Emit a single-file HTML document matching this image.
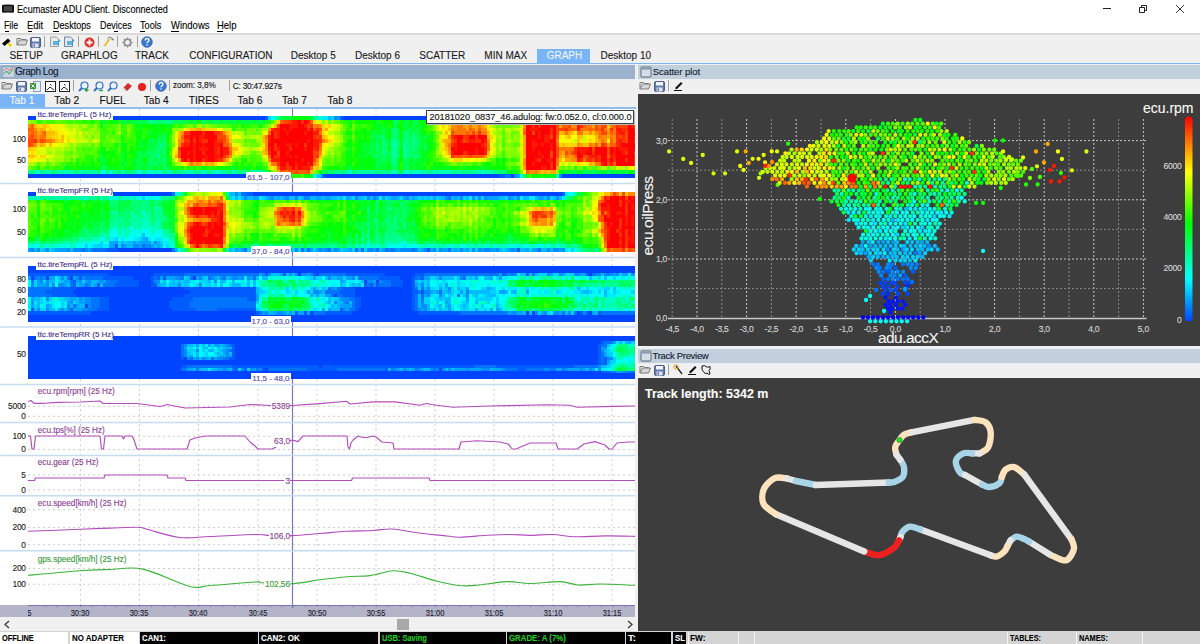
<!DOCTYPE html>
<html><head><meta charset="utf-8"><title>Ecumaster ADU Client</title>
<style>
html,body{margin:0;padding:0;}
body{width:1200px;height:644px;overflow:hidden;position:relative;background:#f0f0f0;font-family:"Liberation Sans", sans-serif;}
.t{position:absolute;white-space:nowrap;line-height:1;font-family:"Liberation Sans", sans-serif;-webkit-text-stroke:0.12px currentColor;}
.b{position:absolute;}
.s{position:absolute;overflow:visible;}
</style></head><body>
<div class="b" style="left:0px;top:0px;width:1200px;height:34px;background:#fff;"></div>
<svg class="s" style="left:1px;top:4px" width="14" height="10"><path d="M1 2Q1 0.8 2.5 0.8Q7 0 11.5 0.8Q13 0.8 13 2V7.5Q13 8.8 11.5 8.8Q7 8 2.5 8.8Q1 8.8 1 7.5Z" fill="#111"/><rect x="2.8" y="2.2" width="8.4" height="5" fill="#454545"/></svg>
<div class="t" style="left:17px;top:3.65px;font-size:11.4px;color:#000;font-weight:normal;letter-spacing:0px;transform:scaleX(0.7997);transform-origin:0 0;">Ecumaster ADU Client. Disconnected</div>
<svg class="s" style="left:1095px;top:0px" width="105" height="20"><path d="M8 8.5h8" stroke="#222" stroke-width="1"/><path d="M44.5 7.5h5v5h-5z M46.5 7.5v-2h5v5h-2" fill="none" stroke="#222" stroke-width="1"/><path d="M81 5l8 8M89 5l-8 8" stroke="#222" stroke-width="0.9"/></svg>
<div class="t" style="left:4.3px;top:20.36px;font-size:10.8px;color:#000;font-weight:normal;letter-spacing:0px;transform:scaleX(0.8103);transform-origin:0 0;">File</div>
<div class="t" style="left:27.3px;top:20.36px;font-size:10.8px;color:#000;font-weight:normal;letter-spacing:0px;transform:scaleX(0.8705);transform-origin:0 0;">Edit</div>
<div class="t" style="left:52.6px;top:20.36px;font-size:10.8px;color:#000;font-weight:normal;letter-spacing:0px;transform:scaleX(0.8419);transform-origin:0 0;">Desktops</div>
<div class="t" style="left:99.6px;top:20.36px;font-size:10.8px;color:#000;font-weight:normal;letter-spacing:0px;transform:scaleX(0.8227);transform-origin:0 0;">Devices</div>
<div class="t" style="left:140px;top:20.36px;font-size:10.8px;color:#000;font-weight:normal;letter-spacing:0px;transform:scaleX(0.8488);transform-origin:0 0;">Tools</div>
<div class="t" style="left:170.5px;top:20.36px;font-size:10.8px;color:#000;font-weight:normal;letter-spacing:0px;transform:scaleX(0.8788);transform-origin:0 0;">Windows</div>
<div class="t" style="left:217px;top:20.36px;font-size:10.8px;color:#000;font-weight:normal;letter-spacing:0px;transform:scaleX(0.8779);transform-origin:0 0;">Help</div>
<div class="b" style="left:4.5px;top:31px;width:4px;height:1px;background:#000;"></div>
<div class="b" style="left:27.5px;top:31px;width:4px;height:1px;background:#000;"></div>
<div class="b" style="left:52.8px;top:31px;width:6px;height:1px;background:#000;"></div>
<div class="b" style="left:114px;top:31px;width:4px;height:1px;background:#000;"></div>
<div class="b" style="left:140.3px;top:31px;width:5px;height:1px;background:#000;"></div>
<div class="b" style="left:170.7px;top:31px;width:8px;height:1px;background:#000;"></div>
<div class="b" style="left:217.3px;top:31px;width:6px;height:1px;background:#000;"></div>
<div class="b" style="left:0px;top:33px;width:1200px;height:1.5px;background:#d9d9d9;"></div>
<div class="b" style="left:0px;top:34.5px;width:1200px;height:29px;background:#f0f0f0;"></div>
<div class="b" style="left:537px;top:49px;width:53px;height:14px;background:#78b4f6;"></div>
<div class="t" style="left:9.5px;top:50.83px;font-size:10px;color:#1a1a1a;font-weight:normal;letter-spacing:0px;">SETUP</div>
<div class="t" style="left:61px;top:50.83px;font-size:10px;color:#1a1a1a;font-weight:normal;letter-spacing:0px;">GRAPHLOG</div>
<div class="t" style="left:135px;top:50.83px;font-size:10px;color:#1a1a1a;font-weight:normal;letter-spacing:0px;">TRACK</div>
<div class="t" style="left:189.3px;top:50.83px;font-size:10px;color:#1a1a1a;font-weight:normal;letter-spacing:0px;">CONFIGURATION</div>
<div class="t" style="left:290.7px;top:50.83px;font-size:10px;color:#1a1a1a;font-weight:normal;letter-spacing:0px;">Desktop 5</div>
<div class="t" style="left:355px;top:50.83px;font-size:10px;color:#1a1a1a;font-weight:normal;letter-spacing:0px;">Desktop 6</div>
<div class="t" style="left:419.3px;top:50.83px;font-size:10px;color:#1a1a1a;font-weight:normal;letter-spacing:0px;">SCATTER</div>
<div class="t" style="left:484.3px;top:50.83px;font-size:10px;color:#1a1a1a;font-weight:normal;letter-spacing:0px;">MIN MAX</div>
<div class="t" style="left:546.7px;top:50.83px;font-size:10px;color:#eef4ff;font-weight:normal;letter-spacing:0px;">GRAPH</div>
<div class="t" style="left:600.5px;top:50.83px;font-size:10px;color:#1a1a1a;font-weight:normal;letter-spacing:0px;">Desktop 10</div>
<div class="b" style="left:0px;top:63.2px;width:1200px;height:1.3px;background:#7db6ee;"></div>
<svg class="s" style="left:1px;top:36px" width="12" height="11" viewBox="0 0 12 11"><path d="M1 7.5l6-5 2.5 2.5-6 5z" fill="#000"/><path d="M7.5 8l3 1.5-1.5 1.5z M7 7.5l3 0.5-1 2z" fill="#f0e020" stroke="#e8d800" stroke-width="1"/></svg>
<svg class="s" style="left:15.5px;top:36px" width="12" height="11" viewBox="0 0 12 11"><path d="M1 2.5h3.5l1 1h4v2" fill="none" stroke="#7a7a7a" stroke-width="1"/><path d="M1 2.5v6.5h8.5l2-5h-8l-2.5 5" fill="#d8d8d8" stroke="#7a7a7a" stroke-width="1"/></svg>
<svg class="s" style="left:30px;top:36.5px" width="11" height="11" viewBox="0 0 11 11"><rect x="0.5" y="0.5" width="10" height="10" rx="1.5" fill="#5f7aa8" stroke="#4a5f8a"/><rect x="2" y="1" width="7" height="3.5" fill="#f2f4f8"/><rect x="2.5" y="6.5" width="6" height="4" fill="#dfe6f0"/><rect x="3.5" y="7.5" width="1.5" height="2" fill="#4a5f8a"/></svg>
<div class="b" style="left:44px;top:36px;width:1px;height:11px;background:#a0a0a0"></div>
<svg class="s" style="left:50px;top:36px" width="11" height="11" viewBox="0 0 11 11"><path d="M0.5 1h6l2 2v7.5h-8z" fill="#e8e8e8" stroke="#a0a0a0" stroke-width="1"/><path d="M3 6h5l2-2M3 8h6" stroke="#30a0d8" stroke-width="1.3" fill="none"/></svg>
<svg class="s" style="left:64px;top:36px" width="11" height="11" viewBox="0 0 11 11"><path d="M0.5 1h6l2 2v7.5h-8z" fill="#e8e8e8" stroke="#6d85b0" stroke-width="1"/><path d="M3 6h5l2-2M3 8h6" stroke="#30a0d8" stroke-width="1.3" fill="none"/></svg>
<div class="b" style="left:78px;top:36px;width:1px;height:11px;background:#a0a0a0"></div>
<svg class="s" style="left:83.5px;top:36.5px" width="11" height="11" viewBox="0 0 11 11"><circle cx="5.5" cy="5.5" r="5" fill="#e0302a"/><path d="M5.5 2.5v6M2.5 5.5h6" stroke="#fff" stroke-width="1.8"/></svg>
<div class="b" style="left:97.5px;top:36px;width:1px;height:11px;background:#a0a0a0"></div>
<svg class="s" style="left:103px;top:36px" width="11" height="11" viewBox="0 0 11 11"><path d="M1.5 10l5-7" stroke="#e8b820" stroke-width="1.8"/><path d="M4.5 2.5l2-1.5 3 1.5 1 1.5-2-0.5" fill="none" stroke="#707070" stroke-width="1"/></svg>
<div class="b" style="left:117px;top:36px;width:1px;height:11px;background:#a0a0a0"></div>
<svg class="s" style="left:122px;top:36.5px" width="11" height="11" viewBox="0 0 11 11"><circle cx="5.5" cy="5.5" r="3.2" fill="none" stroke="#909090" stroke-width="1.6"/><path d="M5.5 0.5v2M5.5 8.5v2M0.5 5.5h2M8.5 5.5h2M2 2l1.4 1.4M7.6 7.6l1.4 1.4M9 2l-1.4 1.4M3.4 7.6l-1.4 1.4" stroke="#909090" stroke-width="1.4"/></svg>
<div class="b" style="left:136.5px;top:36px;width:1px;height:11px;background:#a0a0a0"></div>
<svg class="s" style="left:141px;top:36px" width="12" height="12" viewBox="0 0 12 12"><circle cx="6" cy="6" r="5.3" fill="#3a78d0" stroke="#2a5aa8" stroke-width="0.7"/><path d="M4.2 4.5q0-2 1.9-2t1.9 1.7q0 1-1.2 1.6-0.7 0.4-0.7 1.4" fill="none" stroke="#fff" stroke-width="1.3"/><circle cx="6" cy="9" r="0.8" fill="#fff"/></svg>
<div class="b" style="left:635px;top:64.5px;width:3px;height:567px;background:#f0f0f0;"></div>
<div class="b" style="left:0px;top:64.5px;width:635px;height:14px;background:#9bb2cf;"></div>
<svg class="s" style="left:1.5px;top:65.5px" width="13" height="12" viewBox="0 0 13 12"><rect x="0.5" y="1" width="12" height="10.5" fill="#c8d4e4" stroke="#8896a8" stroke-width="0.6"/><path d="M1.5 8l3-3 2.5 3 4-5" stroke="#30a040" stroke-width="1" fill="none"/><path d="M1.5 4.5l3-2 2.5 2 4-3" stroke="#e04030" stroke-width="1" fill="none" stroke-dasharray="1.5 1"/></svg>
<div class="t" style="left:15px;top:67.13px;font-size:10px;color:#10202e;font-weight:normal;letter-spacing:-0.45px;">Graph Log</div>
<div class="b" style="left:0px;top:78.5px;width:635px;height:29px;background:#f0f0f0;"></div>
<svg class="s" style="left:1px;top:80px" width="12" height="11" viewBox="0 0 12 11"><path d="M1 2.5h3.5l1 1h4v2" fill="none" stroke="#7a7a7a" stroke-width="1"/><path d="M1 2.5v6.5h8.5l2-5h-8l-2.5 5" fill="#d8d8d8" stroke="#7a7a7a" stroke-width="1"/></svg>
<svg class="s" style="left:16px;top:80.5px" width="11" height="11" viewBox="0 0 11 11"><rect x="0.5" y="0.5" width="10" height="10" rx="1.5" fill="#5f7aa8" stroke="#4a5f8a"/><rect x="2" y="1" width="7" height="3.5" fill="#f2f4f8"/><rect x="2.5" y="6.5" width="6" height="4" fill="#dfe6f0"/><rect x="3.5" y="7.5" width="1.5" height="2" fill="#4a5f8a"/></svg>
<svg class="s" style="left:30px;top:80.5px" width="11" height="11" viewBox="0 0 11 11"><rect x="3.5" y="0.5" width="7" height="10" fill="#e6eef8" stroke="#8aa0c0"/><rect x="0" y="2" width="6" height="6" fill="#3a9a3a"/><path d="M1.5 3.5l3 3M4.5 3.5l-3 3" stroke="#fff" stroke-width="1"/></svg>
<svg class="s" style="left:44.5px;top:80.5px" width="11" height="11" viewBox="0 0 11 11"><rect x="0.5" y="0.5" width="10" height="10" fill="#fff" stroke="#222"/><path d="M2 9l3-3 4 3M5 3l1.5 1.5" stroke="#222" stroke-width="1" fill="none"/></svg>
<svg class="s" style="left:58.5px;top:80.5px" width="11" height="11" viewBox="0 0 11 11"><rect x="0.5" y="0.5" width="10" height="10" fill="#fff" stroke="#222"/><path d="M2 9l3-3 4 3M5 3l1.5 1.5" stroke="#222" stroke-width="1" fill="none"/></svg>
<div class="b" style="left:73px;top:80px;width:1px;height:11px;background:#a0a0a0"></div>
<svg class="s" style="left:78px;top:80.5px" width="11" height="11" viewBox="0 0 11 11"><circle cx="6.5" cy="4.5" r="3.5" fill="#e8f0f8" stroke="#3070c0" stroke-width="1.2"/><path d="M4 7l-3 3" stroke="#3070c0" stroke-width="2"/><path d="M6.5 9h4M8.5 7v4" stroke="#20a040" stroke-width="1.3"/></svg>
<svg class="s" style="left:92.5px;top:80.5px" width="11" height="11" viewBox="0 0 11 11"><circle cx="6.5" cy="4.5" r="3.5" fill="#e8f0f8" stroke="#3070c0" stroke-width="1.2"/><path d="M4 7l-3 3" stroke="#3070c0" stroke-width="2"/><path d="M6 9.5h4" stroke="#20a040" stroke-width="1.3"/></svg>
<svg class="s" style="left:106.5px;top:80.5px" width="11" height="11" viewBox="0 0 11 11"><circle cx="6.5" cy="4.5" r="3.5" fill="#e8f0f8" stroke="#3070c0" stroke-width="1.2"/><path d="M4 7l-3 3" stroke="#3070c0" stroke-width="2"/></svg>
<svg class="s" style="left:122px;top:80.5px" width="11" height="11" viewBox="0 0 11 11"><path d="M1 7l5-5 4 3-5 5z" fill="#d03030"/><path d="M1 7l2.5 3" stroke="#ddd" stroke-width="2"/></svg>
<svg class="s" style="left:136.5px;top:81.5px" width="10" height="10" viewBox="0 0 10 10"><circle cx="5" cy="5" r="4" fill="#e82020"/></svg>
<div class="b" style="left:150px;top:80px;width:1px;height:11px;background:#a0a0a0"></div>
<svg class="s" style="left:154.5px;top:80px" width="12" height="12" viewBox="0 0 12 12"><circle cx="6" cy="6" r="5.3" fill="#3a78d0" stroke="#2a5aa8" stroke-width="0.7"/><path d="M4.2 4.5q0-2 1.9-2t1.9 1.7q0 1-1.2 1.6-0.7 0.4-0.7 1.4" fill="none" stroke="#fff" stroke-width="1.3"/><circle cx="6" cy="9" r="0.8" fill="#fff"/></svg>
<div class="b" style="left:169px;top:80px;width:1px;height:11px;background:#a0a0a0"></div>
<div class="b" style="left:228.5px;top:80px;width:1px;height:11px;background:#a0a0a0"></div>
<div class="t" style="left:173px;top:82.36px;font-size:8.2px;color:#111;font-weight:normal;letter-spacing:-0.05px;">zoom: 3,8%</div>
<div class="t" style="left:232.7px;top:82.19px;font-size:8.4px;color:#111;font-weight:normal;letter-spacing:-0.25px;">C: 30:47.927s</div>
<div class="b" style="left:0px;top:93.6px;width:45px;height:13.8px;background:#78b4f6;"></div>
<div class="t" style="left:9.4px;top:95.97px;font-size:10.2px;color:#f4f8ff;font-weight:normal;letter-spacing:0px;">Tab 1</div>
<div class="t" style="left:54.3px;top:95.97px;font-size:10.2px;color:#111;font-weight:normal;letter-spacing:0px;">Tab 2</div>
<div class="t" style="left:99.6px;top:95.97px;font-size:10.2px;color:#111;font-weight:normal;letter-spacing:0px;">FUEL</div>
<div class="t" style="left:143.7px;top:95.97px;font-size:10.2px;color:#111;font-weight:normal;letter-spacing:0px;">Tab 4</div>
<div class="t" style="left:188.8px;top:95.97px;font-size:10.2px;color:#111;font-weight:normal;letter-spacing:0px;">TIRES</div>
<div class="t" style="left:237.5px;top:95.97px;font-size:10.2px;color:#111;font-weight:normal;letter-spacing:0px;">Tab 6</div>
<div class="t" style="left:282px;top:95.97px;font-size:10.2px;color:#111;font-weight:normal;letter-spacing:0px;">Tab 7</div>
<div class="t" style="left:327.4px;top:95.97px;font-size:10.2px;color:#111;font-weight:normal;letter-spacing:0px;">Tab 8</div>
<div class="b" style="left:0px;top:107px;width:636px;height:1.5px;background:#8bbdf0;"></div>
<div class="b" style="left:638px;top:64.5px;width:562px;height:14px;background:#c2cfdd;"></div>
<svg class="s" style="left:639.5px;top:65.5px" width="12" height="12" viewBox="0 0 12 12"><rect x="1" y="1" width="10" height="10" rx="1" fill="#d4dee8" stroke="#5c6c78" stroke-width="1"/><rect x="2" y="2" width="8" height="1.6" fill="#8a9cad"/></svg>
<div class="t" style="left:652.7px;top:67.16px;font-size:9.5px;color:#10202e;font-weight:normal;letter-spacing:-0.05px;">Scatter plot</div>
<div class="b" style="left:638px;top:78.5px;width:562px;height:15.5px;background:#f0f0f0;"></div>
<svg class="s" style="left:638.5px;top:80px" width="12" height="11" viewBox="0 0 12 11"><path d="M1 2.5h3.5l1 1h4v2" fill="none" stroke="#7a7a7a" stroke-width="1"/><path d="M1 2.5v6.5h8.5l2-5h-8l-2.5 5" fill="#d8d8d8" stroke="#7a7a7a" stroke-width="1"/></svg>
<svg class="s" style="left:653.5px;top:80.5px" width="11" height="11" viewBox="0 0 11 11"><rect x="0.5" y="0.5" width="10" height="10" rx="1.5" fill="#5f7aa8" stroke="#4a5f8a"/><rect x="2" y="1" width="7" height="3.5" fill="#f2f4f8"/><rect x="2.5" y="6.5" width="6" height="4" fill="#dfe6f0"/><rect x="3.5" y="7.5" width="1.5" height="2" fill="#4a5f8a"/></svg>
<div class="b" style="left:667.5px;top:80px;width:1px;height:11px;background:#a0a0a0"></div>
<svg class="s" style="left:673px;top:80px" width="11" height="11" viewBox="0 0 11 11"><path d="M2 8l6-6 1.5 1.5-6 6z" fill="#111"/><path d="M1 10.5h8" stroke="#111" stroke-width="1"/></svg>
<div class="b" style="left:638px;top:94px;width:562px;height:251.5px;background:#3d3d3d;"></div>
<div class="b" style="left:638px;top:345.5px;width:562px;height:3px;background:#f0f0f0;"></div>
<div class="b" style="left:638px;top:348.5px;width:562px;height:14px;background:#c2cfdd;"></div>
<svg class="s" style="left:639.5px;top:349.5px" width="12" height="12" viewBox="0 0 12 12"><rect x="1" y="1" width="10" height="10" rx="1" fill="#d4dee8" stroke="#5c6c78" stroke-width="1"/><rect x="2" y="2" width="8" height="1.6" fill="#8a9cad"/></svg>
<div class="t" style="left:652.5px;top:351.26px;font-size:9.5px;color:#10202e;font-weight:normal;letter-spacing:-0.3px;">Track Preview</div>
<div class="b" style="left:638px;top:362.5px;width:562px;height:15.5px;background:#f0f0f0;"></div>
<svg class="s" style="left:638.5px;top:364px" width="12" height="11" viewBox="0 0 12 11"><path d="M1 2.5h3.5l1 1h4v2" fill="none" stroke="#7a7a7a" stroke-width="1"/><path d="M1 2.5v6.5h8.5l2-5h-8l-2.5 5" fill="#d8d8d8" stroke="#7a7a7a" stroke-width="1"/></svg>
<svg class="s" style="left:653.5px;top:364.5px" width="11" height="11" viewBox="0 0 11 11"><rect x="0.5" y="0.5" width="10" height="10" rx="1.5" fill="#5f7aa8" stroke="#4a5f8a"/><rect x="2" y="1" width="7" height="3.5" fill="#f2f4f8"/><rect x="2.5" y="6.5" width="6" height="4" fill="#dfe6f0"/><rect x="3.5" y="7.5" width="1.5" height="2" fill="#4a5f8a"/></svg>
<div class="b" style="left:667.5px;top:364px;width:1px;height:11px;background:#a0a0a0"></div>
<svg class="s" style="left:673px;top:364px" width="11" height="11" viewBox="0 0 11 11"><path d="M3 2l6 8" stroke="#222" stroke-width="1.3"/><circle cx="3" cy="3" r="2.2" fill="none" stroke="#f0a020" stroke-width="1"/></svg>
<svg class="s" style="left:687px;top:364px" width="11" height="11" viewBox="0 0 11 11"><path d="M2 8l6-6 1.5 1.5-6 6z" fill="#111"/><path d="M1 10.5h8" stroke="#111" stroke-width="1"/></svg>
<svg class="s" style="left:701px;top:364px" width="11" height="11" viewBox="0 0 11 11"><path d="M1 2q3-1 4 0.5t4 0q1 3-1 4l1 3.5q-2 1-3-1-2 2-3-1-2-1-2-3z" fill="none" stroke="#111" stroke-width="1"/></svg>
<div class="b" style="left:638px;top:378px;width:562px;height:252.5px;background:#3d3d3d;"></div>
<div class="t" style="left:644.8px;top:388.10px;font-size:12.4px;color:#fafafa;font-weight:bold;letter-spacing:0px;transform:scaleX(1.0067);transform-origin:0 0;">Track length: 5342 m</div>
<div class="b" style="left:0px;top:108.5px;width:635px;height:496.5px;background:#fff;"></div>
<svg class="s" style="left:0;top:0" width="1200" height="644" viewBox="0 0 1200 644"><path d="M80.5,109V605" stroke="#cfcfcf" stroke-width="1" stroke-dasharray="2 3"/><path d="M139.5,109V605" stroke="#cfcfcf" stroke-width="1" stroke-dasharray="2 3"/><path d="M198.5,109V605" stroke="#cfcfcf" stroke-width="1" stroke-dasharray="2 3"/><path d="M258,109V605" stroke="#cfcfcf" stroke-width="1" stroke-dasharray="2 3"/><path d="M317,109V605" stroke="#cfcfcf" stroke-width="1" stroke-dasharray="2 3"/><path d="M376,109V605" stroke="#cfcfcf" stroke-width="1" stroke-dasharray="2 3"/><path d="M435,109V605" stroke="#cfcfcf" stroke-width="1" stroke-dasharray="2 3"/><path d="M494,109V605" stroke="#cfcfcf" stroke-width="1" stroke-dasharray="2 3"/><path d="M553,109V605" stroke="#cfcfcf" stroke-width="1" stroke-dasharray="2 3"/><path d="M612,109V605" stroke="#cfcfcf" stroke-width="1" stroke-dasharray="2 3"/><path d="M292.5,108.5V605" stroke="#7c78bc" stroke-width="1.2"/><path d="M0,183.5H635" stroke="#c4dcf4" stroke-width="1.6"/><path d="M0,257.5H635" stroke="#c4dcf4" stroke-width="1.6"/><path d="M0,327H635" stroke="#c4dcf4" stroke-width="1.6"/><path d="M0,384.5H635" stroke="#c4dcf4" stroke-width="1.6"/><path d="M0,422.5H635" stroke="#c4dcf4" stroke-width="1.6"/><path d="M0,455.5H635" stroke="#c4dcf4" stroke-width="1.6"/><path d="M0,495.8H635" stroke="#c4dcf4" stroke-width="1.6"/><path d="M0,550.8H635" stroke="#c4dcf4" stroke-width="1.6"/><path d="M28,406.3H635" stroke="#cdcdcd" stroke-width="1" stroke-dasharray="2 3"/><path d="M28,416.3H635" stroke="#cdcdcd" stroke-width="1" stroke-dasharray="2 3"/><path d="M28,436.3H635" stroke="#cdcdcd" stroke-width="1" stroke-dasharray="2 3"/><path d="M28,449.5H635" stroke="#cdcdcd" stroke-width="1" stroke-dasharray="2 3"/><path d="M28,475H635" stroke="#cdcdcd" stroke-width="1" stroke-dasharray="2 3"/><path d="M28,490H635" stroke="#cdcdcd" stroke-width="1" stroke-dasharray="2 3"/><path d="M28,509.8H635" stroke="#cdcdcd" stroke-width="1" stroke-dasharray="2 3"/><path d="M28,527.4H635" stroke="#cdcdcd" stroke-width="1" stroke-dasharray="2 3"/><path d="M28,544.7H635" stroke="#cdcdcd" stroke-width="1" stroke-dasharray="2 3"/><path d="M28,568.5H635" stroke="#cdcdcd" stroke-width="1" stroke-dasharray="2 3"/><path d="M28,584.2H635" stroke="#cdcdcd" stroke-width="1" stroke-dasharray="2 3"/><path fill="#0044ff" shape-rendering="crispEdges" d="M28 116.00h237v3.85h-237zM343 116.00h153v3.85h-153zM28 173.75h240v3.85h-240zM325 173.75h174v3.85h-174zM511 173.75h3v3.85h-3zM562 173.75h73v3.85h-73z"/><path fill="#005cff" shape-rendering="crispEdges" d="M265 116.00h3v3.85h-3zM340 116.00h3v3.85h-3zM496 116.00h3v3.85h-3zM322 173.75h3v3.85h-3zM499 173.75h6v3.85h-6z"/><path fill="#00d3ff" shape-rendering="crispEdges" d="M268 116.00h3v3.85h-3zM331 116.00h3v3.85h-3zM316 173.75h3v3.85h-3z"/><path fill="#00fffc" shape-rendering="crispEdges" d="M271 116.00h3v3.85h-3zM508 116.00h6v3.85h-6z"/><path fill="#00ffcc" shape-rendering="crispEdges" d="M274 116.00h3v3.85h-3zM319 116.00h3v3.85h-3zM514 116.00h3v3.85h-3zM613 116.00h3v3.85h-3zM37 169.90h3v3.85h-3zM70 169.90h3v3.85h-3zM79 169.90h3v3.85h-3zM103 169.90h3v3.85h-3zM136 169.90h3v3.85h-3zM148 169.90h6v3.85h-6zM157 169.90h3v3.85h-3zM202 169.90h3v3.85h-3zM214 169.90h6v3.85h-6zM232 169.90h3v3.85h-3zM349 169.90h3v3.85h-3zM394 169.90h3v3.85h-3zM403 169.90h3v3.85h-3zM412 169.90h9v3.85h-9zM433 169.90h3v3.85h-3zM439 169.90h3v3.85h-3zM481 169.90h3v3.85h-3z"/><path fill="#00ff85" shape-rendering="crispEdges" d="M277 116.00h3v3.85h-3zM565 116.00h6v3.85h-6zM589 116.00h3v3.85h-3zM601 116.00h3v3.85h-3zM631 116.00h3v3.85h-3zM148 119.85h6v3.85h-6zM163 119.85h9v3.85h-9zM394 127.55h3v3.85h-3zM394 131.40h3v3.85h-3zM406 131.40h3v3.85h-3zM406 135.25h3v3.85h-3zM382 139.10h3v3.85h-3zM394 139.10h3v3.85h-3zM403 139.10h6v3.85h-6zM412 139.10h6v3.85h-6zM160 142.95h3v3.85h-3zM382 142.95h3v3.85h-3zM406 142.95h3v3.85h-3zM412 142.95h3v3.85h-3zM382 146.80h3v3.85h-3zM406 146.80h3v3.85h-3zM412 146.80h3v3.85h-3zM382 150.65h3v3.85h-3zM391 150.65h3v3.85h-3zM406 150.65h3v3.85h-3zM151 154.50h3v3.85h-3zM391 154.50h3v3.85h-3zM406 154.50h3v3.85h-3zM412 154.50h6v3.85h-6zM163 158.35h3v3.85h-3zM391 158.35h6v3.85h-6zM391 162.20h6v3.85h-6zM406 166.05h3v3.85h-3zM40 169.90h3v3.85h-3zM73 169.90h3v3.85h-3zM106 169.90h3v3.85h-3zM124 169.90h3v3.85h-3zM130 169.90h6v3.85h-6zM142 169.90h3v3.85h-3zM163 169.90h3v3.85h-3zM175 169.90h6v3.85h-6zM196 169.90h3v3.85h-3zM208 169.90h3v3.85h-3zM226 169.90h3v3.85h-3zM238 169.90h6v3.85h-6zM334 169.90h3v3.85h-3zM343 169.90h3v3.85h-3zM361 169.90h3v3.85h-3zM376 169.90h6v3.85h-6zM385 169.90h6v3.85h-6zM409 169.90h3v3.85h-3zM430 169.90h3v3.85h-3zM454 169.90h3v3.85h-3zM460 169.90h3v3.85h-3zM466 169.90h6v3.85h-6zM493 169.90h6v3.85h-6zM502 169.90h3v3.85h-3z"/><path fill="#00ff3d" shape-rendering="crispEdges" d="M280 116.00h12v3.85h-12zM103 119.85h3v3.85h-3zM121 119.85h3v3.85h-3zM130 119.85h9v3.85h-9zM142 119.85h3v3.85h-3zM181 119.85h9v3.85h-9zM205 119.85h9v3.85h-9zM226 119.85h6v3.85h-6zM241 119.85h12v3.85h-12zM256 119.85h3v3.85h-3zM265 119.85h3v3.85h-3zM376 119.85h3v3.85h-3zM397 119.85h3v3.85h-3zM403 119.85h3v3.85h-3zM412 119.85h3v3.85h-3zM382 123.70h3v3.85h-3zM406 123.70h3v3.85h-3zM418 123.70h3v3.85h-3zM382 127.55h3v3.85h-3zM397 127.55h3v3.85h-3zM403 127.55h6v3.85h-6zM412 127.55h9v3.85h-9zM148 131.40h3v3.85h-3zM163 131.40h3v3.85h-3zM373 131.40h6v3.85h-6zM409 131.40h3v3.85h-3zM418 131.40h3v3.85h-3zM157 135.25h6v3.85h-6zM370 135.25h6v3.85h-6zM397 135.25h3v3.85h-3zM409 135.25h3v3.85h-3zM160 139.10h3v3.85h-3zM370 139.10h3v3.85h-3zM139 142.95h3v3.85h-3zM148 142.95h9v3.85h-9zM166 142.95h3v3.85h-3zM364 142.95h3v3.85h-3zM373 142.95h3v3.85h-3zM379 142.95h3v3.85h-3zM400 142.95h3v3.85h-3zM151 146.80h3v3.85h-3zM364 146.80h3v3.85h-3zM370 146.80h6v3.85h-6zM379 146.80h3v3.85h-3zM121 150.65h3v3.85h-3zM136 150.65h3v3.85h-3zM367 150.65h9v3.85h-9zM379 150.65h3v3.85h-3zM100 154.50h3v3.85h-3zM142 154.50h9v3.85h-9zM163 154.50h3v3.85h-3zM364 154.50h3v3.85h-3zM388 154.50h3v3.85h-3zM100 158.35h6v3.85h-6zM121 158.35h3v3.85h-3zM136 158.35h6v3.85h-6zM154 158.35h3v3.85h-3zM376 158.35h6v3.85h-6zM385 158.35h6v3.85h-6zM412 158.35h3v3.85h-3zM424 158.35h3v3.85h-3zM124 162.20h3v3.85h-3zM136 162.20h3v3.85h-3zM145 162.20h3v3.85h-3zM157 162.20h6v3.85h-6zM379 162.20h6v3.85h-6zM412 162.20h3v3.85h-3zM100 166.05h3v3.85h-3zM121 166.05h3v3.85h-3zM136 166.05h6v3.85h-6zM145 166.05h3v3.85h-3zM151 166.05h3v3.85h-3zM232 166.05h3v3.85h-3zM349 166.05h3v3.85h-3zM385 166.05h3v3.85h-3zM403 166.05h3v3.85h-3zM412 166.05h3v3.85h-3zM481 166.05h3v3.85h-3zM325 169.90h3v3.85h-3zM565 169.90h9v3.85h-9zM589 169.90h3v3.85h-3zM595 169.90h6v3.85h-6zM616 169.90h6v3.85h-6zM550 173.75h3v3.85h-3z"/><path fill="#00ff0e" shape-rendering="crispEdges" d="M292 116.00h6v3.85h-6zM301 116.00h6v3.85h-6zM109 119.85h6v3.85h-6zM190 119.85h3v3.85h-3zM196 119.85h3v3.85h-3zM262 119.85h3v3.85h-3zM385 119.85h3v3.85h-3zM409 119.85h3v3.85h-3zM424 119.85h3v3.85h-3zM430 119.85h3v3.85h-3zM502 119.85h3v3.85h-3zM136 123.70h3v3.85h-3zM151 123.70h6v3.85h-6zM160 123.70h9v3.85h-9zM373 123.70h3v3.85h-3zM379 123.70h3v3.85h-3zM397 123.70h3v3.85h-3zM409 123.70h3v3.85h-3zM154 127.55h9v3.85h-9zM370 127.55h3v3.85h-3zM388 127.55h3v3.85h-3zM139 131.40h3v3.85h-3zM160 131.40h3v3.85h-3zM349 131.40h3v3.85h-3zM355 131.40h3v3.85h-3zM364 131.40h6v3.85h-6zM379 131.40h3v3.85h-3zM388 131.40h3v3.85h-3zM400 131.40h3v3.85h-3zM421 131.40h6v3.85h-6zM139 135.25h3v3.85h-3zM148 135.25h9v3.85h-9zM364 135.25h3v3.85h-3zM388 135.25h3v3.85h-3zM430 135.25h3v3.85h-3zM142 139.10h6v3.85h-6zM349 139.10h3v3.85h-3zM358 139.10h6v3.85h-6zM124 142.95h3v3.85h-3zM136 142.95h3v3.85h-3zM349 142.95h3v3.85h-3zM358 142.95h3v3.85h-3zM427 142.95h6v3.85h-6zM103 146.80h3v3.85h-3zM130 146.80h3v3.85h-3zM142 146.80h3v3.85h-3zM166 146.80h3v3.85h-3zM358 146.80h3v3.85h-3zM388 146.80h3v3.85h-3zM103 150.65h3v3.85h-3zM109 150.65h6v3.85h-6zM124 150.65h3v3.85h-3zM130 150.65h6v3.85h-6zM166 150.65h3v3.85h-3zM346 150.65h6v3.85h-6zM355 150.65h3v3.85h-3zM361 150.65h3v3.85h-3zM400 150.65h3v3.85h-3zM421 150.65h3v3.85h-3zM103 154.50h3v3.85h-3zM124 154.50h3v3.85h-3zM346 154.50h6v3.85h-6zM355 154.50h3v3.85h-3zM367 154.50h3v3.85h-3zM400 154.50h3v3.85h-3zM421 154.50h3v3.85h-3zM97 158.35h3v3.85h-3zM124 158.35h3v3.85h-3zM142 158.35h6v3.85h-6zM349 158.35h3v3.85h-3zM358 158.35h15v3.85h-15zM400 158.35h3v3.85h-3zM421 158.35h3v3.85h-3zM502 158.35h3v3.85h-3zM91 162.20h3v3.85h-3zM106 162.20h3v3.85h-3zM133 162.20h3v3.85h-3zM166 162.20h6v3.85h-6zM346 162.20h6v3.85h-6zM355 162.20h3v3.85h-3zM367 162.20h9v3.85h-9zM388 162.20h3v3.85h-3zM433 162.20h3v3.85h-3zM487 162.20h3v3.85h-3zM67 166.05h3v3.85h-3zM79 166.05h6v3.85h-6zM88 166.05h6v3.85h-6zM97 166.05h3v3.85h-3zM109 166.05h3v3.85h-3zM124 166.05h3v3.85h-3zM130 166.05h3v3.85h-3zM154 166.05h3v3.85h-3zM235 166.05h3v3.85h-3zM247 166.05h3v3.85h-3zM256 166.05h3v3.85h-3zM343 166.05h3v3.85h-3zM355 166.05h6v3.85h-6zM364 166.05h12v3.85h-12zM388 166.05h3v3.85h-3zM436 166.05h9v3.85h-9zM466 166.05h6v3.85h-6zM478 166.05h3v3.85h-3zM484 166.05h3v3.85h-3zM499 166.05h6v3.85h-6zM508 169.90h9v3.85h-9zM559 169.90h6v3.85h-6zM577 169.90h3v3.85h-3zM628 169.90h6v3.85h-6zM532 173.75h3v3.85h-3zM547 173.75h3v3.85h-3z"/><path fill="#0aff00" shape-rendering="crispEdges" d="M298 116.00h3v3.85h-3zM91 119.85h3v3.85h-3zM355 119.85h21v3.85h-21zM382 119.85h3v3.85h-3zM388 119.85h3v3.85h-3zM400 119.85h3v3.85h-3zM421 119.85h3v3.85h-3zM427 119.85h3v3.85h-3zM433 119.85h6v3.85h-6zM100 123.70h3v3.85h-3zM142 123.70h9v3.85h-9zM241 123.70h3v3.85h-3zM259 123.70h3v3.85h-3zM349 123.70h3v3.85h-3zM385 123.70h3v3.85h-3zM400 123.70h3v3.85h-3zM421 123.70h6v3.85h-6zM148 127.55h6v3.85h-6zM163 127.55h3v3.85h-3zM169 127.55h3v3.85h-3zM361 127.55h6v3.85h-6zM373 127.55h3v3.85h-3zM400 127.55h3v3.85h-3zM421 127.55h3v3.85h-3zM136 131.40h3v3.85h-3zM154 131.40h3v3.85h-3zM166 131.40h6v3.85h-6zM346 131.40h3v3.85h-3zM358 131.40h6v3.85h-6zM430 131.40h3v3.85h-3zM121 135.25h3v3.85h-3zM136 135.25h3v3.85h-3zM145 135.25h3v3.85h-3zM166 135.25h3v3.85h-3zM358 135.25h3v3.85h-3zM136 139.10h3v3.85h-3zM166 139.10h3v3.85h-3zM364 139.10h6v3.85h-6zM427 139.10h3v3.85h-3zM115 142.95h3v3.85h-3zM346 142.95h3v3.85h-3zM355 142.95h3v3.85h-3zM100 146.80h3v3.85h-3zM121 146.80h6v3.85h-6zM136 146.80h3v3.85h-3zM355 146.80h3v3.85h-3zM430 146.80h3v3.85h-3zM106 150.65h3v3.85h-3zM427 150.65h3v3.85h-3zM109 154.50h9v3.85h-9zM133 154.50h3v3.85h-3zM91 158.35h3v3.85h-3zM106 158.35h6v3.85h-6zM115 158.35h3v3.85h-3zM244 158.35h3v3.85h-3zM346 158.35h3v3.85h-3zM352 158.35h3v3.85h-3zM427 158.35h3v3.85h-3zM496 158.35h3v3.85h-3zM76 162.20h3v3.85h-3zM82 162.20h3v3.85h-3zM109 162.20h12v3.85h-12zM235 162.20h3v3.85h-3zM241 162.20h3v3.85h-3zM358 162.20h3v3.85h-3zM364 162.20h3v3.85h-3zM427 162.20h3v3.85h-3zM439 162.20h3v3.85h-3zM484 162.20h3v3.85h-3zM496 162.20h3v3.85h-3zM502 162.20h3v3.85h-3zM37 166.05h3v3.85h-3zM70 166.05h3v3.85h-3zM76 166.05h3v3.85h-3zM94 166.05h3v3.85h-3zM115 166.05h3v3.85h-3zM127 166.05h3v3.85h-3zM175 166.05h3v3.85h-3zM181 166.05h3v3.85h-3zM187 166.05h3v3.85h-3zM193 166.05h3v3.85h-3zM202 166.05h6v3.85h-6zM217 166.05h15v3.85h-15zM241 166.05h3v3.85h-3zM328 166.05h12v3.85h-12zM352 166.05h3v3.85h-3zM409 166.05h3v3.85h-3zM430 166.05h3v3.85h-3zM451 166.05h9v3.85h-9zM472 166.05h3v3.85h-3zM490 166.05h9v3.85h-9zM268 169.90h3v3.85h-3zM319 169.90h3v3.85h-3zM286 173.75h3v3.85h-3zM304 173.75h6v3.85h-6zM535 173.75h6v3.85h-6zM544 173.75h3v3.85h-3zM553 173.75h3v3.85h-3z"/><path fill="#00ff25" shape-rendering="crispEdges" d="M307 116.00h6v3.85h-6zM100 119.85h3v3.85h-3zM115 119.85h3v3.85h-3zM127 119.85h3v3.85h-3zM199 119.85h3v3.85h-3zM220 119.85h3v3.85h-3zM235 119.85h6v3.85h-6zM253 119.85h3v3.85h-3zM349 119.85h3v3.85h-3zM391 119.85h3v3.85h-3zM418 119.85h3v3.85h-3zM139 123.70h3v3.85h-3zM157 123.70h3v3.85h-3zM169 123.70h3v3.85h-3zM376 123.70h3v3.85h-3zM391 123.70h3v3.85h-3zM415 123.70h3v3.85h-3zM139 127.55h3v3.85h-3zM376 127.55h6v3.85h-6zM385 127.55h3v3.85h-3zM151 131.40h3v3.85h-3zM157 131.40h3v3.85h-3zM370 131.40h3v3.85h-3zM385 131.40h3v3.85h-3zM385 135.25h3v3.85h-3zM400 135.25h3v3.85h-3zM421 135.25h3v3.85h-3zM427 135.25h3v3.85h-3zM139 139.10h3v3.85h-3zM154 139.10h3v3.85h-3zM373 139.10h3v3.85h-3zM379 139.10h3v3.85h-3zM388 139.10h3v3.85h-3zM400 139.10h3v3.85h-3zM421 139.10h6v3.85h-6zM430 139.10h3v3.85h-3zM121 142.95h3v3.85h-3zM142 142.95h6v3.85h-6zM361 142.95h3v3.85h-3zM367 142.95h3v3.85h-3zM388 142.95h3v3.85h-3zM421 142.95h3v3.85h-3zM139 146.80h3v3.85h-3zM145 146.80h3v3.85h-3zM349 146.80h3v3.85h-3zM361 146.80h3v3.85h-3zM367 146.80h3v3.85h-3zM400 146.80h3v3.85h-3zM421 146.80h3v3.85h-3zM427 146.80h3v3.85h-3zM100 150.65h3v3.85h-3zM142 150.65h3v3.85h-3zM358 150.65h3v3.85h-3zM364 150.65h3v3.85h-3zM424 150.65h3v3.85h-3zM121 154.50h3v3.85h-3zM136 154.50h3v3.85h-3zM166 154.50h3v3.85h-3zM358 154.50h6v3.85h-6zM370 154.50h3v3.85h-3zM424 154.50h3v3.85h-3zM130 158.35h6v3.85h-6zM166 158.35h3v3.85h-3zM373 158.35h3v3.85h-3zM397 158.35h3v3.85h-3zM409 158.35h3v3.85h-3zM418 158.35h3v3.85h-3zM100 162.20h6v3.85h-6zM121 162.20h3v3.85h-3zM130 162.20h3v3.85h-3zM142 162.20h3v3.85h-3zM361 162.20h3v3.85h-3zM385 162.20h3v3.85h-3zM397 162.20h3v3.85h-3zM409 162.20h3v3.85h-3zM415 162.20h9v3.85h-9zM64 166.05h3v3.85h-3zM85 166.05h3v3.85h-3zM106 166.05h3v3.85h-3zM112 166.05h3v3.85h-3zM133 166.05h3v3.85h-3zM142 166.05h3v3.85h-3zM160 166.05h3v3.85h-3zM169 166.05h3v3.85h-3zM244 166.05h3v3.85h-3zM259 166.05h3v3.85h-3zM346 166.05h3v3.85h-3zM361 166.05h3v3.85h-3zM379 166.05h6v3.85h-6zM397 166.05h3v3.85h-3zM415 166.05h12v3.85h-12zM433 166.05h3v3.85h-3zM445 166.05h6v3.85h-6zM463 166.05h3v3.85h-3zM475 166.05h3v3.85h-3zM487 166.05h3v3.85h-3zM580 169.90h3v3.85h-3zM601 169.90h6v3.85h-6zM610 169.90h3v3.85h-3zM622 169.90h3v3.85h-3zM310 173.75h3v3.85h-3z"/><path fill="#00ff9c" shape-rendering="crispEdges" d="M313 116.00h3v3.85h-3zM517 116.00h3v3.85h-3zM595 116.00h3v3.85h-3zM604 116.00h3v3.85h-3zM610 116.00h3v3.85h-3zM622 116.00h3v3.85h-3zM412 135.25h3v3.85h-3zM391 139.10h3v3.85h-3zM391 142.95h3v3.85h-3zM403 142.95h3v3.85h-3zM391 146.80h6v3.85h-6zM403 146.80h3v3.85h-3zM403 150.65h3v3.85h-3zM157 154.50h3v3.85h-3zM394 154.50h3v3.85h-3zM403 154.50h3v3.85h-3zM28 169.90h3v3.85h-3zM43 169.90h3v3.85h-3zM49 169.90h3v3.85h-3zM55 169.90h3v3.85h-3zM61 169.90h3v3.85h-3zM67 169.90h3v3.85h-3zM82 169.90h12v3.85h-12zM112 169.90h6v3.85h-6zM181 169.90h6v3.85h-6zM193 169.90h3v3.85h-3zM199 169.90h3v3.85h-3zM205 169.90h3v3.85h-3zM211 169.90h3v3.85h-3zM220 169.90h3v3.85h-3zM235 169.90h3v3.85h-3zM244 169.90h3v3.85h-3zM250 169.90h9v3.85h-9zM337 169.90h3v3.85h-3zM355 169.90h3v3.85h-3zM367 169.90h3v3.85h-3zM373 169.90h3v3.85h-3zM382 169.90h3v3.85h-3zM421 169.90h3v3.85h-3zM427 169.90h3v3.85h-3zM436 169.90h3v3.85h-3zM451 169.90h3v3.85h-3zM463 169.90h3v3.85h-3zM472 169.90h3v3.85h-3zM478 169.90h3v3.85h-3zM487 169.90h3v3.85h-3z"/><path fill="#00ffb4" shape-rendering="crispEdges" d="M316 116.00h3v3.85h-3zM571 116.00h6v3.85h-6zM583 116.00h6v3.85h-6zM592 116.00h3v3.85h-3zM598 116.00h3v3.85h-3zM619 116.00h3v3.85h-3zM625 116.00h3v3.85h-3zM634 116.00h1v3.85h-1zM394 142.95h3v3.85h-3zM394 150.65h3v3.85h-3zM34 169.90h3v3.85h-3zM46 169.90h3v3.85h-3zM58 169.90h3v3.85h-3zM64 169.90h3v3.85h-3zM94 169.90h3v3.85h-3zM121 169.90h3v3.85h-3zM145 169.90h3v3.85h-3zM154 169.90h3v3.85h-3zM160 169.90h3v3.85h-3zM166 169.90h6v3.85h-6zM187 169.90h6v3.85h-6zM223 169.90h3v3.85h-3zM259 169.90h3v3.85h-3zM346 169.90h3v3.85h-3zM358 169.90h3v3.85h-3zM364 169.90h3v3.85h-3zM370 169.90h3v3.85h-3zM391 169.90h3v3.85h-3zM424 169.90h3v3.85h-3zM442 169.90h9v3.85h-9zM457 169.90h3v3.85h-3zM475 169.90h3v3.85h-3zM484 169.90h3v3.85h-3zM490 169.90h3v3.85h-3zM556 173.75h3v3.85h-3z"/><path fill="#00ebff" shape-rendering="crispEdges" d="M322 116.00h6v3.85h-6z"/><path fill="#00bbff" shape-rendering="crispEdges" d="M328 116.00h3v3.85h-3zM505 116.00h3v3.85h-3zM271 173.75h3v3.85h-3zM319 173.75h3v3.85h-3z"/><path fill="#008bff" shape-rendering="crispEdges" d="M334 116.00h3v3.85h-3zM499 116.00h6v3.85h-6zM514 173.75h3v3.85h-3zM559 173.75h3v3.85h-3z"/><path fill="#00a3ff" shape-rendering="crispEdges" d="M337 116.00h3v3.85h-3zM517 173.75h3v3.85h-3z"/><path fill="#00ff55" shape-rendering="crispEdges" d="M520 116.00h3v3.85h-3zM559 116.00h3v3.85h-3zM577 116.00h3v3.85h-3zM628 116.00h3v3.85h-3zM124 119.85h3v3.85h-3zM139 119.85h3v3.85h-3zM145 119.85h3v3.85h-3zM175 119.85h6v3.85h-6zM193 119.85h3v3.85h-3zM214 119.85h6v3.85h-6zM223 119.85h3v3.85h-3zM232 119.85h3v3.85h-3zM259 119.85h3v3.85h-3zM406 119.85h3v3.85h-3zM415 119.85h3v3.85h-3zM394 123.70h3v3.85h-3zM403 123.70h3v3.85h-3zM412 123.70h3v3.85h-3zM409 127.55h3v3.85h-3zM382 131.40h3v3.85h-3zM391 131.40h3v3.85h-3zM397 131.40h3v3.85h-3zM412 131.40h6v3.85h-6zM163 135.25h3v3.85h-3zM376 135.25h3v3.85h-3zM415 135.25h6v3.85h-6zM424 135.25h3v3.85h-3zM148 139.10h6v3.85h-6zM376 139.10h3v3.85h-3zM385 139.10h3v3.85h-3zM409 139.10h3v3.85h-3zM418 139.10h3v3.85h-3zM370 142.95h3v3.85h-3zM418 142.95h3v3.85h-3zM424 142.95h3v3.85h-3zM148 146.80h3v3.85h-3zM154 146.80h3v3.85h-3zM160 146.80h3v3.85h-3zM385 146.80h3v3.85h-3zM397 146.80h3v3.85h-3zM415 146.80h6v3.85h-6zM424 146.80h3v3.85h-3zM139 150.65h3v3.85h-3zM145 150.65h3v3.85h-3zM151 150.65h3v3.85h-3zM160 150.65h3v3.85h-3zM376 150.65h3v3.85h-3zM388 150.65h3v3.85h-3zM397 150.65h3v3.85h-3zM412 150.65h9v3.85h-9zM139 154.50h3v3.85h-3zM154 154.50h3v3.85h-3zM160 154.50h3v3.85h-3zM373 154.50h3v3.85h-3zM379 154.50h9v3.85h-9zM409 154.50h3v3.85h-3zM418 154.50h3v3.85h-3zM151 158.35h3v3.85h-3zM160 158.35h3v3.85h-3zM403 158.35h3v3.85h-3zM415 158.35h3v3.85h-3zM139 162.20h3v3.85h-3zM148 162.20h3v3.85h-3zM376 162.20h3v3.85h-3zM403 162.20h6v3.85h-6zM148 166.05h3v3.85h-3zM157 166.05h3v3.85h-3zM166 166.05h3v3.85h-3zM376 166.05h3v3.85h-3zM391 166.05h3v3.85h-3zM247 169.90h3v3.85h-3zM265 169.90h3v3.85h-3zM400 169.90h3v3.85h-3zM505 169.90h3v3.85h-3zM574 169.90h3v3.85h-3zM586 169.90h3v3.85h-3zM613 169.90h3v3.85h-3zM625 169.90h3v3.85h-3zM634 169.90h1v3.85h-1zM277 173.75h3v3.85h-3z"/><path fill="#81ff00" shape-rendering="crispEdges" d="M523 116.00h3v3.85h-3zM31 119.85h6v3.85h-6zM322 119.85h3v3.85h-3zM451 119.85h6v3.85h-6zM460 119.85h3v3.85h-3zM475 119.85h3v3.85h-3zM481 119.85h3v3.85h-3zM79 123.70h3v3.85h-3zM118 123.70h3v3.85h-3zM190 123.70h3v3.85h-3zM208 123.70h3v3.85h-3zM268 123.70h3v3.85h-3zM433 123.70h3v3.85h-3zM499 123.70h3v3.85h-3zM511 123.70h9v3.85h-9zM82 127.55h3v3.85h-3zM88 127.55h3v3.85h-3zM118 127.55h3v3.85h-3zM127 127.55h3v3.85h-3zM175 127.55h3v3.85h-3zM247 127.55h3v3.85h-3zM253 127.55h3v3.85h-3zM259 127.55h3v3.85h-3zM340 127.55h3v3.85h-3zM433 127.55h3v3.85h-3zM94 131.40h3v3.85h-3zM127 131.40h3v3.85h-3zM172 131.40h3v3.85h-3zM247 131.40h6v3.85h-6zM259 131.40h3v3.85h-3zM499 131.40h3v3.85h-3zM517 131.40h3v3.85h-3zM85 135.25h3v3.85h-3zM505 135.25h3v3.85h-3zM517 135.25h3v3.85h-3zM112 139.10h3v3.85h-3zM496 139.10h3v3.85h-3zM511 139.10h6v3.85h-6zM70 142.95h3v3.85h-3zM76 142.95h6v3.85h-6zM88 142.95h3v3.85h-3zM94 142.95h3v3.85h-3zM247 142.95h3v3.85h-3zM496 142.95h3v3.85h-3zM505 142.95h6v3.85h-6zM70 146.80h3v3.85h-3zM334 146.80h3v3.85h-3zM436 146.80h3v3.85h-3zM496 146.80h3v3.85h-3zM511 146.80h6v3.85h-6zM73 150.65h3v3.85h-3zM256 150.65h3v3.85h-3zM328 150.65h3v3.85h-3zM337 150.65h3v3.85h-3zM496 150.65h6v3.85h-6zM505 150.65h12v3.85h-12zM64 154.50h9v3.85h-9zM76 154.50h3v3.85h-3zM325 154.50h3v3.85h-3zM331 154.50h3v3.85h-3zM436 154.50h3v3.85h-3zM517 154.50h3v3.85h-3zM67 158.35h3v3.85h-3zM73 158.35h3v3.85h-3zM232 158.35h3v3.85h-3zM322 158.35h3v3.85h-3zM442 158.35h3v3.85h-3zM487 158.35h3v3.85h-3zM40 162.20h3v3.85h-3zM229 162.20h3v3.85h-3zM451 162.20h6v3.85h-6zM565 166.05h3v3.85h-3zM571 166.05h3v3.85h-3zM598 166.05h3v3.85h-3zM613 166.05h3v3.85h-3zM271 169.90h3v3.85h-3zM313 169.90h3v3.85h-3zM520 169.90h3v3.85h-3z"/><path fill="#ffa700" shape-rendering="crispEdges" d="M526 116.00h3v3.85h-3zM538 116.00h3v3.85h-3zM547 116.00h3v3.85h-3zM568 119.85h3v3.85h-3zM583 119.85h9v3.85h-9zM598 119.85h3v3.85h-3zM610 119.85h6v3.85h-6zM463 123.70h6v3.85h-6zM472 123.70h6v3.85h-6zM481 123.70h3v3.85h-3zM559 123.70h3v3.85h-3zM592 123.70h3v3.85h-3zM40 127.55h3v3.85h-3zM196 127.55h6v3.85h-6zM268 127.55h3v3.85h-3zM325 127.55h3v3.85h-3zM466 127.55h3v3.85h-3zM475 127.55h3v3.85h-3zM607 127.55h3v3.85h-3zM37 131.40h3v3.85h-3zM562 131.40h3v3.85h-3zM568 131.40h3v3.85h-3zM523 135.25h3v3.85h-3zM607 135.25h3v3.85h-3zM325 139.10h3v3.85h-3zM445 139.10h6v3.85h-6zM523 139.10h3v3.85h-3zM598 139.10h3v3.85h-3zM40 142.95h3v3.85h-3zM445 142.95h3v3.85h-3zM523 142.95h3v3.85h-3zM580 142.95h3v3.85h-3zM598 142.95h3v3.85h-3zM523 146.80h3v3.85h-3zM265 150.65h3v3.85h-3zM448 150.65h3v3.85h-3zM523 150.65h3v3.85h-3zM562 150.65h3v3.85h-3zM175 154.50h3v3.85h-3zM559 154.50h3v3.85h-3zM178 158.35h3v3.85h-3zM226 158.35h3v3.85h-3zM565 158.35h6v3.85h-6zM193 162.20h3v3.85h-3zM199 162.20h3v3.85h-3zM205 162.20h3v3.85h-3zM211 162.20h3v3.85h-3zM316 162.20h3v3.85h-3zM589 162.20h3v3.85h-3zM523 166.05h3v3.85h-3zM556 166.05h3v3.85h-3zM277 169.90h3v3.85h-3zM538 169.90h3v3.85h-3zM544 169.90h3v3.85h-3zM550 169.90h6v3.85h-6z"/><path fill="#ff8f00" shape-rendering="crispEdges" d="M529 116.00h3v3.85h-3zM523 119.85h3v3.85h-3zM565 119.85h3v3.85h-3zM595 119.85h3v3.85h-3zM619 119.85h3v3.85h-3zM625 119.85h3v3.85h-3zM28 123.70h3v3.85h-3zM313 123.70h3v3.85h-3zM319 123.70h3v3.85h-3zM451 123.70h6v3.85h-6zM523 123.70h3v3.85h-3zM571 123.70h6v3.85h-6zM34 127.55h3v3.85h-3zM454 127.55h3v3.85h-3zM481 127.55h6v3.85h-6zM40 131.40h3v3.85h-3zM181 131.40h3v3.85h-3zM223 131.40h3v3.85h-3zM589 131.40h3v3.85h-3zM595 131.40h3v3.85h-3zM607 131.40h3v3.85h-3zM37 135.25h3v3.85h-3zM226 135.25h3v3.85h-3zM448 135.25h3v3.85h-3zM601 135.25h6v3.85h-6zM613 135.25h3v3.85h-3zM52 139.10h3v3.85h-3zM178 139.10h3v3.85h-3zM265 139.10h3v3.85h-3zM487 139.10h3v3.85h-3zM604 139.10h3v3.85h-3zM613 139.10h3v3.85h-3zM34 142.95h3v3.85h-3zM178 142.95h3v3.85h-3zM229 142.95h3v3.85h-3zM265 142.95h3v3.85h-3zM577 142.95h3v3.85h-3zM592 142.95h3v3.85h-3zM607 142.95h3v3.85h-3zM265 146.80h3v3.85h-3zM448 146.80h3v3.85h-3zM319 150.65h3v3.85h-3zM559 150.65h3v3.85h-3zM229 154.50h3v3.85h-3zM484 154.50h3v3.85h-3zM568 154.50h6v3.85h-6zM268 158.35h3v3.85h-3zM316 158.35h3v3.85h-3zM523 158.35h3v3.85h-3zM571 158.35h6v3.85h-6zM196 162.20h3v3.85h-3zM523 162.20h3v3.85h-3zM529 169.90h6v3.85h-6z"/><path fill="#ffee00" shape-rendering="crispEdges" d="M532 116.00h3v3.85h-3zM607 119.85h3v3.85h-3zM49 123.70h9v3.85h-9zM61 123.70h3v3.85h-3zM325 123.70h3v3.85h-3zM487 123.70h3v3.85h-3zM46 127.55h3v3.85h-3zM52 127.55h6v3.85h-6zM184 127.55h3v3.85h-3zM442 127.55h6v3.85h-6zM487 127.55h3v3.85h-3zM520 127.55h3v3.85h-3zM58 131.40h6v3.85h-6zM448 131.40h3v3.85h-3zM574 131.40h3v3.85h-3zM58 135.25h3v3.85h-3zM64 135.25h3v3.85h-3zM175 135.25h3v3.85h-3zM442 135.25h6v3.85h-6zM559 135.25h3v3.85h-3zM586 135.25h9v3.85h-9zM73 139.10h3v3.85h-3zM331 139.10h3v3.85h-3zM490 139.10h3v3.85h-3zM580 139.10h3v3.85h-3zM586 139.10h3v3.85h-3zM592 139.10h3v3.85h-3zM607 139.10h3v3.85h-3zM262 142.95h3v3.85h-3zM322 142.95h3v3.85h-3zM442 142.95h3v3.85h-3zM175 146.80h3v3.85h-3zM490 146.80h3v3.85h-3zM28 150.65h3v3.85h-3zM34 150.65h3v3.85h-3zM238 150.65h3v3.85h-3zM265 154.50h3v3.85h-3zM448 154.50h3v3.85h-3zM28 158.35h6v3.85h-6zM229 158.35h3v3.85h-3zM319 158.35h3v3.85h-3zM451 158.35h3v3.85h-3zM466 158.35h3v3.85h-3zM562 158.35h3v3.85h-3zM184 162.20h3v3.85h-3zM580 162.20h3v3.85h-3zM271 166.05h3v3.85h-3zM628 166.05h3v3.85h-3z"/><path fill="#ffd600" shape-rendering="crispEdges" d="M535 116.00h3v3.85h-3zM541 116.00h6v3.85h-6zM550 116.00h3v3.85h-3zM277 119.85h3v3.85h-3zM313 119.85h3v3.85h-3zM571 119.85h3v3.85h-3zM592 119.85h3v3.85h-3zM37 123.70h6v3.85h-6zM46 123.70h3v3.85h-3zM322 123.70h3v3.85h-3zM328 123.70h3v3.85h-3zM442 123.70h3v3.85h-3zM448 123.70h3v3.85h-3zM607 123.70h3v3.85h-3zM49 127.55h3v3.85h-3zM187 127.55h3v3.85h-3zM205 127.55h12v3.85h-12zM322 127.55h3v3.85h-3zM55 131.40h3v3.85h-3zM229 131.40h3v3.85h-3zM322 131.40h3v3.85h-3zM52 135.25h6v3.85h-6zM229 135.25h3v3.85h-3zM325 135.25h3v3.85h-3zM490 135.25h3v3.85h-3zM565 135.25h3v3.85h-3zM58 139.10h3v3.85h-3zM67 139.10h3v3.85h-3zM328 139.10h3v3.85h-3zM589 139.10h3v3.85h-3zM37 142.95h3v3.85h-3zM559 142.95h3v3.85h-3zM565 142.95h12v3.85h-12zM31 146.80h6v3.85h-6zM262 146.80h3v3.85h-3zM442 146.80h3v3.85h-3zM31 150.65h3v3.85h-3zM175 150.65h3v3.85h-3zM232 150.65h3v3.85h-3zM445 150.65h3v3.85h-3zM34 154.50h3v3.85h-3zM40 154.50h6v3.85h-6zM487 154.50h3v3.85h-3zM454 158.35h9v3.85h-9zM202 162.20h3v3.85h-3zM214 162.20h3v3.85h-3zM268 162.20h3v3.85h-3zM577 162.20h3v3.85h-3zM274 166.05h3v3.85h-3zM313 166.05h3v3.85h-3z"/><path fill="#ffbe00" shape-rendering="crispEdges" d="M553 116.00h3v3.85h-3zM559 119.85h6v3.85h-6zM574 119.85h3v3.85h-3zM580 119.85h3v3.85h-3zM634 119.85h1v3.85h-1zM34 123.70h3v3.85h-3zM43 123.70h3v3.85h-3zM274 123.70h3v3.85h-3zM484 123.70h3v3.85h-3zM37 127.55h3v3.85h-3zM43 127.55h3v3.85h-3zM190 127.55h6v3.85h-6zM202 127.55h3v3.85h-3zM448 127.55h3v3.85h-3zM46 131.40h9v3.85h-9zM178 131.40h3v3.85h-3zM226 131.40h3v3.85h-3zM445 131.40h3v3.85h-3zM487 131.40h3v3.85h-3zM559 131.40h3v3.85h-3zM571 131.40h3v3.85h-3zM583 131.40h6v3.85h-6zM592 131.40h3v3.85h-3zM46 135.25h6v3.85h-6zM61 135.25h3v3.85h-3zM178 135.25h3v3.85h-3zM262 135.25h3v3.85h-3zM322 135.25h3v3.85h-3zM487 135.25h3v3.85h-3zM568 135.25h3v3.85h-3zM577 135.25h6v3.85h-6zM595 135.25h3v3.85h-3zM55 139.10h3v3.85h-3zM61 139.10h3v3.85h-3zM229 139.10h3v3.85h-3zM262 139.10h3v3.85h-3zM442 139.10h3v3.85h-3zM577 139.10h3v3.85h-3zM595 139.10h3v3.85h-3zM43 142.95h3v3.85h-3zM49 142.95h3v3.85h-3zM562 142.95h3v3.85h-3zM583 142.95h6v3.85h-6zM28 146.80h3v3.85h-3zM232 146.80h6v3.85h-6zM445 146.80h3v3.85h-3zM262 150.65h3v3.85h-3zM487 150.65h3v3.85h-3zM28 154.50h6v3.85h-6zM319 154.50h3v3.85h-3zM523 154.50h3v3.85h-3zM562 154.50h3v3.85h-3zM559 158.35h3v3.85h-3zM187 162.20h3v3.85h-3zM208 162.20h3v3.85h-3zM592 162.20h3v3.85h-3zM316 166.05h3v3.85h-3zM310 169.90h3v3.85h-3zM541 169.90h3v3.85h-3zM547 169.90h3v3.85h-3z"/><path fill="#99ff00" shape-rendering="crispEdges" d="M556 116.00h3v3.85h-3zM28 119.85h3v3.85h-3zM274 119.85h3v3.85h-3zM331 119.85h3v3.85h-3zM457 119.85h3v3.85h-3zM472 119.85h3v3.85h-3zM478 119.85h3v3.85h-3zM70 123.70h3v3.85h-3zM85 123.70h3v3.85h-3zM94 123.70h3v3.85h-3zM196 123.70h6v3.85h-6zM205 123.70h3v3.85h-3zM340 123.70h3v3.85h-3zM493 123.70h3v3.85h-3zM79 127.55h3v3.85h-3zM91 127.55h6v3.85h-6zM172 127.55h3v3.85h-3zM178 127.55h3v3.85h-3zM262 127.55h3v3.85h-3zM496 127.55h3v3.85h-3zM511 127.55h3v3.85h-3zM82 131.40h3v3.85h-3zM88 131.40h6v3.85h-6zM97 131.40h3v3.85h-3zM118 131.40h3v3.85h-3zM334 131.40h6v3.85h-6zM436 131.40h6v3.85h-6zM496 131.40h3v3.85h-3zM505 131.40h3v3.85h-3zM94 135.25h6v3.85h-6zM172 135.25h3v3.85h-3zM244 135.25h6v3.85h-6zM340 135.25h3v3.85h-3zM496 135.25h3v3.85h-3zM508 135.25h3v3.85h-3zM514 135.25h3v3.85h-3zM88 139.10h3v3.85h-3zM172 139.10h3v3.85h-3zM235 139.10h9v3.85h-9zM256 139.10h3v3.85h-3zM340 139.10h3v3.85h-3zM436 139.10h3v3.85h-3zM499 139.10h3v3.85h-3zM505 139.10h3v3.85h-3zM517 139.10h3v3.85h-3zM241 142.95h3v3.85h-3zM259 142.95h3v3.85h-3zM334 142.95h6v3.85h-6zM64 146.80h6v3.85h-6zM73 146.80h3v3.85h-3zM250 146.80h3v3.85h-3zM331 146.80h3v3.85h-3zM505 146.80h6v3.85h-6zM49 150.65h3v3.85h-3zM55 150.65h9v3.85h-9zM244 150.65h6v3.85h-6zM259 150.65h3v3.85h-3zM436 150.65h3v3.85h-3zM517 150.65h3v3.85h-3zM73 154.50h3v3.85h-3zM238 154.50h3v3.85h-3zM493 154.50h3v3.85h-3zM508 154.50h3v3.85h-3zM46 158.35h3v3.85h-3zM55 158.35h9v3.85h-9zM172 158.35h3v3.85h-3zM262 158.35h3v3.85h-3zM445 158.35h3v3.85h-3zM34 162.20h3v3.85h-3zM43 162.20h3v3.85h-3zM52 162.20h3v3.85h-3zM175 162.20h3v3.85h-3zM226 162.20h3v3.85h-3zM517 162.20h3v3.85h-3zM610 166.05h3v3.85h-3zM625 166.05h3v3.85h-3zM274 169.90h3v3.85h-3zM556 169.90h3v3.85h-3z"/><path fill="#00ff6d" shape-rendering="crispEdges" d="M562 116.00h3v3.85h-3zM580 116.00h3v3.85h-3zM616 116.00h3v3.85h-3zM154 119.85h9v3.85h-9zM172 119.85h3v3.85h-3zM202 119.85h3v3.85h-3zM394 119.85h3v3.85h-3zM391 127.55h3v3.85h-3zM403 131.40h3v3.85h-3zM379 135.25h6v3.85h-6zM391 135.25h6v3.85h-6zM403 135.25h3v3.85h-3zM157 139.10h3v3.85h-3zM163 139.10h3v3.85h-3zM397 139.10h3v3.85h-3zM157 142.95h3v3.85h-3zM163 142.95h3v3.85h-3zM376 142.95h3v3.85h-3zM385 142.95h3v3.85h-3zM397 142.95h3v3.85h-3zM409 142.95h3v3.85h-3zM415 142.95h3v3.85h-3zM157 146.80h3v3.85h-3zM163 146.80h3v3.85h-3zM376 146.80h3v3.85h-3zM409 146.80h3v3.85h-3zM148 150.65h3v3.85h-3zM154 150.65h6v3.85h-6zM163 150.65h3v3.85h-3zM385 150.65h3v3.85h-3zM409 150.65h3v3.85h-3zM376 154.50h3v3.85h-3zM397 154.50h3v3.85h-3zM148 158.35h3v3.85h-3zM157 158.35h3v3.85h-3zM382 158.35h3v3.85h-3zM406 158.35h3v3.85h-3zM151 162.20h6v3.85h-6zM163 162.20h3v3.85h-3zM103 166.05h3v3.85h-3zM163 166.05h3v3.85h-3zM394 166.05h3v3.85h-3zM31 169.90h3v3.85h-3zM52 169.90h3v3.85h-3zM76 169.90h3v3.85h-3zM97 169.90h3v3.85h-3zM118 169.90h3v3.85h-3zM127 169.90h3v3.85h-3zM172 169.90h3v3.85h-3zM229 169.90h3v3.85h-3zM262 169.90h3v3.85h-3zM322 169.90h3v3.85h-3zM328 169.90h6v3.85h-6zM340 169.90h3v3.85h-3zM352 169.90h3v3.85h-3zM397 169.90h3v3.85h-3zM499 169.90h3v3.85h-3zM583 169.90h3v3.85h-3zM592 169.90h3v3.85h-3zM607 169.90h3v3.85h-3zM523 173.75h3v3.85h-3z"/><path fill="#00ffe4" shape-rendering="crispEdges" d="M607 116.00h3v3.85h-3zM100 169.90h3v3.85h-3zM109 169.90h3v3.85h-3zM139 169.90h3v3.85h-3zM406 169.90h3v3.85h-3zM274 173.75h3v3.85h-3zM313 173.75h3v3.85h-3zM520 173.75h3v3.85h-3z"/><path fill="#22ff00" shape-rendering="crispEdges" d="M37 119.85h3v3.85h-3zM82 119.85h6v3.85h-6zM106 119.85h3v3.85h-3zM118 119.85h3v3.85h-3zM268 119.85h3v3.85h-3zM343 119.85h6v3.85h-6zM379 119.85h3v3.85h-3zM490 119.85h3v3.85h-3zM496 119.85h3v3.85h-3zM121 123.70h3v3.85h-3zM133 123.70h3v3.85h-3zM172 123.70h3v3.85h-3zM178 123.70h3v3.85h-3zM232 123.70h6v3.85h-6zM244 123.70h6v3.85h-6zM358 123.70h3v3.85h-3zM367 123.70h6v3.85h-6zM388 123.70h3v3.85h-3zM103 127.55h3v3.85h-3zM133 127.55h6v3.85h-6zM142 127.55h6v3.85h-6zM166 127.55h3v3.85h-3zM232 127.55h3v3.85h-3zM346 127.55h3v3.85h-3zM355 127.55h6v3.85h-6zM424 127.55h3v3.85h-3zM112 131.40h3v3.85h-3zM124 131.40h3v3.85h-3zM133 131.40h3v3.85h-3zM142 131.40h6v3.85h-6zM349 135.25h3v3.85h-3zM355 135.25h3v3.85h-3zM361 135.25h3v3.85h-3zM367 135.25h3v3.85h-3zM121 139.10h3v3.85h-3zM127 139.10h6v3.85h-6zM346 139.10h3v3.85h-3zM355 139.10h3v3.85h-3zM100 142.95h3v3.85h-3zM130 142.95h6v3.85h-6zM343 142.95h3v3.85h-3zM352 142.95h3v3.85h-3zM433 142.95h3v3.85h-3zM109 146.80h9v3.85h-9zM133 146.80h3v3.85h-3zM169 146.80h3v3.85h-3zM346 146.80h3v3.85h-3zM433 146.80h3v3.85h-3zM97 150.65h3v3.85h-3zM115 150.65h3v3.85h-3zM127 150.65h3v3.85h-3zM343 150.65h3v3.85h-3zM352 150.65h3v3.85h-3zM430 150.65h3v3.85h-3zM85 154.50h9v3.85h-9zM106 154.50h3v3.85h-3zM118 154.50h3v3.85h-3zM127 154.50h6v3.85h-6zM169 154.50h3v3.85h-3zM343 154.50h3v3.85h-3zM352 154.50h3v3.85h-3zM427 154.50h6v3.85h-6zM76 158.35h3v3.85h-3zM85 158.35h6v3.85h-6zM112 158.35h3v3.85h-3zM118 158.35h3v3.85h-3zM127 158.35h3v3.85h-3zM169 158.35h3v3.85h-3zM241 158.35h3v3.85h-3zM343 158.35h3v3.85h-3zM355 158.35h3v3.85h-3zM430 158.35h3v3.85h-3zM499 158.35h3v3.85h-3zM505 158.35h3v3.85h-3zM511 158.35h3v3.85h-3zM67 162.20h6v3.85h-6zM85 162.20h6v3.85h-6zM94 162.20h6v3.85h-6zM127 162.20h3v3.85h-3zM247 162.20h6v3.85h-6zM256 162.20h6v3.85h-6zM340 162.20h3v3.85h-3zM400 162.20h3v3.85h-3zM424 162.20h3v3.85h-3zM436 162.20h3v3.85h-3zM442 162.20h3v3.85h-3zM481 162.20h3v3.85h-3zM490 162.20h3v3.85h-3zM499 162.20h3v3.85h-3zM46 166.05h3v3.85h-3zM55 166.05h3v3.85h-3zM73 166.05h3v3.85h-3zM118 166.05h3v3.85h-3zM172 166.05h3v3.85h-3zM178 166.05h3v3.85h-3zM199 166.05h3v3.85h-3zM208 166.05h9v3.85h-9zM238 166.05h3v3.85h-3zM250 166.05h6v3.85h-6zM262 166.05h3v3.85h-3zM325 166.05h3v3.85h-3zM400 166.05h3v3.85h-3zM460 166.05h3v3.85h-3zM505 166.05h3v3.85h-3zM511 166.05h6v3.85h-6zM574 166.05h3v3.85h-3zM583 166.05h3v3.85h-3zM517 169.90h3v3.85h-3zM289 173.75h6v3.85h-6zM298 173.75h3v3.85h-3zM526 173.75h3v3.85h-3zM541 173.75h3v3.85h-3z"/><path fill="#3aff00" shape-rendering="crispEdges" d="M40 119.85h3v3.85h-3zM46 119.85h3v3.85h-3zM52 119.85h3v3.85h-3zM67 119.85h6v3.85h-6zM76 119.85h6v3.85h-6zM88 119.85h3v3.85h-3zM94 119.85h6v3.85h-6zM340 119.85h3v3.85h-3zM352 119.85h3v3.85h-3zM439 119.85h3v3.85h-3zM499 119.85h3v3.85h-3zM505 119.85h3v3.85h-3zM514 119.85h6v3.85h-6zM103 123.70h9v3.85h-9zM124 123.70h3v3.85h-3zM181 123.70h3v3.85h-3zM193 123.70h3v3.85h-3zM229 123.70h3v3.85h-3zM250 123.70h9v3.85h-9zM262 123.70h3v3.85h-3zM346 123.70h3v3.85h-3zM355 123.70h3v3.85h-3zM361 123.70h6v3.85h-6zM427 123.70h6v3.85h-6zM100 127.55h3v3.85h-3zM112 127.55h3v3.85h-3zM121 127.55h6v3.85h-6zM244 127.55h3v3.85h-3zM349 127.55h3v3.85h-3zM367 127.55h3v3.85h-3zM427 127.55h3v3.85h-3zM100 131.40h9v3.85h-9zM121 131.40h3v3.85h-3zM130 131.40h3v3.85h-3zM343 131.40h3v3.85h-3zM352 131.40h3v3.85h-3zM427 131.40h3v3.85h-3zM433 131.40h3v3.85h-3zM100 135.25h6v3.85h-6zM124 135.25h3v3.85h-3zM130 135.25h6v3.85h-6zM142 135.25h3v3.85h-3zM169 135.25h3v3.85h-3zM343 135.25h6v3.85h-6zM433 135.25h3v3.85h-3zM100 139.10h3v3.85h-3zM124 139.10h3v3.85h-3zM133 139.10h3v3.85h-3zM169 139.10h3v3.85h-3zM352 139.10h3v3.85h-3zM433 139.10h3v3.85h-3zM106 142.95h3v3.85h-3zM112 142.95h3v3.85h-3zM118 142.95h3v3.85h-3zM127 142.95h3v3.85h-3zM169 142.95h3v3.85h-3zM502 142.95h3v3.85h-3zM82 146.80h3v3.85h-3zM88 146.80h3v3.85h-3zM97 146.80h3v3.85h-3zM127 146.80h3v3.85h-3zM352 146.80h3v3.85h-3zM118 150.65h3v3.85h-3zM433 150.65h3v3.85h-3zM502 150.65h3v3.85h-3zM97 154.50h3v3.85h-3zM250 154.50h3v3.85h-3zM340 154.50h3v3.85h-3zM433 154.50h3v3.85h-3zM502 154.50h3v3.85h-3zM70 158.35h3v3.85h-3zM79 158.35h6v3.85h-6zM250 158.35h6v3.85h-6zM334 158.35h3v3.85h-3zM340 158.35h3v3.85h-3zM433 158.35h6v3.85h-6zM514 158.35h3v3.85h-3zM61 162.20h6v3.85h-6zM73 162.20h3v3.85h-3zM79 162.20h3v3.85h-3zM232 162.20h3v3.85h-3zM238 162.20h3v3.85h-3zM244 162.20h3v3.85h-3zM334 162.20h6v3.85h-6zM343 162.20h3v3.85h-3zM352 162.20h3v3.85h-3zM430 162.20h3v3.85h-3zM445 162.20h3v3.85h-3zM472 162.20h6v3.85h-6zM493 162.20h3v3.85h-3zM34 166.05h3v3.85h-3zM43 166.05h3v3.85h-3zM52 166.05h3v3.85h-3zM58 166.05h6v3.85h-6zM190 166.05h3v3.85h-3zM196 166.05h3v3.85h-3zM265 166.05h3v3.85h-3zM322 166.05h3v3.85h-3zM340 166.05h3v3.85h-3zM427 166.05h3v3.85h-3zM517 166.05h3v3.85h-3zM283 173.75h3v3.85h-3zM295 173.75h3v3.85h-3zM529 173.75h3v3.85h-3z"/><path fill="#69ff00" shape-rendering="crispEdges" d="M43 119.85h3v3.85h-3zM55 119.85h6v3.85h-6zM328 119.85h3v3.85h-3zM334 119.85h6v3.85h-6zM463 119.85h9v3.85h-9zM484 119.85h3v3.85h-3zM493 119.85h3v3.85h-3zM511 119.85h3v3.85h-3zM88 123.70h6v3.85h-6zM127 123.70h3v3.85h-3zM187 123.70h3v3.85h-3zM202 123.70h3v3.85h-3zM211 123.70h6v3.85h-6zM265 123.70h3v3.85h-3zM352 123.70h3v3.85h-3zM496 123.70h3v3.85h-3zM502 123.70h9v3.85h-9zM85 127.55h3v3.85h-3zM97 127.55h3v3.85h-3zM115 127.55h3v3.85h-3zM238 127.55h3v3.85h-3zM250 127.55h3v3.85h-3zM343 127.55h3v3.85h-3zM352 127.55h3v3.85h-3zM502 127.55h3v3.85h-3zM115 131.40h3v3.85h-3zM253 131.40h6v3.85h-6zM340 131.40h3v3.85h-3zM511 131.40h6v3.85h-6zM91 135.25h3v3.85h-3zM106 135.25h3v3.85h-3zM352 135.25h3v3.85h-3zM436 135.25h3v3.85h-3zM502 135.25h3v3.85h-3zM511 135.25h3v3.85h-3zM109 139.10h3v3.85h-3zM247 139.10h3v3.85h-3zM82 142.95h6v3.85h-6zM97 142.95h3v3.85h-3zM172 142.95h3v3.85h-3zM244 142.95h3v3.85h-3zM250 142.95h9v3.85h-9zM340 142.95h3v3.85h-3zM511 142.95h3v3.85h-3zM517 142.95h3v3.85h-3zM79 146.80h3v3.85h-3zM94 146.80h3v3.85h-3zM337 146.80h3v3.85h-3zM502 146.80h3v3.85h-3zM64 150.65h6v3.85h-6zM76 150.65h3v3.85h-3zM250 150.65h3v3.85h-3zM334 150.65h3v3.85h-3zM244 154.50h6v3.85h-6zM259 154.50h3v3.85h-3zM328 154.50h3v3.85h-3zM337 154.50h3v3.85h-3zM439 154.50h3v3.85h-3zM499 154.50h3v3.85h-3zM505 154.50h3v3.85h-3zM511 154.50h6v3.85h-6zM64 158.35h3v3.85h-3zM238 158.35h3v3.85h-3zM247 158.35h3v3.85h-3zM331 158.35h3v3.85h-3zM337 158.35h3v3.85h-3zM439 158.35h3v3.85h-3zM49 162.20h3v3.85h-3zM55 162.20h3v3.85h-3zM265 162.20h3v3.85h-3zM322 162.20h3v3.85h-3zM460 162.20h3v3.85h-3zM469 162.20h3v3.85h-3zM478 162.20h3v3.85h-3zM508 162.20h9v3.85h-9zM28 166.05h3v3.85h-3zM40 166.05h3v3.85h-3zM559 166.05h3v3.85h-3zM577 166.05h6v3.85h-6zM586 166.05h6v3.85h-6z"/><path fill="#52ff00" shape-rendering="crispEdges" d="M49 119.85h3v3.85h-3zM61 119.85h6v3.85h-6zM73 119.85h3v3.85h-3zM271 119.85h3v3.85h-3zM442 119.85h9v3.85h-9zM487 119.85h3v3.85h-3zM508 119.85h3v3.85h-3zM97 123.70h3v3.85h-3zM112 123.70h6v3.85h-6zM130 123.70h3v3.85h-3zM175 123.70h3v3.85h-3zM184 123.70h3v3.85h-3zM217 123.70h12v3.85h-12zM238 123.70h3v3.85h-3zM343 123.70h3v3.85h-3zM106 127.55h6v3.85h-6zM130 127.55h3v3.85h-3zM235 127.55h3v3.85h-3zM241 127.55h3v3.85h-3zM256 127.55h3v3.85h-3zM430 127.55h3v3.85h-3zM109 131.40h3v3.85h-3zM244 131.40h3v3.85h-3zM502 131.40h3v3.85h-3zM109 135.25h12v3.85h-12zM127 135.25h3v3.85h-3zM103 139.10h6v3.85h-6zM115 139.10h6v3.85h-6zM244 139.10h3v3.85h-3zM250 139.10h6v3.85h-6zM343 139.10h3v3.85h-3zM502 139.10h3v3.85h-3zM91 142.95h3v3.85h-3zM103 142.95h3v3.85h-3zM109 142.95h3v3.85h-3zM436 142.95h3v3.85h-3zM514 142.95h3v3.85h-3zM76 146.80h3v3.85h-3zM85 146.80h3v3.85h-3zM91 146.80h3v3.85h-3zM106 146.80h3v3.85h-3zM118 146.80h3v3.85h-3zM340 146.80h6v3.85h-6zM70 150.65h3v3.85h-3zM79 150.65h18v3.85h-18zM169 150.65h3v3.85h-3zM253 150.65h3v3.85h-3zM340 150.65h3v3.85h-3zM79 154.50h6v3.85h-6zM94 154.50h3v3.85h-3zM241 154.50h3v3.85h-3zM253 154.50h6v3.85h-6zM334 154.50h3v3.85h-3zM496 154.50h3v3.85h-3zM94 158.35h3v3.85h-3zM235 158.35h3v3.85h-3zM256 158.35h6v3.85h-6zM325 158.35h6v3.85h-6zM490 158.35h6v3.85h-6zM508 158.35h3v3.85h-3zM517 158.35h3v3.85h-3zM37 162.20h3v3.85h-3zM46 162.20h3v3.85h-3zM58 162.20h3v3.85h-3zM172 162.20h3v3.85h-3zM253 162.20h3v3.85h-3zM262 162.20h3v3.85h-3zM325 162.20h9v3.85h-9zM448 162.20h3v3.85h-3zM457 162.20h3v3.85h-3zM463 162.20h6v3.85h-6zM505 162.20h3v3.85h-3zM31 166.05h3v3.85h-3zM49 166.05h3v3.85h-3zM184 166.05h3v3.85h-3zM508 166.05h3v3.85h-3zM562 166.05h3v3.85h-3zM568 166.05h3v3.85h-3zM592 166.05h6v3.85h-6zM607 166.05h3v3.85h-3zM316 169.90h3v3.85h-3zM280 173.75h3v3.85h-3zM301 173.75h3v3.85h-3z"/><path fill="#ff5f00" shape-rendering="crispEdges" d="M280 119.85h3v3.85h-3zM310 119.85h3v3.85h-3zM601 119.85h3v3.85h-3zM628 119.85h6v3.85h-6zM31 123.70h3v3.85h-3zM562 123.70h6v3.85h-6zM583 123.70h3v3.85h-3zM613 123.70h3v3.85h-3zM28 127.55h6v3.85h-6zM313 127.55h3v3.85h-3zM469 127.55h3v3.85h-3zM478 127.55h3v3.85h-3zM568 127.55h6v3.85h-6zM589 127.55h3v3.85h-3zM598 127.55h3v3.85h-3zM31 131.40h3v3.85h-3zM43 131.40h3v3.85h-3zM268 131.40h3v3.85h-3zM466 131.40h3v3.85h-3zM523 131.40h3v3.85h-3zM610 131.40h3v3.85h-3zM28 135.25h3v3.85h-3zM181 135.25h3v3.85h-3zM556 135.25h3v3.85h-3zM43 139.10h3v3.85h-3zM610 139.10h3v3.85h-3zM31 142.95h3v3.85h-3zM223 142.95h6v3.85h-6zM319 142.95h3v3.85h-3zM556 142.95h3v3.85h-3zM595 142.95h3v3.85h-3zM610 142.95h6v3.85h-6zM229 150.65h3v3.85h-3zM226 154.50h3v3.85h-3zM268 154.50h3v3.85h-3zM454 154.50h3v3.85h-3zM460 154.50h9v3.85h-9zM472 154.50h12v3.85h-12zM574 154.50h3v3.85h-3zM607 154.50h3v3.85h-3zM613 162.20h3v3.85h-3zM277 166.05h3v3.85h-3zM310 166.05h3v3.85h-3zM283 169.90h3v3.85h-3zM292 169.90h3v3.85h-3zM298 169.90h9v3.85h-9zM526 169.90h3v3.85h-3z"/><path fill="#ff4700" shape-rendering="crispEdges" d="M283 119.85h6v3.85h-6zM556 119.85h3v3.85h-3zM577 119.85h3v3.85h-3zM616 119.85h3v3.85h-3zM277 123.70h3v3.85h-3zM307 123.70h3v3.85h-3zM556 123.70h3v3.85h-3zM568 123.70h3v3.85h-3zM595 123.70h3v3.85h-3zM601 123.70h6v3.85h-6zM619 123.70h9v3.85h-9zM634 123.70h1v3.85h-1zM319 127.55h3v3.85h-3zM556 127.55h9v3.85h-9zM595 127.55h3v3.85h-3zM220 131.40h3v3.85h-3zM451 131.40h3v3.85h-3zM472 131.40h3v3.85h-3zM532 131.40h3v3.85h-3zM556 131.40h3v3.85h-3zM601 131.40h6v3.85h-6zM625 131.40h3v3.85h-3zM31 135.25h3v3.85h-3zM217 135.25h9v3.85h-9zM316 135.25h3v3.85h-3zM550 135.25h3v3.85h-3zM619 135.25h3v3.85h-3zM625 135.25h3v3.85h-3zM28 139.10h6v3.85h-6zM40 139.10h3v3.85h-3zM223 139.10h3v3.85h-3zM451 139.10h3v3.85h-3zM463 139.10h3v3.85h-3zM625 139.10h3v3.85h-3zM28 142.95h3v3.85h-3zM604 142.95h3v3.85h-3zM556 146.80h3v3.85h-3zM592 146.80h3v3.85h-3zM607 146.80h3v3.85h-3zM178 150.65h3v3.85h-3zM277 150.65h3v3.85h-3zM313 150.65h6v3.85h-6zM550 150.65h3v3.85h-3zM556 150.65h3v3.85h-3zM565 150.65h3v3.85h-3zM571 150.65h3v3.85h-3zM607 150.65h3v3.85h-3zM634 150.65h1v3.85h-1zM178 154.50h3v3.85h-3zM313 154.50h3v3.85h-3zM457 154.50h3v3.85h-3zM469 154.50h3v3.85h-3zM550 154.50h3v3.85h-3zM556 154.50h3v3.85h-3zM583 154.50h6v3.85h-6zM313 158.35h3v3.85h-3zM592 158.35h3v3.85h-3zM607 162.20h3v3.85h-3zM280 169.90h3v3.85h-3zM289 169.90h3v3.85h-3zM295 169.90h3v3.85h-3zM307 169.90h3v3.85h-3z"/><path fill="#ff3000" shape-rendering="crispEdges" d="M289 119.85h3v3.85h-3zM301 119.85h3v3.85h-3zM535 119.85h6v3.85h-6zM310 123.70h3v3.85h-3zM532 123.70h3v3.85h-3zM538 123.70h3v3.85h-3zM580 123.70h3v3.85h-3zM616 123.70h3v3.85h-3zM271 127.55h3v3.85h-3zM307 127.55h3v3.85h-3zM316 127.55h3v3.85h-3zM550 127.55h3v3.85h-3zM565 127.55h3v3.85h-3zM601 127.55h3v3.85h-3zM610 127.55h3v3.85h-3zM622 127.55h6v3.85h-6zM634 127.55h1v3.85h-1zM184 131.40h6v3.85h-6zM202 131.40h3v3.85h-3zM214 131.40h6v3.85h-6zM274 131.40h3v3.85h-3zM478 131.40h3v3.85h-3zM550 131.40h3v3.85h-3zM616 131.40h3v3.85h-3zM274 135.25h3v3.85h-3zM313 135.25h3v3.85h-3zM319 135.25h3v3.85h-3zM451 135.25h3v3.85h-3zM463 135.25h6v3.85h-6zM475 135.25h3v3.85h-3zM616 135.25h3v3.85h-3zM622 135.25h3v3.85h-3zM34 139.10h3v3.85h-3zM184 139.10h6v3.85h-6zM193 139.10h3v3.85h-3zM202 139.10h6v3.85h-6zM217 139.10h6v3.85h-6zM319 139.10h3v3.85h-3zM454 139.10h3v3.85h-3zM466 139.10h3v3.85h-3zM475 139.10h6v3.85h-6zM616 139.10h3v3.85h-3zM622 139.10h3v3.85h-3zM634 139.10h1v3.85h-1zM181 142.95h3v3.85h-3zM274 142.95h3v3.85h-3zM304 142.95h3v3.85h-3zM451 142.95h3v3.85h-3zM484 142.95h3v3.85h-3zM601 142.95h3v3.85h-3zM616 142.95h3v3.85h-3zM178 146.80h3v3.85h-3zM217 146.80h3v3.85h-3zM274 146.80h3v3.85h-3zM289 146.80h3v3.85h-3zM313 146.80h3v3.85h-3zM574 146.80h3v3.85h-3zM202 150.65h3v3.85h-3zM217 150.65h3v3.85h-3zM268 150.65h3v3.85h-3zM463 150.65h3v3.85h-3zM574 150.65h3v3.85h-3zM592 150.65h3v3.85h-3zM625 150.65h3v3.85h-3zM223 154.50h3v3.85h-3zM274 154.50h6v3.85h-6zM316 154.50h3v3.85h-3zM451 154.50h3v3.85h-3zM598 154.50h3v3.85h-3zM187 158.35h3v3.85h-3zM202 158.35h3v3.85h-3zM217 158.35h6v3.85h-6zM538 158.35h3v3.85h-3zM580 158.35h3v3.85h-3zM586 158.35h6v3.85h-6zM598 158.35h3v3.85h-3zM607 158.35h3v3.85h-3zM613 158.35h3v3.85h-3zM625 158.35h3v3.85h-3zM634 158.35h1v3.85h-1zM277 162.20h3v3.85h-3zM286 162.20h3v3.85h-3zM550 162.20h3v3.85h-3zM634 162.20h1v3.85h-1zM286 166.05h6v3.85h-6zM295 166.05h3v3.85h-3zM550 166.05h3v3.85h-3z"/><path fill="#ff1800" shape-rendering="crispEdges" d="M292 119.85h6v3.85h-6zM307 119.85h3v3.85h-3zM532 119.85h3v3.85h-3zM541 119.85h3v3.85h-3zM550 119.85h3v3.85h-3zM289 123.70h9v3.85h-9zM304 123.70h3v3.85h-3zM550 123.70h3v3.85h-3zM577 123.70h3v3.85h-3zM631 123.70h3v3.85h-3zM274 127.55h6v3.85h-6zM283 127.55h3v3.85h-3zM289 127.55h3v3.85h-3zM529 127.55h9v3.85h-9zM577 127.55h3v3.85h-3zM616 127.55h6v3.85h-6zM277 131.40h3v3.85h-3zM286 131.40h3v3.85h-3zM304 131.40h3v3.85h-3zM313 131.40h6v3.85h-6zM538 131.40h3v3.85h-3zM619 131.40h6v3.85h-6zM184 135.25h6v3.85h-6zM193 135.25h3v3.85h-3zM199 135.25h6v3.85h-6zM268 135.25h3v3.85h-3zM277 135.25h3v3.85h-3zM454 135.25h3v3.85h-3zM538 135.25h3v3.85h-3zM544 135.25h6v3.85h-6zM634 135.25h1v3.85h-1zM199 139.10h3v3.85h-3zM214 139.10h3v3.85h-3zM268 139.10h3v3.85h-3zM307 139.10h3v3.85h-3zM313 139.10h6v3.85h-6zM460 139.10h3v3.85h-3zM469 139.10h6v3.85h-6zM484 139.10h3v3.85h-3zM532 139.10h3v3.85h-3zM544 139.10h6v3.85h-6zM619 139.10h3v3.85h-3zM184 142.95h6v3.85h-6zM193 142.95h3v3.85h-3zM202 142.95h3v3.85h-3zM214 142.95h6v3.85h-6zM286 142.95h6v3.85h-6zM295 142.95h3v3.85h-3zM313 142.95h6v3.85h-6zM454 142.95h3v3.85h-3zM481 142.95h3v3.85h-3zM532 142.95h6v3.85h-6zM541 142.95h3v3.85h-3zM550 142.95h3v3.85h-3zM619 142.95h3v3.85h-3zM193 146.80h3v3.85h-3zM199 146.80h9v3.85h-9zM214 146.80h3v3.85h-3zM223 146.80h6v3.85h-6zM268 146.80h3v3.85h-3zM277 146.80h3v3.85h-3zM304 146.80h3v3.85h-3zM316 146.80h3v3.85h-3zM454 146.80h3v3.85h-3zM475 146.80h3v3.85h-3zM484 146.80h3v3.85h-3zM532 146.80h3v3.85h-3zM550 146.80h3v3.85h-3zM577 146.80h12v3.85h-12zM613 146.80h3v3.85h-3zM619 146.80h9v3.85h-9zM187 150.65h3v3.85h-3zM193 150.65h3v3.85h-3zM214 150.65h3v3.85h-3zM223 150.65h6v3.85h-6zM286 150.65h3v3.85h-3zM451 150.65h3v3.85h-3zM466 150.65h3v3.85h-3zM475 150.65h3v3.85h-3zM484 150.65h3v3.85h-3zM538 150.65h3v3.85h-3zM580 150.65h6v3.85h-6zM613 150.65h3v3.85h-3zM622 150.65h3v3.85h-3zM193 154.50h3v3.85h-3zM205 154.50h3v3.85h-3zM214 154.50h6v3.85h-6zM289 154.50h3v3.85h-3zM295 154.50h3v3.85h-3zM541 154.50h3v3.85h-3zM589 154.50h9v3.85h-9zM610 154.50h6v3.85h-6zM634 154.50h1v3.85h-1zM181 158.35h3v3.85h-3zM193 158.35h3v3.85h-3zM205 158.35h3v3.85h-3zM214 158.35h3v3.85h-3zM271 158.35h9v3.85h-9zM301 158.35h3v3.85h-3zM535 158.35h3v3.85h-3zM547 158.35h6v3.85h-6zM577 158.35h3v3.85h-3zM595 158.35h3v3.85h-3zM295 162.20h3v3.85h-3zM307 162.20h3v3.85h-3zM532 162.20h3v3.85h-3zM601 162.20h3v3.85h-3zM610 162.20h3v3.85h-3zM280 166.05h6v3.85h-6zM301 166.05h9v3.85h-9zM541 166.05h6v3.85h-6z"/><path fill="#ff0000" shape-rendering="crispEdges" d="M298 119.85h3v3.85h-3zM304 119.85h3v3.85h-3zM526 119.85h6v3.85h-6zM544 119.85h6v3.85h-6zM553 119.85h3v3.85h-3zM280 123.70h9v3.85h-9zM298 123.70h6v3.85h-6zM526 123.70h6v3.85h-6zM535 123.70h3v3.85h-3zM541 123.70h9v3.85h-9zM553 123.70h3v3.85h-3zM628 123.70h3v3.85h-3zM280 127.55h3v3.85h-3zM286 127.55h3v3.85h-3zM292 127.55h15v3.85h-15zM310 127.55h3v3.85h-3zM526 127.55h3v3.85h-3zM538 127.55h12v3.85h-12zM553 127.55h3v3.85h-3zM628 127.55h6v3.85h-6zM190 131.40h12v3.85h-12zM205 131.40h9v3.85h-9zM271 131.40h3v3.85h-3zM280 131.40h6v3.85h-6zM289 131.40h15v3.85h-15zM307 131.40h6v3.85h-6zM526 131.40h6v3.85h-6zM535 131.40h3v3.85h-3zM541 131.40h9v3.85h-9zM553 131.40h3v3.85h-3zM628 131.40h7v3.85h-7zM190 135.25h3v3.85h-3zM196 135.25h3v3.85h-3zM205 135.25h12v3.85h-12zM271 135.25h3v3.85h-3zM280 135.25h33v3.85h-33zM457 135.25h6v3.85h-6zM469 135.25h6v3.85h-6zM478 135.25h9v3.85h-9zM526 135.25h12v3.85h-12zM541 135.25h3v3.85h-3zM553 135.25h3v3.85h-3zM628 135.25h6v3.85h-6zM190 139.10h3v3.85h-3zM196 139.10h3v3.85h-3zM208 139.10h6v3.85h-6zM271 139.10h36v3.85h-36zM310 139.10h3v3.85h-3zM457 139.10h3v3.85h-3zM481 139.10h3v3.85h-3zM526 139.10h6v3.85h-6zM535 139.10h9v3.85h-9zM550 139.10h6v3.85h-6zM628 139.10h6v3.85h-6zM190 142.95h3v3.85h-3zM196 142.95h6v3.85h-6zM205 142.95h9v3.85h-9zM220 142.95h3v3.85h-3zM268 142.95h6v3.85h-6zM277 142.95h9v3.85h-9zM292 142.95h3v3.85h-3zM298 142.95h6v3.85h-6zM307 142.95h6v3.85h-6zM457 142.95h24v3.85h-24zM526 142.95h6v3.85h-6zM538 142.95h3v3.85h-3zM544 142.95h6v3.85h-6zM553 142.95h3v3.85h-3zM622 142.95h13v3.85h-13zM181 146.80h12v3.85h-12zM196 146.80h3v3.85h-3zM208 146.80h6v3.85h-6zM220 146.80h3v3.85h-3zM271 146.80h3v3.85h-3zM280 146.80h9v3.85h-9zM292 146.80h12v3.85h-12zM307 146.80h6v3.85h-6zM451 146.80h3v3.85h-3zM457 146.80h18v3.85h-18zM478 146.80h6v3.85h-6zM526 146.80h6v3.85h-6zM535 146.80h15v3.85h-15zM553 146.80h3v3.85h-3zM589 146.80h3v3.85h-3zM595 146.80h12v3.85h-12zM610 146.80h3v3.85h-3zM616 146.80h3v3.85h-3zM628 146.80h7v3.85h-7zM181 150.65h6v3.85h-6zM190 150.65h3v3.85h-3zM196 150.65h6v3.85h-6zM205 150.65h9v3.85h-9zM220 150.65h3v3.85h-3zM271 150.65h6v3.85h-6zM280 150.65h6v3.85h-6zM289 150.65h24v3.85h-24zM454 150.65h9v3.85h-9zM469 150.65h6v3.85h-6zM478 150.65h6v3.85h-6zM526 150.65h12v3.85h-12zM541 150.65h9v3.85h-9zM553 150.65h3v3.85h-3zM577 150.65h3v3.85h-3zM586 150.65h6v3.85h-6zM595 150.65h12v3.85h-12zM610 150.65h3v3.85h-3zM616 150.65h6v3.85h-6zM628 150.65h6v3.85h-6zM181 154.50h12v3.85h-12zM196 154.50h9v3.85h-9zM208 154.50h6v3.85h-6zM220 154.50h3v3.85h-3zM271 154.50h3v3.85h-3zM280 154.50h9v3.85h-9zM292 154.50h3v3.85h-3zM298 154.50h15v3.85h-15zM526 154.50h15v3.85h-15zM544 154.50h6v3.85h-6zM553 154.50h3v3.85h-3zM577 154.50h6v3.85h-6zM601 154.50h6v3.85h-6zM616 154.50h18v3.85h-18zM184 158.35h3v3.85h-3zM190 158.35h3v3.85h-3zM196 158.35h6v3.85h-6zM208 158.35h6v3.85h-6zM280 158.35h21v3.85h-21zM304 158.35h9v3.85h-9zM526 158.35h9v3.85h-9zM541 158.35h6v3.85h-6zM553 158.35h3v3.85h-3zM601 158.35h6v3.85h-6zM610 158.35h3v3.85h-3zM616 158.35h9v3.85h-9zM628 158.35h6v3.85h-6zM280 162.20h6v3.85h-6zM289 162.20h6v3.85h-6zM298 162.20h9v3.85h-9zM310 162.20h3v3.85h-3zM526 162.20h6v3.85h-6zM535 162.20h15v3.85h-15zM553 162.20h3v3.85h-3zM604 162.20h3v3.85h-3zM616 162.20h18v3.85h-18zM292 166.05h3v3.85h-3zM298 166.05h3v3.85h-3zM526 166.05h15v3.85h-15zM547 166.05h3v3.85h-3zM553 166.05h3v3.85h-3z"/><path fill="#e0ff00" shape-rendering="crispEdges" d="M316 119.85h3v3.85h-3zM58 123.70h3v3.85h-3zM271 123.70h3v3.85h-3zM331 123.70h6v3.85h-6zM58 127.55h3v3.85h-3zM64 127.55h3v3.85h-3zM73 127.55h3v3.85h-3zM331 127.55h3v3.85h-3zM70 131.40h6v3.85h-6zM79 131.40h3v3.85h-3zM175 131.40h3v3.85h-3zM262 131.40h3v3.85h-3zM442 131.40h3v3.85h-3zM490 131.40h3v3.85h-3zM70 135.25h3v3.85h-3zM439 135.25h3v3.85h-3zM493 135.25h3v3.85h-3zM70 139.10h3v3.85h-3zM94 139.10h3v3.85h-3zM520 139.10h3v3.85h-3zM571 139.10h3v3.85h-3zM58 142.95h6v3.85h-6zM175 142.95h3v3.85h-3zM232 142.95h3v3.85h-3zM238 142.95h3v3.85h-3zM328 142.95h3v3.85h-3zM37 146.80h9v3.85h-9zM241 146.80h3v3.85h-3zM322 146.80h6v3.85h-6zM493 146.80h3v3.85h-3zM520 146.80h3v3.85h-3zM40 150.65h6v3.85h-6zM172 150.65h3v3.85h-3zM49 154.50h3v3.85h-3zM172 154.50h3v3.85h-3zM262 154.50h3v3.85h-3zM37 158.35h9v3.85h-9zM448 158.35h3v3.85h-3zM475 158.35h3v3.85h-3zM481 158.35h3v3.85h-3zM520 158.35h3v3.85h-3zM181 162.20h3v3.85h-3zM559 162.20h3v3.85h-3zM586 162.20h3v3.85h-3zM616 166.05h3v3.85h-3z"/><path fill="#c9ff00" shape-rendering="crispEdges" d="M319 119.85h3v3.85h-3zM325 119.85h3v3.85h-3zM64 123.70h3v3.85h-3zM337 123.70h3v3.85h-3zM436 123.70h3v3.85h-3zM520 123.70h3v3.85h-3zM67 127.55h3v3.85h-3zM334 127.55h6v3.85h-6zM436 127.55h3v3.85h-3zM493 127.55h3v3.85h-3zM505 127.55h3v3.85h-3zM517 127.55h3v3.85h-3zM235 131.40h3v3.85h-3zM331 131.40h3v3.85h-3zM67 135.25h3v3.85h-3zM73 135.25h3v3.85h-3zM79 135.25h3v3.85h-3zM256 135.25h3v3.85h-3zM334 135.25h3v3.85h-3zM520 135.25h3v3.85h-3zM583 135.25h3v3.85h-3zM76 139.10h12v3.85h-12zM334 139.10h6v3.85h-6zM439 139.10h3v3.85h-3zM574 139.10h3v3.85h-3zM583 139.10h3v3.85h-3zM64 142.95h3v3.85h-3zM331 142.95h3v3.85h-3zM439 142.95h3v3.85h-3zM520 142.95h3v3.85h-3zM49 146.80h6v3.85h-6zM61 146.80h3v3.85h-3zM172 146.80h3v3.85h-3zM244 146.80h3v3.85h-3zM256 146.80h3v3.85h-3zM439 146.80h3v3.85h-3zM37 150.65h3v3.85h-3zM52 150.65h3v3.85h-3zM241 150.65h3v3.85h-3zM493 150.65h3v3.85h-3zM520 150.65h3v3.85h-3zM52 154.50h3v3.85h-3zM442 154.50h3v3.85h-3zM520 154.50h3v3.85h-3zM49 158.35h3v3.85h-3zM265 158.35h3v3.85h-3zM484 158.35h3v3.85h-3zM223 162.20h3v3.85h-3zM520 162.20h3v3.85h-3zM562 162.20h3v3.85h-3zM571 162.20h6v3.85h-6zM520 166.05h3v3.85h-3zM622 166.05h3v3.85h-3z"/><path fill="#b1ff00" shape-rendering="crispEdges" d="M520 119.85h3v3.85h-3zM67 123.70h3v3.85h-3zM73 123.70h6v3.85h-6zM82 123.70h3v3.85h-3zM490 123.70h3v3.85h-3zM70 127.55h3v3.85h-3zM76 127.55h3v3.85h-3zM181 127.55h3v3.85h-3zM223 127.55h9v3.85h-9zM265 127.55h3v3.85h-3zM499 127.55h3v3.85h-3zM508 127.55h3v3.85h-3zM514 127.55h3v3.85h-3zM76 131.40h3v3.85h-3zM85 131.40h3v3.85h-3zM232 131.40h3v3.85h-3zM238 131.40h6v3.85h-6zM328 131.40h3v3.85h-3zM493 131.40h3v3.85h-3zM508 131.40h3v3.85h-3zM76 135.25h3v3.85h-3zM82 135.25h3v3.85h-3zM88 135.25h3v3.85h-3zM241 135.25h3v3.85h-3zM250 135.25h6v3.85h-6zM259 135.25h3v3.85h-3zM337 135.25h3v3.85h-3zM499 135.25h3v3.85h-3zM91 139.10h3v3.85h-3zM97 139.10h3v3.85h-3zM232 139.10h3v3.85h-3zM259 139.10h3v3.85h-3zM508 139.10h3v3.85h-3zM67 142.95h3v3.85h-3zM73 142.95h3v3.85h-3zM493 142.95h3v3.85h-3zM499 142.95h3v3.85h-3zM46 146.80h3v3.85h-3zM55 146.80h6v3.85h-6zM247 146.80h3v3.85h-3zM253 146.80h3v3.85h-3zM328 146.80h3v3.85h-3zM499 146.80h3v3.85h-3zM517 146.80h3v3.85h-3zM46 150.65h3v3.85h-3zM325 150.65h3v3.85h-3zM331 150.65h3v3.85h-3zM439 150.65h3v3.85h-3zM55 154.50h9v3.85h-9zM232 154.50h6v3.85h-6zM322 154.50h3v3.85h-3zM490 154.50h3v3.85h-3zM52 158.35h3v3.85h-3zM28 162.20h6v3.85h-6zM178 162.20h3v3.85h-3zM568 162.20h3v3.85h-3zM268 166.05h3v3.85h-3zM319 166.05h3v3.85h-3zM601 166.05h6v3.85h-6zM619 166.05h3v3.85h-3zM634 166.05h1v3.85h-1z"/><path fill="#ff7700" shape-rendering="crispEdges" d="M604 119.85h3v3.85h-3zM622 119.85h3v3.85h-3zM316 123.70h3v3.85h-3zM457 123.70h6v3.85h-6zM469 123.70h3v3.85h-3zM478 123.70h3v3.85h-3zM586 123.70h6v3.85h-6zM598 123.70h3v3.85h-3zM610 123.70h3v3.85h-3zM451 127.55h3v3.85h-3zM457 127.55h9v3.85h-9zM472 127.55h3v3.85h-3zM523 127.55h3v3.85h-3zM574 127.55h3v3.85h-3zM580 127.55h9v3.85h-9zM592 127.55h3v3.85h-3zM604 127.55h3v3.85h-3zM613 127.55h3v3.85h-3zM28 131.40h3v3.85h-3zM34 131.40h3v3.85h-3zM319 131.40h3v3.85h-3zM454 131.40h12v3.85h-12zM469 131.40h3v3.85h-3zM475 131.40h3v3.85h-3zM481 131.40h6v3.85h-6zM565 131.40h3v3.85h-3zM577 131.40h6v3.85h-6zM598 131.40h3v3.85h-3zM613 131.40h3v3.85h-3zM34 135.25h3v3.85h-3zM40 135.25h6v3.85h-6zM265 135.25h3v3.85h-3zM598 135.25h3v3.85h-3zM610 135.25h3v3.85h-3zM37 139.10h3v3.85h-3zM46 139.10h6v3.85h-6zM181 139.10h3v3.85h-3zM226 139.10h3v3.85h-3zM322 139.10h3v3.85h-3zM556 139.10h3v3.85h-3zM601 139.10h3v3.85h-3zM448 142.95h3v3.85h-3zM487 142.95h3v3.85h-3zM589 142.95h3v3.85h-3zM229 146.80h3v3.85h-3zM319 146.80h3v3.85h-3zM487 146.80h3v3.85h-3zM559 146.80h15v3.85h-15zM568 150.65h3v3.85h-3zM565 154.50h3v3.85h-3zM223 158.35h3v3.85h-3zM556 158.35h3v3.85h-3zM583 158.35h3v3.85h-3zM190 162.20h3v3.85h-3zM271 162.20h6v3.85h-6zM313 162.20h3v3.85h-3zM556 162.20h3v3.85h-3zM595 162.20h6v3.85h-6zM286 169.90h3v3.85h-3zM535 169.90h3v3.85h-3z"/><path fill="#f8ff00" shape-rendering="crispEdges" d="M439 123.70h3v3.85h-3zM445 123.70h3v3.85h-3zM61 127.55h3v3.85h-3zM217 127.55h6v3.85h-6zM328 127.55h3v3.85h-3zM439 127.55h3v3.85h-3zM490 127.55h3v3.85h-3zM64 131.40h6v3.85h-6zM265 131.40h3v3.85h-3zM325 131.40h3v3.85h-3zM520 131.40h3v3.85h-3zM232 135.25h9v3.85h-9zM328 135.25h6v3.85h-6zM562 135.25h3v3.85h-3zM571 135.25h6v3.85h-6zM64 139.10h3v3.85h-3zM175 139.10h3v3.85h-3zM493 139.10h3v3.85h-3zM559 139.10h12v3.85h-12zM46 142.95h3v3.85h-3zM52 142.95h6v3.85h-6zM235 142.95h3v3.85h-3zM325 142.95h3v3.85h-3zM490 142.95h3v3.85h-3zM238 146.80h3v3.85h-3zM259 146.80h3v3.85h-3zM235 150.65h3v3.85h-3zM322 150.65h3v3.85h-3zM442 150.65h3v3.85h-3zM490 150.65h3v3.85h-3zM37 154.50h3v3.85h-3zM46 154.50h3v3.85h-3zM445 154.50h3v3.85h-3zM34 158.35h3v3.85h-3zM175 158.35h3v3.85h-3zM463 158.35h3v3.85h-3zM469 158.35h6v3.85h-6zM478 158.35h3v3.85h-3zM217 162.20h6v3.85h-6zM319 162.20h3v3.85h-3zM565 162.20h3v3.85h-3zM583 162.20h3v3.85h-3zM631 166.05h3v3.85h-3zM523 169.90h3v3.85h-3z"/><path fill="#0074ff" shape-rendering="crispEdges" d="M268 173.75h3v3.85h-3zM505 173.75h6v3.85h-6z"/><path fill="#0044ff" shape-rendering="crispEdges" d="M28 192.30h144v3.72h-144zM253 192.30h309v3.72h-309zM118 248.08h54v3.72h-54z"/><path fill="#0074ff" shape-rendering="crispEdges" d="M172 192.30h3v3.72h-3zM241 192.30h6v3.72h-6zM448 196.02h3v3.72h-3zM142 244.36h3v3.72h-3zM82 248.08h3v3.72h-3zM91 248.08h15v3.72h-15zM172 248.08h3v3.72h-3zM244 248.08h3v3.72h-3zM301 248.08h3v3.72h-3zM307 248.08h3v3.72h-3zM328 248.08h3v3.72h-3zM355 248.08h3v3.72h-3zM361 248.08h3v3.72h-3zM376 248.08h3v3.72h-3zM385 248.08h3v3.72h-3zM391 248.08h3v3.72h-3zM412 248.08h3v3.72h-3zM448 248.08h3v3.72h-3zM538 248.08h3v3.72h-3z"/><path fill="#00ebff" shape-rendering="crispEdges" d="M175 192.30h3v3.72h-3zM565 192.30h3v3.72h-3zM232 196.02h3v3.72h-3zM238 196.02h3v3.72h-3zM259 196.02h3v3.72h-3zM343 196.02h3v3.72h-3zM379 196.02h3v3.72h-3zM469 196.02h3v3.72h-3zM520 196.02h3v3.72h-3zM529 196.02h6v3.72h-6zM562 196.02h3v3.72h-3zM109 236.93h6v3.72h-6zM121 236.93h3v3.72h-3zM133 236.93h6v3.72h-6zM148 236.93h3v3.72h-3zM154 236.93h9v3.72h-9zM163 240.64h6v3.72h-6zM91 244.36h3v3.72h-3zM103 244.36h6v3.72h-6zM403 244.36h3v3.72h-3zM517 244.36h3v3.72h-3zM565 248.08h3v3.72h-3z"/><path fill="#00ff9c" shape-rendering="crispEdges" d="M178 192.30h6v3.72h-6zM574 192.30h3v3.72h-3zM28 196.02h3v3.72h-3zM34 196.02h3v3.72h-3zM40 196.02h3v3.72h-3zM46 196.02h9v3.72h-9zM58 196.02h3v3.72h-3zM73 196.02h6v3.72h-6zM91 196.02h6v3.72h-6zM118 196.02h3v3.72h-3zM133 196.02h3v3.72h-3zM142 207.18h3v3.72h-3zM154 207.18h6v3.72h-6zM112 210.89h6v3.72h-6zM130 210.89h3v3.72h-3zM139 210.89h3v3.72h-3zM145 210.89h6v3.72h-6zM154 210.89h3v3.72h-3zM160 210.89h3v3.72h-3zM115 214.61h3v3.72h-3zM130 214.61h3v3.72h-3zM136 214.61h3v3.72h-3zM148 214.61h3v3.72h-3zM154 214.61h6v3.72h-6zM115 218.33h3v3.72h-3zM121 218.33h3v3.72h-3zM130 218.33h3v3.72h-3zM139 218.33h3v3.72h-3zM148 218.33h3v3.72h-3zM109 222.05h9v3.72h-9zM121 222.05h3v3.72h-3zM139 222.05h3v3.72h-3zM109 225.77h3v3.72h-3zM133 225.77h3v3.72h-3zM139 225.77h3v3.72h-3zM157 225.77h3v3.72h-3zM100 229.49h3v3.72h-3zM118 229.49h3v3.72h-3zM127 229.49h3v3.72h-3zM166 229.49h3v3.72h-3zM100 233.21h3v3.72h-3zM172 233.21h3v3.72h-3zM385 233.21h3v3.72h-3zM82 236.93h6v3.72h-6zM106 236.93h3v3.72h-3zM169 236.93h3v3.72h-3zM361 236.93h3v3.72h-3zM367 236.93h3v3.72h-3zM385 236.93h3v3.72h-3zM397 236.93h3v3.72h-3zM55 240.64h3v3.72h-3zM61 240.64h3v3.72h-3zM376 240.64h3v3.72h-3zM391 240.64h3v3.72h-3zM397 240.64h3v3.72h-3zM409 240.64h6v3.72h-6zM40 244.36h3v3.72h-3zM256 244.36h3v3.72h-3zM268 244.36h3v3.72h-3zM307 244.36h3v3.72h-3zM313 244.36h3v3.72h-3zM346 244.36h6v3.72h-6zM358 244.36h3v3.72h-3zM382 244.36h3v3.72h-3zM475 244.36h3v3.72h-3zM550 244.36h3v3.72h-3zM559 244.36h3v3.72h-3zM571 244.36h6v3.72h-6zM181 248.08h3v3.72h-3zM226 248.08h3v3.72h-3zM580 248.08h3v3.72h-3zM595 248.08h3v3.72h-3z"/><path fill="#00ff25" shape-rendering="crispEdges" d="M184 192.30h3v3.72h-3zM37 199.74h3v3.72h-3zM79 199.74h3v3.72h-3zM85 199.74h3v3.72h-3zM91 199.74h3v3.72h-3zM169 199.74h6v3.72h-6zM319 199.74h3v3.72h-3zM328 199.74h3v3.72h-3zM349 199.74h3v3.72h-3zM358 199.74h3v3.72h-3zM409 199.74h3v3.72h-3zM496 199.74h3v3.72h-3zM508 199.74h3v3.72h-3zM556 199.74h3v3.72h-3zM85 203.46h3v3.72h-3zM100 203.46h3v3.72h-3zM118 203.46h3v3.72h-3zM172 203.46h3v3.72h-3zM361 203.46h3v3.72h-3zM382 203.46h3v3.72h-3zM394 203.46h6v3.72h-6zM409 203.46h3v3.72h-3zM418 203.46h3v3.72h-3zM67 207.18h3v3.72h-3zM94 207.18h3v3.72h-3zM163 207.18h6v3.72h-6zM349 207.18h3v3.72h-3zM355 207.18h3v3.72h-3zM379 207.18h3v3.72h-3zM409 207.18h3v3.72h-3zM82 210.89h6v3.72h-6zM94 210.89h3v3.72h-3zM106 210.89h3v3.72h-3zM163 210.89h3v3.72h-3zM169 210.89h3v3.72h-3zM379 210.89h3v3.72h-3zM409 210.89h6v3.72h-6zM67 214.61h3v3.72h-3zM79 214.61h3v3.72h-3zM91 214.61h3v3.72h-3zM97 214.61h9v3.72h-9zM349 214.61h3v3.72h-3zM355 214.61h3v3.72h-3zM361 214.61h6v3.72h-6zM370 214.61h3v3.72h-3zM379 214.61h6v3.72h-6zM406 214.61h3v3.72h-3zM412 214.61h3v3.72h-3zM73 218.33h3v3.72h-3zM79 218.33h3v3.72h-3zM85 218.33h15v3.72h-15zM169 218.33h3v3.72h-3zM349 218.33h3v3.72h-3zM355 218.33h3v3.72h-3zM361 218.33h3v3.72h-3zM73 222.05h3v3.72h-3zM79 222.05h6v3.72h-6zM88 222.05h3v3.72h-3zM358 222.05h3v3.72h-3zM73 225.77h3v3.72h-3zM88 225.77h3v3.72h-3zM364 225.77h3v3.72h-3zM412 225.77h3v3.72h-3zM55 229.49h3v3.72h-3zM64 229.49h3v3.72h-3zM73 229.49h3v3.72h-3zM325 229.49h3v3.72h-3zM358 229.49h3v3.72h-3zM364 229.49h3v3.72h-3zM379 229.49h6v3.72h-6zM415 229.49h6v3.72h-6zM433 229.49h3v3.72h-3zM37 233.21h3v3.72h-3zM55 233.21h3v3.72h-3zM64 233.21h6v3.72h-6zM319 233.21h3v3.72h-3zM346 233.21h3v3.72h-3zM370 233.21h3v3.72h-3zM415 233.21h6v3.72h-6zM466 233.21h3v3.72h-3zM484 233.21h3v3.72h-3zM502 233.21h3v3.72h-3zM511 233.21h3v3.72h-3zM34 236.93h3v3.72h-3zM46 236.93h3v3.72h-3zM52 236.93h3v3.72h-3zM310 236.93h3v3.72h-3zM325 236.93h6v3.72h-6zM334 236.93h3v3.72h-3zM340 236.93h6v3.72h-6zM352 236.93h3v3.72h-3zM370 236.93h3v3.72h-3zM421 236.93h3v3.72h-3zM427 236.93h9v3.72h-9zM460 236.93h3v3.72h-3zM478 236.93h3v3.72h-3zM487 236.93h3v3.72h-3zM493 236.93h3v3.72h-3zM523 236.93h6v3.72h-6zM571 236.93h3v3.72h-3zM244 240.64h3v3.72h-3zM265 240.64h3v3.72h-3zM283 240.64h3v3.72h-3zM307 240.64h9v3.72h-9zM319 240.64h3v3.72h-3zM340 240.64h3v3.72h-3zM352 240.64h3v3.72h-3zM421 240.64h3v3.72h-3zM448 240.64h3v3.72h-3zM463 240.64h3v3.72h-3zM481 240.64h3v3.72h-3zM499 240.64h3v3.72h-3zM544 240.64h3v3.72h-3zM553 240.64h3v3.72h-3zM574 240.64h3v3.72h-3zM175 244.36h3v3.72h-3zM229 244.36h3v3.72h-3zM238 244.36h3v3.72h-3zM595 244.36h3v3.72h-3zM223 248.08h3v3.72h-3z"/><path fill="#69ff00" shape-rendering="crispEdges" d="M187 192.30h3v3.72h-3zM589 192.30h3v3.72h-3zM178 196.02h6v3.72h-6zM586 196.02h6v3.72h-6zM241 199.74h3v3.72h-3zM292 199.74h3v3.72h-3zM31 203.46h6v3.72h-6zM43 203.46h3v3.72h-3zM307 203.46h6v3.72h-6zM448 203.46h3v3.72h-3zM457 203.46h3v3.72h-3zM469 203.46h9v3.72h-9zM523 203.46h3v3.72h-3zM529 203.46h3v3.72h-3zM535 203.46h3v3.72h-3zM553 203.46h3v3.72h-3zM586 203.46h3v3.72h-3zM28 207.18h3v3.72h-3zM40 207.18h6v3.72h-6zM49 207.18h3v3.72h-3zM175 207.18h3v3.72h-3zM307 207.18h3v3.72h-3zM421 207.18h3v3.72h-3zM433 207.18h3v3.72h-3zM520 207.18h3v3.72h-3zM556 207.18h3v3.72h-3zM568 207.18h3v3.72h-3zM40 210.89h3v3.72h-3zM175 210.89h3v3.72h-3zM241 210.89h3v3.72h-3zM310 210.89h3v3.72h-3zM340 210.89h6v3.72h-6zM466 210.89h3v3.72h-3zM568 210.89h3v3.72h-3zM175 214.61h3v3.72h-3zM241 214.61h3v3.72h-3zM316 214.61h3v3.72h-3zM334 214.61h3v3.72h-3zM430 214.61h6v3.72h-6zM445 214.61h3v3.72h-3zM478 214.61h6v3.72h-6zM490 214.61h3v3.72h-3zM517 214.61h3v3.72h-3zM565 214.61h6v3.72h-6zM580 214.61h3v3.72h-3zM40 218.33h6v3.72h-6zM49 218.33h3v3.72h-3zM247 218.33h6v3.72h-6zM310 218.33h3v3.72h-3zM316 218.33h6v3.72h-6zM424 218.33h3v3.72h-3zM430 218.33h3v3.72h-3zM556 218.33h6v3.72h-6zM28 222.05h3v3.72h-3zM253 222.05h6v3.72h-6zM307 222.05h3v3.72h-3zM439 222.05h3v3.72h-3zM454 222.05h3v3.72h-3zM460 222.05h3v3.72h-3zM466 222.05h3v3.72h-3zM475 222.05h3v3.72h-3zM514 222.05h6v3.72h-6zM556 222.05h3v3.72h-3zM565 222.05h6v3.72h-6zM583 222.05h6v3.72h-6zM595 222.05h3v3.72h-3zM301 225.77h3v3.72h-3zM436 225.77h9v3.72h-9zM457 225.77h3v3.72h-3zM469 225.77h3v3.72h-3zM520 225.77h3v3.72h-3zM583 225.77h3v3.72h-3zM589 225.77h3v3.72h-3zM175 229.49h3v3.72h-3zM247 229.49h6v3.72h-6zM259 229.49h3v3.72h-3zM265 229.49h6v3.72h-6zM295 229.49h3v3.72h-3zM469 229.49h3v3.72h-3zM520 229.49h9v3.72h-9zM229 233.21h3v3.72h-3zM235 233.21h9v3.72h-9zM247 233.21h3v3.72h-3zM274 233.21h3v3.72h-3zM529 233.21h6v3.72h-6zM544 233.21h3v3.72h-3zM586 233.21h3v3.72h-3zM595 233.21h3v3.72h-3zM229 236.93h6v3.72h-6zM214 248.08h3v3.72h-3z"/><path fill="#81ff00" shape-rendering="crispEdges" d="M190 192.30h3v3.72h-3zM175 199.74h3v3.72h-3zM298 199.74h3v3.72h-3zM28 203.46h3v3.72h-3zM40 203.46h3v3.72h-3zM235 203.46h3v3.72h-3zM436 203.46h3v3.72h-3zM463 203.46h3v3.72h-3zM550 203.46h3v3.72h-3zM589 203.46h3v3.72h-3zM229 207.18h3v3.72h-3zM235 207.18h6v3.72h-6zM259 207.18h6v3.72h-6zM424 207.18h3v3.72h-3zM430 207.18h3v3.72h-3zM445 207.18h3v3.72h-3zM472 207.18h3v3.72h-3zM478 207.18h3v3.72h-3zM484 207.18h6v3.72h-6zM523 207.18h3v3.72h-3zM577 207.18h3v3.72h-3zM229 210.89h3v3.72h-3zM235 210.89h3v3.72h-3zM460 210.89h3v3.72h-3zM478 210.89h12v3.72h-12zM517 210.89h3v3.72h-3zM559 210.89h3v3.72h-3zM565 210.89h3v3.72h-3zM577 210.89h6v3.72h-6zM259 214.61h3v3.72h-3zM310 214.61h6v3.72h-6zM424 214.61h3v3.72h-3zM454 214.61h3v3.72h-3zM460 214.61h3v3.72h-3zM472 214.61h3v3.72h-3zM556 214.61h3v3.72h-3zM586 214.61h6v3.72h-6zM313 218.33h3v3.72h-3zM439 218.33h3v3.72h-3zM460 218.33h3v3.72h-3zM466 218.33h3v3.72h-3zM472 218.33h3v3.72h-3zM481 218.33h3v3.72h-3zM520 218.33h6v3.72h-6zM586 218.33h3v3.72h-3zM40 222.05h3v3.72h-3zM175 222.05h3v3.72h-3zM442 222.05h6v3.72h-6zM451 222.05h3v3.72h-3zM463 222.05h3v3.72h-3zM592 222.05h3v3.72h-3zM175 225.77h3v3.72h-3zM253 225.77h3v3.72h-3zM451 225.77h3v3.72h-3zM475 225.77h3v3.72h-3zM592 225.77h3v3.72h-3zM274 229.49h3v3.72h-3zM553 229.49h3v3.72h-3zM583 229.49h3v3.72h-3zM589 229.49h3v3.72h-3zM547 233.21h3v3.72h-3zM583 233.21h3v3.72h-3zM178 236.93h3v3.72h-3zM598 236.93h3v3.72h-3zM190 248.08h3v3.72h-3zM199 248.08h3v3.72h-3zM205 248.08h9v3.72h-9zM601 248.08h3v3.72h-3z"/><path fill="#99ff00" shape-rendering="crispEdges" d="M193 192.30h3v3.72h-3zM202 192.30h3v3.72h-3zM592 192.30h6v3.72h-6zM583 196.02h3v3.72h-3zM181 199.74h3v3.72h-3zM235 199.74h3v3.72h-3zM583 199.74h3v3.72h-3zM589 199.74h3v3.72h-3zM175 203.46h3v3.72h-3zM232 207.18h3v3.72h-3zM265 207.18h3v3.72h-3zM439 207.18h3v3.72h-3zM448 207.18h9v3.72h-9zM460 207.18h3v3.72h-3zM466 207.18h3v3.72h-3zM583 207.18h3v3.72h-3zM589 207.18h3v3.72h-3zM232 210.89h3v3.72h-3zM238 210.89h3v3.72h-3zM259 210.89h6v3.72h-6zM313 210.89h3v3.72h-3zM433 210.89h3v3.72h-3zM439 210.89h3v3.72h-3zM445 210.89h6v3.72h-6zM469 210.89h3v3.72h-3zM556 210.89h3v3.72h-3zM235 214.61h6v3.72h-6zM262 214.61h3v3.72h-3zM442 214.61h3v3.72h-3zM448 214.61h3v3.72h-3zM466 214.61h6v3.72h-6zM583 214.61h3v3.72h-3zM181 218.33h3v3.72h-3zM262 218.33h12v3.72h-12zM307 218.33h3v3.72h-3zM442 218.33h6v3.72h-6zM454 218.33h6v3.72h-6zM463 218.33h3v3.72h-3zM475 218.33h3v3.72h-3zM589 218.33h3v3.72h-3zM247 222.05h6v3.72h-6zM259 222.05h3v3.72h-3zM271 222.05h3v3.72h-3zM241 225.77h9v3.72h-9zM259 225.77h6v3.72h-6zM268 225.77h3v3.72h-3zM526 225.77h3v3.72h-3zM595 225.77h3v3.72h-3zM241 229.49h3v3.72h-3zM280 229.49h3v3.72h-3zM286 229.49h6v3.72h-6zM298 229.49h3v3.72h-3zM586 229.49h3v3.72h-3zM298 233.21h3v3.72h-3zM541 233.21h3v3.72h-3zM550 233.21h6v3.72h-6zM181 236.93h3v3.72h-3zM181 240.64h3v3.72h-3zM226 244.36h3v3.72h-3zM193 248.08h3v3.72h-3zM202 248.08h3v3.72h-3zM220 248.08h3v3.72h-3z"/><path fill="#c9ff00" shape-rendering="crispEdges" d="M196 192.30h3v3.72h-3zM208 192.30h3v3.72h-3zM184 196.02h3v3.72h-3zM592 196.02h3v3.72h-3zM238 199.74h3v3.72h-3zM277 203.46h3v3.72h-3zM286 203.46h3v3.72h-3zM304 207.18h3v3.72h-3zM436 207.18h3v3.72h-3zM463 207.18h3v3.72h-3zM475 207.18h3v3.72h-3zM586 207.18h3v3.72h-3zM178 210.89h3v3.72h-3zM268 210.89h6v3.72h-6zM463 210.89h3v3.72h-3zM523 210.89h3v3.72h-3zM586 210.89h3v3.72h-3zM178 214.61h3v3.72h-3zM268 214.61h6v3.72h-6zM436 214.61h3v3.72h-3zM475 214.61h3v3.72h-3zM178 218.33h3v3.72h-3zM238 218.33h3v3.72h-3zM469 218.33h3v3.72h-3zM526 218.33h3v3.72h-3zM265 222.05h3v3.72h-3zM520 222.05h3v3.72h-3zM229 225.77h3v3.72h-3zM235 225.77h6v3.72h-6zM280 225.77h9v3.72h-9zM238 229.49h3v3.72h-3zM283 229.49h3v3.72h-3zM532 229.49h3v3.72h-3zM538 229.49h3v3.72h-3zM550 229.49h3v3.72h-3zM595 229.49h3v3.72h-3z"/><path fill="#b1ff00" shape-rendering="crispEdges" d="M199 192.30h3v3.72h-3zM205 192.30h3v3.72h-3zM223 196.02h3v3.72h-3zM178 199.74h3v3.72h-3zM229 199.74h6v3.72h-6zM229 203.46h6v3.72h-6zM238 203.46h3v3.72h-3zM274 203.46h3v3.72h-3zM280 203.46h3v3.72h-3zM295 203.46h3v3.72h-3zM301 203.46h6v3.72h-6zM583 203.46h3v3.72h-3zM178 207.18h6v3.72h-6zM268 207.18h6v3.72h-6zM442 207.18h3v3.72h-3zM457 207.18h3v3.72h-3zM481 207.18h3v3.72h-3zM526 207.18h3v3.72h-3zM265 210.89h3v3.72h-3zM307 210.89h3v3.72h-3zM436 210.89h3v3.72h-3zM451 210.89h9v3.72h-9zM472 210.89h6v3.72h-6zM514 210.89h3v3.72h-3zM181 214.61h3v3.72h-3zM229 214.61h6v3.72h-6zM265 214.61h3v3.72h-3zM307 214.61h3v3.72h-3zM439 214.61h3v3.72h-3zM451 214.61h3v3.72h-3zM457 214.61h3v3.72h-3zM463 214.61h3v3.72h-3zM520 214.61h6v3.72h-6zM229 218.33h3v3.72h-3zM235 218.33h3v3.72h-3zM241 218.33h3v3.72h-3zM259 218.33h3v3.72h-3zM436 218.33h3v3.72h-3zM448 218.33h6v3.72h-6zM583 218.33h3v3.72h-3zM241 222.05h6v3.72h-6zM262 222.05h3v3.72h-3zM268 222.05h3v3.72h-3zM436 222.05h3v3.72h-3zM469 222.05h3v3.72h-3zM523 222.05h3v3.72h-3zM250 225.77h3v3.72h-3zM265 225.77h3v3.72h-3zM274 225.77h3v3.72h-3zM295 225.77h3v3.72h-3zM529 225.77h3v3.72h-3zM553 225.77h3v3.72h-3zM229 229.49h3v3.72h-3zM235 229.49h3v3.72h-3zM277 229.49h3v3.72h-3zM292 229.49h3v3.72h-3zM529 229.49h3v3.72h-3zM547 229.49h3v3.72h-3zM178 233.21h3v3.72h-3zM232 233.21h3v3.72h-3zM292 233.21h3v3.72h-3zM535 233.21h3v3.72h-3zM592 233.21h3v3.72h-3zM184 244.36h3v3.72h-3zM196 248.08h3v3.72h-3zM217 248.08h3v3.72h-3z"/><path fill="#e0ff00" shape-rendering="crispEdges" d="M211 192.30h6v3.72h-6zM598 192.30h3v3.72h-3zM595 196.02h3v3.72h-3zM184 199.74h3v3.72h-3zM592 199.74h3v3.72h-3zM178 203.46h6v3.72h-6zM226 203.46h3v3.72h-3zM283 203.46h3v3.72h-3zM289 203.46h6v3.72h-6zM469 207.18h3v3.72h-3zM529 207.18h3v3.72h-3zM553 207.18h3v3.72h-3zM442 210.89h3v3.72h-3zM520 210.89h3v3.72h-3zM583 210.89h3v3.72h-3zM526 214.61h3v3.72h-3zM232 218.33h3v3.72h-3zM592 218.33h3v3.72h-3zM178 222.05h6v3.72h-6zM229 222.05h3v3.72h-3zM235 222.05h6v3.72h-6zM304 222.05h3v3.72h-3zM526 222.05h3v3.72h-3zM598 222.05h3v3.72h-3zM178 225.77h3v3.72h-3zM277 225.77h3v3.72h-3zM289 225.77h6v3.72h-6zM298 225.77h3v3.72h-3zM532 225.77h18v3.72h-18zM598 225.77h3v3.72h-3zM181 229.49h3v3.72h-3zM232 229.49h3v3.72h-3zM544 229.49h3v3.72h-3zM592 229.49h3v3.72h-3zM181 233.21h3v3.72h-3zM226 240.64h3v3.72h-3zM601 244.36h3v3.72h-3z"/><path fill="#f8ff00" shape-rendering="crispEdges" d="M217 192.30h6v3.72h-6zM187 196.02h6v3.72h-6zM595 199.74h3v3.72h-3zM298 203.46h3v3.72h-3zM592 203.46h6v3.72h-6zM226 207.18h3v3.72h-3zM592 207.18h3v3.72h-3zM181 210.89h3v3.72h-3zM589 210.89h3v3.72h-3zM592 214.61h3v3.72h-3zM184 218.33h3v3.72h-3zM304 218.33h3v3.72h-3zM595 218.33h3v3.72h-3zM232 222.05h3v3.72h-3zM553 222.05h3v3.72h-3zM181 225.77h3v3.72h-3zM232 225.77h3v3.72h-3zM535 229.49h3v3.72h-3zM541 229.49h3v3.72h-3zM598 233.21h3v3.72h-3z"/><path fill="#3aff00" shape-rendering="crispEdges" d="M223 192.30h3v3.72h-3zM586 192.30h3v3.72h-3zM580 196.02h3v3.72h-3zM28 199.74h3v3.72h-3zM34 199.74h3v3.72h-3zM43 199.74h3v3.72h-3zM244 199.74h3v3.72h-3zM250 199.74h3v3.72h-3zM259 199.74h3v3.72h-3zM295 199.74h3v3.72h-3zM307 199.74h3v3.72h-3zM343 199.74h3v3.72h-3zM439 199.74h6v3.72h-6zM469 199.74h3v3.72h-3zM475 199.74h3v3.72h-3zM541 199.74h6v3.72h-6zM550 199.74h3v3.72h-3zM46 203.46h3v3.72h-3zM52 203.46h9v3.72h-9zM82 203.46h3v3.72h-3zM247 203.46h6v3.72h-6zM262 203.46h3v3.72h-3zM322 203.46h9v3.72h-9zM352 203.46h3v3.72h-3zM424 203.46h3v3.72h-3zM445 203.46h3v3.72h-3zM466 203.46h3v3.72h-3zM478 203.46h6v3.72h-6zM499 203.46h6v3.72h-6zM511 203.46h3v3.72h-3zM541 203.46h3v3.72h-3zM559 203.46h3v3.72h-3zM574 203.46h3v3.72h-3zM70 207.18h3v3.72h-3zM244 207.18h6v3.72h-6zM337 207.18h3v3.72h-3zM427 207.18h3v3.72h-3zM499 207.18h3v3.72h-3zM508 207.18h9v3.72h-9zM562 207.18h3v3.72h-3zM574 207.18h3v3.72h-3zM31 210.89h3v3.72h-3zM43 210.89h3v3.72h-3zM319 210.89h3v3.72h-3zM328 210.89h12v3.72h-12zM358 210.89h3v3.72h-3zM421 210.89h3v3.72h-3zM427 210.89h3v3.72h-3zM490 210.89h3v3.72h-3zM502 210.89h3v3.72h-3zM508 210.89h3v3.72h-3zM571 210.89h3v3.72h-3zM40 214.61h3v3.72h-3zM49 214.61h3v3.72h-3zM55 214.61h6v3.72h-6zM76 214.61h3v3.72h-3zM244 214.61h3v3.72h-3zM250 214.61h3v3.72h-3zM322 214.61h3v3.72h-3zM331 214.61h3v3.72h-3zM352 214.61h3v3.72h-3zM421 214.61h3v3.72h-3zM427 214.61h3v3.72h-3zM493 214.61h6v3.72h-6zM502 214.61h3v3.72h-3zM574 214.61h3v3.72h-3zM31 218.33h3v3.72h-3zM58 218.33h3v3.72h-3zM175 218.33h3v3.72h-3zM253 218.33h3v3.72h-3zM322 218.33h3v3.72h-3zM334 218.33h3v3.72h-3zM490 218.33h3v3.72h-3zM496 218.33h3v3.72h-3zM505 218.33h3v3.72h-3zM511 218.33h3v3.72h-3zM517 218.33h3v3.72h-3zM568 218.33h3v3.72h-3zM577 218.33h6v3.72h-6zM34 222.05h3v3.72h-3zM43 222.05h3v3.72h-3zM49 222.05h6v3.72h-6zM313 222.05h6v3.72h-6zM343 222.05h3v3.72h-3zM421 222.05h3v3.72h-3zM448 222.05h3v3.72h-3zM496 222.05h6v3.72h-6zM577 222.05h3v3.72h-3zM34 225.77h3v3.72h-3zM43 225.77h3v3.72h-3zM49 225.77h6v3.72h-6zM58 225.77h3v3.72h-3zM307 225.77h3v3.72h-3zM448 225.77h3v3.72h-3zM466 225.77h3v3.72h-3zM484 225.77h3v3.72h-3zM496 225.77h3v3.72h-3zM502 225.77h6v3.72h-6zM511 225.77h6v3.72h-6zM556 225.77h3v3.72h-3zM568 225.77h3v3.72h-3zM43 229.49h3v3.72h-3zM256 229.49h3v3.72h-3zM304 229.49h3v3.72h-3zM313 229.49h3v3.72h-3zM343 229.49h3v3.72h-3zM436 229.49h3v3.72h-3zM442 229.49h3v3.72h-3zM451 229.49h6v3.72h-6zM463 229.49h6v3.72h-6zM472 229.49h3v3.72h-3zM481 229.49h6v3.72h-6zM502 229.49h3v3.72h-3zM514 229.49h3v3.72h-3zM580 229.49h3v3.72h-3zM28 233.21h3v3.72h-3zM40 233.21h3v3.72h-3zM244 233.21h3v3.72h-3zM277 233.21h9v3.72h-9zM289 233.21h3v3.72h-3zM295 233.21h3v3.72h-3zM301 233.21h3v3.72h-3zM436 233.21h6v3.72h-6zM463 233.21h3v3.72h-3zM469 233.21h3v3.72h-3zM481 233.21h3v3.72h-3zM490 233.21h3v3.72h-3zM559 233.21h3v3.72h-3zM565 233.21h3v3.72h-3zM589 233.21h3v3.72h-3zM271 236.93h9v3.72h-9zM289 236.93h3v3.72h-3zM436 236.93h3v3.72h-3zM463 236.93h3v3.72h-3zM469 236.93h3v3.72h-3zM475 236.93h3v3.72h-3zM529 236.93h9v3.72h-9zM544 236.93h3v3.72h-3zM565 236.93h6v3.72h-6zM586 236.93h3v3.72h-3zM592 236.93h6v3.72h-6zM232 240.64h3v3.72h-3zM238 240.64h3v3.72h-3zM583 240.64h6v3.72h-6zM592 240.64h6v3.72h-6zM187 248.08h3v3.72h-3z"/><path fill="#00ff85" shape-rendering="crispEdges" d="M226 192.30h3v3.72h-3zM64 196.02h3v3.72h-3zM70 196.02h3v3.72h-3zM88 196.02h3v3.72h-3zM103 196.02h6v3.72h-6zM172 196.02h3v3.72h-3zM565 196.02h3v3.72h-3zM109 199.74h3v3.72h-3zM115 199.74h3v3.72h-3zM136 199.74h3v3.72h-3zM142 199.74h6v3.72h-6zM376 199.74h3v3.72h-3zM139 203.46h9v3.72h-9zM154 203.46h3v3.72h-3zM136 207.18h3v3.72h-3zM148 207.18h3v3.72h-3zM160 207.18h3v3.72h-3zM388 207.18h3v3.72h-3zM133 210.89h3v3.72h-3zM157 210.89h3v3.72h-3zM124 214.61h3v3.72h-3zM160 214.61h3v3.72h-3zM388 214.61h3v3.72h-3zM394 214.61h3v3.72h-3zM403 214.61h3v3.72h-3zM112 218.33h3v3.72h-3zM118 218.33h3v3.72h-3zM127 218.33h3v3.72h-3zM133 218.33h3v3.72h-3zM154 218.33h3v3.72h-3zM160 218.33h3v3.72h-3zM385 218.33h3v3.72h-3zM394 218.33h3v3.72h-3zM118 222.05h3v3.72h-3zM127 222.05h6v3.72h-6zM151 222.05h3v3.72h-3zM160 222.05h3v3.72h-3zM394 222.05h3v3.72h-3zM403 222.05h3v3.72h-3zM118 225.77h3v3.72h-3zM124 225.77h3v3.72h-3zM160 225.77h3v3.72h-3zM394 225.77h3v3.72h-3zM403 225.77h3v3.72h-3zM85 229.49h3v3.72h-3zM163 229.49h3v3.72h-3zM367 229.49h3v3.72h-3zM388 229.49h3v3.72h-3zM88 233.21h3v3.72h-3zM97 233.21h3v3.72h-3zM106 233.21h3v3.72h-3zM169 233.21h3v3.72h-3zM367 233.21h3v3.72h-3zM376 233.21h3v3.72h-3zM391 233.21h9v3.72h-9zM406 233.21h3v3.72h-3zM73 236.93h3v3.72h-3zM88 236.93h3v3.72h-3zM376 236.93h3v3.72h-3zM388 236.93h9v3.72h-9zM400 236.93h6v3.72h-6zM31 240.64h6v3.72h-6zM46 240.64h3v3.72h-3zM70 240.64h3v3.72h-3zM355 240.64h3v3.72h-3zM406 240.64h3v3.72h-3zM433 240.64h3v3.72h-3zM253 244.36h3v3.72h-3zM271 244.36h3v3.72h-3zM286 244.36h6v3.72h-6zM295 244.36h3v3.72h-3zM301 244.36h3v3.72h-3zM316 244.36h15v3.72h-15zM334 244.36h3v3.72h-3zM340 244.36h3v3.72h-3zM565 244.36h3v3.72h-3z"/><path fill="#00bbff" shape-rendering="crispEdges" d="M229 192.30h6v3.72h-6zM238 192.30h3v3.72h-3zM235 196.02h3v3.72h-3zM241 196.02h3v3.72h-3zM247 196.02h6v3.72h-6zM265 196.02h3v3.72h-3zM274 196.02h3v3.72h-3zM280 196.02h3v3.72h-3zM289 196.02h6v3.72h-6zM301 196.02h3v3.72h-3zM310 196.02h6v3.72h-6zM322 196.02h3v3.72h-3zM331 196.02h6v3.72h-6zM340 196.02h3v3.72h-3zM349 196.02h3v3.72h-3zM358 196.02h6v3.72h-6zM370 196.02h3v3.72h-3zM388 196.02h3v3.72h-3zM397 196.02h3v3.72h-3zM409 196.02h3v3.72h-3zM415 196.02h3v3.72h-3zM421 196.02h3v3.72h-3zM427 196.02h3v3.72h-3zM439 196.02h6v3.72h-6zM451 196.02h3v3.72h-3zM457 196.02h3v3.72h-3zM466 196.02h3v3.72h-3zM499 196.02h6v3.72h-6zM514 196.02h3v3.72h-3zM523 196.02h6v3.72h-6zM535 196.02h3v3.72h-3zM544 196.02h3v3.72h-3zM553 196.02h3v3.72h-3zM559 196.02h3v3.72h-3zM142 233.21h3v3.72h-3zM142 236.93h3v3.72h-3zM121 240.64h3v3.72h-3zM127 240.64h6v3.72h-6zM136 240.64h3v3.72h-3zM157 240.64h3v3.72h-3zM127 244.36h6v3.72h-6zM154 244.36h3v3.72h-3zM160 244.36h3v3.72h-3zM34 248.08h3v3.72h-3zM43 248.08h3v3.72h-3zM52 248.08h3v3.72h-3zM70 248.08h3v3.72h-3zM175 248.08h3v3.72h-3zM229 248.08h3v3.72h-3zM238 248.08h3v3.72h-3zM259 248.08h3v3.72h-3zM280 248.08h6v3.72h-6zM304 248.08h3v3.72h-3zM331 248.08h3v3.72h-3zM343 248.08h6v3.72h-6zM358 248.08h3v3.72h-3zM379 248.08h3v3.72h-3zM418 248.08h3v3.72h-3zM451 248.08h3v3.72h-3zM457 248.08h3v3.72h-3zM463 248.08h3v3.72h-3zM499 248.08h3v3.72h-3zM505 248.08h3v3.72h-3zM520 248.08h6v3.72h-6zM541 248.08h6v3.72h-6zM550 248.08h3v3.72h-3z"/><path fill="#008bff" shape-rendering="crispEdges" d="M235 192.30h3v3.72h-3zM244 196.02h3v3.72h-3zM271 196.02h3v3.72h-3zM286 196.02h3v3.72h-3zM295 196.02h3v3.72h-3zM304 196.02h6v3.72h-6zM355 196.02h3v3.72h-3zM367 196.02h3v3.72h-3zM373 196.02h3v3.72h-3zM406 196.02h3v3.72h-3zM445 196.02h3v3.72h-3zM460 196.02h3v3.72h-3zM472 196.02h3v3.72h-3zM478 196.02h3v3.72h-3zM484 196.02h3v3.72h-3zM508 196.02h3v3.72h-3zM517 196.02h3v3.72h-3zM547 196.02h3v3.72h-3zM556 196.02h3v3.72h-3zM154 240.64h3v3.72h-3zM121 244.36h3v3.72h-3zM133 244.36h6v3.72h-6zM145 244.36h6v3.72h-6zM31 248.08h3v3.72h-3zM37 248.08h3v3.72h-3zM46 248.08h3v3.72h-3zM67 248.08h3v3.72h-3zM73 248.08h9v3.72h-9zM85 248.08h3v3.72h-3zM253 248.08h3v3.72h-3zM265 248.08h6v3.72h-6zM295 248.08h3v3.72h-3zM319 248.08h3v3.72h-3zM325 248.08h3v3.72h-3zM334 248.08h3v3.72h-3zM367 248.08h6v3.72h-6zM388 248.08h3v3.72h-3zM394 248.08h3v3.72h-3zM400 248.08h12v3.72h-12zM415 248.08h3v3.72h-3zM424 248.08h3v3.72h-3zM433 248.08h3v3.72h-3zM439 248.08h3v3.72h-3zM460 248.08h3v3.72h-3zM472 248.08h3v3.72h-3zM478 248.08h3v3.72h-3zM484 248.08h6v3.72h-6zM496 248.08h3v3.72h-3zM511 248.08h3v3.72h-3zM547 248.08h3v3.72h-3zM553 248.08h6v3.72h-6zM562 248.08h3v3.72h-3z"/><path fill="#005cff" shape-rendering="crispEdges" d="M247 192.30h6v3.72h-6zM562 192.30h3v3.72h-3zM115 244.36h3v3.72h-3zM106 248.08h12v3.72h-12zM286 248.08h3v3.72h-3zM427 248.08h3v3.72h-3zM517 248.08h3v3.72h-3z"/><path fill="#00fffc" shape-rendering="crispEdges" d="M568 192.30h6v3.72h-6zM145 196.02h3v3.72h-3zM154 196.02h3v3.72h-3zM142 229.49h6v3.72h-6zM112 233.21h3v3.72h-3zM130 233.21h3v3.72h-3zM136 233.21h3v3.72h-3zM145 233.21h6v3.72h-6zM154 233.21h6v3.72h-6zM100 236.93h3v3.72h-3zM118 236.93h3v3.72h-3zM127 236.93h6v3.72h-6zM151 236.93h3v3.72h-3zM94 240.64h3v3.72h-3zM34 244.36h6v3.72h-6zM67 244.36h3v3.72h-3zM76 244.36h3v3.72h-3zM82 244.36h3v3.72h-3zM88 244.36h3v3.72h-3zM163 244.36h3v3.72h-3zM391 244.36h3v3.72h-3zM412 244.36h3v3.72h-3zM547 244.36h3v3.72h-3zM568 248.08h3v3.72h-3z"/><path fill="#00ff3d" shape-rendering="crispEdges" d="M577 192.30h6v3.72h-6zM64 199.74h3v3.72h-3zM82 199.74h3v3.72h-3zM94 199.74h3v3.72h-3zM103 199.74h3v3.72h-3zM127 199.74h3v3.72h-3zM163 199.74h6v3.72h-6zM355 199.74h3v3.72h-3zM361 199.74h3v3.72h-3zM382 199.74h3v3.72h-3zM400 199.74h3v3.72h-3zM415 199.74h3v3.72h-3zM493 199.74h3v3.72h-3zM124 203.46h6v3.72h-6zM166 203.46h3v3.72h-3zM367 203.46h3v3.72h-3zM373 203.46h3v3.72h-3zM391 203.46h3v3.72h-3zM406 203.46h3v3.72h-3zM118 207.18h3v3.72h-3zM172 207.18h3v3.72h-3zM373 207.18h3v3.72h-3zM382 207.18h3v3.72h-3zM400 207.18h3v3.72h-3zM412 207.18h3v3.72h-3zM100 210.89h6v3.72h-6zM166 210.89h3v3.72h-3zM370 210.89h6v3.72h-6zM382 210.89h3v3.72h-3zM391 210.89h3v3.72h-3zM85 214.61h3v3.72h-3zM166 214.61h3v3.72h-3zM373 214.61h6v3.72h-6zM385 214.61h3v3.72h-3zM391 214.61h3v3.72h-3zM400 214.61h3v3.72h-3zM100 218.33h9v3.72h-9zM172 218.33h3v3.72h-3zM370 218.33h3v3.72h-3zM382 218.33h3v3.72h-3zM403 218.33h6v3.72h-6zM412 218.33h3v3.72h-3zM67 222.05h3v3.72h-3zM85 222.05h3v3.72h-3zM91 222.05h9v3.72h-9zM163 222.05h3v3.72h-3zM172 222.05h3v3.72h-3zM349 222.05h3v3.72h-3zM370 222.05h3v3.72h-3zM379 222.05h3v3.72h-3zM397 222.05h6v3.72h-6zM406 222.05h6v3.72h-6zM85 225.77h3v3.72h-3zM91 225.77h3v3.72h-3zM106 225.77h3v3.72h-3zM163 225.77h3v3.72h-3zM169 225.77h6v3.72h-6zM358 225.77h3v3.72h-3zM373 225.77h3v3.72h-3zM379 225.77h3v3.72h-3zM406 225.77h6v3.72h-6zM415 225.77h3v3.72h-3zM67 229.49h3v3.72h-3zM172 229.49h3v3.72h-3zM397 229.49h6v3.72h-6zM406 229.49h9v3.72h-9zM70 233.21h9v3.72h-9zM508 233.21h3v3.72h-3zM49 236.93h3v3.72h-3zM55 236.93h9v3.72h-9zM346 236.93h3v3.72h-3zM358 236.93h3v3.72h-3zM364 236.93h3v3.72h-3zM505 236.93h3v3.72h-3zM511 236.93h3v3.72h-3zM517 236.93h3v3.72h-3zM556 236.93h3v3.72h-3zM253 240.64h6v3.72h-6zM301 240.64h3v3.72h-3zM316 240.64h3v3.72h-3zM322 240.64h6v3.72h-6zM331 240.64h3v3.72h-3zM337 240.64h3v3.72h-3zM358 240.64h3v3.72h-3zM418 240.64h3v3.72h-3zM430 240.64h3v3.72h-3zM436 240.64h3v3.72h-3zM445 240.64h3v3.72h-3zM451 240.64h6v3.72h-6zM472 240.64h6v3.72h-6zM490 240.64h9v3.72h-9zM502 240.64h3v3.72h-3zM520 240.64h6v3.72h-6zM535 240.64h3v3.72h-3zM541 240.64h3v3.72h-3zM571 240.64h3v3.72h-3zM232 244.36h3v3.72h-3zM241 244.36h3v3.72h-3zM259 244.36h3v3.72h-3zM304 244.36h3v3.72h-3zM343 244.36h3v3.72h-3zM598 248.08h3v3.72h-3z"/><path fill="#22ff00" shape-rendering="crispEdges" d="M583 192.30h3v3.72h-3zM175 196.02h3v3.72h-3zM574 196.02h3v3.72h-3zM46 199.74h3v3.72h-3zM76 199.74h3v3.72h-3zM253 199.74h3v3.72h-3zM265 199.74h9v3.72h-9zM286 199.74h3v3.72h-3zM301 199.74h3v3.72h-3zM313 199.74h3v3.72h-3zM334 199.74h6v3.72h-6zM451 199.74h6v3.72h-6zM463 199.74h6v3.72h-6zM481 199.74h3v3.72h-3zM487 199.74h3v3.72h-3zM505 199.74h3v3.72h-3zM514 199.74h3v3.72h-3zM520 199.74h6v3.72h-6zM529 199.74h3v3.72h-3zM538 199.74h3v3.72h-3zM547 199.74h3v3.72h-3zM559 199.74h3v3.72h-3zM565 199.74h6v3.72h-6zM574 199.74h9v3.72h-9zM37 203.46h3v3.72h-3zM61 203.46h3v3.72h-3zM73 203.46h3v3.72h-3zM88 203.46h3v3.72h-3zM319 203.46h3v3.72h-3zM331 203.46h3v3.72h-3zM421 203.46h3v3.72h-3zM427 203.46h3v3.72h-3zM433 203.46h3v3.72h-3zM439 203.46h3v3.72h-3zM454 203.46h3v3.72h-3zM460 203.46h3v3.72h-3zM487 203.46h3v3.72h-3zM508 203.46h3v3.72h-3zM538 203.46h3v3.72h-3zM547 203.46h3v3.72h-3zM52 207.18h6v3.72h-6zM61 207.18h3v3.72h-3zM73 207.18h6v3.72h-6zM82 207.18h3v3.72h-3zM250 207.18h6v3.72h-6zM319 207.18h9v3.72h-9zM334 207.18h3v3.72h-3zM346 207.18h3v3.72h-3zM352 207.18h3v3.72h-3zM415 207.18h6v3.72h-6zM496 207.18h3v3.72h-3zM571 207.18h3v3.72h-3zM46 210.89h3v3.72h-3zM52 210.89h9v3.72h-9zM64 210.89h3v3.72h-3zM70 210.89h3v3.72h-3zM244 210.89h9v3.72h-9zM256 210.89h3v3.72h-3zM322 210.89h3v3.72h-3zM418 210.89h3v3.72h-3zM496 210.89h6v3.72h-6zM52 214.61h3v3.72h-3zM61 214.61h6v3.72h-6zM256 214.61h3v3.72h-3zM325 214.61h3v3.72h-3zM418 214.61h3v3.72h-3zM508 214.61h3v3.72h-3zM562 214.61h3v3.72h-3zM571 214.61h3v3.72h-3zM34 218.33h6v3.72h-6zM46 218.33h3v3.72h-3zM55 218.33h3v3.72h-3zM64 218.33h3v3.72h-3zM325 218.33h9v3.72h-9zM340 218.33h3v3.72h-3zM346 218.33h3v3.72h-3zM352 218.33h3v3.72h-3zM487 218.33h3v3.72h-3zM499 218.33h3v3.72h-3zM508 218.33h3v3.72h-3zM562 218.33h3v3.72h-3zM571 218.33h3v3.72h-3zM31 222.05h3v3.72h-3zM46 222.05h3v3.72h-3zM319 222.05h3v3.72h-3zM325 222.05h3v3.72h-3zM334 222.05h3v3.72h-3zM427 222.05h3v3.72h-3zM502 222.05h3v3.72h-3zM508 222.05h3v3.72h-3zM559 222.05h3v3.72h-3zM580 222.05h3v3.72h-3zM46 225.77h3v3.72h-3zM313 225.77h3v3.72h-3zM343 225.77h3v3.72h-3zM352 225.77h3v3.72h-3zM418 225.77h3v3.72h-3zM424 225.77h6v3.72h-6zM433 225.77h3v3.72h-3zM445 225.77h3v3.72h-3zM478 225.77h3v3.72h-3zM490 225.77h3v3.72h-3zM499 225.77h3v3.72h-3zM559 225.77h3v3.72h-3zM565 225.77h3v3.72h-3zM580 225.77h3v3.72h-3zM31 229.49h6v3.72h-6zM46 229.49h6v3.72h-6zM307 229.49h6v3.72h-6zM316 229.49h3v3.72h-3zM421 229.49h3v3.72h-3zM439 229.49h3v3.72h-3zM448 229.49h3v3.72h-3zM457 229.49h3v3.72h-3zM478 229.49h3v3.72h-3zM493 229.49h3v3.72h-3zM499 229.49h3v3.72h-3zM505 229.49h3v3.72h-3zM556 229.49h9v3.72h-9zM568 229.49h3v3.72h-3zM574 229.49h3v3.72h-3zM31 233.21h6v3.72h-6zM49 233.21h3v3.72h-3zM175 233.21h3v3.72h-3zM262 233.21h6v3.72h-6zM271 233.21h3v3.72h-3zM304 233.21h3v3.72h-3zM322 233.21h3v3.72h-3zM343 233.21h3v3.72h-3zM424 233.21h6v3.72h-6zM442 233.21h6v3.72h-6zM457 233.21h3v3.72h-3zM472 233.21h3v3.72h-3zM520 233.21h9v3.72h-9zM574 233.21h3v3.72h-3zM40 236.93h3v3.72h-3zM250 236.93h3v3.72h-3zM262 236.93h9v3.72h-9zM286 236.93h3v3.72h-3zM304 236.93h6v3.72h-6zM442 236.93h3v3.72h-3zM451 236.93h3v3.72h-3zM541 236.93h3v3.72h-3zM547 236.93h9v3.72h-9zM589 236.93h3v3.72h-3zM235 240.64h3v3.72h-3zM259 240.64h3v3.72h-3zM298 240.64h3v3.72h-3zM589 240.64h3v3.72h-3zM178 244.36h3v3.72h-3zM592 244.36h3v3.72h-3z"/><path fill="#ffee00" shape-rendering="crispEdges" d="M601 192.30h3v3.72h-3zM205 196.02h3v3.72h-3zM226 199.74h3v3.72h-3zM304 210.89h3v3.72h-3zM526 210.89h3v3.72h-3zM595 210.89h3v3.72h-3zM184 214.61h3v3.72h-3zM226 214.61h3v3.72h-3zM304 214.61h3v3.72h-3zM595 214.61h3v3.72h-3zM226 218.33h3v3.72h-3zM550 225.77h3v3.72h-3zM178 229.49h3v3.72h-3zM226 229.49h3v3.72h-3zM226 233.21h3v3.72h-3zM226 236.93h3v3.72h-3zM184 240.64h3v3.72h-3z"/><path fill="#ffbe00" shape-rendering="crispEdges" d="M604 192.30h6v3.72h-6zM619 192.30h3v3.72h-3zM625 192.30h3v3.72h-3zM193 196.02h3v3.72h-3zM202 196.02h3v3.72h-3zM217 196.02h3v3.72h-3zM193 199.74h3v3.72h-3zM223 199.74h3v3.72h-3zM184 203.46h3v3.72h-3zM190 203.46h3v3.72h-3zM535 207.18h3v3.72h-3zM544 207.18h3v3.72h-3zM529 214.61h3v3.72h-3zM553 214.61h3v3.72h-3zM187 218.33h6v3.72h-6zM274 218.33h3v3.72h-3zM301 218.33h3v3.72h-3zM547 218.33h3v3.72h-3zM553 218.33h3v3.72h-3zM184 222.05h3v3.72h-3zM226 222.05h3v3.72h-3zM274 222.05h3v3.72h-3zM529 222.05h3v3.72h-3zM547 222.05h3v3.72h-3zM184 225.77h3v3.72h-3zM226 225.77h3v3.72h-3zM598 229.49h3v3.72h-3zM223 244.36h3v3.72h-3z"/><path fill="#ff8f00" shape-rendering="crispEdges" d="M610 192.30h3v3.72h-3zM628 192.30h6v3.72h-6zM196 199.74h3v3.72h-3zM202 199.74h3v3.72h-3zM187 203.46h3v3.72h-3zM301 210.89h3v3.72h-3zM529 210.89h3v3.72h-3zM553 210.89h3v3.72h-3zM223 214.61h3v3.72h-3zM547 214.61h3v3.72h-3zM193 218.33h6v3.72h-6zM202 218.33h6v3.72h-6zM538 218.33h9v3.72h-9zM550 218.33h3v3.72h-3zM280 222.05h3v3.72h-3zM286 222.05h3v3.72h-3zM295 222.05h3v3.72h-3zM535 222.05h3v3.72h-3zM541 222.05h6v3.72h-6zM601 222.05h3v3.72h-3zM601 225.77h3v3.72h-3zM184 229.49h3v3.72h-3zM223 236.93h3v3.72h-3zM625 248.08h3v3.72h-3z"/><path fill="#ff4700" shape-rendering="crispEdges" d="M613 192.30h3v3.72h-3zM622 192.30h3v3.72h-3zM625 196.02h3v3.72h-3zM601 199.74h3v3.72h-3zM196 203.46h3v3.72h-3zM208 203.46h3v3.72h-3zM598 203.46h3v3.72h-3zM187 207.18h3v3.72h-3zM286 207.18h6v3.72h-6zM277 210.89h3v3.72h-3zM532 210.89h3v3.72h-3zM541 210.89h3v3.72h-3zM550 210.89h3v3.72h-3zM193 214.61h3v3.72h-3zM199 214.61h9v3.72h-9zM280 214.61h3v3.72h-3zM286 214.61h3v3.72h-3zM295 214.61h3v3.72h-3zM601 214.61h3v3.72h-3zM283 218.33h3v3.72h-3zM535 218.33h3v3.72h-3zM601 218.33h3v3.72h-3zM190 222.05h3v3.72h-3zM202 222.05h3v3.72h-3zM223 222.05h3v3.72h-3zM187 225.77h3v3.72h-3zM604 229.49h3v3.72h-3zM187 233.21h3v3.72h-3zM604 233.21h3v3.72h-3zM604 236.93h3v3.72h-3zM187 240.64h3v3.72h-3zM193 244.36h3v3.72h-3zM199 244.36h3v3.72h-3zM211 244.36h3v3.72h-3zM217 244.36h3v3.72h-3zM607 248.08h3v3.72h-3zM628 248.08h3v3.72h-3zM634 248.08h1v3.72h-1z"/><path fill="#ff7700" shape-rendering="crispEdges" d="M616 192.30h3v3.72h-3zM634 192.30h1v3.72h-1zM601 196.02h3v3.72h-3zM199 199.74h3v3.72h-3zM214 199.74h3v3.72h-3zM220 199.74h3v3.72h-3zM598 199.74h3v3.72h-3zM199 203.46h9v3.72h-9zM223 203.46h3v3.72h-3zM223 207.18h3v3.72h-3zM277 207.18h3v3.72h-3zM295 207.18h3v3.72h-3zM223 210.89h3v3.72h-3zM274 210.89h3v3.72h-3zM547 210.89h3v3.72h-3zM187 214.61h6v3.72h-6zM277 214.61h3v3.72h-3zM301 214.61h3v3.72h-3zM199 218.33h3v3.72h-3zM208 218.33h3v3.72h-3zM223 218.33h3v3.72h-3zM277 218.33h6v3.72h-6zM532 218.33h3v3.72h-3zM289 222.05h3v3.72h-3zM550 222.05h3v3.72h-3zM223 225.77h3v3.72h-3zM223 240.64h3v3.72h-3zM604 240.64h3v3.72h-3zM190 244.36h3v3.72h-3zM202 244.36h3v3.72h-3zM604 244.36h3v3.72h-3zM610 248.08h3v3.72h-3z"/><path fill="#00ffcc" shape-rendering="crispEdges" d="M31 196.02h3v3.72h-3zM37 196.02h3v3.72h-3zM67 196.02h3v3.72h-3zM85 196.02h3v3.72h-3zM100 196.02h3v3.72h-3zM112 196.02h3v3.72h-3zM124 196.02h3v3.72h-3zM151 196.02h3v3.72h-3zM145 222.05h3v3.72h-3zM148 225.77h3v3.72h-3zM109 229.49h3v3.72h-3zM121 229.49h6v3.72h-6zM139 229.49h3v3.72h-3zM154 229.49h3v3.72h-3zM127 233.21h3v3.72h-3zM151 233.21h3v3.72h-3zM103 236.93h3v3.72h-3zM73 240.64h3v3.72h-3zM79 240.64h3v3.72h-3zM169 240.64h6v3.72h-6zM367 240.64h3v3.72h-3zM400 240.64h3v3.72h-3zM31 244.36h3v3.72h-3zM43 244.36h3v3.72h-3zM52 244.36h6v3.72h-6zM64 244.36h3v3.72h-3zM73 244.36h3v3.72h-3zM169 244.36h3v3.72h-3zM355 244.36h3v3.72h-3zM373 244.36h6v3.72h-6zM385 244.36h3v3.72h-3zM418 244.36h6v3.72h-6zM427 244.36h6v3.72h-6zM445 244.36h6v3.72h-6zM466 244.36h3v3.72h-3zM472 244.36h3v3.72h-3zM478 244.36h3v3.72h-3zM493 244.36h6v3.72h-6zM502 244.36h3v3.72h-3zM514 244.36h3v3.72h-3zM529 244.36h3v3.72h-3zM562 244.36h3v3.72h-3z"/><path fill="#00ff6d" shape-rendering="crispEdges" d="M43 196.02h3v3.72h-3zM163 196.02h3v3.72h-3zM112 199.74h3v3.72h-3zM133 199.74h3v3.72h-3zM148 199.74h3v3.72h-3zM154 199.74h9v3.72h-9zM388 199.74h3v3.72h-3zM406 199.74h3v3.72h-3zM109 203.46h9v3.72h-9zM130 203.46h9v3.72h-9zM148 203.46h3v3.72h-3zM400 203.46h3v3.72h-3zM115 207.18h3v3.72h-3zM127 207.18h3v3.72h-3zM133 207.18h3v3.72h-3zM139 207.18h3v3.72h-3zM145 207.18h3v3.72h-3zM367 207.18h3v3.72h-3zM376 207.18h3v3.72h-3zM403 207.18h3v3.72h-3zM109 210.89h3v3.72h-3zM121 210.89h9v3.72h-9zM136 210.89h3v3.72h-3zM367 210.89h3v3.72h-3zM376 210.89h3v3.72h-3zM403 210.89h3v3.72h-3zM112 214.61h3v3.72h-3zM118 214.61h6v3.72h-6zM139 214.61h3v3.72h-3zM163 214.61h3v3.72h-3zM109 218.33h3v3.72h-3zM124 218.33h3v3.72h-3zM151 218.33h3v3.72h-3zM163 218.33h6v3.72h-6zM373 218.33h6v3.72h-6zM388 218.33h3v3.72h-3zM400 218.33h3v3.72h-3zM100 222.05h3v3.72h-3zM124 222.05h3v3.72h-3zM367 222.05h3v3.72h-3zM376 222.05h3v3.72h-3zM382 222.05h3v3.72h-3zM388 222.05h6v3.72h-6zM412 222.05h3v3.72h-3zM82 225.77h3v3.72h-3zM361 225.77h3v3.72h-3zM367 225.77h3v3.72h-3zM376 225.77h3v3.72h-3zM388 225.77h6v3.72h-6zM397 225.77h3v3.72h-3zM106 229.49h3v3.72h-3zM376 229.49h3v3.72h-3zM385 229.49h3v3.72h-3zM391 229.49h6v3.72h-6zM79 233.21h3v3.72h-3zM85 233.21h3v3.72h-3zM91 233.21h6v3.72h-6zM355 233.21h3v3.72h-3zM361 233.21h6v3.72h-6zM388 233.21h3v3.72h-3zM400 233.21h3v3.72h-3zM412 233.21h3v3.72h-3zM37 236.93h3v3.72h-3zM76 236.93h3v3.72h-3zM355 236.93h3v3.72h-3zM373 236.93h3v3.72h-3zM379 236.93h3v3.72h-3zM406 236.93h3v3.72h-3zM412 236.93h3v3.72h-3zM28 240.64h3v3.72h-3zM40 240.64h3v3.72h-3zM52 240.64h3v3.72h-3zM58 240.64h3v3.72h-3zM328 240.64h3v3.72h-3zM349 240.64h3v3.72h-3zM361 240.64h6v3.72h-6zM370 240.64h6v3.72h-6zM382 240.64h3v3.72h-3zM415 240.64h3v3.72h-3zM424 240.64h6v3.72h-6zM478 240.64h3v3.72h-3zM487 240.64h3v3.72h-3zM505 240.64h6v3.72h-6zM517 240.64h3v3.72h-3zM556 240.64h3v3.72h-3zM244 244.36h3v3.72h-3zM250 244.36h3v3.72h-3zM274 244.36h3v3.72h-3zM280 244.36h6v3.72h-6zM292 244.36h3v3.72h-3zM298 244.36h3v3.72h-3zM310 244.36h3v3.72h-3zM337 244.36h3v3.72h-3zM352 244.36h3v3.72h-3zM568 244.36h3v3.72h-3zM577 244.36h3v3.72h-3zM184 248.08h3v3.72h-3zM583 248.08h6v3.72h-6z"/><path fill="#00ffb4" shape-rendering="crispEdges" d="M55 196.02h3v3.72h-3zM61 196.02h3v3.72h-3zM79 196.02h6v3.72h-6zM121 196.02h3v3.72h-3zM127 196.02h3v3.72h-3zM160 196.02h3v3.72h-3zM166 196.02h3v3.72h-3zM142 210.89h3v3.72h-3zM133 214.61h3v3.72h-3zM142 214.61h6v3.72h-6zM136 218.33h3v3.72h-3zM142 218.33h6v3.72h-6zM157 218.33h3v3.72h-3zM133 222.05h6v3.72h-6zM142 222.05h3v3.72h-3zM148 222.05h3v3.72h-3zM154 222.05h6v3.72h-6zM112 225.77h6v3.72h-6zM121 225.77h3v3.72h-3zM127 225.77h3v3.72h-3zM136 225.77h3v3.72h-3zM145 225.77h3v3.72h-3zM151 225.77h6v3.72h-6zM151 229.49h3v3.72h-3zM103 233.21h3v3.72h-3zM118 233.21h3v3.72h-3zM124 233.21h3v3.72h-3zM163 233.21h6v3.72h-6zM79 236.93h3v3.72h-3zM91 236.93h9v3.72h-9zM172 236.93h3v3.72h-3zM37 240.64h3v3.72h-3zM64 240.64h6v3.72h-6zM76 240.64h3v3.72h-3zM385 240.64h6v3.72h-6zM394 240.64h3v3.72h-3zM49 244.36h3v3.72h-3zM70 244.36h3v3.72h-3zM331 244.36h3v3.72h-3zM364 244.36h3v3.72h-3zM370 244.36h3v3.72h-3zM379 244.36h3v3.72h-3zM424 244.36h3v3.72h-3zM433 244.36h12v3.72h-12zM454 244.36h6v3.72h-6zM469 244.36h3v3.72h-3zM481 244.36h3v3.72h-3zM487 244.36h6v3.72h-6zM499 244.36h3v3.72h-3zM505 244.36h3v3.72h-3zM520 244.36h3v3.72h-3zM532 244.36h3v3.72h-3zM544 244.36h3v3.72h-3zM553 244.36h3v3.72h-3zM577 248.08h3v3.72h-3z"/><path fill="#00ff55" shape-rendering="crispEdges" d="M97 196.02h3v3.72h-3zM169 196.02h3v3.72h-3zM568 196.02h6v3.72h-6zM100 199.74h3v3.72h-3zM118 199.74h9v3.72h-9zM130 199.74h3v3.72h-3zM139 199.74h3v3.72h-3zM151 199.74h3v3.72h-3zM367 199.74h3v3.72h-3zM385 199.74h3v3.72h-3zM391 199.74h9v3.72h-9zM403 199.74h3v3.72h-3zM412 199.74h3v3.72h-3zM121 203.46h3v3.72h-3zM151 203.46h3v3.72h-3zM157 203.46h6v3.72h-6zM376 203.46h3v3.72h-3zM385 203.46h6v3.72h-6zM403 203.46h3v3.72h-3zM100 207.18h3v3.72h-3zM109 207.18h6v3.72h-6zM121 207.18h6v3.72h-6zM130 207.18h3v3.72h-3zM151 207.18h3v3.72h-3zM361 207.18h3v3.72h-3zM385 207.18h3v3.72h-3zM391 207.18h9v3.72h-9zM406 207.18h3v3.72h-3zM118 210.89h3v3.72h-3zM151 210.89h3v3.72h-3zM385 210.89h6v3.72h-6zM394 210.89h9v3.72h-9zM406 210.89h3v3.72h-3zM109 214.61h3v3.72h-3zM127 214.61h3v3.72h-3zM151 214.61h3v3.72h-3zM172 214.61h3v3.72h-3zM367 214.61h3v3.72h-3zM397 214.61h3v3.72h-3zM367 218.33h3v3.72h-3zM391 218.33h3v3.72h-3zM397 218.33h3v3.72h-3zM103 222.05h3v3.72h-3zM166 222.05h3v3.72h-3zM355 222.05h3v3.72h-3zM361 222.05h6v3.72h-6zM373 222.05h3v3.72h-3zM385 222.05h3v3.72h-3zM94 225.77h12v3.72h-12zM166 225.77h3v3.72h-3zM355 225.77h3v3.72h-3zM370 225.77h3v3.72h-3zM382 225.77h6v3.72h-6zM400 225.77h3v3.72h-3zM79 229.49h6v3.72h-6zM88 229.49h12v3.72h-12zM103 229.49h3v3.72h-3zM169 229.49h3v3.72h-3zM361 229.49h3v3.72h-3zM373 229.49h3v3.72h-3zM403 229.49h3v3.72h-3zM82 233.21h3v3.72h-3zM328 233.21h3v3.72h-3zM349 233.21h3v3.72h-3zM373 233.21h3v3.72h-3zM379 233.21h6v3.72h-6zM403 233.21h3v3.72h-3zM409 233.21h3v3.72h-3zM64 236.93h9v3.72h-9zM349 236.93h3v3.72h-3zM382 236.93h3v3.72h-3zM409 236.93h3v3.72h-3zM415 236.93h3v3.72h-3zM508 236.93h3v3.72h-3zM43 240.64h3v3.72h-3zM49 240.64h3v3.72h-3zM334 240.64h3v3.72h-3zM346 240.64h3v3.72h-3zM379 240.64h3v3.72h-3zM439 240.64h3v3.72h-3zM460 240.64h3v3.72h-3zM466 240.64h6v3.72h-6zM484 240.64h3v3.72h-3zM511 240.64h6v3.72h-6zM526 240.64h3v3.72h-3zM538 240.64h3v3.72h-3zM547 240.64h6v3.72h-6zM559 240.64h6v3.72h-6zM235 244.36h3v3.72h-3zM247 244.36h3v3.72h-3zM262 244.36h6v3.72h-6zM277 244.36h3v3.72h-3zM580 244.36h3v3.72h-3zM589 248.08h6v3.72h-6z"/><path fill="#00ffe4" shape-rendering="crispEdges" d="M109 196.02h3v3.72h-3zM115 196.02h3v3.72h-3zM130 196.02h3v3.72h-3zM136 196.02h6v3.72h-6zM148 196.02h3v3.72h-3zM157 196.02h3v3.72h-3zM130 225.77h3v3.72h-3zM142 225.77h3v3.72h-3zM112 229.49h6v3.72h-6zM130 229.49h9v3.72h-9zM148 229.49h3v3.72h-3zM157 229.49h6v3.72h-6zM109 233.21h3v3.72h-3zM115 233.21h3v3.72h-3zM121 233.21h3v3.72h-3zM133 233.21h3v3.72h-3zM139 233.21h3v3.72h-3zM160 233.21h3v3.72h-3zM124 236.93h3v3.72h-3zM163 236.93h6v3.72h-6zM82 240.64h12v3.72h-12zM97 240.64h3v3.72h-3zM103 240.64h6v3.72h-6zM403 240.64h3v3.72h-3zM28 244.36h3v3.72h-3zM46 244.36h3v3.72h-3zM58 244.36h6v3.72h-6zM79 244.36h3v3.72h-3zM172 244.36h3v3.72h-3zM361 244.36h3v3.72h-3zM367 244.36h3v3.72h-3zM388 244.36h3v3.72h-3zM394 244.36h9v3.72h-9zM406 244.36h6v3.72h-6zM415 244.36h3v3.72h-3zM451 244.36h3v3.72h-3zM460 244.36h6v3.72h-6zM484 244.36h3v3.72h-3zM508 244.36h6v3.72h-6zM523 244.36h6v3.72h-6zM535 244.36h9v3.72h-9zM556 244.36h3v3.72h-3zM178 248.08h3v3.72h-3zM574 248.08h3v3.72h-3z"/><path fill="#00d3ff" shape-rendering="crispEdges" d="M142 196.02h3v3.72h-3zM229 196.02h3v3.72h-3zM262 196.02h3v3.72h-3zM298 196.02h3v3.72h-3zM337 196.02h3v3.72h-3zM352 196.02h3v3.72h-3zM364 196.02h3v3.72h-3zM385 196.02h3v3.72h-3zM400 196.02h3v3.72h-3zM418 196.02h3v3.72h-3zM424 196.02h3v3.72h-3zM430 196.02h3v3.72h-3zM436 196.02h3v3.72h-3zM463 196.02h3v3.72h-3zM475 196.02h3v3.72h-3zM481 196.02h3v3.72h-3zM505 196.02h3v3.72h-3zM550 196.02h3v3.72h-3zM115 236.93h3v3.72h-3zM139 236.93h3v3.72h-3zM100 240.64h3v3.72h-3zM118 240.64h3v3.72h-3zM124 240.64h3v3.72h-3zM151 240.64h3v3.72h-3zM160 240.64h3v3.72h-3zM85 244.36h3v3.72h-3zM94 244.36h9v3.72h-9zM118 244.36h3v3.72h-3zM166 244.36h3v3.72h-3zM40 248.08h3v3.72h-3zM49 248.08h3v3.72h-3zM232 248.08h3v3.72h-3zM247 248.08h6v3.72h-6zM274 248.08h3v3.72h-3zM292 248.08h3v3.72h-3zM298 248.08h3v3.72h-3zM313 248.08h3v3.72h-3zM340 248.08h3v3.72h-3zM352 248.08h3v3.72h-3zM364 248.08h3v3.72h-3zM436 248.08h3v3.72h-3zM469 248.08h3v3.72h-3zM475 248.08h3v3.72h-3zM502 248.08h3v3.72h-3zM529 248.08h3v3.72h-3zM571 248.08h3v3.72h-3z"/><path fill="#ffa700" shape-rendering="crispEdges" d="M196 196.02h3v3.72h-3zM208 196.02h9v3.72h-9zM187 199.74h6v3.72h-6zM205 199.74h3v3.72h-3zM211 199.74h3v3.72h-3zM184 207.18h3v3.72h-3zM541 207.18h3v3.72h-3zM550 207.18h3v3.72h-3zM184 210.89h3v3.72h-3zM598 210.89h3v3.72h-3zM274 214.61h3v3.72h-3zM529 218.33h3v3.72h-3zM283 222.05h3v3.72h-3zM532 222.05h3v3.72h-3zM538 222.05h3v3.72h-3zM184 233.21h3v3.72h-3zM601 233.21h3v3.72h-3z"/><path fill="#ffd600" shape-rendering="crispEdges" d="M199 196.02h3v3.72h-3zM598 196.02h3v3.72h-3zM274 207.18h3v3.72h-3zM301 207.18h3v3.72h-3zM532 207.18h3v3.72h-3zM538 207.18h3v3.72h-3zM547 207.18h3v3.72h-3zM595 207.18h3v3.72h-3zM226 210.89h3v3.72h-3zM592 210.89h3v3.72h-3zM301 222.05h3v3.72h-3zM184 236.93h3v3.72h-3zM601 236.93h3v3.72h-3zM601 240.64h3v3.72h-3zM187 244.36h3v3.72h-3zM604 248.08h3v3.72h-3z"/><path fill="#ff5f00" shape-rendering="crispEdges" d="M220 196.02h3v3.72h-3zM208 199.74h3v3.72h-3zM217 199.74h3v3.72h-3zM193 203.46h3v3.72h-3zM211 203.46h6v3.72h-6zM280 207.18h3v3.72h-3zM298 207.18h3v3.72h-3zM598 207.18h3v3.72h-3zM187 210.89h3v3.72h-3zM295 210.89h3v3.72h-3zM544 210.89h3v3.72h-3zM604 210.89h3v3.72h-3zM538 214.61h3v3.72h-3zM550 214.61h3v3.72h-3zM598 214.61h3v3.72h-3zM286 218.33h3v3.72h-3zM295 218.33h3v3.72h-3zM598 218.33h3v3.72h-3zM187 222.05h3v3.72h-3zM277 222.05h3v3.72h-3zM292 222.05h3v3.72h-3zM298 222.05h3v3.72h-3zM223 229.49h3v3.72h-3zM601 229.49h3v3.72h-3zM223 233.21h3v3.72h-3zM187 236.93h3v3.72h-3zM205 244.36h3v3.72h-3zM214 244.36h3v3.72h-3zM613 248.08h9v3.72h-9zM631 248.08h3v3.72h-3z"/><path fill="#0aff00" shape-rendering="crispEdges" d="M226 196.02h3v3.72h-3zM49 199.74h6v3.72h-6zM58 199.74h3v3.72h-3zM73 199.74h3v3.72h-3zM97 199.74h3v3.72h-3zM256 199.74h3v3.72h-3zM316 199.74h3v3.72h-3zM322 199.74h3v3.72h-3zM340 199.74h3v3.72h-3zM352 199.74h3v3.72h-3zM427 199.74h3v3.72h-3zM433 199.74h3v3.72h-3zM445 199.74h6v3.72h-6zM460 199.74h3v3.72h-3zM472 199.74h3v3.72h-3zM478 199.74h3v3.72h-3zM484 199.74h3v3.72h-3zM490 199.74h3v3.72h-3zM499 199.74h6v3.72h-6zM526 199.74h3v3.72h-3zM535 199.74h3v3.72h-3zM553 199.74h3v3.72h-3zM562 199.74h3v3.72h-3zM571 199.74h3v3.72h-3zM67 203.46h3v3.72h-3zM76 203.46h6v3.72h-6zM91 203.46h3v3.72h-3zM103 203.46h6v3.72h-6zM169 203.46h3v3.72h-3zM334 203.46h3v3.72h-3zM340 203.46h3v3.72h-3zM346 203.46h3v3.72h-3zM358 203.46h3v3.72h-3zM415 203.46h3v3.72h-3zM493 203.46h6v3.72h-6zM562 203.46h3v3.72h-3zM37 207.18h3v3.72h-3zM85 207.18h6v3.72h-6zM97 207.18h3v3.72h-3zM103 207.18h6v3.72h-6zM256 207.18h3v3.72h-3zM328 207.18h3v3.72h-3zM340 207.18h3v3.72h-3zM358 207.18h3v3.72h-3zM502 207.18h3v3.72h-3zM517 207.18h3v3.72h-3zM61 210.89h3v3.72h-3zM73 210.89h6v3.72h-6zM88 210.89h3v3.72h-3zM253 210.89h3v3.72h-3zM349 210.89h9v3.72h-9zM415 210.89h3v3.72h-3zM31 214.61h3v3.72h-3zM37 214.61h3v3.72h-3zM70 214.61h6v3.72h-6zM415 214.61h3v3.72h-3zM499 214.61h3v3.72h-3zM61 218.33h3v3.72h-3zM67 218.33h6v3.72h-6zM76 218.33h3v3.72h-3zM358 218.33h3v3.72h-3zM409 218.33h3v3.72h-3zM415 218.33h6v3.72h-6zM493 218.33h3v3.72h-3zM502 218.33h3v3.72h-3zM574 218.33h3v3.72h-3zM37 222.05h3v3.72h-3zM55 222.05h3v3.72h-3zM61 222.05h6v3.72h-6zM70 222.05h3v3.72h-3zM76 222.05h3v3.72h-3zM322 222.05h3v3.72h-3zM331 222.05h3v3.72h-3zM340 222.05h3v3.72h-3zM346 222.05h3v3.72h-3zM418 222.05h3v3.72h-3zM493 222.05h3v3.72h-3zM562 222.05h3v3.72h-3zM574 222.05h3v3.72h-3zM55 225.77h3v3.72h-3zM61 225.77h3v3.72h-3zM70 225.77h3v3.72h-3zM79 225.77h3v3.72h-3zM310 225.77h3v3.72h-3zM316 225.77h6v3.72h-6zM325 225.77h3v3.72h-3zM337 225.77h3v3.72h-3zM346 225.77h3v3.72h-3zM421 225.77h3v3.72h-3zM493 225.77h3v3.72h-3zM508 225.77h3v3.72h-3zM517 225.77h3v3.72h-3zM571 225.77h6v3.72h-6zM52 229.49h3v3.72h-3zM58 229.49h3v3.72h-3zM319 229.49h3v3.72h-3zM331 229.49h3v3.72h-3zM337 229.49h3v3.72h-3zM346 229.49h3v3.72h-3zM430 229.49h3v3.72h-3zM460 229.49h3v3.72h-3zM487 229.49h3v3.72h-3zM496 229.49h3v3.72h-3zM508 229.49h6v3.72h-6zM517 229.49h3v3.72h-3zM577 229.49h3v3.72h-3zM43 233.21h3v3.72h-3zM52 233.21h3v3.72h-3zM58 233.21h3v3.72h-3zM250 233.21h6v3.72h-6zM268 233.21h3v3.72h-3zM310 233.21h9v3.72h-9zM325 233.21h3v3.72h-3zM334 233.21h3v3.72h-3zM352 233.21h3v3.72h-3zM421 233.21h3v3.72h-3zM448 233.21h6v3.72h-6zM460 233.21h3v3.72h-3zM478 233.21h3v3.72h-3zM493 233.21h3v3.72h-3zM505 233.21h3v3.72h-3zM514 233.21h6v3.72h-6zM556 233.21h3v3.72h-3zM562 233.21h3v3.72h-3zM175 236.93h3v3.72h-3zM244 236.93h3v3.72h-3zM253 236.93h3v3.72h-3zM280 236.93h6v3.72h-6zM295 236.93h3v3.72h-3zM313 236.93h6v3.72h-6zM337 236.93h3v3.72h-3zM424 236.93h3v3.72h-3zM439 236.93h3v3.72h-3zM454 236.93h3v3.72h-3zM472 236.93h3v3.72h-3zM520 236.93h3v3.72h-3zM559 236.93h3v3.72h-3zM574 236.93h9v3.72h-9zM241 240.64h3v3.72h-3zM247 240.64h6v3.72h-6zM262 240.64h3v3.72h-3zM274 240.64h3v3.72h-3zM289 240.64h3v3.72h-3zM304 240.64h3v3.72h-3zM577 240.64h6v3.72h-6z"/><path fill="#00a3ff" shape-rendering="crispEdges" d="M253 196.02h6v3.72h-6zM268 196.02h3v3.72h-3zM277 196.02h3v3.72h-3zM283 196.02h3v3.72h-3zM316 196.02h6v3.72h-6zM325 196.02h6v3.72h-6zM346 196.02h3v3.72h-3zM376 196.02h3v3.72h-3zM382 196.02h3v3.72h-3zM391 196.02h6v3.72h-6zM403 196.02h3v3.72h-3zM412 196.02h3v3.72h-3zM433 196.02h3v3.72h-3zM454 196.02h3v3.72h-3zM487 196.02h12v3.72h-12zM511 196.02h3v3.72h-3zM538 196.02h6v3.72h-6zM145 236.93h3v3.72h-3zM109 240.64h9v3.72h-9zM133 240.64h3v3.72h-3zM139 240.64h12v3.72h-12zM109 244.36h6v3.72h-6zM124 244.36h3v3.72h-3zM139 244.36h3v3.72h-3zM151 244.36h3v3.72h-3zM157 244.36h3v3.72h-3zM28 248.08h3v3.72h-3zM55 248.08h12v3.72h-12zM88 248.08h3v3.72h-3zM235 248.08h3v3.72h-3zM241 248.08h3v3.72h-3zM256 248.08h3v3.72h-3zM262 248.08h3v3.72h-3zM271 248.08h3v3.72h-3zM277 248.08h3v3.72h-3zM289 248.08h3v3.72h-3zM310 248.08h3v3.72h-3zM316 248.08h3v3.72h-3zM322 248.08h3v3.72h-3zM337 248.08h3v3.72h-3zM349 248.08h3v3.72h-3zM373 248.08h3v3.72h-3zM382 248.08h3v3.72h-3zM397 248.08h3v3.72h-3zM421 248.08h3v3.72h-3zM430 248.08h3v3.72h-3zM442 248.08h6v3.72h-6zM454 248.08h3v3.72h-3zM466 248.08h3v3.72h-3zM481 248.08h3v3.72h-3zM490 248.08h6v3.72h-6zM508 248.08h3v3.72h-3zM514 248.08h3v3.72h-3zM526 248.08h3v3.72h-3zM532 248.08h6v3.72h-6zM559 248.08h3v3.72h-3z"/><path fill="#52ff00" shape-rendering="crispEdges" d="M577 196.02h3v3.72h-3zM31 199.74h3v3.72h-3zM40 199.74h3v3.72h-3zM247 199.74h3v3.72h-3zM262 199.74h3v3.72h-3zM274 199.74h12v3.72h-12zM289 199.74h3v3.72h-3zM304 199.74h3v3.72h-3zM436 199.74h3v3.72h-3zM457 199.74h3v3.72h-3zM532 199.74h3v3.72h-3zM586 199.74h3v3.72h-3zM49 203.46h3v3.72h-3zM241 203.46h6v3.72h-6zM259 203.46h3v3.72h-3zM265 203.46h9v3.72h-9zM313 203.46h6v3.72h-6zM337 203.46h3v3.72h-3zM343 203.46h3v3.72h-3zM430 203.46h3v3.72h-3zM442 203.46h3v3.72h-3zM451 203.46h3v3.72h-3zM484 203.46h3v3.72h-3zM490 203.46h3v3.72h-3zM505 203.46h3v3.72h-3zM514 203.46h9v3.72h-9zM526 203.46h3v3.72h-3zM532 203.46h3v3.72h-3zM544 203.46h3v3.72h-3zM565 203.46h9v3.72h-9zM577 203.46h6v3.72h-6zM31 207.18h6v3.72h-6zM46 207.18h3v3.72h-3zM58 207.18h3v3.72h-3zM241 207.18h3v3.72h-3zM310 207.18h9v3.72h-9zM343 207.18h3v3.72h-3zM490 207.18h6v3.72h-6zM505 207.18h3v3.72h-3zM559 207.18h3v3.72h-3zM565 207.18h3v3.72h-3zM580 207.18h3v3.72h-3zM28 210.89h3v3.72h-3zM34 210.89h3v3.72h-3zM49 210.89h3v3.72h-3zM316 210.89h3v3.72h-3zM325 210.89h3v3.72h-3zM424 210.89h3v3.72h-3zM430 210.89h3v3.72h-3zM493 210.89h3v3.72h-3zM505 210.89h3v3.72h-3zM511 210.89h3v3.72h-3zM562 210.89h3v3.72h-3zM574 210.89h3v3.72h-3zM28 214.61h3v3.72h-3zM34 214.61h3v3.72h-3zM43 214.61h6v3.72h-6zM247 214.61h3v3.72h-3zM319 214.61h3v3.72h-3zM337 214.61h9v3.72h-9zM484 214.61h6v3.72h-6zM505 214.61h3v3.72h-3zM511 214.61h6v3.72h-6zM559 214.61h3v3.72h-3zM577 214.61h3v3.72h-3zM28 218.33h3v3.72h-3zM52 218.33h3v3.72h-3zM244 218.33h3v3.72h-3zM256 218.33h3v3.72h-3zM337 218.33h3v3.72h-3zM343 218.33h3v3.72h-3zM421 218.33h3v3.72h-3zM427 218.33h3v3.72h-3zM433 218.33h3v3.72h-3zM478 218.33h3v3.72h-3zM484 218.33h3v3.72h-3zM514 218.33h3v3.72h-3zM565 218.33h3v3.72h-3zM58 222.05h3v3.72h-3zM310 222.05h3v3.72h-3zM424 222.05h3v3.72h-3zM430 222.05h6v3.72h-6zM457 222.05h3v3.72h-3zM472 222.05h3v3.72h-3zM478 222.05h15v3.72h-15zM505 222.05h3v3.72h-3zM511 222.05h3v3.72h-3zM589 222.05h3v3.72h-3zM28 225.77h6v3.72h-6zM40 225.77h3v3.72h-3zM256 225.77h3v3.72h-3zM271 225.77h3v3.72h-3zM304 225.77h3v3.72h-3zM430 225.77h3v3.72h-3zM454 225.77h3v3.72h-3zM460 225.77h6v3.72h-6zM472 225.77h3v3.72h-3zM481 225.77h3v3.72h-3zM487 225.77h3v3.72h-3zM523 225.77h3v3.72h-3zM577 225.77h3v3.72h-3zM586 225.77h3v3.72h-3zM28 229.49h3v3.72h-3zM40 229.49h3v3.72h-3zM244 229.49h3v3.72h-3zM253 229.49h3v3.72h-3zM262 229.49h3v3.72h-3zM271 229.49h3v3.72h-3zM301 229.49h3v3.72h-3zM475 229.49h3v3.72h-3zM565 229.49h3v3.72h-3zM259 233.21h3v3.72h-3zM286 233.21h3v3.72h-3zM475 233.21h3v3.72h-3zM538 233.21h3v3.72h-3zM568 233.21h3v3.72h-3zM577 233.21h6v3.72h-6zM235 236.93h9v3.72h-9zM247 236.93h3v3.72h-3zM259 236.93h3v3.72h-3zM292 236.93h3v3.72h-3zM298 236.93h3v3.72h-3zM583 236.93h3v3.72h-3zM178 240.64h3v3.72h-3zM229 240.64h3v3.72h-3zM598 240.64h3v3.72h-3zM181 244.36h3v3.72h-3zM598 244.36h3v3.72h-3z"/><path fill="#ff1800" shape-rendering="crispEdges" d="M604 196.02h3v3.72h-3zM619 196.02h3v3.72h-3zM631 196.02h3v3.72h-3zM604 199.74h3v3.72h-3zM625 199.74h6v3.72h-6zM220 203.46h3v3.72h-3zM607 203.46h3v3.72h-3zM631 203.46h3v3.72h-3zM190 207.18h3v3.72h-3zM202 207.18h3v3.72h-3zM217 207.18h6v3.72h-6zM601 207.18h9v3.72h-9zM631 207.18h3v3.72h-3zM190 210.89h3v3.72h-3zM202 210.89h3v3.72h-3zM211 210.89h3v3.72h-3zM280 210.89h3v3.72h-3zM286 210.89h3v3.72h-3zM601 210.89h3v3.72h-3zM616 210.89h6v3.72h-6zM196 214.61h3v3.72h-3zM208 214.61h3v3.72h-3zM214 214.61h6v3.72h-6zM283 214.61h3v3.72h-3zM289 214.61h6v3.72h-6zM625 214.61h3v3.72h-3zM631 214.61h3v3.72h-3zM217 218.33h3v3.72h-3zM292 218.33h3v3.72h-3zM625 218.33h3v3.72h-3zM631 218.33h3v3.72h-3zM193 222.05h3v3.72h-3zM199 222.05h3v3.72h-3zM211 222.05h3v3.72h-3zM217 222.05h3v3.72h-3zM610 222.05h3v3.72h-3zM625 222.05h3v3.72h-3zM631 222.05h3v3.72h-3zM190 225.77h3v3.72h-3zM205 225.77h3v3.72h-3zM211 225.77h3v3.72h-3zM607 225.77h3v3.72h-3zM208 229.49h3v3.72h-3zM607 229.49h3v3.72h-3zM619 229.49h3v3.72h-3zM631 229.49h3v3.72h-3zM190 233.21h3v3.72h-3zM202 233.21h3v3.72h-3zM214 233.21h6v3.72h-6zM607 233.21h3v3.72h-3zM631 233.21h3v3.72h-3zM190 236.93h3v3.72h-3zM607 236.93h3v3.72h-3zM619 236.93h3v3.72h-3zM628 236.93h6v3.72h-6zM193 240.64h3v3.72h-3zM202 240.64h3v3.72h-3zM631 240.64h3v3.72h-3zM220 244.36h3v3.72h-3zM619 244.36h3v3.72h-3z"/><path fill="#ff3000" shape-rendering="crispEdges" d="M607 196.02h3v3.72h-3zM619 199.74h3v3.72h-3zM217 203.46h3v3.72h-3zM619 203.46h3v3.72h-3zM625 203.46h3v3.72h-3zM283 207.18h3v3.72h-3zM292 207.18h3v3.72h-3zM625 207.18h3v3.72h-3zM217 210.89h3v3.72h-3zM283 210.89h3v3.72h-3zM289 210.89h3v3.72h-3zM535 210.89h6v3.72h-6zM607 210.89h3v3.72h-3zM625 210.89h3v3.72h-3zM211 214.61h3v3.72h-3zM298 214.61h3v3.72h-3zM532 214.61h6v3.72h-6zM541 214.61h6v3.72h-6zM607 214.61h3v3.72h-3zM211 218.33h6v3.72h-6zM289 218.33h3v3.72h-3zM298 218.33h3v3.72h-3zM619 218.33h3v3.72h-3zM205 222.05h3v3.72h-3zM604 222.05h3v3.72h-3zM619 222.05h3v3.72h-3zM604 225.77h3v3.72h-3zM619 225.77h3v3.72h-3zM187 229.49h3v3.72h-3zM205 229.49h3v3.72h-3zM616 229.49h3v3.72h-3zM625 229.49h3v3.72h-3zM205 233.21h3v3.72h-3zM619 233.21h3v3.72h-3zM625 233.21h3v3.72h-3zM625 236.93h3v3.72h-3zM619 240.64h3v3.72h-3zM625 240.64h3v3.72h-3zM208 244.36h3v3.72h-3zM625 244.36h3v3.72h-3zM622 248.08h3v3.72h-3z"/><path fill="#ff0000" shape-rendering="crispEdges" d="M610 196.02h9v3.72h-9zM622 196.02h3v3.72h-3zM628 196.02h3v3.72h-3zM634 196.02h1v3.72h-1zM607 199.74h12v3.72h-12zM622 199.74h3v3.72h-3zM631 199.74h4v3.72h-4zM601 203.46h6v3.72h-6zM610 203.46h9v3.72h-9zM622 203.46h3v3.72h-3zM628 203.46h3v3.72h-3zM634 203.46h1v3.72h-1zM193 207.18h9v3.72h-9zM205 207.18h12v3.72h-12zM610 207.18h15v3.72h-15zM628 207.18h3v3.72h-3zM634 207.18h1v3.72h-1zM193 210.89h9v3.72h-9zM205 210.89h6v3.72h-6zM214 210.89h3v3.72h-3zM220 210.89h3v3.72h-3zM292 210.89h3v3.72h-3zM298 210.89h3v3.72h-3zM610 210.89h6v3.72h-6zM622 210.89h3v3.72h-3zM628 210.89h7v3.72h-7zM220 214.61h3v3.72h-3zM604 214.61h3v3.72h-3zM610 214.61h15v3.72h-15zM628 214.61h3v3.72h-3zM634 214.61h1v3.72h-1zM220 218.33h3v3.72h-3zM604 218.33h15v3.72h-15zM622 218.33h3v3.72h-3zM628 218.33h3v3.72h-3zM634 218.33h1v3.72h-1zM196 222.05h3v3.72h-3zM208 222.05h3v3.72h-3zM214 222.05h3v3.72h-3zM220 222.05h3v3.72h-3zM607 222.05h3v3.72h-3zM613 222.05h6v3.72h-6zM622 222.05h3v3.72h-3zM628 222.05h3v3.72h-3zM634 222.05h1v3.72h-1zM193 225.77h12v3.72h-12zM208 225.77h3v3.72h-3zM214 225.77h9v3.72h-9zM610 225.77h9v3.72h-9zM622 225.77h13v3.72h-13zM190 229.49h15v3.72h-15zM211 229.49h12v3.72h-12zM610 229.49h6v3.72h-6zM622 229.49h3v3.72h-3zM628 229.49h3v3.72h-3zM634 229.49h1v3.72h-1zM193 233.21h9v3.72h-9zM208 233.21h6v3.72h-6zM220 233.21h3v3.72h-3zM610 233.21h9v3.72h-9zM622 233.21h3v3.72h-3zM628 233.21h3v3.72h-3zM634 233.21h1v3.72h-1zM193 236.93h30v3.72h-30zM610 236.93h9v3.72h-9zM622 236.93h3v3.72h-3zM634 236.93h1v3.72h-1zM190 240.64h3v3.72h-3zM196 240.64h6v3.72h-6zM205 240.64h18v3.72h-18zM607 240.64h12v3.72h-12zM622 240.64h3v3.72h-3zM628 240.64h3v3.72h-3zM634 240.64h1v3.72h-1zM196 244.36h3v3.72h-3zM607 244.36h12v3.72h-12zM622 244.36h3v3.72h-3zM628 244.36h7v3.72h-7z"/><path fill="#00ff0e" shape-rendering="crispEdges" d="M55 199.74h3v3.72h-3zM61 199.74h3v3.72h-3zM67 199.74h6v3.72h-6zM88 199.74h3v3.72h-3zM106 199.74h3v3.72h-3zM310 199.74h3v3.72h-3zM325 199.74h3v3.72h-3zM331 199.74h3v3.72h-3zM346 199.74h3v3.72h-3zM364 199.74h3v3.72h-3zM370 199.74h6v3.72h-6zM379 199.74h3v3.72h-3zM418 199.74h9v3.72h-9zM430 199.74h3v3.72h-3zM511 199.74h3v3.72h-3zM517 199.74h3v3.72h-3zM64 203.46h3v3.72h-3zM70 203.46h3v3.72h-3zM94 203.46h6v3.72h-6zM163 203.46h3v3.72h-3zM253 203.46h6v3.72h-6zM349 203.46h3v3.72h-3zM355 203.46h3v3.72h-3zM364 203.46h3v3.72h-3zM370 203.46h3v3.72h-3zM379 203.46h3v3.72h-3zM412 203.46h3v3.72h-3zM556 203.46h3v3.72h-3zM64 207.18h3v3.72h-3zM79 207.18h3v3.72h-3zM91 207.18h3v3.72h-3zM169 207.18h3v3.72h-3zM331 207.18h3v3.72h-3zM364 207.18h3v3.72h-3zM370 207.18h3v3.72h-3zM37 210.89h3v3.72h-3zM67 210.89h3v3.72h-3zM79 210.89h3v3.72h-3zM91 210.89h3v3.72h-3zM97 210.89h3v3.72h-3zM172 210.89h3v3.72h-3zM346 210.89h3v3.72h-3zM361 210.89h6v3.72h-6zM82 214.61h3v3.72h-3zM88 214.61h3v3.72h-3zM94 214.61h3v3.72h-3zM106 214.61h3v3.72h-3zM169 214.61h3v3.72h-3zM253 214.61h3v3.72h-3zM328 214.61h3v3.72h-3zM346 214.61h3v3.72h-3zM358 214.61h3v3.72h-3zM409 214.61h3v3.72h-3zM82 218.33h3v3.72h-3zM364 218.33h3v3.72h-3zM379 218.33h3v3.72h-3zM106 222.05h3v3.72h-3zM169 222.05h3v3.72h-3zM328 222.05h3v3.72h-3zM337 222.05h3v3.72h-3zM352 222.05h3v3.72h-3zM415 222.05h3v3.72h-3zM571 222.05h3v3.72h-3zM37 225.77h3v3.72h-3zM64 225.77h6v3.72h-6zM76 225.77h3v3.72h-3zM322 225.77h3v3.72h-3zM328 225.77h9v3.72h-9zM340 225.77h3v3.72h-3zM349 225.77h3v3.72h-3zM562 225.77h3v3.72h-3zM37 229.49h3v3.72h-3zM61 229.49h3v3.72h-3zM70 229.49h3v3.72h-3zM76 229.49h3v3.72h-3zM322 229.49h3v3.72h-3zM328 229.49h3v3.72h-3zM334 229.49h3v3.72h-3zM340 229.49h3v3.72h-3zM349 229.49h9v3.72h-9zM370 229.49h3v3.72h-3zM424 229.49h6v3.72h-6zM445 229.49h3v3.72h-3zM490 229.49h3v3.72h-3zM571 229.49h3v3.72h-3zM46 233.21h3v3.72h-3zM61 233.21h3v3.72h-3zM256 233.21h3v3.72h-3zM307 233.21h3v3.72h-3zM331 233.21h3v3.72h-3zM337 233.21h6v3.72h-6zM358 233.21h3v3.72h-3zM430 233.21h6v3.72h-6zM454 233.21h3v3.72h-3zM487 233.21h3v3.72h-3zM496 233.21h6v3.72h-6zM571 233.21h3v3.72h-3zM28 236.93h6v3.72h-6zM43 236.93h3v3.72h-3zM256 236.93h3v3.72h-3zM301 236.93h3v3.72h-3zM319 236.93h6v3.72h-6zM331 236.93h3v3.72h-3zM418 236.93h3v3.72h-3zM445 236.93h6v3.72h-6zM457 236.93h3v3.72h-3zM466 236.93h3v3.72h-3zM481 236.93h6v3.72h-6zM490 236.93h3v3.72h-3zM496 236.93h9v3.72h-9zM514 236.93h3v3.72h-3zM538 236.93h3v3.72h-3zM562 236.93h3v3.72h-3zM175 240.64h3v3.72h-3zM268 240.64h6v3.72h-6zM277 240.64h6v3.72h-6zM286 240.64h3v3.72h-3zM292 240.64h6v3.72h-6zM343 240.64h3v3.72h-3zM442 240.64h3v3.72h-3zM457 240.64h3v3.72h-3zM529 240.64h6v3.72h-6zM565 240.64h6v3.72h-6zM583 244.36h9v3.72h-9z"/><path fill="#0044ff" shape-rendering="crispEdges" d="M28 266.00h607v3.47h-607zM28 269.47h607v3.47h-607zM109 272.94h45v3.47h-45zM298 272.94h3v3.47h-3zM316 272.94h3v3.47h-3zM385 272.94h30v3.47h-30zM589 272.94h3v3.47h-3zM31 276.41h3v3.47h-3zM46 276.41h3v3.47h-3zM70 276.41h3v3.47h-3zM133 276.41h18v3.47h-18zM193 276.41h3v3.47h-3zM400 276.41h12v3.47h-12zM139 279.88h12v3.47h-12zM364 279.88h3v3.47h-3zM376 279.88h3v3.47h-3zM403 279.88h9v3.47h-9zM139 283.34h12v3.47h-12zM403 283.34h9v3.47h-9zM76 286.81h108v3.47h-108zM355 286.81h57v3.47h-57zM73 290.28h117v3.47h-117zM355 290.28h57v3.47h-57zM76 293.75h108v3.47h-108zM334 293.75h3v3.47h-3zM355 293.75h57v3.47h-57zM109 297.22h63v3.47h-63zM361 297.22h51v3.47h-51zM109 300.69h60v3.47h-60zM361 300.69h51v3.47h-51zM85 304.16h3v3.47h-3zM109 304.16h60v3.47h-60zM361 304.16h51v3.47h-51zM109 307.62h63v3.47h-63zM358 307.62h54v3.47h-54zM91 311.09h165v3.47h-165zM310 311.09h3v3.47h-3zM352 311.09h66v3.47h-66zM526 311.09h3v3.47h-3zM532 311.09h3v3.47h-3zM577 311.09h3v3.47h-3zM589 311.09h3v3.47h-3zM28 314.56h607v3.47h-607zM28 318.03h607v3.47h-607z"/><path fill="#005cff" shape-rendering="crispEdges" d="M28 272.94h81v3.47h-81zM154 272.94h30v3.47h-30zM265 272.94h3v3.47h-3zM283 272.94h3v3.47h-3zM313 272.94h3v3.47h-3zM346 272.94h39v3.47h-39zM415 272.94h9v3.47h-9zM502 272.94h3v3.47h-3zM526 272.94h3v3.47h-3zM586 272.94h3v3.47h-3zM79 276.41h3v3.47h-3zM103 276.41h30v3.47h-30zM151 276.41h3v3.47h-3zM157 276.41h3v3.47h-3zM163 276.41h3v3.47h-3zM379 276.41h21v3.47h-21zM412 276.41h3v3.47h-3zM421 276.41h3v3.47h-3zM73 279.88h3v3.47h-3zM118 279.88h21v3.47h-21zM151 279.88h3v3.47h-3zM391 279.88h12v3.47h-12zM412 279.88h3v3.47h-3zM73 283.34h3v3.47h-3zM97 283.34h3v3.47h-3zM115 283.34h24v3.47h-24zM151 283.34h6v3.47h-6zM364 283.34h3v3.47h-3zM370 283.34h3v3.47h-3zM376 283.34h3v3.47h-3zM391 283.34h12v3.47h-12zM412 283.34h3v3.47h-3zM52 286.81h24v3.47h-24zM184 286.81h72v3.47h-72zM343 286.81h12v3.47h-12zM412 286.81h3v3.47h-3zM46 290.28h27v3.47h-27zM190 290.28h66v3.47h-66zM340 290.28h15v3.47h-15zM412 290.28h6v3.47h-6zM421 290.28h3v3.47h-3zM52 293.75h24v3.47h-24zM184 293.75h72v3.47h-72zM343 293.75h12v3.47h-12zM412 293.75h3v3.47h-3zM100 297.22h9v3.47h-9zM172 297.22h21v3.47h-21zM247 297.22h9v3.47h-9zM355 297.22h6v3.47h-6zM412 297.22h3v3.47h-3zM100 300.69h9v3.47h-9zM169 300.69h21v3.47h-21zM355 300.69h6v3.47h-6zM412 300.69h3v3.47h-3zM100 304.16h9v3.47h-9zM169 304.16h21v3.47h-21zM355 304.16h6v3.47h-6zM412 304.16h3v3.47h-3zM31 307.62h3v3.47h-3zM70 307.62h3v3.47h-3zM97 307.62h12v3.47h-12zM172 307.62h24v3.47h-24zM217 307.62h39v3.47h-39zM340 307.62h3v3.47h-3zM355 307.62h3v3.47h-3zM412 307.62h3v3.47h-3zM28 311.09h63v3.47h-63zM256 311.09h3v3.47h-3zM295 311.09h3v3.47h-3zM304 311.09h3v3.47h-3zM325 311.09h27v3.47h-27zM418 311.09h42v3.47h-42zM580 311.09h3v3.47h-3zM586 311.09h3v3.47h-3zM598 311.09h3v3.47h-3z"/><path fill="#0074ff" shape-rendering="crispEdges" d="M184 272.94h75v3.47h-75zM319 272.94h27v3.47h-27zM424 272.94h75v3.47h-75zM505 272.94h3v3.47h-3zM511 272.94h3v3.47h-3zM532 272.94h3v3.47h-3zM592 272.94h3v3.47h-3zM607 272.94h3v3.47h-3zM34 276.41h3v3.47h-3zM40 276.41h3v3.47h-3zM67 276.41h3v3.47h-3zM85 276.41h18v3.47h-18zM154 276.41h3v3.47h-3zM181 276.41h3v3.47h-3zM190 276.41h3v3.47h-3zM208 276.41h3v3.47h-3zM223 276.41h3v3.47h-3zM253 276.41h3v3.47h-3zM358 276.41h21v3.47h-21zM415 276.41h6v3.47h-6zM463 276.41h3v3.47h-3zM31 279.88h3v3.47h-3zM70 279.88h3v3.47h-3zM106 279.88h12v3.47h-12zM382 279.88h9v3.47h-9zM70 283.34h3v3.47h-3zM85 283.34h3v3.47h-3zM103 283.34h12v3.47h-12zM367 283.34h3v3.47h-3zM379 283.34h12v3.47h-12zM28 286.81h24v3.47h-24zM328 286.81h3v3.47h-3zM337 286.81h6v3.47h-6zM415 286.81h3v3.47h-3zM421 286.81h3v3.47h-3zM28 290.28h18v3.47h-18zM325 290.28h15v3.47h-15zM418 290.28h3v3.47h-3zM439 290.28h3v3.47h-3zM28 293.75h24v3.47h-24zM331 293.75h3v3.47h-3zM337 293.75h6v3.47h-6zM415 293.75h3v3.47h-3zM421 293.75h3v3.47h-3zM457 293.75h3v3.47h-3zM91 297.22h9v3.47h-9zM193 297.22h54v3.47h-54zM349 297.22h6v3.47h-6zM415 297.22h3v3.47h-3zM421 297.22h3v3.47h-3zM91 300.69h9v3.47h-9zM190 300.69h66v3.47h-66zM346 300.69h3v3.47h-3zM352 300.69h3v3.47h-3zM415 300.69h3v3.47h-3zM73 304.16h3v3.47h-3zM91 304.16h9v3.47h-9zM190 304.16h66v3.47h-66zM352 304.16h3v3.47h-3zM415 304.16h3v3.47h-3zM88 307.62h9v3.47h-9zM196 307.62h21v3.47h-21zM349 307.62h6v3.47h-6zM415 307.62h3v3.47h-3zM259 311.09h3v3.47h-3zM313 311.09h12v3.47h-12zM460 311.09h48v3.47h-48zM562 311.09h3v3.47h-3zM574 311.09h3v3.47h-3zM601 311.09h34v3.47h-34z"/><path fill="#00a3ff" shape-rendering="crispEdges" d="M259 272.94h3v3.47h-3zM280 272.94h3v3.47h-3zM307 272.94h3v3.47h-3zM499 272.94h3v3.47h-3zM550 272.94h3v3.47h-3zM562 272.94h3v3.47h-3zM580 272.94h6v3.47h-6zM613 272.94h3v3.47h-3zM622 272.94h6v3.47h-6zM28 276.41h3v3.47h-3zM49 276.41h6v3.47h-6zM73 276.41h3v3.47h-3zM160 276.41h3v3.47h-3zM166 276.41h9v3.47h-9zM196 276.41h3v3.47h-3zM214 276.41h3v3.47h-3zM229 276.41h3v3.47h-3zM238 276.41h3v3.47h-3zM250 276.41h3v3.47h-3zM313 276.41h3v3.47h-3zM337 276.41h6v3.47h-6zM346 276.41h6v3.47h-6zM424 276.41h6v3.47h-6zM475 276.41h3v3.47h-3zM490 276.41h3v3.47h-3zM499 276.41h3v3.47h-3zM37 279.88h3v3.47h-3zM64 279.88h6v3.47h-6zM76 279.88h3v3.47h-3zM85 279.88h3v3.47h-3zM97 279.88h3v3.47h-3zM103 279.88h3v3.47h-3zM340 279.88h3v3.47h-3zM373 279.88h3v3.47h-3zM37 283.34h9v3.47h-9zM64 283.34h3v3.47h-3zM79 283.34h6v3.47h-6zM94 283.34h3v3.47h-3zM157 283.34h3v3.47h-3zM415 283.34h3v3.47h-3zM445 283.34h3v3.47h-3zM313 286.81h3v3.47h-3zM334 286.81h3v3.47h-3zM439 286.81h3v3.47h-3zM466 286.81h3v3.47h-3zM487 286.81h3v3.47h-3zM307 290.28h3v3.47h-3zM319 290.28h3v3.47h-3zM430 290.28h3v3.47h-3zM436 290.28h3v3.47h-3zM448 290.28h3v3.47h-3zM460 290.28h3v3.47h-3zM499 290.28h6v3.47h-6zM526 290.28h3v3.47h-3zM256 293.75h3v3.47h-3zM310 293.75h3v3.47h-3zM316 293.75h3v3.47h-3zM325 293.75h6v3.47h-6zM424 293.75h3v3.47h-3zM31 297.22h3v3.47h-3zM70 297.22h6v3.47h-6zM82 297.22h3v3.47h-3zM256 297.22h3v3.47h-3zM466 297.22h3v3.47h-3zM67 300.69h3v3.47h-3zM79 300.69h6v3.47h-6zM445 300.69h3v3.47h-3zM31 304.16h3v3.47h-3zM46 304.16h3v3.47h-3zM76 304.16h3v3.47h-3zM340 304.16h12v3.47h-12zM448 304.16h3v3.47h-3zM58 307.62h3v3.47h-3zM73 307.62h9v3.47h-9zM322 307.62h3v3.47h-3zM328 307.62h3v3.47h-3zM346 307.62h3v3.47h-3zM421 307.62h3v3.47h-3zM448 307.62h3v3.47h-3zM475 307.62h3v3.47h-3zM490 307.62h3v3.47h-3zM496 307.62h3v3.47h-3zM262 311.09h3v3.47h-3zM274 311.09h3v3.47h-3zM283 311.09h3v3.47h-3zM289 311.09h3v3.47h-3zM298 311.09h6v3.47h-6zM307 311.09h3v3.47h-3zM508 311.09h3v3.47h-3zM517 311.09h6v3.47h-6zM541 311.09h3v3.47h-3zM559 311.09h3v3.47h-3zM592 311.09h3v3.47h-3z"/><path fill="#008bff" shape-rendering="crispEdges" d="M262 272.94h3v3.47h-3zM268 272.94h3v3.47h-3zM289 272.94h3v3.47h-3zM295 272.94h3v3.47h-3zM301 272.94h6v3.47h-6zM310 272.94h3v3.47h-3zM508 272.94h3v3.47h-3zM514 272.94h3v3.47h-3zM547 272.94h3v3.47h-3zM559 272.94h3v3.47h-3zM574 272.94h6v3.47h-6zM595 272.94h6v3.47h-6zM604 272.94h3v3.47h-3zM610 272.94h3v3.47h-3zM616 272.94h3v3.47h-3zM631 272.94h3v3.47h-3zM37 276.41h3v3.47h-3zM43 276.41h3v3.47h-3zM61 276.41h3v3.47h-3zM76 276.41h3v3.47h-3zM82 276.41h3v3.47h-3zM175 276.41h6v3.47h-6zM199 276.41h3v3.47h-3zM211 276.41h3v3.47h-3zM220 276.41h3v3.47h-3zM232 276.41h6v3.47h-6zM241 276.41h3v3.47h-3zM247 276.41h3v3.47h-3zM328 276.41h3v3.47h-3zM352 276.41h3v3.47h-3zM439 276.41h3v3.47h-3zM460 276.41h3v3.47h-3zM40 279.88h3v3.47h-3zM46 279.88h3v3.47h-3zM79 279.88h3v3.47h-3zM88 279.88h3v3.47h-3zM100 279.88h3v3.47h-3zM154 279.88h6v3.47h-6zM214 279.88h3v3.47h-3zM367 279.88h6v3.47h-6zM379 279.88h3v3.47h-3zM31 283.34h3v3.47h-3zM46 283.34h3v3.47h-3zM52 283.34h3v3.47h-3zM58 283.34h6v3.47h-6zM88 283.34h3v3.47h-3zM178 283.34h3v3.47h-3zM199 283.34h3v3.47h-3zM373 283.34h3v3.47h-3zM421 283.34h3v3.47h-3zM331 286.81h3v3.47h-3zM427 286.81h3v3.47h-3zM448 286.81h3v3.47h-3zM313 290.28h6v3.47h-6zM424 290.28h6v3.47h-6zM466 290.28h3v3.47h-3zM427 293.75h3v3.47h-3zM439 293.75h3v3.47h-3zM466 293.75h3v3.47h-3zM46 297.22h3v3.47h-3zM79 297.22h3v3.47h-3zM85 297.22h6v3.47h-6zM340 297.22h9v3.47h-9zM31 300.69h3v3.47h-3zM70 300.69h3v3.47h-3zM85 300.69h6v3.47h-6zM334 300.69h3v3.47h-3zM343 300.69h3v3.47h-3zM421 300.69h3v3.47h-3zM67 304.16h3v3.47h-3zM88 304.16h3v3.47h-3zM421 304.16h6v3.47h-6zM37 307.62h3v3.47h-3zM46 307.62h3v3.47h-3zM61 307.62h3v3.47h-3zM67 307.62h3v3.47h-3zM82 307.62h6v3.47h-6zM343 307.62h3v3.47h-3zM418 307.62h3v3.47h-3zM424 307.62h3v3.47h-3zM265 311.09h3v3.47h-3zM277 311.09h6v3.47h-6zM511 311.09h6v3.47h-6zM535 311.09h3v3.47h-3zM544 311.09h3v3.47h-3zM553 311.09h6v3.47h-6zM568 311.09h3v3.47h-3zM583 311.09h3v3.47h-3z"/><path fill="#00bbff" shape-rendering="crispEdges" d="M271 272.94h9v3.47h-9zM286 272.94h3v3.47h-3zM292 272.94h3v3.47h-3zM520 272.94h6v3.47h-6zM529 272.94h3v3.47h-3zM535 272.94h3v3.47h-3zM601 272.94h3v3.47h-3zM634 272.94h1v3.47h-1zM58 276.41h3v3.47h-3zM64 276.41h3v3.47h-3zM187 276.41h3v3.47h-3zM202 276.41h3v3.47h-3zM217 276.41h3v3.47h-3zM226 276.41h3v3.47h-3zM256 276.41h3v3.47h-3zM262 276.41h6v3.47h-6zM325 276.41h3v3.47h-3zM331 276.41h6v3.47h-6zM436 276.41h3v3.47h-3zM442 276.41h12v3.47h-12zM457 276.41h3v3.47h-3zM469 276.41h3v3.47h-3zM484 276.41h6v3.47h-6zM589 276.41h3v3.47h-3zM604 276.41h3v3.47h-3zM49 279.88h6v3.47h-6zM61 279.88h3v3.47h-3zM91 279.88h6v3.47h-6zM163 279.88h3v3.47h-3zM172 279.88h3v3.47h-3zM178 279.88h3v3.47h-3zM184 279.88h6v3.47h-6zM208 279.88h3v3.47h-3zM220 279.88h6v3.47h-6zM232 279.88h3v3.47h-3zM247 279.88h3v3.47h-3zM253 279.88h3v3.47h-3zM343 279.88h3v3.47h-3zM361 279.88h3v3.47h-3zM415 279.88h3v3.47h-3zM421 279.88h3v3.47h-3zM427 279.88h3v3.47h-3zM67 283.34h3v3.47h-3zM76 283.34h3v3.47h-3zM91 283.34h3v3.47h-3zM100 283.34h3v3.47h-3zM160 283.34h6v3.47h-6zM169 283.34h9v3.47h-9zM184 283.34h3v3.47h-3zM220 283.34h3v3.47h-3zM232 283.34h9v3.47h-9zM247 283.34h3v3.47h-3zM253 283.34h3v3.47h-3zM340 283.34h3v3.47h-3zM352 283.34h3v3.47h-3zM358 283.34h3v3.47h-3zM418 283.34h3v3.47h-3zM427 283.34h3v3.47h-3zM256 286.81h3v3.47h-3zM322 286.81h3v3.47h-3zM424 286.81h3v3.47h-3zM445 286.81h3v3.47h-3zM457 286.81h3v3.47h-3zM490 286.81h3v3.47h-3zM577 286.81h3v3.47h-3zM613 286.81h3v3.47h-3zM256 290.28h3v3.47h-3zM322 290.28h3v3.47h-3zM433 290.28h3v3.47h-3zM442 290.28h6v3.47h-6zM469 290.28h21v3.47h-21zM505 290.28h3v3.47h-3zM511 290.28h6v3.47h-6zM583 290.28h6v3.47h-6zM604 290.28h3v3.47h-3zM418 293.75h3v3.47h-3zM442 293.75h3v3.47h-3zM463 293.75h3v3.47h-3zM475 293.75h3v3.47h-3zM487 293.75h9v3.47h-9zM604 293.75h3v3.47h-3zM34 297.22h6v3.47h-6zM64 297.22h6v3.47h-6zM76 297.22h3v3.47h-3zM328 297.22h3v3.47h-3zM337 297.22h3v3.47h-3zM418 297.22h3v3.47h-3zM439 297.22h3v3.47h-3zM445 297.22h6v3.47h-6zM37 300.69h3v3.47h-3zM76 300.69h3v3.47h-3zM328 300.69h3v3.47h-3zM337 300.69h6v3.47h-6zM349 300.69h3v3.47h-3zM418 300.69h3v3.47h-3zM448 300.69h3v3.47h-3zM466 300.69h3v3.47h-3zM475 300.69h3v3.47h-3zM37 304.16h3v3.47h-3zM49 304.16h3v3.47h-3zM70 304.16h3v3.47h-3zM79 304.16h6v3.47h-6zM331 304.16h3v3.47h-3zM337 304.16h3v3.47h-3zM418 304.16h3v3.47h-3zM427 304.16h3v3.47h-3zM439 304.16h3v3.47h-3zM445 304.16h3v3.47h-3zM463 304.16h3v3.47h-3zM496 304.16h3v3.47h-3zM34 307.62h3v3.47h-3zM49 307.62h6v3.47h-6zM64 307.62h3v3.47h-3zM331 307.62h9v3.47h-9zM427 307.62h3v3.47h-3zM433 307.62h3v3.47h-3zM439 307.62h3v3.47h-3zM499 307.62h3v3.47h-3zM268 311.09h6v3.47h-6zM286 311.09h3v3.47h-3zM292 311.09h3v3.47h-3zM523 311.09h3v3.47h-3zM529 311.09h3v3.47h-3zM565 311.09h3v3.47h-3zM595 311.09h3v3.47h-3z"/><path fill="#00ebff" shape-rendering="crispEdges" d="M517 272.94h3v3.47h-3zM628 272.94h3v3.47h-3zM55 276.41h3v3.47h-3zM244 276.41h3v3.47h-3zM298 276.41h3v3.47h-3zM304 276.41h3v3.47h-3zM454 276.41h3v3.47h-3zM478 276.41h3v3.47h-3zM502 276.41h6v3.47h-6zM526 276.41h3v3.47h-3zM592 276.41h3v3.47h-3zM622 276.41h3v3.47h-3zM55 279.88h3v3.47h-3zM160 279.88h3v3.47h-3zM190 279.88h6v3.47h-6zM211 279.88h3v3.47h-3zM241 279.88h3v3.47h-3zM346 279.88h9v3.47h-9zM358 279.88h3v3.47h-3zM436 279.88h3v3.47h-3zM445 279.88h3v3.47h-3zM460 279.88h3v3.47h-3zM166 283.34h3v3.47h-3zM193 283.34h3v3.47h-3zM202 283.34h3v3.47h-3zM211 283.34h3v3.47h-3zM241 283.34h6v3.47h-6zM331 283.34h6v3.47h-6zM361 283.34h3v3.47h-3zM436 283.34h3v3.47h-3zM442 283.34h3v3.47h-3zM451 283.34h3v3.47h-3zM460 283.34h6v3.47h-6zM469 283.34h3v3.47h-3zM487 283.34h3v3.47h-3zM319 286.81h3v3.47h-3zM436 286.81h3v3.47h-3zM508 286.81h9v3.47h-9zM532 286.81h3v3.47h-3zM580 286.81h3v3.47h-3zM598 286.81h6v3.47h-6zM265 290.28h3v3.47h-3zM289 290.28h3v3.47h-3zM304 290.28h3v3.47h-3zM454 290.28h3v3.47h-3zM496 290.28h3v3.47h-3zM538 290.28h3v3.47h-3zM544 290.28h6v3.47h-6zM559 290.28h3v3.47h-3zM574 290.28h6v3.47h-6zM592 290.28h3v3.47h-3zM607 290.28h3v3.47h-3zM616 290.28h3v3.47h-3zM259 293.75h3v3.47h-3zM295 293.75h3v3.47h-3zM433 293.75h6v3.47h-6zM460 293.75h3v3.47h-3zM478 293.75h6v3.47h-6zM496 293.75h3v3.47h-3zM502 293.75h3v3.47h-3zM514 293.75h3v3.47h-3zM526 293.75h3v3.47h-3zM580 293.75h3v3.47h-3zM586 293.75h3v3.47h-3zM607 293.75h9v3.47h-9zM43 297.22h3v3.47h-3zM52 297.22h3v3.47h-3zM322 297.22h3v3.47h-3zM433 297.22h3v3.47h-3zM463 297.22h3v3.47h-3zM34 300.69h3v3.47h-3zM43 300.69h3v3.47h-3zM49 300.69h6v3.47h-6zM64 300.69h3v3.47h-3zM331 300.69h3v3.47h-3zM430 300.69h3v3.47h-3zM442 300.69h3v3.47h-3zM460 300.69h3v3.47h-3zM28 304.16h3v3.47h-3zM43 304.16h3v3.47h-3zM52 304.16h3v3.47h-3zM64 304.16h3v3.47h-3zM328 304.16h3v3.47h-3zM433 304.16h3v3.47h-3zM451 304.16h3v3.47h-3zM457 304.16h3v3.47h-3zM472 304.16h3v3.47h-3zM499 304.16h3v3.47h-3zM55 307.62h3v3.47h-3zM259 307.62h3v3.47h-3zM316 307.62h3v3.47h-3zM436 307.62h3v3.47h-3zM469 307.62h6v3.47h-6zM478 307.62h6v3.47h-6zM487 307.62h3v3.47h-3zM502 307.62h3v3.47h-3zM550 311.09h3v3.47h-3z"/><path fill="#00d3ff" shape-rendering="crispEdges" d="M538 272.94h9v3.47h-9zM553 272.94h6v3.47h-6zM565 272.94h9v3.47h-9zM619 272.94h3v3.47h-3zM184 276.41h3v3.47h-3zM205 276.41h3v3.47h-3zM307 276.41h6v3.47h-6zM316 276.41h6v3.47h-6zM343 276.41h3v3.47h-3zM355 276.41h3v3.47h-3zM430 276.41h6v3.47h-6zM466 276.41h3v3.47h-3zM472 276.41h3v3.47h-3zM496 276.41h3v3.47h-3zM598 276.41h3v3.47h-3zM613 276.41h3v3.47h-3zM34 279.88h3v3.47h-3zM43 279.88h3v3.47h-3zM58 279.88h3v3.47h-3zM82 279.88h3v3.47h-3zM169 279.88h3v3.47h-3zM175 279.88h3v3.47h-3zM181 279.88h3v3.47h-3zM199 279.88h9v3.47h-9zM418 279.88h3v3.47h-3zM424 279.88h3v3.47h-3zM442 279.88h3v3.47h-3zM457 279.88h3v3.47h-3zM34 283.34h3v3.47h-3zM49 283.34h3v3.47h-3zM181 283.34h3v3.47h-3zM187 283.34h3v3.47h-3zM196 283.34h3v3.47h-3zM205 283.34h6v3.47h-6zM214 283.34h3v3.47h-3zM229 283.34h3v3.47h-3zM343 283.34h3v3.47h-3zM349 283.34h3v3.47h-3zM355 283.34h3v3.47h-3zM424 283.34h3v3.47h-3zM439 283.34h3v3.47h-3zM457 283.34h3v3.47h-3zM259 286.81h3v3.47h-3zM286 286.81h3v3.47h-3zM310 286.81h3v3.47h-3zM316 286.81h3v3.47h-3zM325 286.81h3v3.47h-3zM418 286.81h3v3.47h-3zM430 286.81h6v3.47h-6zM442 286.81h3v3.47h-3zM451 286.81h3v3.47h-3zM460 286.81h6v3.47h-6zM481 286.81h6v3.47h-6zM493 286.81h3v3.47h-3zM502 286.81h3v3.47h-3zM526 286.81h3v3.47h-3zM586 286.81h3v3.47h-3zM604 286.81h6v3.47h-6zM259 290.28h6v3.47h-6zM286 290.28h3v3.47h-3zM295 290.28h3v3.47h-3zM310 290.28h3v3.47h-3zM451 290.28h3v3.47h-3zM457 290.28h3v3.47h-3zM463 290.28h3v3.47h-3zM490 290.28h6v3.47h-6zM556 290.28h3v3.47h-3zM580 290.28h3v3.47h-3zM589 290.28h3v3.47h-3zM598 290.28h3v3.47h-3zM613 290.28h3v3.47h-3zM631 290.28h4v3.47h-4zM313 293.75h3v3.47h-3zM319 293.75h6v3.47h-6zM430 293.75h3v3.47h-3zM448 293.75h6v3.47h-6zM472 293.75h3v3.47h-3zM484 293.75h3v3.47h-3zM40 297.22h3v3.47h-3zM49 297.22h3v3.47h-3zM58 297.22h6v3.47h-6zM331 297.22h6v3.47h-6zM424 297.22h6v3.47h-6zM436 297.22h3v3.47h-3zM442 297.22h3v3.47h-3zM475 297.22h18v3.47h-18zM496 297.22h3v3.47h-3zM40 300.69h3v3.47h-3zM46 300.69h3v3.47h-3zM61 300.69h3v3.47h-3zM73 300.69h3v3.47h-3zM256 300.69h3v3.47h-3zM325 300.69h3v3.47h-3zM424 300.69h6v3.47h-6zM436 300.69h3v3.47h-3zM463 300.69h3v3.47h-3zM487 300.69h3v3.47h-3zM496 300.69h3v3.47h-3zM34 304.16h3v3.47h-3zM61 304.16h3v3.47h-3zM334 304.16h3v3.47h-3zM436 304.16h3v3.47h-3zM460 304.16h3v3.47h-3zM466 304.16h3v3.47h-3zM481 304.16h3v3.47h-3zM40 307.62h6v3.47h-6zM256 307.62h3v3.47h-3zM313 307.62h3v3.47h-3zM430 307.62h3v3.47h-3zM442 307.62h6v3.47h-6zM451 307.62h3v3.47h-3zM460 307.62h9v3.47h-9zM484 307.62h3v3.47h-3zM538 311.09h3v3.47h-3zM547 311.09h3v3.47h-3zM571 311.09h3v3.47h-3z"/><path fill="#00fffc" shape-rendering="crispEdges" d="M259 276.41h3v3.47h-3zM286 276.41h3v3.47h-3zM322 276.41h3v3.47h-3zM481 276.41h3v3.47h-3zM493 276.41h3v3.47h-3zM514 276.41h3v3.47h-3zM568 276.41h3v3.47h-3zM574 276.41h3v3.47h-3zM586 276.41h3v3.47h-3zM601 276.41h3v3.47h-3zM610 276.41h3v3.47h-3zM616 276.41h3v3.47h-3zM625 276.41h3v3.47h-3zM28 279.88h3v3.47h-3zM166 279.88h3v3.47h-3zM217 279.88h3v3.47h-3zM226 279.88h3v3.47h-3zM235 279.88h6v3.47h-6zM316 279.88h3v3.47h-3zM325 279.88h3v3.47h-3zM334 279.88h6v3.47h-6zM355 279.88h3v3.47h-3zM430 279.88h3v3.47h-3zM448 279.88h6v3.47h-6zM466 279.88h3v3.47h-3zM481 279.88h3v3.47h-3zM487 279.88h3v3.47h-3zM28 283.34h3v3.47h-3zM190 283.34h3v3.47h-3zM217 283.34h3v3.47h-3zM223 283.34h3v3.47h-3zM250 283.34h3v3.47h-3zM256 283.34h3v3.47h-3zM328 283.34h3v3.47h-3zM346 283.34h3v3.47h-3zM430 283.34h6v3.47h-6zM448 283.34h3v3.47h-3zM466 283.34h3v3.47h-3zM475 283.34h6v3.47h-6zM484 283.34h3v3.47h-3zM490 283.34h3v3.47h-3zM496 283.34h3v3.47h-3zM502 283.34h3v3.47h-3zM265 286.81h3v3.47h-3zM304 286.81h6v3.47h-6zM469 286.81h3v3.47h-3zM475 286.81h6v3.47h-6zM496 286.81h3v3.47h-3zM505 286.81h3v3.47h-3zM517 286.81h3v3.47h-3zM562 286.81h3v3.47h-3zM583 286.81h3v3.47h-3zM592 286.81h3v3.47h-3zM610 286.81h3v3.47h-3zM616 286.81h3v3.47h-3zM622 286.81h3v3.47h-3zM271 290.28h3v3.47h-3zM280 290.28h6v3.47h-6zM298 290.28h6v3.47h-6zM508 290.28h3v3.47h-3zM532 290.28h6v3.47h-6zM562 290.28h3v3.47h-3zM571 290.28h3v3.47h-3zM595 290.28h3v3.47h-3zM601 290.28h3v3.47h-3zM610 290.28h3v3.47h-3zM622 290.28h9v3.47h-9zM289 293.75h3v3.47h-3zM298 293.75h9v3.47h-9zM469 293.75h3v3.47h-3zM499 293.75h3v3.47h-3zM505 293.75h9v3.47h-9zM529 293.75h3v3.47h-3zM568 293.75h3v3.47h-3zM574 293.75h3v3.47h-3zM592 293.75h3v3.47h-3zM598 293.75h6v3.47h-6zM28 297.22h3v3.47h-3zM313 297.22h3v3.47h-3zM325 297.22h3v3.47h-3zM451 297.22h3v3.47h-3zM457 297.22h6v3.47h-6zM469 297.22h3v3.47h-3zM493 297.22h3v3.47h-3zM499 297.22h6v3.47h-6zM577 297.22h3v3.47h-3zM58 300.69h3v3.47h-3zM313 300.69h3v3.47h-3zM439 300.69h3v3.47h-3zM451 300.69h3v3.47h-3zM469 300.69h3v3.47h-3zM490 300.69h3v3.47h-3zM499 300.69h6v3.47h-6zM55 304.16h6v3.47h-6zM256 304.16h3v3.47h-3zM313 304.16h3v3.47h-3zM325 304.16h3v3.47h-3zM430 304.16h3v3.47h-3zM484 304.16h6v3.47h-6zM28 307.62h3v3.47h-3zM319 307.62h3v3.47h-3zM325 307.62h3v3.47h-3zM454 307.62h6v3.47h-6zM493 307.62h3v3.47h-3zM613 307.62h3v3.47h-3zM631 307.62h3v3.47h-3z"/><path fill="#00ffcc" shape-rendering="crispEdges" d="M268 276.41h6v3.47h-6zM277 276.41h6v3.47h-6zM289 276.41h6v3.47h-6zM517 276.41h3v3.47h-3zM532 276.41h9v3.47h-9zM556 276.41h3v3.47h-3zM580 276.41h6v3.47h-6zM628 276.41h3v3.47h-3zM634 276.41h1v3.47h-1zM295 279.88h3v3.47h-3zM310 279.88h3v3.47h-3zM469 279.88h3v3.47h-3zM475 279.88h3v3.47h-3zM490 279.88h3v3.47h-3zM505 279.88h3v3.47h-3zM259 283.34h3v3.47h-3zM325 283.34h3v3.47h-3zM454 283.34h3v3.47h-3zM472 283.34h3v3.47h-3zM505 283.34h3v3.47h-3zM262 286.81h3v3.47h-3zM295 286.81h3v3.47h-3zM454 286.81h3v3.47h-3zM520 286.81h3v3.47h-3zM547 286.81h3v3.47h-3zM559 286.81h3v3.47h-3zM568 286.81h3v3.47h-3zM574 286.81h3v3.47h-3zM619 286.81h3v3.47h-3zM625 286.81h3v3.47h-3zM274 290.28h3v3.47h-3zM517 290.28h6v3.47h-6zM274 293.75h3v3.47h-3zM283 293.75h3v3.47h-3zM541 293.75h3v3.47h-3zM547 293.75h12v3.47h-12zM562 293.75h3v3.47h-3zM577 293.75h3v3.47h-3zM583 293.75h3v3.47h-3zM595 293.75h3v3.47h-3zM622 293.75h3v3.47h-3zM628 293.75h3v3.47h-3zM310 297.22h3v3.47h-3zM454 297.22h3v3.47h-3zM580 297.22h3v3.47h-3zM592 297.22h3v3.47h-3zM607 297.22h6v3.47h-6zM634 297.22h1v3.47h-1zM28 300.69h3v3.47h-3zM310 300.69h3v3.47h-3zM322 300.69h3v3.47h-3zM433 300.69h3v3.47h-3zM478 300.69h6v3.47h-6zM583 300.69h3v3.47h-3zM598 300.69h3v3.47h-3zM631 300.69h4v3.47h-4zM319 304.16h3v3.47h-3zM442 304.16h3v3.47h-3zM475 304.16h6v3.47h-6zM265 307.62h3v3.47h-3zM508 307.62h6v3.47h-6zM577 307.62h6v3.47h-6zM595 307.62h9v3.47h-9zM607 307.62h3v3.47h-3z"/><path fill="#00ffe4" shape-rendering="crispEdges" d="M274 276.41h3v3.47h-3zM283 276.41h3v3.47h-3zM295 276.41h3v3.47h-3zM301 276.41h3v3.47h-3zM508 276.41h6v3.47h-6zM553 276.41h3v3.47h-3zM562 276.41h3v3.47h-3zM577 276.41h3v3.47h-3zM607 276.41h3v3.47h-3zM619 276.41h3v3.47h-3zM631 276.41h3v3.47h-3zM196 279.88h3v3.47h-3zM229 279.88h3v3.47h-3zM244 279.88h3v3.47h-3zM250 279.88h3v3.47h-3zM256 279.88h3v3.47h-3zM313 279.88h3v3.47h-3zM328 279.88h6v3.47h-6zM433 279.88h3v3.47h-3zM439 279.88h3v3.47h-3zM454 279.88h3v3.47h-3zM463 279.88h3v3.47h-3zM472 279.88h3v3.47h-3zM478 279.88h3v3.47h-3zM484 279.88h3v3.47h-3zM493 279.88h6v3.47h-6zM502 279.88h3v3.47h-3zM55 283.34h3v3.47h-3zM226 283.34h3v3.47h-3zM313 283.34h3v3.47h-3zM319 283.34h6v3.47h-6zM337 283.34h3v3.47h-3zM481 283.34h3v3.47h-3zM493 283.34h3v3.47h-3zM499 283.34h3v3.47h-3zM289 286.81h3v3.47h-3zM298 286.81h3v3.47h-3zM472 286.81h3v3.47h-3zM499 286.81h3v3.47h-3zM529 286.81h3v3.47h-3zM535 286.81h6v3.47h-6zM544 286.81h3v3.47h-3zM565 286.81h3v3.47h-3zM589 286.81h3v3.47h-3zM595 286.81h3v3.47h-3zM628 286.81h7v3.47h-7zM292 290.28h3v3.47h-3zM529 290.28h3v3.47h-3zM541 290.28h3v3.47h-3zM553 290.28h3v3.47h-3zM565 290.28h6v3.47h-6zM619 290.28h3v3.47h-3zM262 293.75h6v3.47h-6zM286 293.75h3v3.47h-3zM307 293.75h3v3.47h-3zM445 293.75h3v3.47h-3zM454 293.75h3v3.47h-3zM520 293.75h3v3.47h-3zM535 293.75h6v3.47h-6zM544 293.75h3v3.47h-3zM559 293.75h3v3.47h-3zM589 293.75h3v3.47h-3zM616 293.75h6v3.47h-6zM625 293.75h3v3.47h-3zM631 293.75h4v3.47h-4zM259 297.22h3v3.47h-3zM319 297.22h3v3.47h-3zM430 297.22h3v3.47h-3zM472 297.22h3v3.47h-3zM505 297.22h3v3.47h-3zM589 297.22h3v3.47h-3zM625 297.22h3v3.47h-3zM55 300.69h3v3.47h-3zM259 300.69h3v3.47h-3zM316 300.69h6v3.47h-6zM457 300.69h3v3.47h-3zM472 300.69h3v3.47h-3zM493 300.69h3v3.47h-3zM40 304.16h3v3.47h-3zM316 304.16h3v3.47h-3zM454 304.16h3v3.47h-3zM469 304.16h3v3.47h-3zM490 304.16h3v3.47h-3zM502 304.16h3v3.47h-3zM598 304.16h3v3.47h-3zM310 307.62h3v3.47h-3zM574 307.62h3v3.47h-3zM586 307.62h3v3.47h-3zM592 307.62h3v3.47h-3zM604 307.62h3v3.47h-3zM610 307.62h3v3.47h-3zM622 307.62h6v3.47h-6zM634 307.62h1v3.47h-1z"/><path fill="#00ff9c" shape-rendering="crispEdges" d="M520 276.41h6v3.47h-6zM541 276.41h3v3.47h-3zM565 276.41h3v3.47h-3zM265 279.88h3v3.47h-3zM286 279.88h3v3.47h-3zM298 279.88h3v3.47h-3zM304 279.88h3v3.47h-3zM322 279.88h3v3.47h-3zM499 279.88h3v3.47h-3zM265 283.34h3v3.47h-3zM289 283.34h3v3.47h-3zM298 283.34h3v3.47h-3zM574 283.34h3v3.47h-3zM589 283.34h6v3.47h-6zM604 283.34h6v3.47h-6zM613 283.34h6v3.47h-6zM271 286.81h3v3.47h-3zM280 286.81h3v3.47h-3zM550 286.81h3v3.47h-3zM571 286.81h3v3.47h-3zM268 290.28h3v3.47h-3zM550 290.28h3v3.47h-3zM268 293.75h6v3.47h-6zM277 293.75h3v3.47h-3zM292 293.75h3v3.47h-3zM517 293.75h3v3.47h-3zM316 297.22h3v3.47h-3zM583 297.22h6v3.47h-6zM601 297.22h6v3.47h-6zM616 297.22h3v3.47h-3zM628 297.22h3v3.47h-3zM505 300.69h3v3.47h-3zM574 300.69h3v3.47h-3zM625 300.69h3v3.47h-3zM310 304.16h3v3.47h-3zM505 304.16h6v3.47h-6zM577 304.16h6v3.47h-6zM610 304.16h3v3.47h-3zM616 304.16h3v3.47h-3zM562 307.62h3v3.47h-3zM568 307.62h6v3.47h-6z"/><path fill="#00ff6d" shape-rendering="crispEdges" d="M529 276.41h3v3.47h-3zM271 279.88h6v3.47h-6zM511 279.88h3v3.47h-3zM607 279.88h3v3.47h-3zM631 279.88h3v3.47h-3zM283 283.34h6v3.47h-6zM508 283.34h9v3.47h-9zM565 283.34h3v3.47h-3zM577 283.34h6v3.47h-6zM601 283.34h3v3.47h-3zM619 283.34h3v3.47h-3zM625 283.34h3v3.47h-3zM289 297.22h3v3.47h-3zM304 297.22h3v3.47h-3zM508 297.22h3v3.47h-3zM526 297.22h3v3.47h-3zM571 297.22h3v3.47h-3zM508 300.69h3v3.47h-3zM580 300.69h3v3.47h-3zM595 300.69h3v3.47h-3zM262 304.16h3v3.47h-3zM307 304.16h3v3.47h-3zM511 304.16h3v3.47h-3zM568 304.16h3v3.47h-3zM574 304.16h3v3.47h-3zM625 304.16h3v3.47h-3zM274 307.62h3v3.47h-3zM283 307.62h6v3.47h-6zM298 307.62h6v3.47h-6zM535 307.62h6v3.47h-6zM544 307.62h3v3.47h-3zM553 307.62h3v3.47h-3z"/><path fill="#00ff85" shape-rendering="crispEdges" d="M544 276.41h3v3.47h-3zM550 276.41h3v3.47h-3zM301 279.88h3v3.47h-3zM307 279.88h3v3.47h-3zM586 279.88h3v3.47h-3zM598 279.88h3v3.47h-3zM604 279.88h3v3.47h-3zM610 279.88h9v3.47h-9zM622 279.88h3v3.47h-3zM628 279.88h3v3.47h-3zM262 283.34h3v3.47h-3zM268 283.34h9v3.47h-9zM295 283.34h3v3.47h-3zM301 283.34h6v3.47h-6zM583 283.34h6v3.47h-6zM595 283.34h3v3.47h-3zM610 283.34h3v3.47h-3zM631 283.34h4v3.47h-4zM292 286.81h3v3.47h-3zM280 293.75h3v3.47h-3zM262 297.22h3v3.47h-3zM307 297.22h3v3.47h-3zM511 297.22h3v3.47h-3zM562 297.22h3v3.47h-3zM622 297.22h3v3.47h-3zM307 300.69h3v3.47h-3zM589 300.69h3v3.47h-3zM601 300.69h3v3.47h-3zM616 300.69h6v3.47h-6zM628 300.69h3v3.47h-3zM589 304.16h6v3.47h-6zM601 304.16h3v3.47h-3zM619 304.16h6v3.47h-6zM295 307.62h3v3.47h-3zM304 307.62h6v3.47h-6zM565 307.62h3v3.47h-3zM589 307.62h3v3.47h-3z"/><path fill="#00ffb4" shape-rendering="crispEdges" d="M547 276.41h3v3.47h-3zM559 276.41h3v3.47h-3zM595 276.41h3v3.47h-3zM259 279.88h6v3.47h-6zM283 279.88h3v3.47h-3zM319 279.88h3v3.47h-3zM307 283.34h6v3.47h-6zM316 283.34h3v3.47h-3zM598 283.34h3v3.47h-3zM268 286.81h3v3.47h-3zM274 286.81h6v3.47h-6zM283 286.81h3v3.47h-3zM301 286.81h3v3.47h-3zM523 286.81h3v3.47h-3zM541 286.81h3v3.47h-3zM553 286.81h6v3.47h-6zM277 290.28h3v3.47h-3zM523 290.28h3v3.47h-3zM523 293.75h3v3.47h-3zM532 293.75h3v3.47h-3zM565 293.75h3v3.47h-3zM571 293.75h3v3.47h-3zM55 297.22h3v3.47h-3zM265 297.22h3v3.47h-3zM574 297.22h3v3.47h-3zM598 297.22h3v3.47h-3zM613 297.22h3v3.47h-3zM619 297.22h3v3.47h-3zM454 300.69h3v3.47h-3zM484 300.69h3v3.47h-3zM577 300.69h3v3.47h-3zM586 300.69h3v3.47h-3zM592 300.69h3v3.47h-3zM604 300.69h12v3.47h-12zM622 300.69h3v3.47h-3zM259 304.16h3v3.47h-3zM322 304.16h3v3.47h-3zM493 304.16h3v3.47h-3zM586 304.16h3v3.47h-3zM604 304.16h6v3.47h-6zM613 304.16h3v3.47h-3zM628 304.16h3v3.47h-3zM634 304.16h1v3.47h-1zM262 307.62h3v3.47h-3zM505 307.62h3v3.47h-3zM514 307.62h3v3.47h-3zM532 307.62h3v3.47h-3zM583 307.62h3v3.47h-3zM616 307.62h6v3.47h-6zM628 307.62h3v3.47h-3z"/><path fill="#00ff55" shape-rendering="crispEdges" d="M571 276.41h3v3.47h-3zM280 279.88h3v3.47h-3zM289 279.88h3v3.47h-3zM508 279.88h3v3.47h-3zM514 279.88h3v3.47h-3zM526 279.88h3v3.47h-3zM532 279.88h3v3.47h-3zM562 279.88h3v3.47h-3zM574 279.88h6v3.47h-6zM592 279.88h6v3.47h-6zM619 279.88h3v3.47h-3zM625 279.88h3v3.47h-3zM634 279.88h1v3.47h-1zM280 283.34h3v3.47h-3zM292 283.34h3v3.47h-3zM526 283.34h3v3.47h-3zM571 283.34h3v3.47h-3zM622 283.34h3v3.47h-3zM628 283.34h3v3.47h-3zM277 297.22h3v3.47h-3zM286 297.22h3v3.47h-3zM514 297.22h3v3.47h-3zM529 297.22h3v3.47h-3zM568 297.22h3v3.47h-3zM595 297.22h3v3.47h-3zM631 297.22h3v3.47h-3zM265 300.69h3v3.47h-3zM511 300.69h6v3.47h-6zM562 300.69h3v3.47h-3zM265 304.16h3v3.47h-3zM283 304.16h6v3.47h-6zM301 304.16h3v3.47h-3zM583 304.16h3v3.47h-3zM595 304.16h3v3.47h-3zM631 304.16h3v3.47h-3zM271 307.62h3v3.47h-3zM280 307.62h3v3.47h-3zM292 307.62h3v3.47h-3zM520 307.62h3v3.47h-3zM526 307.62h6v3.47h-6zM547 307.62h3v3.47h-3zM556 307.62h6v3.47h-6z"/><path fill="#00ff3d" shape-rendering="crispEdges" d="M268 279.88h3v3.47h-3zM277 279.88h3v3.47h-3zM292 279.88h3v3.47h-3zM535 279.88h3v3.47h-3zM559 279.88h3v3.47h-3zM568 279.88h3v3.47h-3zM583 279.88h3v3.47h-3zM589 279.88h3v3.47h-3zM601 279.88h3v3.47h-3zM277 283.34h3v3.47h-3zM523 283.34h3v3.47h-3zM529 283.34h6v3.47h-6zM556 283.34h3v3.47h-3zM562 283.34h3v3.47h-3zM271 297.22h3v3.47h-3zM283 297.22h3v3.47h-3zM298 297.22h6v3.47h-6zM517 297.22h3v3.47h-3zM553 297.22h3v3.47h-3zM559 297.22h3v3.47h-3zM286 300.69h3v3.47h-3zM295 300.69h3v3.47h-3zM304 300.69h3v3.47h-3zM517 300.69h3v3.47h-3zM526 300.69h3v3.47h-3zM553 300.69h3v3.47h-3zM571 300.69h3v3.47h-3zM304 304.16h3v3.47h-3zM514 304.16h3v3.47h-3zM520 304.16h3v3.47h-3zM526 304.16h3v3.47h-3zM571 304.16h3v3.47h-3zM268 307.62h3v3.47h-3zM289 307.62h3v3.47h-3zM523 307.62h3v3.47h-3zM550 307.62h3v3.47h-3z"/><path fill="#00ff25" shape-rendering="crispEdges" d="M517 279.88h6v3.47h-6zM556 279.88h3v3.47h-3zM565 279.88h3v3.47h-3zM571 279.88h3v3.47h-3zM580 279.88h3v3.47h-3zM520 283.34h3v3.47h-3zM538 283.34h6v3.47h-6zM547 283.34h3v3.47h-3zM553 283.34h3v3.47h-3zM559 283.34h3v3.47h-3zM568 283.34h3v3.47h-3zM274 297.22h3v3.47h-3zM280 297.22h3v3.47h-3zM295 297.22h3v3.47h-3zM520 297.22h3v3.47h-3zM532 297.22h9v3.47h-9zM547 297.22h6v3.47h-6zM556 297.22h3v3.47h-3zM262 300.69h3v3.47h-3zM268 300.69h6v3.47h-6zM289 300.69h3v3.47h-3zM298 300.69h3v3.47h-3zM532 300.69h3v3.47h-3zM556 300.69h3v3.47h-3zM565 300.69h3v3.47h-3zM268 304.16h3v3.47h-3zM292 304.16h6v3.47h-6zM559 304.16h6v3.47h-6zM277 307.62h3v3.47h-3zM517 307.62h3v3.47h-3z"/><path fill="#0aff00" shape-rendering="crispEdges" d="M523 279.88h3v3.47h-3zM529 279.88h3v3.47h-3zM544 279.88h3v3.47h-3zM292 297.22h3v3.47h-3zM565 297.22h3v3.47h-3zM280 300.69h3v3.47h-3zM520 300.69h3v3.47h-3zM535 300.69h3v3.47h-3zM541 300.69h3v3.47h-3zM559 300.69h3v3.47h-3zM568 300.69h3v3.47h-3zM277 304.16h3v3.47h-3zM298 304.16h3v3.47h-3zM523 304.16h3v3.47h-3zM532 304.16h3v3.47h-3zM550 304.16h3v3.47h-3z"/><path fill="#00ff0e" shape-rendering="crispEdges" d="M538 279.88h6v3.47h-6zM547 279.88h9v3.47h-9zM517 283.34h3v3.47h-3zM535 283.34h3v3.47h-3zM550 283.34h3v3.47h-3zM268 297.22h3v3.47h-3zM523 297.22h3v3.47h-3zM541 297.22h6v3.47h-6zM274 300.69h6v3.47h-6zM283 300.69h3v3.47h-3zM301 300.69h3v3.47h-3zM538 300.69h3v3.47h-3zM547 300.69h3v3.47h-3zM271 304.16h6v3.47h-6zM280 304.16h3v3.47h-3zM289 304.16h3v3.47h-3zM517 304.16h3v3.47h-3zM529 304.16h3v3.47h-3zM535 304.16h3v3.47h-3zM541 304.16h3v3.47h-3zM553 304.16h6v3.47h-6zM565 304.16h3v3.47h-3zM541 307.62h3v3.47h-3z"/><path fill="#22ff00" shape-rendering="crispEdges" d="M544 283.34h3v3.47h-3zM292 300.69h3v3.47h-3zM523 300.69h3v3.47h-3zM529 300.69h3v3.47h-3zM544 300.69h3v3.47h-3zM550 300.69h3v3.47h-3zM538 304.16h3v3.47h-3zM547 304.16h3v3.47h-3z"/><path fill="#3aff00" shape-rendering="crispEdges" d="M544 304.16h3v3.47h-3z"/><path fill="#0044ff" shape-rendering="crispEdges" d="M28 336.00h607v2.68h-607zM28 338.68h607v2.68h-607zM28 341.35h573v2.68h-573zM28 344.02h153v2.68h-153zM235 344.02h363v2.68h-363zM28 346.70h153v2.68h-153zM235 346.70h363v2.68h-363zM28 349.38h153v2.68h-153zM235 349.38h363v2.68h-363zM28 352.05h153v2.68h-153zM235 352.05h363v2.68h-363zM28 354.73h153v2.68h-153zM235 354.73h363v2.68h-363zM28 357.40h153v2.68h-153zM184 357.40h3v2.68h-3zM235 357.40h363v2.68h-363zM28 360.07h570v2.68h-570zM28 362.75h570v2.68h-570zM28 365.43h153v2.68h-153zM319 365.43h3v2.68h-3zM28 368.10h153v2.68h-153zM265 368.10h3v2.68h-3zM439 368.10h3v2.68h-3zM28 370.77h573v2.68h-573zM28 373.45h607v2.68h-607zM28 376.12h607v2.68h-607z"/><path fill="#005cff" shape-rendering="crispEdges" d="M601 341.35h3v2.68h-3zM232 344.02h3v2.68h-3zM598 344.02h3v2.68h-3zM232 346.70h3v2.68h-3zM598 346.70h3v2.68h-3zM232 349.38h3v2.68h-3zM598 349.38h3v2.68h-3zM232 352.05h3v2.68h-3zM598 352.05h3v2.68h-3zM232 354.73h3v2.68h-3zM598 354.73h3v2.68h-3zM181 357.40h3v2.68h-3zM229 357.40h6v2.68h-6zM598 357.40h3v2.68h-3zM604 357.40h3v2.68h-3zM598 360.07h3v2.68h-3zM604 360.07h3v2.68h-3zM598 362.75h3v2.68h-3zM604 362.75h3v2.68h-3zM181 365.43h6v2.68h-6zM232 365.43h87v2.68h-87zM322 365.43h153v2.68h-153zM496 365.43h78v2.68h-78zM235 368.10h3v2.68h-3zM244 368.10h3v2.68h-3zM262 368.10h3v2.68h-3zM307 368.10h30v2.68h-30zM385 368.10h3v2.68h-3zM517 368.10h9v2.68h-9zM601 370.77h9v2.68h-9z"/><path fill="#0074ff" shape-rendering="crispEdges" d="M604 341.35h9v2.68h-9zM181 344.02h3v2.68h-3zM229 344.02h3v2.68h-3zM601 344.02h6v2.68h-6zM181 346.70h3v2.68h-3zM181 349.38h3v2.68h-3zM229 349.38h3v2.68h-3zM181 352.05h3v2.68h-3zM601 352.05h3v2.68h-3zM181 354.73h3v2.68h-3zM601 354.73h3v2.68h-3zM190 357.40h3v2.68h-3zM211 357.40h3v2.68h-3zM223 357.40h6v2.68h-6zM601 357.40h3v2.68h-3zM601 360.07h3v2.68h-3zM601 362.75h3v2.68h-3zM187 365.43h45v2.68h-45zM475 365.43h21v2.68h-21zM574 365.43h24v2.68h-24zM181 368.10h6v2.68h-6zM196 368.10h3v2.68h-3zM232 368.10h3v2.68h-3zM256 368.10h3v2.68h-3zM268 368.10h39v2.68h-39zM337 368.10h48v2.68h-48zM391 368.10h3v2.68h-3zM415 368.10h3v2.68h-3zM433 368.10h3v2.68h-3zM505 368.10h12v2.68h-12zM526 368.10h18v2.68h-18zM550 368.10h6v2.68h-6zM562 368.10h3v2.68h-3zM610 370.77h6v2.68h-6zM628 370.77h7v2.68h-7z"/><path fill="#00a3ff" shape-rendering="crispEdges" d="M613 341.35h3v2.68h-3zM628 341.35h3v2.68h-3zM196 344.02h3v2.68h-3zM208 344.02h3v2.68h-3zM214 344.02h6v2.68h-6zM223 344.02h3v2.68h-3zM184 346.70h3v2.68h-3zM226 346.70h3v2.68h-3zM601 346.70h3v2.68h-3zM223 349.38h3v2.68h-3zM223 352.05h3v2.68h-3zM604 352.05h3v2.68h-3zM190 354.73h3v2.68h-3zM220 354.73h3v2.68h-3zM229 354.73h3v2.68h-3zM604 354.73h3v2.68h-3zM193 357.40h3v2.68h-3zM205 357.40h3v2.68h-3zM214 357.40h3v2.68h-3zM607 360.07h3v2.68h-3zM187 368.10h6v2.68h-6zM217 368.10h6v2.68h-6zM226 368.10h3v2.68h-3zM253 368.10h3v2.68h-3zM397 368.10h3v2.68h-3zM406 368.10h3v2.68h-3zM412 368.10h3v2.68h-3zM421 368.10h3v2.68h-3zM454 368.10h12v2.68h-12zM469 368.10h12v2.68h-12zM493 368.10h9v2.68h-9zM556 368.10h6v2.68h-6zM568 368.10h12v2.68h-12zM583 368.10h3v2.68h-3zM592 368.10h3v2.68h-3zM616 370.77h6v2.68h-6z"/><path fill="#00ebff" shape-rendering="crispEdges" d="M616 341.35h3v2.68h-3zM622 341.35h3v2.68h-3zM199 344.02h3v2.68h-3zM205 344.02h3v2.68h-3zM610 344.02h3v2.68h-3zM187 346.70h3v2.68h-3zM607 346.70h3v2.68h-3zM205 349.38h3v2.68h-3zM214 349.38h3v2.68h-3zM610 349.38h3v2.68h-3zM193 352.05h3v2.68h-3zM202 352.05h3v2.68h-3zM193 354.73h3v2.68h-3zM202 354.73h3v2.68h-3zM208 354.73h9v2.68h-9zM628 360.07h3v2.68h-3zM613 362.75h3v2.68h-3zM610 365.43h3v2.68h-3zM208 368.10h3v2.68h-3zM595 368.10h3v2.68h-3zM601 368.10h6v2.68h-6z"/><path fill="#00bbff" shape-rendering="crispEdges" d="M619 341.35h3v2.68h-3zM625 341.35h3v2.68h-3zM187 344.02h6v2.68h-6zM202 344.02h3v2.68h-3zM220 344.02h3v2.68h-3zM607 344.02h3v2.68h-3zM205 346.70h3v2.68h-3zM217 346.70h3v2.68h-3zM223 346.70h3v2.68h-3zM229 346.70h3v2.68h-3zM208 349.38h6v2.68h-6zM220 349.38h3v2.68h-3zM604 349.38h3v2.68h-3zM187 352.05h3v2.68h-3zM196 352.05h3v2.68h-3zM217 352.05h3v2.68h-3zM229 352.05h3v2.68h-3zM187 354.73h3v2.68h-3zM196 354.73h3v2.68h-3zM217 354.73h3v2.68h-3zM223 354.73h3v2.68h-3zM607 354.73h3v2.68h-3zM199 357.40h3v2.68h-3zM208 357.40h3v2.68h-3zM607 362.75h3v2.68h-3zM601 365.43h6v2.68h-6zM193 368.10h3v2.68h-3zM199 368.10h9v2.68h-9zM211 368.10h6v2.68h-6zM229 368.10h3v2.68h-3zM388 368.10h3v2.68h-3zM400 368.10h3v2.68h-3zM409 368.10h3v2.68h-3zM424 368.10h6v2.68h-6zM445 368.10h3v2.68h-3zM451 368.10h3v2.68h-3zM490 368.10h3v2.68h-3zM586 368.10h3v2.68h-3z"/><path fill="#00d3ff" shape-rendering="crispEdges" d="M631 341.35h4v2.68h-4zM193 344.02h3v2.68h-3zM211 344.02h3v2.68h-3zM190 346.70h3v2.68h-3zM196 346.70h3v2.68h-3zM202 346.70h3v2.68h-3zM211 346.70h3v2.68h-3zM220 346.70h3v2.68h-3zM187 349.38h9v2.68h-9zM202 349.38h3v2.68h-3zM217 349.38h3v2.68h-3zM607 349.38h3v2.68h-3zM190 352.05h3v2.68h-3zM205 352.05h3v2.68h-3zM214 352.05h3v2.68h-3zM220 352.05h3v2.68h-3zM607 352.05h6v2.68h-6zM205 354.73h3v2.68h-3zM610 354.73h3v2.68h-3zM613 357.40h3v2.68h-3zM610 360.07h6v2.68h-6zM610 362.75h3v2.68h-3zM607 365.43h3v2.68h-3zM238 368.10h3v2.68h-3zM247 368.10h3v2.68h-3z"/><path fill="#008bff" shape-rendering="crispEdges" d="M184 344.02h3v2.68h-3zM226 344.02h3v2.68h-3zM604 346.70h3v2.68h-3zM184 349.38h3v2.68h-3zM196 349.38h3v2.68h-3zM226 349.38h3v2.68h-3zM601 349.38h3v2.68h-3zM184 352.05h3v2.68h-3zM226 352.05h3v2.68h-3zM184 354.73h3v2.68h-3zM226 354.73h3v2.68h-3zM187 357.40h3v2.68h-3zM196 357.40h3v2.68h-3zM202 357.40h3v2.68h-3zM217 357.40h6v2.68h-6zM607 357.40h6v2.68h-6zM598 365.43h3v2.68h-3zM223 368.10h3v2.68h-3zM241 368.10h3v2.68h-3zM250 368.10h3v2.68h-3zM259 368.10h3v2.68h-3zM394 368.10h3v2.68h-3zM403 368.10h3v2.68h-3zM418 368.10h3v2.68h-3zM430 368.10h3v2.68h-3zM436 368.10h3v2.68h-3zM442 368.10h3v2.68h-3zM448 368.10h3v2.68h-3zM466 368.10h3v2.68h-3zM481 368.10h9v2.68h-9zM502 368.10h3v2.68h-3zM544 368.10h6v2.68h-6zM565 368.10h3v2.68h-3zM580 368.10h3v2.68h-3zM589 368.10h3v2.68h-3zM598 368.10h3v2.68h-3zM622 370.77h6v2.68h-6z"/><path fill="#00fffc" shape-rendering="crispEdges" d="M613 344.02h3v2.68h-3zM193 346.70h3v2.68h-3zM208 346.70h3v2.68h-3zM214 346.70h3v2.68h-3zM199 349.38h3v2.68h-3zM199 352.05h3v2.68h-3zM208 352.05h6v2.68h-6zM199 354.73h3v2.68h-3zM613 354.73h3v2.68h-3zM625 357.40h3v2.68h-3zM607 368.10h3v2.68h-3z"/><path fill="#00ffb4" shape-rendering="crispEdges" d="M616 344.02h3v2.68h-3zM634 344.02h1v2.68h-1zM613 349.38h3v2.68h-3zM616 352.05h3v2.68h-3zM616 354.73h3v2.68h-3zM619 357.40h3v2.68h-3zM619 362.75h6v2.68h-6zM631 362.75h4v2.68h-4zM613 365.43h3v2.68h-3zM628 365.43h3v2.68h-3zM613 368.10h3v2.68h-3z"/><path fill="#00ff6d" shape-rendering="crispEdges" d="M619 344.02h3v2.68h-3zM616 346.70h3v2.68h-3zM622 346.70h3v2.68h-3zM634 346.70h1v2.68h-1zM616 349.38h3v2.68h-3zM622 349.38h3v2.68h-3zM622 352.05h3v2.68h-3zM619 365.43h6v2.68h-6zM631 368.10h3v2.68h-3z"/><path fill="#00ff85" shape-rendering="crispEdges" d="M622 344.02h6v2.68h-6zM625 346.70h3v2.68h-3zM631 346.70h3v2.68h-3zM631 349.38h4v2.68h-4zM619 352.05h3v2.68h-3zM625 352.05h3v2.68h-3zM634 352.05h1v2.68h-1zM619 354.73h3v2.68h-3zM625 365.43h3v2.68h-3z"/><path fill="#00ffcc" shape-rendering="crispEdges" d="M628 344.02h6v2.68h-6zM613 346.70h3v2.68h-3zM628 354.73h3v2.68h-3zM634 354.73h1v2.68h-1zM616 357.40h3v2.68h-3zM631 360.07h3v2.68h-3zM625 362.75h6v2.68h-6zM610 368.10h3v2.68h-3z"/><path fill="#00ffe4" shape-rendering="crispEdges" d="M199 346.70h3v2.68h-3zM610 346.70h3v2.68h-3zM613 352.05h3v2.68h-3zM631 354.73h3v2.68h-3zM622 357.40h3v2.68h-3zM628 357.40h7v2.68h-7zM616 360.07h12v2.68h-12zM634 360.07h1v2.68h-1zM616 362.75h3v2.68h-3z"/><path fill="#00ff3d" shape-rendering="crispEdges" d="M619 346.70h3v2.68h-3zM619 349.38h3v2.68h-3z"/><path fill="#00ff9c" shape-rendering="crispEdges" d="M628 346.70h3v2.68h-3zM628 349.38h3v2.68h-3zM628 352.05h6v2.68h-6zM622 354.73h6v2.68h-6zM616 365.43h3v2.68h-3zM631 365.43h4v2.68h-4zM628 368.10h3v2.68h-3z"/><path fill="#00ff55" shape-rendering="crispEdges" d="M625 349.38h3v2.68h-3zM616 368.10h3v2.68h-3zM622 368.10h6v2.68h-6zM634 368.10h1v2.68h-1z"/><path fill="#00ff25" shape-rendering="crispEdges" d="M619 368.10h3v2.68h-3z"/><path d="M28,401.5 L31,400.5 L34,403.3 L44,403.3 L58,402.4 L80,402 L100,401 L103,403.5 L137,403.5 L160,406.5 L164,405.5 L167,404.5 L172,405.5 L185,408 L230,407 L250,404.5 L270,405.5 L292,405.5 L320,403.6 L346.5,401.3 L350,404 L373,401.9 L395,401.9 L420,405.3 L424,404 L427,403.5 L431,404.5 L453,407.2 L490,406 L547,404.8 L570,405.3 L577,407.2 L615,406.4 L635,406" fill="none" stroke="#b44cbc" stroke-width="1.15" stroke-linejoin="round"/><path d="M28,436 L30.5,436 L32,449 L34,449 L35.5,436 L100,436 L101.5,449 L103.5,449 L105,436 L122,436 L123.5,439 L125,436 L132,436 L134,440 L137,449 L187,449 L190,440 L195,438 L205,436 L245,436 L250,442 L255,446 L258,449 L272,449 L278,446 L282,444 L292,440 L298,441.6 L303,436 L347,436 L348,447 L349.5,449 L351,443 L353,440 L358,436 L363,437.5 L367,437.5 L373,436 L376,437 L382,442 L393,443 L394,449 L459,449 L461,442 L477,440.8 L500,442 L508,444 L510,446 L512,449 L516,449 L523,446 L530,443 L556,443 L558,449 L577,449 L584,444 L595,441.6 L605,445 L609,449 L612,449 L617,443 L628,442 L635,442" fill="none" stroke="#b44cbc" stroke-width="1.15" stroke-linejoin="round"/><path d="M28,480.5 L34.5,480.5 L35.5,478 L104,478 L105,475 L167,475 L168,478 L185,478 L186,480.5 L351.5,480.5 L352.5,478 L429,478 L430,480.5 L635,480.5" fill="none" stroke="#b44cbc" stroke-width="1.15" stroke-linejoin="round"/><path d="M28,531.3 C36.7,531.0 66.3,529.8 80,529.3 C93.7,528.8 100.3,528.4 110,528.1 C119.7,527.8 131.8,527.1 138,527.3 C144.2,527.5 140.0,527.6 147,529.3 C154.0,531.0 169.5,536.3 180,537.5 C190.5,538.7 197.2,537.0 210,536.5 C222.8,536.0 247.0,534.6 257,534.5 C267.0,534.4 264.2,535.4 270,535.6 C275.8,535.8 283.7,536.0 292,535.6 C300.3,535.2 310.8,534.2 320,533.5 C329.2,532.8 338.2,531.8 347,531.3 C355.8,530.8 365.5,530.9 373,530.5 C380.5,530.1 384.7,528.6 392,529 C399.3,529.4 407.8,531.5 417,532.7 C426.2,533.9 439.8,535.2 447,536 C454.2,536.8 453.3,537.3 460,537.2 C466.7,537.1 478.7,535.8 487,535.3 C495.3,534.8 502.8,534.5 510,534.5 C517.2,534.5 522.8,535.3 530,535.3 C537.2,535.3 545.8,534.3 553,534.5 C560.2,534.7 564.3,536.5 573,536.7 C581.7,536.9 594.7,536.0 605,535.9 C615.3,535.8 630.0,536.3 635,536.4" fill="none" stroke="#b44cbc" stroke-width="1.15" stroke-linejoin="round"/><path d="M28,575.3 C36.7,574.5 66.3,571.7 80,570.7 C93.7,569.7 99.5,569.8 110,569.5 C120.5,569.2 129.7,566.3 143,569.1 C156.3,571.9 178.8,583.8 190,586.5 C201.2,589.2 199.2,586.2 210,585.5 C220.8,584.8 246.3,582.5 255,582 C263.7,581.5 255.8,582.4 262,582.7 C268.2,583.0 282.3,584.2 292,583.7 C301.7,583.2 310.8,581.0 320,579.8 C329.2,578.6 338.7,577.4 347,576.7 C355.3,576.0 362.3,576.6 370,575.6 C377.7,574.6 386.3,571.2 393,570.8 C399.7,570.4 402.7,571.6 410,573.3 C417.3,575.0 428.8,579.2 437,581.2 C445.2,583.2 452.3,584.8 459,585.5 C465.7,586.2 469.0,585.9 477,585.3 C485.0,584.6 498.2,581.9 507,581.6 C515.8,581.3 521.2,583.5 530,583.5 C538.8,583.5 552.0,581.4 560,581.6 C568.0,581.9 571.3,584.6 578,585 C584.7,585.4 590.5,584.0 600,584 C609.5,584.0 629.2,585.1 635,585.3" fill="none" stroke="#3cb43c" stroke-width="1.15" stroke-linejoin="round"/></svg>
<div class="b" style="left:36px;top:110px;width:77px;height:9.5px;background:#fff;"></div>
<div class="t" style="left:37.6px;top:110.83px;font-size:8px;color:#3c2c8c;font-weight:normal;letter-spacing:-0.03px;">ttc.tireTempFL (5 Hz)</div>
<div class="b" style="left:36px;top:186.3px;width:77px;height:9.5px;background:#fff;"></div>
<div class="t" style="left:37.6px;top:187.13px;font-size:8px;color:#3c2c8c;font-weight:normal;letter-spacing:-0.03px;">ttc.tireTempFR (5 Hz)</div>
<div class="b" style="left:36px;top:260px;width:77px;height:9.5px;background:#fff;"></div>
<div class="t" style="left:37.6px;top:260.83px;font-size:8px;color:#3c2c8c;font-weight:normal;letter-spacing:-0.03px;">ttc.tireTempRL (5 Hz)</div>
<div class="b" style="left:36px;top:330px;width:77px;height:9.5px;background:#fff;"></div>
<div class="t" style="left:37.6px;top:330.83px;font-size:8px;color:#3c2c8c;font-weight:normal;letter-spacing:-0.03px;">ttc.tireTempRR (5 Hz)</div>
<div class="t" style="right:909.5px;top:172.1px;font-size:8px;line-height:11px;color:#4c44b4;background:#fff;padding:0 1px;letter-spacing:-0.03px">61,5 - 107,0</div>
<div class="t" style="right:909.5px;top:246.3px;font-size:8px;line-height:11px;color:#4c44b4;background:#fff;padding:0 1px;letter-spacing:-0.03px">37,0 - 84,0</div>
<div class="t" style="right:909.5px;top:316.0px;font-size:8px;line-height:11px;color:#4c44b4;background:#fff;padding:0 1px;letter-spacing:-0.03px">17,0 - 63,0</div>
<div class="t" style="right:909.5px;top:373.3px;font-size:8px;line-height:11px;color:#4c44b4;background:#fff;padding:0 1px;letter-spacing:-0.03px">11,5 - 48,0</div>
<div class="t" style="right:1174.2px;top:134.69px;font-size:8.4px;color:#222;font-weight:normal;letter-spacing:-0.2px;">100</div>
<div class="t" style="right:1174.2px;top:156.09px;font-size:8.4px;color:#222;font-weight:normal;letter-spacing:-0.2px;">50</div>
<div class="t" style="right:1174.2px;top:204.89px;font-size:8.4px;color:#222;font-weight:normal;letter-spacing:-0.2px;">100</div>
<div class="t" style="right:1174.2px;top:227.69px;font-size:8.4px;color:#222;font-weight:normal;letter-spacing:-0.2px;">50</div>
<div class="t" style="right:1174.2px;top:274.89px;font-size:8.4px;color:#222;font-weight:normal;letter-spacing:-0.2px;">80</div>
<div class="t" style="right:1174.2px;top:285.89px;font-size:8.4px;color:#222;font-weight:normal;letter-spacing:-0.2px;">60</div>
<div class="t" style="right:1174.2px;top:297.19px;font-size:8.4px;color:#222;font-weight:normal;letter-spacing:-0.2px;">40</div>
<div class="t" style="right:1174.2px;top:308.39px;font-size:8.4px;color:#222;font-weight:normal;letter-spacing:-0.2px;">20</div>
<div class="t" style="right:1174.2px;top:349.89px;font-size:8.4px;color:#222;font-weight:normal;letter-spacing:-0.2px;">50</div>
<div class="t" style="right:1174.2px;top:401.99px;font-size:8.4px;color:#222;font-weight:normal;letter-spacing:-0.2px;">5000</div>
<div class="t" style="right:1174.2px;top:411.99px;font-size:8.4px;color:#222;font-weight:normal;letter-spacing:-0.2px;">0</div>
<div class="t" style="right:1174.2px;top:432.19px;font-size:8.4px;color:#222;font-weight:normal;letter-spacing:-0.2px;">100</div>
<div class="t" style="right:1174.2px;top:445.29px;font-size:8.4px;color:#222;font-weight:normal;letter-spacing:-0.2px;">0</div>
<div class="t" style="right:1174.2px;top:470.89px;font-size:8.4px;color:#222;font-weight:normal;letter-spacing:-0.2px;">5</div>
<div class="t" style="right:1174.2px;top:485.79px;font-size:8.4px;color:#222;font-weight:normal;letter-spacing:-0.2px;">0</div>
<div class="t" style="right:1174.2px;top:505.69px;font-size:8.4px;color:#222;font-weight:normal;letter-spacing:-0.2px;">400</div>
<div class="t" style="right:1174.2px;top:523.29px;font-size:8.4px;color:#222;font-weight:normal;letter-spacing:-0.2px;">200</div>
<div class="t" style="right:1174.2px;top:540.59px;font-size:8.4px;color:#222;font-weight:normal;letter-spacing:-0.2px;">0</div>
<div class="t" style="right:1174.2px;top:564.19px;font-size:8.4px;color:#222;font-weight:normal;letter-spacing:-0.2px;">200</div>
<div class="t" style="right:1174.2px;top:580.09px;font-size:8.4px;color:#222;font-weight:normal;letter-spacing:-0.2px;">100</div>
<div class="t" style="left:37.8px;top:388.46px;font-size:8.2px;color:#8c3c94;font-weight:normal;letter-spacing:-0.02px;">ecu.rpm[rpm] (25 Hz)</div>
<div class="t" style="left:37.8px;top:426.56px;font-size:8.2px;color:#8c3c94;font-weight:normal;letter-spacing:-0.02px;">ecu.tps[%] (25 Hz)</div>
<div class="t" style="left:37.8px;top:459.06px;font-size:8.2px;color:#8c3c94;font-weight:normal;letter-spacing:-0.02px;">ecu.gear (25 Hz)</div>
<div class="t" style="left:37.8px;top:500.26px;font-size:8.2px;color:#8c3c94;font-weight:normal;letter-spacing:-0.02px;">ecu.speed[km/h] (25 Hz)</div>
<div class="t" style="left:37.8px;top:555.86px;font-size:8.2px;color:#3a9a3a;font-weight:normal;letter-spacing:-0.02px;">gps.speed[km/h] (25 Hz)</div>
<div class="t" style="right:910px;top:400.5px;font-size:8.4px;line-height:11px;color:#8c3c94;background:#fff;padding:0 0 0 1px;letter-spacing:-0.1px">5389</div>
<div class="t" style="right:910px;top:435.5px;font-size:8.4px;line-height:11px;color:#8c3c94;background:#fff;padding:0 0 0 1px;letter-spacing:-0.1px">63,0</div>
<div class="t" style="right:910px;top:475.5px;font-size:8.4px;line-height:11px;color:#8c3c94;background:#fff;padding:0 0 0 1px;letter-spacing:-0.1px">3</div>
<div class="t" style="right:910px;top:530.5px;font-size:8.4px;line-height:11px;color:#8c3c94;background:#fff;padding:0 0 0 1px;letter-spacing:-0.1px">106,0</div>
<div class="t" style="right:910px;top:578.5px;font-size:8.4px;line-height:11px;color:#3a9a3a;background:#fff;padding:0 0 0 1px;letter-spacing:-0.1px">102,56</div>
<div class="b" style="left:0px;top:605px;width:635px;height:12.5px;background:#b4b4c8;"></div>
<svg class="s" style="left:0;top:0" width="640" height="620"><path d="M28,605.5H635" stroke="#7c78b8" stroke-width="1.2"/><path d="M45.0,605V607" stroke="#7c78b8" stroke-width="1"/><path d="M56.8,605V607" stroke="#7c78b8" stroke-width="1"/><path d="M68.7,605V607" stroke="#7c78b8" stroke-width="1"/><path d="M80.5,605V607" stroke="#7c78b8" stroke-width="1"/><path d="M92.3,605V607" stroke="#7c78b8" stroke-width="1"/><path d="M104.2,605V607" stroke="#7c78b8" stroke-width="1"/><path d="M116.0,605V607" stroke="#7c78b8" stroke-width="1"/><path d="M127.9,605V607" stroke="#7c78b8" stroke-width="1"/><path d="M139.7,605V607" stroke="#7c78b8" stroke-width="1"/><path d="M151.5,605V607" stroke="#7c78b8" stroke-width="1"/><path d="M163.4,605V607" stroke="#7c78b8" stroke-width="1"/><path d="M175.2,605V607" stroke="#7c78b8" stroke-width="1"/><path d="M187.1,605V607" stroke="#7c78b8" stroke-width="1"/><path d="M198.9,605V607" stroke="#7c78b8" stroke-width="1"/><path d="M210.7,605V607" stroke="#7c78b8" stroke-width="1"/><path d="M222.6,605V607" stroke="#7c78b8" stroke-width="1"/><path d="M234.4,605V607" stroke="#7c78b8" stroke-width="1"/><path d="M246.3,605V607" stroke="#7c78b8" stroke-width="1"/><path d="M258.1,605V607" stroke="#7c78b8" stroke-width="1"/><path d="M269.9,605V607" stroke="#7c78b8" stroke-width="1"/><path d="M281.8,605V607" stroke="#7c78b8" stroke-width="1"/><path d="M293.6,605V607" stroke="#7c78b8" stroke-width="1"/><path d="M305.5,605V607" stroke="#7c78b8" stroke-width="1"/><path d="M317.3,605V607" stroke="#7c78b8" stroke-width="1"/><path d="M329.1,605V607" stroke="#7c78b8" stroke-width="1"/><path d="M341.0,605V607" stroke="#7c78b8" stroke-width="1"/><path d="M352.8,605V607" stroke="#7c78b8" stroke-width="1"/><path d="M364.7,605V607" stroke="#7c78b8" stroke-width="1"/><path d="M376.5,605V607" stroke="#7c78b8" stroke-width="1"/><path d="M388.3,605V607" stroke="#7c78b8" stroke-width="1"/><path d="M400.2,605V607" stroke="#7c78b8" stroke-width="1"/><path d="M412.0,605V607" stroke="#7c78b8" stroke-width="1"/><path d="M423.9,605V607" stroke="#7c78b8" stroke-width="1"/><path d="M435.7,605V607" stroke="#7c78b8" stroke-width="1"/><path d="M447.5,605V607" stroke="#7c78b8" stroke-width="1"/><path d="M459.4,605V607" stroke="#7c78b8" stroke-width="1"/><path d="M471.2,605V607" stroke="#7c78b8" stroke-width="1"/><path d="M483.1,605V607" stroke="#7c78b8" stroke-width="1"/><path d="M494.9,605V607" stroke="#7c78b8" stroke-width="1"/><path d="M506.7,605V607" stroke="#7c78b8" stroke-width="1"/><path d="M518.6,605V607" stroke="#7c78b8" stroke-width="1"/><path d="M530.4,605V607" stroke="#7c78b8" stroke-width="1"/><path d="M542.3,605V607" stroke="#7c78b8" stroke-width="1"/><path d="M554.1,605V607" stroke="#7c78b8" stroke-width="1"/><path d="M565.9,605V607" stroke="#7c78b8" stroke-width="1"/><path d="M577.8,605V607" stroke="#7c78b8" stroke-width="1"/><path d="M589.6,605V607" stroke="#7c78b8" stroke-width="1"/><path d="M601.5,605V607" stroke="#7c78b8" stroke-width="1"/><path d="M613.3,605V607" stroke="#7c78b8" stroke-width="1"/><path d="M625.1,605V607" stroke="#7c78b8" stroke-width="1"/><path d="M292.5,605V608" stroke="#7c78bc" stroke-width="1.2"/></svg>
<div class="t" style="left:79.6px;top:608.77px;font-size:8.3px;color:#202030;font-weight:normal;letter-spacing:0px;transform:scaleX(0.9003) translateX(-50%);transform-origin:0 0;">30:30</div>
<div class="t" style="left:139px;top:608.77px;font-size:8.3px;color:#202030;font-weight:normal;letter-spacing:0px;transform:scaleX(0.9003) translateX(-50%);transform-origin:0 0;">30:35</div>
<div class="t" style="left:198.4px;top:608.77px;font-size:8.3px;color:#202030;font-weight:normal;letter-spacing:0px;transform:scaleX(0.9003) translateX(-50%);transform-origin:0 0;">30:40</div>
<div class="t" style="left:257.6px;top:608.77px;font-size:8.3px;color:#202030;font-weight:normal;letter-spacing:0px;transform:scaleX(0.9003) translateX(-50%);transform-origin:0 0;">30:45</div>
<div class="t" style="left:316.8px;top:608.77px;font-size:8.3px;color:#202030;font-weight:normal;letter-spacing:0px;transform:scaleX(0.9003) translateX(-50%);transform-origin:0 0;">30:50</div>
<div class="t" style="left:375.6px;top:608.77px;font-size:8.3px;color:#202030;font-weight:normal;letter-spacing:0px;transform:scaleX(0.9003) translateX(-50%);transform-origin:0 0;">30:55</div>
<div class="t" style="left:434.8px;top:608.77px;font-size:8.3px;color:#202030;font-weight:normal;letter-spacing:0px;transform:scaleX(0.9003) translateX(-50%);transform-origin:0 0;">31:00</div>
<div class="t" style="left:493.6px;top:608.77px;font-size:8.3px;color:#202030;font-weight:normal;letter-spacing:0px;transform:scaleX(0.9003) translateX(-50%);transform-origin:0 0;">31:05</div>
<div class="t" style="left:552.6px;top:608.77px;font-size:8.3px;color:#202030;font-weight:normal;letter-spacing:0px;transform:scaleX(0.9003) translateX(-50%);transform-origin:0 0;">31:10</div>
<div class="t" style="left:611.8px;top:608.77px;font-size:8.3px;color:#202030;font-weight:normal;letter-spacing:0px;transform:scaleX(0.9003) translateX(-50%);transform-origin:0 0;">31:15</div>
<div class="b" style="left:28px;top:605px;width:10px;height:12px;overflow:hidden"><div class="t" style="left:-6.399999999999999px;top:3.77px;font-size:8.3px;color:#202030;font-weight:normal;letter-spacing:0px;transform:scaleX(0.9003) translateX(-50%);transform-origin:0 0;">30:25</div></div>
<div class="t" style="left:426.3px;top:109.6px;width:206px;height:12.3px;border:1px solid #404040;background:#fff;box-shadow:1px 1px 0 #b8b8b8"></div>
<div class="t" style="left:429.5px;top:112.51px;font-size:9.2px;color:#111;font-weight:normal;letter-spacing:-0.05px;">20181020_0837_46.adulog: fw:0.052.0, cl:0.000.0</div>
<svg class="s" style="left:638px;top:94px" width="562" height="252" viewBox="638 94 562 252"><path d="M672.2,119V318" stroke="#8a8a8a" stroke-width="1" stroke-dasharray="2 2"/><path d="M697.0,119V318" stroke="#c8c8c8" stroke-width="1" stroke-dasharray="2 2"/><path d="M721.8,119V318" stroke="#8a8a8a" stroke-width="1" stroke-dasharray="2 2"/><path d="M746.6,119V318" stroke="#c8c8c8" stroke-width="1" stroke-dasharray="2 2"/><path d="M771.4,119V318" stroke="#8a8a8a" stroke-width="1" stroke-dasharray="2 2"/><path d="M796.2,119V318" stroke="#c8c8c8" stroke-width="1" stroke-dasharray="2 2"/><path d="M821.0,119V318" stroke="#8a8a8a" stroke-width="1" stroke-dasharray="2 2"/><path d="M845.8,119V318" stroke="#c8c8c8" stroke-width="1" stroke-dasharray="2 2"/><path d="M870.6,119V318" stroke="#8a8a8a" stroke-width="1" stroke-dasharray="2 2"/><path d="M895.4,119V318" stroke="#c8c8c8" stroke-width="1" stroke-dasharray="2 2"/><path d="M920.2,119V318" stroke="#8a8a8a" stroke-width="1" stroke-dasharray="2 2"/><path d="M945.0,119V318" stroke="#c8c8c8" stroke-width="1" stroke-dasharray="2 2"/><path d="M969.8,119V318" stroke="#8a8a8a" stroke-width="1" stroke-dasharray="2 2"/><path d="M994.6,119V318" stroke="#c8c8c8" stroke-width="1" stroke-dasharray="2 2"/><path d="M1019.4,119V318" stroke="#8a8a8a" stroke-width="1" stroke-dasharray="2 2"/><path d="M1044.2,119V318" stroke="#c8c8c8" stroke-width="1" stroke-dasharray="2 2"/><path d="M1069.0,119V318" stroke="#8a8a8a" stroke-width="1" stroke-dasharray="2 2"/><path d="M1093.8,119V318" stroke="#c8c8c8" stroke-width="1" stroke-dasharray="2 2"/><path d="M1118.6,119V318" stroke="#8a8a8a" stroke-width="1" stroke-dasharray="2 2"/><path d="M1143.4,119V318" stroke="#c8c8c8" stroke-width="1" stroke-dasharray="2 2"/><path d="M668,288.6H1146.5" stroke="#8a8a8a" stroke-width="1" stroke-dasharray="2 2"/><path d="M668,259.0H1146.5" stroke="#c8c8c8" stroke-width="1" stroke-dasharray="2 2"/><path d="M668,229.4H1146.5" stroke="#8a8a8a" stroke-width="1" stroke-dasharray="2 2"/><path d="M668,199.8H1146.5" stroke="#c8c8c8" stroke-width="1" stroke-dasharray="2 2"/><path d="M668,170.2H1146.5" stroke="#8a8a8a" stroke-width="1" stroke-dasharray="2 2"/><path d="M668,140.6H1146.5" stroke="#c8c8c8" stroke-width="1" stroke-dasharray="2 2"/><path d="M668,318.5H1146.5" stroke="#c8c8c8" stroke-width="1.5"/><path fill="#0000ff" d="M860.8,317.5a2.15,2.15 0 1,0 4.3,0a2.15,2.15 0 1,0 -4.3,0M865.8,317.5a2.15,2.15 0 1,0 4.3,0a2.15,2.15 0 1,0 -4.3,0M870.8,317.5a2.15,2.15 0 1,0 4.3,0a2.15,2.15 0 1,0 -4.3,0M875.8,317.5a2.15,2.15 0 1,0 4.3,0a2.15,2.15 0 1,0 -4.3,0M880.9,317.5a2.15,2.15 0 1,0 4.3,0a2.15,2.15 0 1,0 -4.3,0M885.9,317.5a2.15,2.15 0 1,0 4.3,0a2.15,2.15 0 1,0 -4.3,0M890.9,317.5a2.15,2.15 0 1,0 4.3,0a2.15,2.15 0 1,0 -4.3,0M896.0,317.5a2.15,2.15 0 1,0 4.3,0a2.15,2.15 0 1,0 -4.3,0M901.0,317.5a2.15,2.15 0 1,0 4.3,0a2.15,2.15 0 1,0 -4.3,0M906.0,317.5a2.15,2.15 0 1,0 4.3,0a2.15,2.15 0 1,0 -4.3,0M911.0,317.5a2.15,2.15 0 1,0 4.3,0a2.15,2.15 0 1,0 -4.3,0M916.1,317.5a2.15,2.15 0 1,0 4.3,0a2.15,2.15 0 1,0 -4.3,0M921.1,317.5a2.15,2.15 0 1,0 4.3,0a2.15,2.15 0 1,0 -4.3,0"/><path fill="#0014ff" d="M883.3,297.6a2.15,2.15 0 1,0 4.3,0a2.15,2.15 0 1,0 -4.3,0M893.8,297.6a2.15,2.15 0 1,0 4.3,0a2.15,2.15 0 1,0 -4.3,0M886.3,301.3a2.15,2.15 0 1,0 4.3,0a2.15,2.15 0 1,0 -4.3,0M890.7,301.3a2.15,2.15 0 1,0 4.3,0a2.15,2.15 0 1,0 -4.3,0M895.9,301.3a2.15,2.15 0 1,0 4.3,0a2.15,2.15 0 1,0 -4.3,0M900.7,301.3a2.15,2.15 0 1,0 4.3,0a2.15,2.15 0 1,0 -4.3,0M883.4,305.0a2.15,2.15 0 1,0 4.3,0a2.15,2.15 0 1,0 -4.3,0M888.1,305.0a2.15,2.15 0 1,0 4.3,0a2.15,2.15 0 1,0 -4.3,0M893.7,305.0a2.15,2.15 0 1,0 4.3,0a2.15,2.15 0 1,0 -4.3,0M903.2,305.0a2.15,2.15 0 1,0 4.3,0a2.15,2.15 0 1,0 -4.3,0M885.8,308.7a2.15,2.15 0 1,0 4.3,0a2.15,2.15 0 1,0 -4.3,0M890.0,308.7a2.15,2.15 0 1,0 4.3,0a2.15,2.15 0 1,0 -4.3,0M895.7,308.7a2.15,2.15 0 1,0 4.3,0a2.15,2.15 0 1,0 -4.3,0M900.1,308.7a2.15,2.15 0 1,0 4.3,0a2.15,2.15 0 1,0 -4.3,0M888.3,312.4a2.15,2.15 0 1,0 4.3,0a2.15,2.15 0 1,0 -4.3,0"/><path fill="#002cff" d="M904.9,286.5a2.15,2.15 0 1,0 4.3,0a2.15,2.15 0 1,0 -4.3,0M885.9,293.9a2.15,2.15 0 1,0 4.3,0a2.15,2.15 0 1,0 -4.3,0"/><path fill="#0044ff" d="M878.0,282.8a2.15,2.15 0 1,0 4.3,0a2.15,2.15 0 1,0 -4.3,0M883.0,282.8a2.15,2.15 0 1,0 4.3,0a2.15,2.15 0 1,0 -4.3,0M889.2,282.8a2.15,2.15 0 1,0 4.3,0a2.15,2.15 0 1,0 -4.3,0M892.6,282.8a2.15,2.15 0 1,0 4.3,0a2.15,2.15 0 1,0 -4.3,0M903.1,282.8a2.15,2.15 0 1,0 4.3,0a2.15,2.15 0 1,0 -4.3,0M907.8,282.8a2.15,2.15 0 1,0 4.3,0a2.15,2.15 0 1,0 -4.3,0M880.7,286.5a2.15,2.15 0 1,0 4.3,0a2.15,2.15 0 1,0 -4.3,0M886.3,286.5a2.15,2.15 0 1,0 4.3,0a2.15,2.15 0 1,0 -4.3,0M895.0,286.5a2.15,2.15 0 1,0 4.3,0a2.15,2.15 0 1,0 -4.3,0M882.8,290.2a2.15,2.15 0 1,0 4.3,0a2.15,2.15 0 1,0 -4.3,0M893.2,290.2a2.15,2.15 0 1,0 4.3,0a2.15,2.15 0 1,0 -4.3,0M880.7,293.9a2.15,2.15 0 1,0 4.3,0a2.15,2.15 0 1,0 -4.3,0M895.6,293.9a2.15,2.15 0 1,0 4.3,0a2.15,2.15 0 1,0 -4.3,0M905.5,293.9a2.15,2.15 0 1,0 4.3,0a2.15,2.15 0 1,0 -4.3,0"/><path fill="#005cff" d="M893.5,268.0a2.15,2.15 0 1,0 4.3,0a2.15,2.15 0 1,0 -4.3,0M886.1,271.7a2.15,2.15 0 1,0 4.3,0a2.15,2.15 0 1,0 -4.3,0M910.9,271.7a2.15,2.15 0 1,0 4.3,0a2.15,2.15 0 1,0 -4.3,0M903.5,275.4a2.15,2.15 0 1,0 4.3,0a2.15,2.15 0 1,0 -4.3,0M881.2,279.1a2.15,2.15 0 1,0 4.3,0a2.15,2.15 0 1,0 -4.3,0M888.8,290.2a2.15,2.15 0 1,0 4.3,0a2.15,2.15 0 1,0 -4.3,0M902.8,290.2a2.15,2.15 0 1,0 4.3,0a2.15,2.15 0 1,0 -4.3,0"/><path fill="#0074ff" d="M913.1,253.2a2.15,2.15 0 1,0 4.3,0a2.15,2.15 0 1,0 -4.3,0M871.2,264.3a2.15,2.15 0 1,0 4.3,0a2.15,2.15 0 1,0 -4.3,0M875.8,264.3a2.15,2.15 0 1,0 4.3,0a2.15,2.15 0 1,0 -4.3,0M890.1,264.3a2.15,2.15 0 1,0 4.3,0a2.15,2.15 0 1,0 -4.3,0M900.9,264.3a2.15,2.15 0 1,0 4.3,0a2.15,2.15 0 1,0 -4.3,0M915.0,264.3a2.15,2.15 0 1,0 4.3,0a2.15,2.15 0 1,0 -4.3,0M877.8,268.0a2.15,2.15 0 1,0 4.3,0a2.15,2.15 0 1,0 -4.3,0M888.1,268.0a2.15,2.15 0 1,0 4.3,0a2.15,2.15 0 1,0 -4.3,0M881.3,271.7a2.15,2.15 0 1,0 4.3,0a2.15,2.15 0 1,0 -4.3,0M885.9,279.1a2.15,2.15 0 1,0 4.3,0a2.15,2.15 0 1,0 -4.3,0M895.7,279.1a2.15,2.15 0 1,0 4.3,0a2.15,2.15 0 1,0 -4.3,0M900.9,279.1a2.15,2.15 0 1,0 4.3,0a2.15,2.15 0 1,0 -4.3,0M905.5,279.1a2.15,2.15 0 1,0 4.3,0a2.15,2.15 0 1,0 -4.3,0M873.9,290.0a2.15,2.15 0 1,0 4.3,0a2.15,2.15 0 1,0 -4.3,0M909.9,282.0a2.15,2.15 0 1,0 4.3,0a2.15,2.15 0 1,0 -4.3,0"/><path fill="#008bff" d="M927.1,245.8a2.15,2.15 0 1,0 4.3,0a2.15,2.15 0 1,0 -4.3,0M885.8,249.5a2.15,2.15 0 1,0 4.3,0a2.15,2.15 0 1,0 -4.3,0M885.9,264.3a2.15,2.15 0 1,0 4.3,0a2.15,2.15 0 1,0 -4.3,0M905.6,264.3a2.15,2.15 0 1,0 4.3,0a2.15,2.15 0 1,0 -4.3,0M910.0,264.3a2.15,2.15 0 1,0 4.3,0a2.15,2.15 0 1,0 -4.3,0M874.1,268.0a2.15,2.15 0 1,0 4.3,0a2.15,2.15 0 1,0 -4.3,0M884.3,268.0a2.15,2.15 0 1,0 4.3,0a2.15,2.15 0 1,0 -4.3,0M908.7,268.0a2.15,2.15 0 1,0 4.3,0a2.15,2.15 0 1,0 -4.3,0M913.6,268.0a2.15,2.15 0 1,0 4.3,0a2.15,2.15 0 1,0 -4.3,0M876.6,271.7a2.15,2.15 0 1,0 4.3,0a2.15,2.15 0 1,0 -4.3,0M890.3,271.7a2.15,2.15 0 1,0 4.3,0a2.15,2.15 0 1,0 -4.3,0M895.5,271.7a2.15,2.15 0 1,0 4.3,0a2.15,2.15 0 1,0 -4.3,0M901.0,271.7a2.15,2.15 0 1,0 4.3,0a2.15,2.15 0 1,0 -4.3,0M878.9,275.4a2.15,2.15 0 1,0 4.3,0a2.15,2.15 0 1,0 -4.3,0M888.4,275.4a2.15,2.15 0 1,0 4.3,0a2.15,2.15 0 1,0 -4.3,0M892.7,275.4a2.15,2.15 0 1,0 4.3,0a2.15,2.15 0 1,0 -4.3,0M890.7,279.1a2.15,2.15 0 1,0 4.3,0a2.15,2.15 0 1,0 -4.3,0"/><path fill="#00a3ff" d="M860.7,242.1a2.15,2.15 0 1,0 4.3,0a2.15,2.15 0 1,0 -4.3,0M876.3,242.1a2.15,2.15 0 1,0 4.3,0a2.15,2.15 0 1,0 -4.3,0M881.1,242.1a2.15,2.15 0 1,0 4.3,0a2.15,2.15 0 1,0 -4.3,0M891.0,242.1a2.15,2.15 0 1,0 4.3,0a2.15,2.15 0 1,0 -4.3,0M920.0,242.1a2.15,2.15 0 1,0 4.3,0a2.15,2.15 0 1,0 -4.3,0M859.1,245.8a2.15,2.15 0 1,0 4.3,0a2.15,2.15 0 1,0 -4.3,0M868.4,245.8a2.15,2.15 0 1,0 4.3,0a2.15,2.15 0 1,0 -4.3,0M901.1,249.5a2.15,2.15 0 1,0 4.3,0a2.15,2.15 0 1,0 -4.3,0M863.3,253.2a2.15,2.15 0 1,0 4.3,0a2.15,2.15 0 1,0 -4.3,0M917.6,253.2a2.15,2.15 0 1,0 4.3,0a2.15,2.15 0 1,0 -4.3,0M866.3,256.9a2.15,2.15 0 1,0 4.3,0a2.15,2.15 0 1,0 -4.3,0M880.9,256.9a2.15,2.15 0 1,0 4.3,0a2.15,2.15 0 1,0 -4.3,0M898.0,275.4a2.15,2.15 0 1,0 4.3,0a2.15,2.15 0 1,0 -4.3,0M902.9,289.0a2.15,2.15 0 1,0 4.3,0a2.15,2.15 0 1,0 -4.3,0"/><path fill="#00bbff" d="M903.8,208.8a2.15,2.15 0 1,0 4.3,0a2.15,2.15 0 1,0 -4.3,0M890.7,219.9a2.15,2.15 0 1,0 4.3,0a2.15,2.15 0 1,0 -4.3,0M866.3,242.1a2.15,2.15 0 1,0 4.3,0a2.15,2.15 0 1,0 -4.3,0M885.9,242.1a2.15,2.15 0 1,0 4.3,0a2.15,2.15 0 1,0 -4.3,0M895.1,242.1a2.15,2.15 0 1,0 4.3,0a2.15,2.15 0 1,0 -4.3,0M910.1,242.1a2.15,2.15 0 1,0 4.3,0a2.15,2.15 0 1,0 -4.3,0M915.5,242.1a2.15,2.15 0 1,0 4.3,0a2.15,2.15 0 1,0 -4.3,0M925.1,242.1a2.15,2.15 0 1,0 4.3,0a2.15,2.15 0 1,0 -4.3,0M873.2,245.8a2.15,2.15 0 1,0 4.3,0a2.15,2.15 0 1,0 -4.3,0M878.3,245.8a2.15,2.15 0 1,0 4.3,0a2.15,2.15 0 1,0 -4.3,0M883.4,245.8a2.15,2.15 0 1,0 4.3,0a2.15,2.15 0 1,0 -4.3,0M888.4,245.8a2.15,2.15 0 1,0 4.3,0a2.15,2.15 0 1,0 -4.3,0M893.5,245.8a2.15,2.15 0 1,0 4.3,0a2.15,2.15 0 1,0 -4.3,0M902.5,245.8a2.15,2.15 0 1,0 4.3,0a2.15,2.15 0 1,0 -4.3,0M908.3,245.8a2.15,2.15 0 1,0 4.3,0a2.15,2.15 0 1,0 -4.3,0M913.5,245.8a2.15,2.15 0 1,0 4.3,0a2.15,2.15 0 1,0 -4.3,0M922.5,245.8a2.15,2.15 0 1,0 4.3,0a2.15,2.15 0 1,0 -4.3,0M932.7,245.8a2.15,2.15 0 1,0 4.3,0a2.15,2.15 0 1,0 -4.3,0M860.6,249.5a2.15,2.15 0 1,0 4.3,0a2.15,2.15 0 1,0 -4.3,0M895.3,249.5a2.15,2.15 0 1,0 4.3,0a2.15,2.15 0 1,0 -4.3,0M915.7,249.5a2.15,2.15 0 1,0 4.3,0a2.15,2.15 0 1,0 -4.3,0M920.1,249.5a2.15,2.15 0 1,0 4.3,0a2.15,2.15 0 1,0 -4.3,0M925.5,249.5a2.15,2.15 0 1,0 4.3,0a2.15,2.15 0 1,0 -4.3,0M935.5,249.5a2.15,2.15 0 1,0 4.3,0a2.15,2.15 0 1,0 -4.3,0M858.8,253.2a2.15,2.15 0 1,0 4.3,0a2.15,2.15 0 1,0 -4.3,0M888.4,253.2a2.15,2.15 0 1,0 4.3,0a2.15,2.15 0 1,0 -4.3,0M892.7,253.2a2.15,2.15 0 1,0 4.3,0a2.15,2.15 0 1,0 -4.3,0M903.1,253.2a2.15,2.15 0 1,0 4.3,0a2.15,2.15 0 1,0 -4.3,0M908.0,253.2a2.15,2.15 0 1,0 4.3,0a2.15,2.15 0 1,0 -4.3,0M875.6,256.9a2.15,2.15 0 1,0 4.3,0a2.15,2.15 0 1,0 -4.3,0M885.6,256.9a2.15,2.15 0 1,0 4.3,0a2.15,2.15 0 1,0 -4.3,0M890.5,256.9a2.15,2.15 0 1,0 4.3,0a2.15,2.15 0 1,0 -4.3,0M894.8,256.9a2.15,2.15 0 1,0 4.3,0a2.15,2.15 0 1,0 -4.3,0M920.3,256.9a2.15,2.15 0 1,0 4.3,0a2.15,2.15 0 1,0 -4.3,0M907.8,260.6a2.15,2.15 0 1,0 4.3,0a2.15,2.15 0 1,0 -4.3,0"/><path fill="#00d3ff" d="M922.9,208.8a2.15,2.15 0 1,0 4.3,0a2.15,2.15 0 1,0 -4.3,0M932.4,216.2a2.15,2.15 0 1,0 4.3,0a2.15,2.15 0 1,0 -4.3,0M900.8,227.3a2.15,2.15 0 1,0 4.3,0a2.15,2.15 0 1,0 -4.3,0M920.3,227.3a2.15,2.15 0 1,0 4.3,0a2.15,2.15 0 1,0 -4.3,0M895.2,234.7a2.15,2.15 0 1,0 4.3,0a2.15,2.15 0 1,0 -4.3,0M905.1,242.1a2.15,2.15 0 1,0 4.3,0a2.15,2.15 0 1,0 -4.3,0M854.1,245.8a2.15,2.15 0 1,0 4.3,0a2.15,2.15 0 1,0 -4.3,0M898.8,245.8a2.15,2.15 0 1,0 4.3,0a2.15,2.15 0 1,0 -4.3,0M918.2,245.8a2.15,2.15 0 1,0 4.3,0a2.15,2.15 0 1,0 -4.3,0M851.6,249.5a2.15,2.15 0 1,0 4.3,0a2.15,2.15 0 1,0 -4.3,0M856.7,249.5a2.15,2.15 0 1,0 4.3,0a2.15,2.15 0 1,0 -4.3,0M865.7,249.5a2.15,2.15 0 1,0 4.3,0a2.15,2.15 0 1,0 -4.3,0M871.1,249.5a2.15,2.15 0 1,0 4.3,0a2.15,2.15 0 1,0 -4.3,0M875.4,249.5a2.15,2.15 0 1,0 4.3,0a2.15,2.15 0 1,0 -4.3,0M881.3,249.5a2.15,2.15 0 1,0 4.3,0a2.15,2.15 0 1,0 -4.3,0M891.4,249.5a2.15,2.15 0 1,0 4.3,0a2.15,2.15 0 1,0 -4.3,0M904.7,249.5a2.15,2.15 0 1,0 4.3,0a2.15,2.15 0 1,0 -4.3,0M909.9,249.5a2.15,2.15 0 1,0 4.3,0a2.15,2.15 0 1,0 -4.3,0M929.5,249.5a2.15,2.15 0 1,0 4.3,0a2.15,2.15 0 1,0 -4.3,0M854.4,253.2a2.15,2.15 0 1,0 4.3,0a2.15,2.15 0 1,0 -4.3,0M867.9,253.2a2.15,2.15 0 1,0 4.3,0a2.15,2.15 0 1,0 -4.3,0M873.6,253.2a2.15,2.15 0 1,0 4.3,0a2.15,2.15 0 1,0 -4.3,0M878.0,253.2a2.15,2.15 0 1,0 4.3,0a2.15,2.15 0 1,0 -4.3,0M897.9,253.2a2.15,2.15 0 1,0 4.3,0a2.15,2.15 0 1,0 -4.3,0M923.0,253.2a2.15,2.15 0 1,0 4.3,0a2.15,2.15 0 1,0 -4.3,0M870.9,256.9a2.15,2.15 0 1,0 4.3,0a2.15,2.15 0 1,0 -4.3,0M900.7,256.9a2.15,2.15 0 1,0 4.3,0a2.15,2.15 0 1,0 -4.3,0M905.3,256.9a2.15,2.15 0 1,0 4.3,0a2.15,2.15 0 1,0 -4.3,0M910.8,256.9a2.15,2.15 0 1,0 4.3,0a2.15,2.15 0 1,0 -4.3,0M915.5,256.9a2.15,2.15 0 1,0 4.3,0a2.15,2.15 0 1,0 -4.3,0M868.7,260.6a2.15,2.15 0 1,0 4.3,0a2.15,2.15 0 1,0 -4.3,0M893.3,260.6a2.15,2.15 0 1,0 4.3,0a2.15,2.15 0 1,0 -4.3,0M898.4,260.6a2.15,2.15 0 1,0 4.3,0a2.15,2.15 0 1,0 -4.3,0M902.9,260.6a2.15,2.15 0 1,0 4.3,0a2.15,2.15 0 1,0 -4.3,0"/><path fill="#00ebff" d="M913.3,208.8a2.15,2.15 0 1,0 4.3,0a2.15,2.15 0 1,0 -4.3,0M846.2,212.5a2.15,2.15 0 1,0 4.3,0a2.15,2.15 0 1,0 -4.3,0M939.1,212.5a2.15,2.15 0 1,0 4.3,0a2.15,2.15 0 1,0 -4.3,0M868.8,216.2a2.15,2.15 0 1,0 4.3,0a2.15,2.15 0 1,0 -4.3,0M877.6,216.2a2.15,2.15 0 1,0 4.3,0a2.15,2.15 0 1,0 -4.3,0M888.2,216.2a2.15,2.15 0 1,0 4.3,0a2.15,2.15 0 1,0 -4.3,0M947.3,216.2a2.15,2.15 0 1,0 4.3,0a2.15,2.15 0 1,0 -4.3,0M846.6,219.9a2.15,2.15 0 1,0 4.3,0a2.15,2.15 0 1,0 -4.3,0M871.0,219.9a2.15,2.15 0 1,0 4.3,0a2.15,2.15 0 1,0 -4.3,0M895.9,219.9a2.15,2.15 0 1,0 4.3,0a2.15,2.15 0 1,0 -4.3,0M925.3,219.9a2.15,2.15 0 1,0 4.3,0a2.15,2.15 0 1,0 -4.3,0M854.3,223.6a2.15,2.15 0 1,0 4.3,0a2.15,2.15 0 1,0 -4.3,0M873.1,223.6a2.15,2.15 0 1,0 4.3,0a2.15,2.15 0 1,0 -4.3,0M903.2,223.6a2.15,2.15 0 1,0 4.3,0a2.15,2.15 0 1,0 -4.3,0M891.0,227.3a2.15,2.15 0 1,0 4.3,0a2.15,2.15 0 1,0 -4.3,0M905.1,227.3a2.15,2.15 0 1,0 4.3,0a2.15,2.15 0 1,0 -4.3,0M878.2,231.0a2.15,2.15 0 1,0 4.3,0a2.15,2.15 0 1,0 -4.3,0M917.9,231.0a2.15,2.15 0 1,0 4.3,0a2.15,2.15 0 1,0 -4.3,0M923.1,231.0a2.15,2.15 0 1,0 4.3,0a2.15,2.15 0 1,0 -4.3,0M883.5,238.4a2.15,2.15 0 1,0 4.3,0a2.15,2.15 0 1,0 -4.3,0M907.5,238.4a2.15,2.15 0 1,0 4.3,0a2.15,2.15 0 1,0 -4.3,0M870.6,242.1a2.15,2.15 0 1,0 4.3,0a2.15,2.15 0 1,0 -4.3,0M882.6,253.2a2.15,2.15 0 1,0 4.3,0a2.15,2.15 0 1,0 -4.3,0M887.5,260.6a2.15,2.15 0 1,0 4.3,0a2.15,2.15 0 1,0 -4.3,0M913.3,260.6a2.15,2.15 0 1,0 4.3,0a2.15,2.15 0 1,0 -4.3,0"/><path fill="#00fffc" d="M959.6,197.7a2.15,2.15 0 1,0 4.3,0a2.15,2.15 0 1,0 -4.3,0M925.2,205.1a2.15,2.15 0 1,0 4.3,0a2.15,2.15 0 1,0 -4.3,0M843.8,208.8a2.15,2.15 0 1,0 4.3,0a2.15,2.15 0 1,0 -4.3,0M853.1,208.8a2.15,2.15 0 1,0 4.3,0a2.15,2.15 0 1,0 -4.3,0M863.7,208.8a2.15,2.15 0 1,0 4.3,0a2.15,2.15 0 1,0 -4.3,0M867.7,208.8a2.15,2.15 0 1,0 4.3,0a2.15,2.15 0 1,0 -4.3,0M908.2,208.8a2.15,2.15 0 1,0 4.3,0a2.15,2.15 0 1,0 -4.3,0M851.3,212.5a2.15,2.15 0 1,0 4.3,0a2.15,2.15 0 1,0 -4.3,0M894.9,212.5a2.15,2.15 0 1,0 4.3,0a2.15,2.15 0 1,0 -4.3,0M904.8,212.5a2.15,2.15 0 1,0 4.3,0a2.15,2.15 0 1,0 -4.3,0M920.3,212.5a2.15,2.15 0 1,0 4.3,0a2.15,2.15 0 1,0 -4.3,0M929.9,212.5a2.15,2.15 0 1,0 4.3,0a2.15,2.15 0 1,0 -4.3,0M935.1,212.5a2.15,2.15 0 1,0 4.3,0a2.15,2.15 0 1,0 -4.3,0M944.2,212.5a2.15,2.15 0 1,0 4.3,0a2.15,2.15 0 1,0 -4.3,0M898.2,216.2a2.15,2.15 0 1,0 4.3,0a2.15,2.15 0 1,0 -4.3,0M912.2,216.2a2.15,2.15 0 1,0 4.3,0a2.15,2.15 0 1,0 -4.3,0M937.8,216.2a2.15,2.15 0 1,0 4.3,0a2.15,2.15 0 1,0 -4.3,0M881.5,219.9a2.15,2.15 0 1,0 4.3,0a2.15,2.15 0 1,0 -4.3,0M905.3,219.9a2.15,2.15 0 1,0 4.3,0a2.15,2.15 0 1,0 -4.3,0M910.1,219.9a2.15,2.15 0 1,0 4.3,0a2.15,2.15 0 1,0 -4.3,0M930.6,219.9a2.15,2.15 0 1,0 4.3,0a2.15,2.15 0 1,0 -4.3,0M934.6,219.9a2.15,2.15 0 1,0 4.3,0a2.15,2.15 0 1,0 -4.3,0M868.9,223.6a2.15,2.15 0 1,0 4.3,0a2.15,2.15 0 1,0 -4.3,0M888.4,223.6a2.15,2.15 0 1,0 4.3,0a2.15,2.15 0 1,0 -4.3,0M861.6,227.3a2.15,2.15 0 1,0 4.3,0a2.15,2.15 0 1,0 -4.3,0M865.9,227.3a2.15,2.15 0 1,0 4.3,0a2.15,2.15 0 1,0 -4.3,0M871.2,227.3a2.15,2.15 0 1,0 4.3,0a2.15,2.15 0 1,0 -4.3,0M881.0,227.3a2.15,2.15 0 1,0 4.3,0a2.15,2.15 0 1,0 -4.3,0M885.5,227.3a2.15,2.15 0 1,0 4.3,0a2.15,2.15 0 1,0 -4.3,0M895.7,227.3a2.15,2.15 0 1,0 4.3,0a2.15,2.15 0 1,0 -4.3,0M915.8,227.3a2.15,2.15 0 1,0 4.3,0a2.15,2.15 0 1,0 -4.3,0M873.4,231.0a2.15,2.15 0 1,0 4.3,0a2.15,2.15 0 1,0 -4.3,0M888.6,231.0a2.15,2.15 0 1,0 4.3,0a2.15,2.15 0 1,0 -4.3,0M908.5,231.0a2.15,2.15 0 1,0 4.3,0a2.15,2.15 0 1,0 -4.3,0M927.2,231.0a2.15,2.15 0 1,0 4.3,0a2.15,2.15 0 1,0 -4.3,0M861.0,234.7a2.15,2.15 0 1,0 4.3,0a2.15,2.15 0 1,0 -4.3,0M870.9,234.7a2.15,2.15 0 1,0 4.3,0a2.15,2.15 0 1,0 -4.3,0M890.7,234.7a2.15,2.15 0 1,0 4.3,0a2.15,2.15 0 1,0 -4.3,0M911.2,234.7a2.15,2.15 0 1,0 4.3,0a2.15,2.15 0 1,0 -4.3,0M893.0,238.4a2.15,2.15 0 1,0 4.3,0a2.15,2.15 0 1,0 -4.3,0M913.3,238.4a2.15,2.15 0 1,0 4.3,0a2.15,2.15 0 1,0 -4.3,0M863.6,245.8a2.15,2.15 0 1,0 4.3,0a2.15,2.15 0 1,0 -4.3,0M980.9,251.0a2.15,2.15 0 1,0 4.3,0a2.15,2.15 0 1,0 -4.3,0M863.9,300.0a2.15,2.15 0 1,0 4.3,0a2.15,2.15 0 1,0 -4.3,0M867.9,296.0a2.15,2.15 0 1,0 4.3,0a2.15,2.15 0 1,0 -4.3,0M881.9,311.0a2.15,2.15 0 1,0 4.3,0a2.15,2.15 0 1,0 -4.3,0M867.9,321.3a2.15,2.15 0 1,0 4.3,0a2.15,2.15 0 1,0 -4.3,0M873.1,321.3a2.15,2.15 0 1,0 4.3,0a2.15,2.15 0 1,0 -4.3,0M878.5,321.3a2.15,2.15 0 1,0 4.3,0a2.15,2.15 0 1,0 -4.3,0M883.8,321.3a2.15,2.15 0 1,0 4.3,0a2.15,2.15 0 1,0 -4.3,0M889.1,321.3a2.15,2.15 0 1,0 4.3,0a2.15,2.15 0 1,0 -4.3,0M894.4,321.3a2.15,2.15 0 1,0 4.3,0a2.15,2.15 0 1,0 -4.3,0M899.6,321.3a2.15,2.15 0 1,0 4.3,0a2.15,2.15 0 1,0 -4.3,0M905.0,321.3a2.15,2.15 0 1,0 4.3,0a2.15,2.15 0 1,0 -4.3,0"/><path fill="#00ffe4" d="M945.2,190.3a2.15,2.15 0 1,0 4.3,0a2.15,2.15 0 1,0 -4.3,0M954.8,190.3a2.15,2.15 0 1,0 4.3,0a2.15,2.15 0 1,0 -4.3,0M912.1,201.4a2.15,2.15 0 1,0 4.3,0a2.15,2.15 0 1,0 -4.3,0M962.6,201.4a2.15,2.15 0 1,0 4.3,0a2.15,2.15 0 1,0 -4.3,0M910.0,205.1a2.15,2.15 0 1,0 4.3,0a2.15,2.15 0 1,0 -4.3,0M873.9,208.8a2.15,2.15 0 1,0 4.3,0a2.15,2.15 0 1,0 -4.3,0M878.3,208.8a2.15,2.15 0 1,0 4.3,0a2.15,2.15 0 1,0 -4.3,0M884.3,208.8a2.15,2.15 0 1,0 4.3,0a2.15,2.15 0 1,0 -4.3,0M918.4,208.8a2.15,2.15 0 1,0 4.3,0a2.15,2.15 0 1,0 -4.3,0M927.6,208.8a2.15,2.15 0 1,0 4.3,0a2.15,2.15 0 1,0 -4.3,0M932.5,208.8a2.15,2.15 0 1,0 4.3,0a2.15,2.15 0 1,0 -4.3,0M942.9,208.8a2.15,2.15 0 1,0 4.3,0a2.15,2.15 0 1,0 -4.3,0M856.6,212.5a2.15,2.15 0 1,0 4.3,0a2.15,2.15 0 1,0 -4.3,0M871.2,212.5a2.15,2.15 0 1,0 4.3,0a2.15,2.15 0 1,0 -4.3,0M875.9,212.5a2.15,2.15 0 1,0 4.3,0a2.15,2.15 0 1,0 -4.3,0M880.2,212.5a2.15,2.15 0 1,0 4.3,0a2.15,2.15 0 1,0 -4.3,0M900.5,212.5a2.15,2.15 0 1,0 4.3,0a2.15,2.15 0 1,0 -4.3,0M925.1,212.5a2.15,2.15 0 1,0 4.3,0a2.15,2.15 0 1,0 -4.3,0M949.5,212.5a2.15,2.15 0 1,0 4.3,0a2.15,2.15 0 1,0 -4.3,0M863.6,216.2a2.15,2.15 0 1,0 4.3,0a2.15,2.15 0 1,0 -4.3,0M903.1,216.2a2.15,2.15 0 1,0 4.3,0a2.15,2.15 0 1,0 -4.3,0M918.7,216.2a2.15,2.15 0 1,0 4.3,0a2.15,2.15 0 1,0 -4.3,0M923.3,216.2a2.15,2.15 0 1,0 4.3,0a2.15,2.15 0 1,0 -4.3,0M927.8,216.2a2.15,2.15 0 1,0 4.3,0a2.15,2.15 0 1,0 -4.3,0M941.8,216.2a2.15,2.15 0 1,0 4.3,0a2.15,2.15 0 1,0 -4.3,0M851.9,219.9a2.15,2.15 0 1,0 4.3,0a2.15,2.15 0 1,0 -4.3,0M855.8,219.9a2.15,2.15 0 1,0 4.3,0a2.15,2.15 0 1,0 -4.3,0M860.8,219.9a2.15,2.15 0 1,0 4.3,0a2.15,2.15 0 1,0 -4.3,0M876.2,219.9a2.15,2.15 0 1,0 4.3,0a2.15,2.15 0 1,0 -4.3,0M900.3,219.9a2.15,2.15 0 1,0 4.3,0a2.15,2.15 0 1,0 -4.3,0M920.4,219.9a2.15,2.15 0 1,0 4.3,0a2.15,2.15 0 1,0 -4.3,0M858.9,223.6a2.15,2.15 0 1,0 4.3,0a2.15,2.15 0 1,0 -4.3,0M863.4,223.6a2.15,2.15 0 1,0 4.3,0a2.15,2.15 0 1,0 -4.3,0M893.4,223.6a2.15,2.15 0 1,0 4.3,0a2.15,2.15 0 1,0 -4.3,0M898.5,223.6a2.15,2.15 0 1,0 4.3,0a2.15,2.15 0 1,0 -4.3,0M922.8,223.6a2.15,2.15 0 1,0 4.3,0a2.15,2.15 0 1,0 -4.3,0M927.8,223.6a2.15,2.15 0 1,0 4.3,0a2.15,2.15 0 1,0 -4.3,0M937.6,223.6a2.15,2.15 0 1,0 4.3,0a2.15,2.15 0 1,0 -4.3,0M856.5,227.3a2.15,2.15 0 1,0 4.3,0a2.15,2.15 0 1,0 -4.3,0M910.1,227.3a2.15,2.15 0 1,0 4.3,0a2.15,2.15 0 1,0 -4.3,0M935.5,227.3a2.15,2.15 0 1,0 4.3,0a2.15,2.15 0 1,0 -4.3,0M868.5,231.0a2.15,2.15 0 1,0 4.3,0a2.15,2.15 0 1,0 -4.3,0M883.7,231.0a2.15,2.15 0 1,0 4.3,0a2.15,2.15 0 1,0 -4.3,0M903.1,231.0a2.15,2.15 0 1,0 4.3,0a2.15,2.15 0 1,0 -4.3,0M912.6,231.0a2.15,2.15 0 1,0 4.3,0a2.15,2.15 0 1,0 -4.3,0M932.3,231.0a2.15,2.15 0 1,0 4.3,0a2.15,2.15 0 1,0 -4.3,0M866.1,234.7a2.15,2.15 0 1,0 4.3,0a2.15,2.15 0 1,0 -4.3,0M885.3,234.7a2.15,2.15 0 1,0 4.3,0a2.15,2.15 0 1,0 -4.3,0M920.2,234.7a2.15,2.15 0 1,0 4.3,0a2.15,2.15 0 1,0 -4.3,0M925.6,234.7a2.15,2.15 0 1,0 4.3,0a2.15,2.15 0 1,0 -4.3,0M930.2,234.7a2.15,2.15 0 1,0 4.3,0a2.15,2.15 0 1,0 -4.3,0M859.3,238.4a2.15,2.15 0 1,0 4.3,0a2.15,2.15 0 1,0 -4.3,0M863.8,238.4a2.15,2.15 0 1,0 4.3,0a2.15,2.15 0 1,0 -4.3,0M868.3,238.4a2.15,2.15 0 1,0 4.3,0a2.15,2.15 0 1,0 -4.3,0M873.4,238.4a2.15,2.15 0 1,0 4.3,0a2.15,2.15 0 1,0 -4.3,0M878.5,238.4a2.15,2.15 0 1,0 4.3,0a2.15,2.15 0 1,0 -4.3,0M888.0,238.4a2.15,2.15 0 1,0 4.3,0a2.15,2.15 0 1,0 -4.3,0M928.4,238.4a2.15,2.15 0 1,0 4.3,0a2.15,2.15 0 1,0 -4.3,0"/><path fill="#00ffcc" d="M902.8,179.2a2.15,2.15 0 1,0 4.3,0a2.15,2.15 0 1,0 -4.3,0M917.2,179.2a2.15,2.15 0 1,0 4.3,0a2.15,2.15 0 1,0 -4.3,0M964.8,182.9a2.15,2.15 0 1,0 4.3,0a2.15,2.15 0 1,0 -4.3,0M874.1,194.0a2.15,2.15 0 1,0 4.3,0a2.15,2.15 0 1,0 -4.3,0M912.6,194.0a2.15,2.15 0 1,0 4.3,0a2.15,2.15 0 1,0 -4.3,0M846.3,197.7a2.15,2.15 0 1,0 4.3,0a2.15,2.15 0 1,0 -4.3,0M846.8,205.1a2.15,2.15 0 1,0 4.3,0a2.15,2.15 0 1,0 -4.3,0M920.5,205.1a2.15,2.15 0 1,0 4.3,0a2.15,2.15 0 1,0 -4.3,0M838.9,208.8a2.15,2.15 0 1,0 4.3,0a2.15,2.15 0 1,0 -4.3,0M848.5,208.8a2.15,2.15 0 1,0 4.3,0a2.15,2.15 0 1,0 -4.3,0M858.3,208.8a2.15,2.15 0 1,0 4.3,0a2.15,2.15 0 1,0 -4.3,0M894.0,208.8a2.15,2.15 0 1,0 4.3,0a2.15,2.15 0 1,0 -4.3,0M898.2,208.8a2.15,2.15 0 1,0 4.3,0a2.15,2.15 0 1,0 -4.3,0M866.5,212.5a2.15,2.15 0 1,0 4.3,0a2.15,2.15 0 1,0 -4.3,0M849.2,216.2a2.15,2.15 0 1,0 4.3,0a2.15,2.15 0 1,0 -4.3,0M873.8,216.2a2.15,2.15 0 1,0 4.3,0a2.15,2.15 0 1,0 -4.3,0M907.9,216.2a2.15,2.15 0 1,0 4.3,0a2.15,2.15 0 1,0 -4.3,0M886.3,219.9a2.15,2.15 0 1,0 4.3,0a2.15,2.15 0 1,0 -4.3,0M915.5,219.9a2.15,2.15 0 1,0 4.3,0a2.15,2.15 0 1,0 -4.3,0M878.7,223.6a2.15,2.15 0 1,0 4.3,0a2.15,2.15 0 1,0 -4.3,0M918.9,223.6a2.15,2.15 0 1,0 4.3,0a2.15,2.15 0 1,0 -4.3,0M926.0,227.3a2.15,2.15 0 1,0 4.3,0a2.15,2.15 0 1,0 -4.3,0M893.3,231.0a2.15,2.15 0 1,0 4.3,0a2.15,2.15 0 1,0 -4.3,0M875.4,234.7a2.15,2.15 0 1,0 4.3,0a2.15,2.15 0 1,0 -4.3,0M880.6,234.7a2.15,2.15 0 1,0 4.3,0a2.15,2.15 0 1,0 -4.3,0M905.8,234.7a2.15,2.15 0 1,0 4.3,0a2.15,2.15 0 1,0 -4.3,0M902.1,238.4a2.15,2.15 0 1,0 4.3,0a2.15,2.15 0 1,0 -4.3,0M922.7,238.4a2.15,2.15 0 1,0 4.3,0a2.15,2.15 0 1,0 -4.3,0M933.1,238.4a2.15,2.15 0 1,0 4.3,0a2.15,2.15 0 1,0 -4.3,0"/><path fill="#00ffb4" d="M937.3,179.2a2.15,2.15 0 1,0 4.3,0a2.15,2.15 0 1,0 -4.3,0M913.1,186.6a2.15,2.15 0 1,0 4.3,0a2.15,2.15 0 1,0 -4.3,0M890.6,190.3a2.15,2.15 0 1,0 4.3,0a2.15,2.15 0 1,0 -4.3,0M939.6,190.3a2.15,2.15 0 1,0 4.3,0a2.15,2.15 0 1,0 -4.3,0M839.5,194.0a2.15,2.15 0 1,0 4.3,0a2.15,2.15 0 1,0 -4.3,0M932.4,194.0a2.15,2.15 0 1,0 4.3,0a2.15,2.15 0 1,0 -4.3,0M925.6,197.7a2.15,2.15 0 1,0 4.3,0a2.15,2.15 0 1,0 -4.3,0M955.5,197.7a2.15,2.15 0 1,0 4.3,0a2.15,2.15 0 1,0 -4.3,0M843.8,201.4a2.15,2.15 0 1,0 4.3,0a2.15,2.15 0 1,0 -4.3,0M854.0,201.4a2.15,2.15 0 1,0 4.3,0a2.15,2.15 0 1,0 -4.3,0M927.1,201.4a2.15,2.15 0 1,0 4.3,0a2.15,2.15 0 1,0 -4.3,0M890.6,212.5a2.15,2.15 0 1,0 4.3,0a2.15,2.15 0 1,0 -4.3,0M910.6,212.5a2.15,2.15 0 1,0 4.3,0a2.15,2.15 0 1,0 -4.3,0M915.7,212.5a2.15,2.15 0 1,0 4.3,0a2.15,2.15 0 1,0 -4.3,0M883.9,216.2a2.15,2.15 0 1,0 4.3,0a2.15,2.15 0 1,0 -4.3,0M893.1,216.2a2.15,2.15 0 1,0 4.3,0a2.15,2.15 0 1,0 -4.3,0M865.8,219.9a2.15,2.15 0 1,0 4.3,0a2.15,2.15 0 1,0 -4.3,0M883.0,223.6a2.15,2.15 0 1,0 4.3,0a2.15,2.15 0 1,0 -4.3,0M912.9,223.6a2.15,2.15 0 1,0 4.3,0a2.15,2.15 0 1,0 -4.3,0M933.0,223.6a2.15,2.15 0 1,0 4.3,0a2.15,2.15 0 1,0 -4.3,0M876.5,227.3a2.15,2.15 0 1,0 4.3,0a2.15,2.15 0 1,0 -4.3,0M929.6,227.3a2.15,2.15 0 1,0 4.3,0a2.15,2.15 0 1,0 -4.3,0M900.9,234.7a2.15,2.15 0 1,0 4.3,0a2.15,2.15 0 1,0 -4.3,0M914.9,234.7a2.15,2.15 0 1,0 4.3,0a2.15,2.15 0 1,0 -4.3,0"/><path fill="#00ff9c" d="M889.3,179.2a2.15,2.15 0 1,0 4.3,0a2.15,2.15 0 1,0 -4.3,0M907.6,179.2a2.15,2.15 0 1,0 4.3,0a2.15,2.15 0 1,0 -4.3,0M933.0,186.6a2.15,2.15 0 1,0 4.3,0a2.15,2.15 0 1,0 -4.3,0M836.4,190.3a2.15,2.15 0 1,0 4.3,0a2.15,2.15 0 1,0 -4.3,0M851.1,190.3a2.15,2.15 0 1,0 4.3,0a2.15,2.15 0 1,0 -4.3,0M925.6,190.3a2.15,2.15 0 1,0 4.3,0a2.15,2.15 0 1,0 -4.3,0M959.6,190.3a2.15,2.15 0 1,0 4.3,0a2.15,2.15 0 1,0 -4.3,0M872.3,197.7a2.15,2.15 0 1,0 4.3,0a2.15,2.15 0 1,0 -4.3,0M891.0,197.7a2.15,2.15 0 1,0 4.3,0a2.15,2.15 0 1,0 -4.3,0M877.6,201.4a2.15,2.15 0 1,0 4.3,0a2.15,2.15 0 1,0 -4.3,0M947.2,201.4a2.15,2.15 0 1,0 4.3,0a2.15,2.15 0 1,0 -4.3,0M841.8,205.1a2.15,2.15 0 1,0 4.3,0a2.15,2.15 0 1,0 -4.3,0M852.2,205.1a2.15,2.15 0 1,0 4.3,0a2.15,2.15 0 1,0 -4.3,0M861.7,205.1a2.15,2.15 0 1,0 4.3,0a2.15,2.15 0 1,0 -4.3,0M875.9,205.1a2.15,2.15 0 1,0 4.3,0a2.15,2.15 0 1,0 -4.3,0M905.6,205.1a2.15,2.15 0 1,0 4.3,0a2.15,2.15 0 1,0 -4.3,0M898.2,238.4a2.15,2.15 0 1,0 4.3,0a2.15,2.15 0 1,0 -4.3,0"/><path fill="#00ff85" d="M885.9,182.9a2.15,2.15 0 1,0 4.3,0a2.15,2.15 0 1,0 -4.3,0M930.2,182.9a2.15,2.15 0 1,0 4.3,0a2.15,2.15 0 1,0 -4.3,0M940.4,182.9a2.15,2.15 0 1,0 4.3,0a2.15,2.15 0 1,0 -4.3,0M949.4,182.9a2.15,2.15 0 1,0 4.3,0a2.15,2.15 0 1,0 -4.3,0M892.8,186.6a2.15,2.15 0 1,0 4.3,0a2.15,2.15 0 1,0 -4.3,0M918.1,186.6a2.15,2.15 0 1,0 4.3,0a2.15,2.15 0 1,0 -4.3,0M923.1,186.6a2.15,2.15 0 1,0 4.3,0a2.15,2.15 0 1,0 -4.3,0M938.2,186.6a2.15,2.15 0 1,0 4.3,0a2.15,2.15 0 1,0 -4.3,0M832.4,190.3a2.15,2.15 0 1,0 4.3,0a2.15,2.15 0 1,0 -4.3,0M846.5,190.3a2.15,2.15 0 1,0 4.3,0a2.15,2.15 0 1,0 -4.3,0M856.7,190.3a2.15,2.15 0 1,0 4.3,0a2.15,2.15 0 1,0 -4.3,0M885.1,190.3a2.15,2.15 0 1,0 4.3,0a2.15,2.15 0 1,0 -4.3,0M937.3,194.0a2.15,2.15 0 1,0 4.3,0a2.15,2.15 0 1,0 -4.3,0M962.5,194.0a2.15,2.15 0 1,0 4.3,0a2.15,2.15 0 1,0 -4.3,0M832.5,197.7a2.15,2.15 0 1,0 4.3,0a2.15,2.15 0 1,0 -4.3,0M895.8,197.7a2.15,2.15 0 1,0 4.3,0a2.15,2.15 0 1,0 -4.3,0M910.3,197.7a2.15,2.15 0 1,0 4.3,0a2.15,2.15 0 1,0 -4.3,0M920.3,197.7a2.15,2.15 0 1,0 4.3,0a2.15,2.15 0 1,0 -4.3,0M939.7,197.7a2.15,2.15 0 1,0 4.3,0a2.15,2.15 0 1,0 -4.3,0M949.6,197.7a2.15,2.15 0 1,0 4.3,0a2.15,2.15 0 1,0 -4.3,0M849.1,201.4a2.15,2.15 0 1,0 4.3,0a2.15,2.15 0 1,0 -4.3,0M858.5,201.4a2.15,2.15 0 1,0 4.3,0a2.15,2.15 0 1,0 -4.3,0M888.4,201.4a2.15,2.15 0 1,0 4.3,0a2.15,2.15 0 1,0 -4.3,0M937.3,201.4a2.15,2.15 0 1,0 4.3,0a2.15,2.15 0 1,0 -4.3,0M956.6,201.4a2.15,2.15 0 1,0 4.3,0a2.15,2.15 0 1,0 -4.3,0M866.3,205.1a2.15,2.15 0 1,0 4.3,0a2.15,2.15 0 1,0 -4.3,0M945.3,205.1a2.15,2.15 0 1,0 4.3,0a2.15,2.15 0 1,0 -4.3,0"/><path fill="#00ff6d" d="M883.7,179.2a2.15,2.15 0 1,0 4.3,0a2.15,2.15 0 1,0 -4.3,0M927.1,179.2a2.15,2.15 0 1,0 4.3,0a2.15,2.15 0 1,0 -4.3,0M942.8,179.2a2.15,2.15 0 1,0 4.3,0a2.15,2.15 0 1,0 -4.3,0M942.5,186.6a2.15,2.15 0 1,0 4.3,0a2.15,2.15 0 1,0 -4.3,0M854.3,194.0a2.15,2.15 0 1,0 4.3,0a2.15,2.15 0 1,0 -4.3,0M892.7,194.0a2.15,2.15 0 1,0 4.3,0a2.15,2.15 0 1,0 -4.3,0M908.4,194.0a2.15,2.15 0 1,0 4.3,0a2.15,2.15 0 1,0 -4.3,0M928.0,194.0a2.15,2.15 0 1,0 4.3,0a2.15,2.15 0 1,0 -4.3,0M885.5,197.7a2.15,2.15 0 1,0 4.3,0a2.15,2.15 0 1,0 -4.3,0M856.4,205.1a2.15,2.15 0 1,0 4.3,0a2.15,2.15 0 1,0 -4.3,0M895.4,205.1a2.15,2.15 0 1,0 4.3,0a2.15,2.15 0 1,0 -4.3,0"/><path fill="#00ff55" d="M917.8,142.2a2.15,2.15 0 1,0 4.3,0a2.15,2.15 0 1,0 -4.3,0M878.1,179.2a2.15,2.15 0 1,0 4.3,0a2.15,2.15 0 1,0 -4.3,0M932.4,179.2a2.15,2.15 0 1,0 4.3,0a2.15,2.15 0 1,0 -4.3,0M880.8,182.9a2.15,2.15 0 1,0 4.3,0a2.15,2.15 0 1,0 -4.3,0M905.5,182.9a2.15,2.15 0 1,0 4.3,0a2.15,2.15 0 1,0 -4.3,0M896.5,190.3a2.15,2.15 0 1,0 4.3,0a2.15,2.15 0 1,0 -4.3,0M950.1,190.3a2.15,2.15 0 1,0 4.3,0a2.15,2.15 0 1,0 -4.3,0M834.8,194.0a2.15,2.15 0 1,0 4.3,0a2.15,2.15 0 1,0 -4.3,0M897.8,194.0a2.15,2.15 0 1,0 4.3,0a2.15,2.15 0 1,0 -4.3,0M918.0,194.0a2.15,2.15 0 1,0 4.3,0a2.15,2.15 0 1,0 -4.3,0M947.6,194.0a2.15,2.15 0 1,0 4.3,0a2.15,2.15 0 1,0 -4.3,0M952.2,194.0a2.15,2.15 0 1,0 4.3,0a2.15,2.15 0 1,0 -4.3,0M956.9,194.0a2.15,2.15 0 1,0 4.3,0a2.15,2.15 0 1,0 -4.3,0M837.0,197.7a2.15,2.15 0 1,0 4.3,0a2.15,2.15 0 1,0 -4.3,0M905.9,197.7a2.15,2.15 0 1,0 4.3,0a2.15,2.15 0 1,0 -4.3,0M935.2,197.7a2.15,2.15 0 1,0 4.3,0a2.15,2.15 0 1,0 -4.3,0M944.7,197.7a2.15,2.15 0 1,0 4.3,0a2.15,2.15 0 1,0 -4.3,0M834.8,201.4a2.15,2.15 0 1,0 4.3,0a2.15,2.15 0 1,0 -4.3,0M949.6,205.1a2.15,2.15 0 1,0 4.3,0a2.15,2.15 0 1,0 -4.3,0"/><path fill="#00ff3d" d="M866.1,131.1a2.15,2.15 0 1,0 4.3,0a2.15,2.15 0 1,0 -4.3,0M875.9,138.5a2.15,2.15 0 1,0 4.3,0a2.15,2.15 0 1,0 -4.3,0M974.5,145.9a2.15,2.15 0 1,0 4.3,0a2.15,2.15 0 1,0 -4.3,0M910.3,153.3a2.15,2.15 0 1,0 4.3,0a2.15,2.15 0 1,0 -4.3,0M976.4,179.2a2.15,2.15 0 1,0 4.3,0a2.15,2.15 0 1,0 -4.3,0M867.9,186.6a2.15,2.15 0 1,0 4.3,0a2.15,2.15 0 1,0 -4.3,0M871.1,190.3a2.15,2.15 0 1,0 4.3,0a2.15,2.15 0 1,0 -4.3,0M859.4,194.0a2.15,2.15 0 1,0 4.3,0a2.15,2.15 0 1,0 -4.3,0M922.3,194.0a2.15,2.15 0 1,0 4.3,0a2.15,2.15 0 1,0 -4.3,0M861.3,197.7a2.15,2.15 0 1,0 4.3,0a2.15,2.15 0 1,0 -4.3,0M868.7,201.4a2.15,2.15 0 1,0 4.3,0a2.15,2.15 0 1,0 -4.3,0M873.4,201.4a2.15,2.15 0 1,0 4.3,0a2.15,2.15 0 1,0 -4.3,0M893.5,201.4a2.15,2.15 0 1,0 4.3,0a2.15,2.15 0 1,0 -4.3,0M907.9,201.4a2.15,2.15 0 1,0 4.3,0a2.15,2.15 0 1,0 -4.3,0M918.0,201.4a2.15,2.15 0 1,0 4.3,0a2.15,2.15 0 1,0 -4.3,0M932.2,201.4a2.15,2.15 0 1,0 4.3,0a2.15,2.15 0 1,0 -4.3,0M881.6,205.1a2.15,2.15 0 1,0 4.3,0a2.15,2.15 0 1,0 -4.3,0M914.8,205.1a2.15,2.15 0 1,0 4.3,0a2.15,2.15 0 1,0 -4.3,0M954.5,205.1a2.15,2.15 0 1,0 4.3,0a2.15,2.15 0 1,0 -4.3,0M887.9,208.8a2.15,2.15 0 1,0 4.3,0a2.15,2.15 0 1,0 -4.3,0M937.0,208.8a2.15,2.15 0 1,0 4.3,0a2.15,2.15 0 1,0 -4.3,0M948.2,208.8a2.15,2.15 0 1,0 4.3,0a2.15,2.15 0 1,0 -4.3,0M841.5,212.5a2.15,2.15 0 1,0 4.3,0a2.15,2.15 0 1,0 -4.3,0M861.7,212.5a2.15,2.15 0 1,0 4.3,0a2.15,2.15 0 1,0 -4.3,0M885.9,212.5a2.15,2.15 0 1,0 4.3,0a2.15,2.15 0 1,0 -4.3,0M853.4,216.2a2.15,2.15 0 1,0 4.3,0a2.15,2.15 0 1,0 -4.3,0M858.8,216.2a2.15,2.15 0 1,0 4.3,0a2.15,2.15 0 1,0 -4.3,0M907.8,223.6a2.15,2.15 0 1,0 4.3,0a2.15,2.15 0 1,0 -4.3,0M863.9,231.0a2.15,2.15 0 1,0 4.3,0a2.15,2.15 0 1,0 -4.3,0M917.9,238.4a2.15,2.15 0 1,0 4.3,0a2.15,2.15 0 1,0 -4.3,0"/><path fill="#00ff25" d="M918.1,120.0a2.15,2.15 0 1,0 4.3,0a2.15,2.15 0 1,0 -4.3,0M880.7,123.7a2.15,2.15 0 1,0 4.3,0a2.15,2.15 0 1,0 -4.3,0M934.7,123.7a2.15,2.15 0 1,0 4.3,0a2.15,2.15 0 1,0 -4.3,0M883.3,127.4a2.15,2.15 0 1,0 4.3,0a2.15,2.15 0 1,0 -4.3,0M913.5,127.4a2.15,2.15 0 1,0 4.3,0a2.15,2.15 0 1,0 -4.3,0M851.1,131.1a2.15,2.15 0 1,0 4.3,0a2.15,2.15 0 1,0 -4.3,0M896.3,131.1a2.15,2.15 0 1,0 4.3,0a2.15,2.15 0 1,0 -4.3,0M912.8,134.8a2.15,2.15 0 1,0 4.3,0a2.15,2.15 0 1,0 -4.3,0M942.2,134.8a2.15,2.15 0 1,0 4.3,0a2.15,2.15 0 1,0 -4.3,0M841.6,138.5a2.15,2.15 0 1,0 4.3,0a2.15,2.15 0 1,0 -4.3,0M846.5,138.5a2.15,2.15 0 1,0 4.3,0a2.15,2.15 0 1,0 -4.3,0M888.8,142.2a2.15,2.15 0 1,0 4.3,0a2.15,2.15 0 1,0 -4.3,0M836.2,145.9a2.15,2.15 0 1,0 4.3,0a2.15,2.15 0 1,0 -4.3,0M950.1,145.9a2.15,2.15 0 1,0 4.3,0a2.15,2.15 0 1,0 -4.3,0M885.9,160.7a2.15,2.15 0 1,0 4.3,0a2.15,2.15 0 1,0 -4.3,0M922.2,164.4a2.15,2.15 0 1,0 4.3,0a2.15,2.15 0 1,0 -4.3,0M871.0,168.1a2.15,2.15 0 1,0 4.3,0a2.15,2.15 0 1,0 -4.3,0M865.8,175.5a2.15,2.15 0 1,0 4.3,0a2.15,2.15 0 1,0 -4.3,0M961.3,179.2a2.15,2.15 0 1,0 4.3,0a2.15,2.15 0 1,0 -4.3,0M982.2,179.2a2.15,2.15 0 1,0 4.3,0a2.15,2.15 0 1,0 -4.3,0M900.8,182.9a2.15,2.15 0 1,0 4.3,0a2.15,2.15 0 1,0 -4.3,0M962.7,186.6a2.15,2.15 0 1,0 4.3,0a2.15,2.15 0 1,0 -4.3,0M860.8,190.3a2.15,2.15 0 1,0 4.3,0a2.15,2.15 0 1,0 -4.3,0M875.5,190.3a2.15,2.15 0 1,0 4.3,0a2.15,2.15 0 1,0 -4.3,0M881.3,190.3a2.15,2.15 0 1,0 4.3,0a2.15,2.15 0 1,0 -4.3,0M910.4,190.3a2.15,2.15 0 1,0 4.3,0a2.15,2.15 0 1,0 -4.3,0M915.7,190.3a2.15,2.15 0 1,0 4.3,0a2.15,2.15 0 1,0 -4.3,0M930.5,190.3a2.15,2.15 0 1,0 4.3,0a2.15,2.15 0 1,0 -4.3,0M863.1,194.0a2.15,2.15 0 1,0 4.3,0a2.15,2.15 0 1,0 -4.3,0M877.9,194.0a2.15,2.15 0 1,0 4.3,0a2.15,2.15 0 1,0 -4.3,0M888.2,194.0a2.15,2.15 0 1,0 4.3,0a2.15,2.15 0 1,0 -4.3,0M856.5,197.7a2.15,2.15 0 1,0 4.3,0a2.15,2.15 0 1,0 -4.3,0M876.0,197.7a2.15,2.15 0 1,0 4.3,0a2.15,2.15 0 1,0 -4.3,0M829.4,201.4a2.15,2.15 0 1,0 4.3,0a2.15,2.15 0 1,0 -4.3,0M839.7,201.4a2.15,2.15 0 1,0 4.3,0a2.15,2.15 0 1,0 -4.3,0M900.1,205.1a2.15,2.15 0 1,0 4.3,0a2.15,2.15 0 1,0 -4.3,0"/><path fill="#00ff0e" d="M878.2,127.4a2.15,2.15 0 1,0 4.3,0a2.15,2.15 0 1,0 -4.3,0M917.6,127.4a2.15,2.15 0 1,0 4.3,0a2.15,2.15 0 1,0 -4.3,0M860.9,131.1a2.15,2.15 0 1,0 4.3,0a2.15,2.15 0 1,0 -4.3,0M890.4,131.1a2.15,2.15 0 1,0 4.3,0a2.15,2.15 0 1,0 -4.3,0M929.9,131.1a2.15,2.15 0 1,0 4.3,0a2.15,2.15 0 1,0 -4.3,0M921.1,138.5a2.15,2.15 0 1,0 4.3,0a2.15,2.15 0 1,0 -4.3,0M950.8,138.5a2.15,2.15 0 1,0 4.3,0a2.15,2.15 0 1,0 -4.3,0M859.4,142.2a2.15,2.15 0 1,0 4.3,0a2.15,2.15 0 1,0 -4.3,0M892.9,142.2a2.15,2.15 0 1,0 4.3,0a2.15,2.15 0 1,0 -4.3,0M940.1,145.9a2.15,2.15 0 1,0 4.3,0a2.15,2.15 0 1,0 -4.3,0M853.7,149.6a2.15,2.15 0 1,0 4.3,0a2.15,2.15 0 1,0 -4.3,0M868.3,149.6a2.15,2.15 0 1,0 4.3,0a2.15,2.15 0 1,0 -4.3,0M879.2,149.6a2.15,2.15 0 1,0 4.3,0a2.15,2.15 0 1,0 -4.3,0M925.2,153.3a2.15,2.15 0 1,0 4.3,0a2.15,2.15 0 1,0 -4.3,0M949.6,153.3a2.15,2.15 0 1,0 4.3,0a2.15,2.15 0 1,0 -4.3,0M844.2,157.0a2.15,2.15 0 1,0 4.3,0a2.15,2.15 0 1,0 -4.3,0M902.8,157.0a2.15,2.15 0 1,0 4.3,0a2.15,2.15 0 1,0 -4.3,0M927.7,157.0a2.15,2.15 0 1,0 4.3,0a2.15,2.15 0 1,0 -4.3,0M977.2,157.0a2.15,2.15 0 1,0 4.3,0a2.15,2.15 0 1,0 -4.3,0M846.5,160.7a2.15,2.15 0 1,0 4.3,0a2.15,2.15 0 1,0 -4.3,0M856.0,160.7a2.15,2.15 0 1,0 4.3,0a2.15,2.15 0 1,0 -4.3,0M959.4,160.7a2.15,2.15 0 1,0 4.3,0a2.15,2.15 0 1,0 -4.3,0M841.3,168.1a2.15,2.15 0 1,0 4.3,0a2.15,2.15 0 1,0 -4.3,0M944.8,168.1a2.15,2.15 0 1,0 4.3,0a2.15,2.15 0 1,0 -4.3,0M979.5,168.1a2.15,2.15 0 1,0 4.3,0a2.15,2.15 0 1,0 -4.3,0M891.6,175.5a2.15,2.15 0 1,0 4.3,0a2.15,2.15 0 1,0 -4.3,0M959.7,175.5a2.15,2.15 0 1,0 4.3,0a2.15,2.15 0 1,0 -4.3,0M978.5,175.5a2.15,2.15 0 1,0 4.3,0a2.15,2.15 0 1,0 -4.3,0M912.7,179.2a2.15,2.15 0 1,0 4.3,0a2.15,2.15 0 1,0 -4.3,0M975.1,182.9a2.15,2.15 0 1,0 4.3,0a2.15,2.15 0 1,0 -4.3,0M979.1,182.9a2.15,2.15 0 1,0 4.3,0a2.15,2.15 0 1,0 -4.3,0M848.9,194.0a2.15,2.15 0 1,0 4.3,0a2.15,2.15 0 1,0 -4.3,0M883.6,194.0a2.15,2.15 0 1,0 4.3,0a2.15,2.15 0 1,0 -4.3,0M942.8,194.0a2.15,2.15 0 1,0 4.3,0a2.15,2.15 0 1,0 -4.3,0M841.6,197.7a2.15,2.15 0 1,0 4.3,0a2.15,2.15 0 1,0 -4.3,0M915.9,197.7a2.15,2.15 0 1,0 4.3,0a2.15,2.15 0 1,0 -4.3,0M942.8,201.4a2.15,2.15 0 1,0 4.3,0a2.15,2.15 0 1,0 -4.3,0"/><path fill="#0aff00" d="M913.3,120.0a2.15,2.15 0 1,0 4.3,0a2.15,2.15 0 1,0 -4.3,0M884.7,131.1a2.15,2.15 0 1,0 4.3,0a2.15,2.15 0 1,0 -4.3,0M899.9,131.1a2.15,2.15 0 1,0 4.3,0a2.15,2.15 0 1,0 -4.3,0M919.9,131.1a2.15,2.15 0 1,0 4.3,0a2.15,2.15 0 1,0 -4.3,0M829.7,134.8a2.15,2.15 0 1,0 4.3,0a2.15,2.15 0 1,0 -4.3,0M903.5,134.8a2.15,2.15 0 1,0 4.3,0a2.15,2.15 0 1,0 -4.3,0M907.9,134.8a2.15,2.15 0 1,0 4.3,0a2.15,2.15 0 1,0 -4.3,0M946.4,134.8a2.15,2.15 0 1,0 4.3,0a2.15,2.15 0 1,0 -4.3,0M861.6,138.5a2.15,2.15 0 1,0 4.3,0a2.15,2.15 0 1,0 -4.3,0M905.7,138.5a2.15,2.15 0 1,0 4.3,0a2.15,2.15 0 1,0 -4.3,0M844.1,142.2a2.15,2.15 0 1,0 4.3,0a2.15,2.15 0 1,0 -4.3,0M883.1,142.2a2.15,2.15 0 1,0 4.3,0a2.15,2.15 0 1,0 -4.3,0M902.8,142.2a2.15,2.15 0 1,0 4.3,0a2.15,2.15 0 1,0 -4.3,0M952.3,142.2a2.15,2.15 0 1,0 4.3,0a2.15,2.15 0 1,0 -4.3,0M846.8,145.9a2.15,2.15 0 1,0 4.3,0a2.15,2.15 0 1,0 -4.3,0M881.1,145.9a2.15,2.15 0 1,0 4.3,0a2.15,2.15 0 1,0 -4.3,0M891.9,145.9a2.15,2.15 0 1,0 4.3,0a2.15,2.15 0 1,0 -4.3,0M873.4,149.6a2.15,2.15 0 1,0 4.3,0a2.15,2.15 0 1,0 -4.3,0M923.1,149.6a2.15,2.15 0 1,0 4.3,0a2.15,2.15 0 1,0 -4.3,0M952.2,149.6a2.15,2.15 0 1,0 4.3,0a2.15,2.15 0 1,0 -4.3,0M976.9,149.6a2.15,2.15 0 1,0 4.3,0a2.15,2.15 0 1,0 -4.3,0M851.7,153.3a2.15,2.15 0 1,0 4.3,0a2.15,2.15 0 1,0 -4.3,0M861.7,153.3a2.15,2.15 0 1,0 4.3,0a2.15,2.15 0 1,0 -4.3,0M890.8,153.3a2.15,2.15 0 1,0 4.3,0a2.15,2.15 0 1,0 -4.3,0M935.5,153.3a2.15,2.15 0 1,0 4.3,0a2.15,2.15 0 1,0 -4.3,0M940.0,153.3a2.15,2.15 0 1,0 4.3,0a2.15,2.15 0 1,0 -4.3,0M944.6,153.3a2.15,2.15 0 1,0 4.3,0a2.15,2.15 0 1,0 -4.3,0M959.8,153.3a2.15,2.15 0 1,0 4.3,0a2.15,2.15 0 1,0 -4.3,0M828.8,157.0a2.15,2.15 0 1,0 4.3,0a2.15,2.15 0 1,0 -4.3,0M839.8,157.0a2.15,2.15 0 1,0 4.3,0a2.15,2.15 0 1,0 -4.3,0M908.4,157.0a2.15,2.15 0 1,0 4.3,0a2.15,2.15 0 1,0 -4.3,0M865.8,160.7a2.15,2.15 0 1,0 4.3,0a2.15,2.15 0 1,0 -4.3,0M853.3,164.4a2.15,2.15 0 1,0 4.3,0a2.15,2.15 0 1,0 -4.3,0M858.6,164.4a2.15,2.15 0 1,0 4.3,0a2.15,2.15 0 1,0 -4.3,0M913.1,164.4a2.15,2.15 0 1,0 4.3,0a2.15,2.15 0 1,0 -4.3,0M890.9,168.1a2.15,2.15 0 1,0 4.3,0a2.15,2.15 0 1,0 -4.3,0M920.1,168.1a2.15,2.15 0 1,0 4.3,0a2.15,2.15 0 1,0 -4.3,0M936.1,168.1a2.15,2.15 0 1,0 4.3,0a2.15,2.15 0 1,0 -4.3,0M898.5,171.8a2.15,2.15 0 1,0 4.3,0a2.15,2.15 0 1,0 -4.3,0M981.8,171.8a2.15,2.15 0 1,0 4.3,0a2.15,2.15 0 1,0 -4.3,0M876.4,175.5a2.15,2.15 0 1,0 4.3,0a2.15,2.15 0 1,0 -4.3,0M925.1,175.5a2.15,2.15 0 1,0 4.3,0a2.15,2.15 0 1,0 -4.3,0M863.5,179.2a2.15,2.15 0 1,0 4.3,0a2.15,2.15 0 1,0 -4.3,0M922.3,179.2a2.15,2.15 0 1,0 4.3,0a2.15,2.15 0 1,0 -4.3,0M856.5,182.9a2.15,2.15 0 1,0 4.3,0a2.15,2.15 0 1,0 -4.3,0M865.9,182.9a2.15,2.15 0 1,0 4.3,0a2.15,2.15 0 1,0 -4.3,0M920.5,182.9a2.15,2.15 0 1,0 4.3,0a2.15,2.15 0 1,0 -4.3,0M953.9,182.9a2.15,2.15 0 1,0 4.3,0a2.15,2.15 0 1,0 -4.3,0M959.6,182.9a2.15,2.15 0 1,0 4.3,0a2.15,2.15 0 1,0 -4.3,0M858.6,186.6a2.15,2.15 0 1,0 4.3,0a2.15,2.15 0 1,0 -4.3,0M947.5,186.6a2.15,2.15 0 1,0 4.3,0a2.15,2.15 0 1,0 -4.3,0M844.2,194.0a2.15,2.15 0 1,0 4.3,0a2.15,2.15 0 1,0 -4.3,0M868.4,194.0a2.15,2.15 0 1,0 4.3,0a2.15,2.15 0 1,0 -4.3,0M880.8,197.7a2.15,2.15 0 1,0 4.3,0a2.15,2.15 0 1,0 -4.3,0M900.5,197.7a2.15,2.15 0 1,0 4.3,0a2.15,2.15 0 1,0 -4.3,0M883.9,201.4a2.15,2.15 0 1,0 4.3,0a2.15,2.15 0 1,0 -4.3,0M903.1,201.4a2.15,2.15 0 1,0 4.3,0a2.15,2.15 0 1,0 -4.3,0M836.3,205.1a2.15,2.15 0 1,0 4.3,0a2.15,2.15 0 1,0 -4.3,0M935.2,205.1a2.15,2.15 0 1,0 4.3,0a2.15,2.15 0 1,0 -4.3,0M992.9,140.5a2.15,2.15 0 1,0 4.3,0a2.15,2.15 0 1,0 -4.3,0M1000.9,140.5a2.15,2.15 0 1,0 4.3,0a2.15,2.15 0 1,0 -4.3,0M980.9,203.0a2.15,2.15 0 1,0 4.3,0a2.15,2.15 0 1,0 -4.3,0M817.6,199.0a2.15,2.15 0 1,0 4.3,0a2.15,2.15 0 1,0 -4.3,0M973.9,203.0a2.15,2.15 0 1,0 4.3,0a2.15,2.15 0 1,0 -4.3,0"/><path fill="#22ff00" d="M900.4,123.7a2.15,2.15 0 1,0 4.3,0a2.15,2.15 0 1,0 -4.3,0M854.5,127.4a2.15,2.15 0 1,0 4.3,0a2.15,2.15 0 1,0 -4.3,0M858.6,127.4a2.15,2.15 0 1,0 4.3,0a2.15,2.15 0 1,0 -4.3,0M868.5,127.4a2.15,2.15 0 1,0 4.3,0a2.15,2.15 0 1,0 -4.3,0M872.9,127.4a2.15,2.15 0 1,0 4.3,0a2.15,2.15 0 1,0 -4.3,0M887.9,127.4a2.15,2.15 0 1,0 4.3,0a2.15,2.15 0 1,0 -4.3,0M922.9,127.4a2.15,2.15 0 1,0 4.3,0a2.15,2.15 0 1,0 -4.3,0M927.7,127.4a2.15,2.15 0 1,0 4.3,0a2.15,2.15 0 1,0 -4.3,0M831.7,131.1a2.15,2.15 0 1,0 4.3,0a2.15,2.15 0 1,0 -4.3,0M837.1,131.1a2.15,2.15 0 1,0 4.3,0a2.15,2.15 0 1,0 -4.3,0M841.9,131.1a2.15,2.15 0 1,0 4.3,0a2.15,2.15 0 1,0 -4.3,0M905.5,131.1a2.15,2.15 0 1,0 4.3,0a2.15,2.15 0 1,0 -4.3,0M911.0,131.1a2.15,2.15 0 1,0 4.3,0a2.15,2.15 0 1,0 -4.3,0M915.4,131.1a2.15,2.15 0 1,0 4.3,0a2.15,2.15 0 1,0 -4.3,0M925.2,131.1a2.15,2.15 0 1,0 4.3,0a2.15,2.15 0 1,0 -4.3,0M935.1,131.1a2.15,2.15 0 1,0 4.3,0a2.15,2.15 0 1,0 -4.3,0M834.3,134.8a2.15,2.15 0 1,0 4.3,0a2.15,2.15 0 1,0 -4.3,0M838.7,134.8a2.15,2.15 0 1,0 4.3,0a2.15,2.15 0 1,0 -4.3,0M844.5,134.8a2.15,2.15 0 1,0 4.3,0a2.15,2.15 0 1,0 -4.3,0M857.4,138.5a2.15,2.15 0 1,0 4.3,0a2.15,2.15 0 1,0 -4.3,0M880.8,138.5a2.15,2.15 0 1,0 4.3,0a2.15,2.15 0 1,0 -4.3,0M895.5,138.5a2.15,2.15 0 1,0 4.3,0a2.15,2.15 0 1,0 -4.3,0M930.4,138.5a2.15,2.15 0 1,0 4.3,0a2.15,2.15 0 1,0 -4.3,0M944.5,138.5a2.15,2.15 0 1,0 4.3,0a2.15,2.15 0 1,0 -4.3,0M954.8,138.5a2.15,2.15 0 1,0 4.3,0a2.15,2.15 0 1,0 -4.3,0M947.1,142.2a2.15,2.15 0 1,0 4.3,0a2.15,2.15 0 1,0 -4.3,0M962.4,142.2a2.15,2.15 0 1,0 4.3,0a2.15,2.15 0 1,0 -4.3,0M875.6,145.9a2.15,2.15 0 1,0 4.3,0a2.15,2.15 0 1,0 -4.3,0M925.3,145.9a2.15,2.15 0 1,0 4.3,0a2.15,2.15 0 1,0 -4.3,0M930.5,145.9a2.15,2.15 0 1,0 4.3,0a2.15,2.15 0 1,0 -4.3,0M844.2,149.6a2.15,2.15 0 1,0 4.3,0a2.15,2.15 0 1,0 -4.3,0M917.7,149.6a2.15,2.15 0 1,0 4.3,0a2.15,2.15 0 1,0 -4.3,0M957.5,149.6a2.15,2.15 0 1,0 4.3,0a2.15,2.15 0 1,0 -4.3,0M837.0,153.3a2.15,2.15 0 1,0 4.3,0a2.15,2.15 0 1,0 -4.3,0M863.5,157.0a2.15,2.15 0 1,0 4.3,0a2.15,2.15 0 1,0 -4.3,0M888.7,157.0a2.15,2.15 0 1,0 4.3,0a2.15,2.15 0 1,0 -4.3,0M957.2,157.0a2.15,2.15 0 1,0 4.3,0a2.15,2.15 0 1,0 -4.3,0M966.6,157.0a2.15,2.15 0 1,0 4.3,0a2.15,2.15 0 1,0 -4.3,0M900.3,160.7a2.15,2.15 0 1,0 4.3,0a2.15,2.15 0 1,0 -4.3,0M945.1,160.7a2.15,2.15 0 1,0 4.3,0a2.15,2.15 0 1,0 -4.3,0M949.7,160.7a2.15,2.15 0 1,0 4.3,0a2.15,2.15 0 1,0 -4.3,0M974.0,160.7a2.15,2.15 0 1,0 4.3,0a2.15,2.15 0 1,0 -4.3,0M833.4,164.4a2.15,2.15 0 1,0 4.3,0a2.15,2.15 0 1,0 -4.3,0M856.1,168.1a2.15,2.15 0 1,0 4.3,0a2.15,2.15 0 1,0 -4.3,0M925.0,168.1a2.15,2.15 0 1,0 4.3,0a2.15,2.15 0 1,0 -4.3,0M959.4,168.1a2.15,2.15 0 1,0 4.3,0a2.15,2.15 0 1,0 -4.3,0M964.4,168.1a2.15,2.15 0 1,0 4.3,0a2.15,2.15 0 1,0 -4.3,0M975.0,168.1a2.15,2.15 0 1,0 4.3,0a2.15,2.15 0 1,0 -4.3,0M988.7,168.1a2.15,2.15 0 1,0 4.3,0a2.15,2.15 0 1,0 -4.3,0M830.6,171.8a2.15,2.15 0 1,0 4.3,0a2.15,2.15 0 1,0 -4.3,0M863.5,171.8a2.15,2.15 0 1,0 4.3,0a2.15,2.15 0 1,0 -4.3,0M878.0,171.8a2.15,2.15 0 1,0 4.3,0a2.15,2.15 0 1,0 -4.3,0M893.4,171.8a2.15,2.15 0 1,0 4.3,0a2.15,2.15 0 1,0 -4.3,0M922.9,171.8a2.15,2.15 0 1,0 4.3,0a2.15,2.15 0 1,0 -4.3,0M976.5,171.8a2.15,2.15 0 1,0 4.3,0a2.15,2.15 0 1,0 -4.3,0M836.3,175.5a2.15,2.15 0 1,0 4.3,0a2.15,2.15 0 1,0 -4.3,0M881.7,175.5a2.15,2.15 0 1,0 4.3,0a2.15,2.15 0 1,0 -4.3,0M911.1,175.5a2.15,2.15 0 1,0 4.3,0a2.15,2.15 0 1,0 -4.3,0M853.6,179.2a2.15,2.15 0 1,0 4.3,0a2.15,2.15 0 1,0 -4.3,0M892.8,179.2a2.15,2.15 0 1,0 4.3,0a2.15,2.15 0 1,0 -4.3,0M890.8,182.9a2.15,2.15 0 1,0 4.3,0a2.15,2.15 0 1,0 -4.3,0M905.6,190.3a2.15,2.15 0 1,0 4.3,0a2.15,2.15 0 1,0 -4.3,0M903.4,194.0a2.15,2.15 0 1,0 4.3,0a2.15,2.15 0 1,0 -4.3,0M866.4,197.7a2.15,2.15 0 1,0 4.3,0a2.15,2.15 0 1,0 -4.3,0M952.0,201.4a2.15,2.15 0 1,0 4.3,0a2.15,2.15 0 1,0 -4.3,0M785.9,143.7a2.15,2.15 0 1,0 4.3,0a2.15,2.15 0 1,0 -4.3,0M1058.8,173.0a2.15,2.15 0 1,0 4.3,0a2.15,2.15 0 1,0 -4.3,0M1035.5,184.5a2.15,2.15 0 1,0 4.3,0a2.15,2.15 0 1,0 -4.3,0M1023.9,184.5a2.15,2.15 0 1,0 4.3,0a2.15,2.15 0 1,0 -4.3,0M998.6,188.0a2.15,2.15 0 1,0 4.3,0a2.15,2.15 0 1,0 -4.3,0"/><path fill="#3aff00" d="M885.9,123.7a2.15,2.15 0 1,0 4.3,0a2.15,2.15 0 1,0 -4.3,0M890.7,123.7a2.15,2.15 0 1,0 4.3,0a2.15,2.15 0 1,0 -4.3,0M910.2,123.7a2.15,2.15 0 1,0 4.3,0a2.15,2.15 0 1,0 -4.3,0M863.6,127.4a2.15,2.15 0 1,0 4.3,0a2.15,2.15 0 1,0 -4.3,0M897.7,127.4a2.15,2.15 0 1,0 4.3,0a2.15,2.15 0 1,0 -4.3,0M937.0,127.4a2.15,2.15 0 1,0 4.3,0a2.15,2.15 0 1,0 -4.3,0M856.1,131.1a2.15,2.15 0 1,0 4.3,0a2.15,2.15 0 1,0 -4.3,0M880.6,131.1a2.15,2.15 0 1,0 4.3,0a2.15,2.15 0 1,0 -4.3,0M868.7,134.8a2.15,2.15 0 1,0 4.3,0a2.15,2.15 0 1,0 -4.3,0M887.7,134.8a2.15,2.15 0 1,0 4.3,0a2.15,2.15 0 1,0 -4.3,0M898.4,134.8a2.15,2.15 0 1,0 4.3,0a2.15,2.15 0 1,0 -4.3,0M928.5,134.8a2.15,2.15 0 1,0 4.3,0a2.15,2.15 0 1,0 -4.3,0M953.1,134.8a2.15,2.15 0 1,0 4.3,0a2.15,2.15 0 1,0 -4.3,0M925.9,138.5a2.15,2.15 0 1,0 4.3,0a2.15,2.15 0 1,0 -4.3,0M935.1,138.5a2.15,2.15 0 1,0 4.3,0a2.15,2.15 0 1,0 -4.3,0M863.6,142.2a2.15,2.15 0 1,0 4.3,0a2.15,2.15 0 1,0 -4.3,0M868.7,142.2a2.15,2.15 0 1,0 4.3,0a2.15,2.15 0 1,0 -4.3,0M873.6,142.2a2.15,2.15 0 1,0 4.3,0a2.15,2.15 0 1,0 -4.3,0M921.9,142.2a2.15,2.15 0 1,0 4.3,0a2.15,2.15 0 1,0 -4.3,0M870.9,145.9a2.15,2.15 0 1,0 4.3,0a2.15,2.15 0 1,0 -4.3,0M954.3,145.9a2.15,2.15 0 1,0 4.3,0a2.15,2.15 0 1,0 -4.3,0M959.8,145.9a2.15,2.15 0 1,0 4.3,0a2.15,2.15 0 1,0 -4.3,0M858.9,149.6a2.15,2.15 0 1,0 4.3,0a2.15,2.15 0 1,0 -4.3,0M909.2,149.6a2.15,2.15 0 1,0 4.3,0a2.15,2.15 0 1,0 -4.3,0M962.1,149.6a2.15,2.15 0 1,0 4.3,0a2.15,2.15 0 1,0 -4.3,0M967.2,149.6a2.15,2.15 0 1,0 4.3,0a2.15,2.15 0 1,0 -4.3,0M840.7,153.3a2.15,2.15 0 1,0 4.3,0a2.15,2.15 0 1,0 -4.3,0M901.0,153.3a2.15,2.15 0 1,0 4.3,0a2.15,2.15 0 1,0 -4.3,0M994.5,153.3a2.15,2.15 0 1,0 4.3,0a2.15,2.15 0 1,0 -4.3,0M873.1,157.0a2.15,2.15 0 1,0 4.3,0a2.15,2.15 0 1,0 -4.3,0M986.8,157.0a2.15,2.15 0 1,0 4.3,0a2.15,2.15 0 1,0 -4.3,0M997.6,157.0a2.15,2.15 0 1,0 4.3,0a2.15,2.15 0 1,0 -4.3,0M851.9,160.7a2.15,2.15 0 1,0 4.3,0a2.15,2.15 0 1,0 -4.3,0M940.1,160.7a2.15,2.15 0 1,0 4.3,0a2.15,2.15 0 1,0 -4.3,0M828.9,164.4a2.15,2.15 0 1,0 4.3,0a2.15,2.15 0 1,0 -4.3,0M844.3,164.4a2.15,2.15 0 1,0 4.3,0a2.15,2.15 0 1,0 -4.3,0M849.8,164.4a2.15,2.15 0 1,0 4.3,0a2.15,2.15 0 1,0 -4.3,0M868.7,164.4a2.15,2.15 0 1,0 4.3,0a2.15,2.15 0 1,0 -4.3,0M873.9,164.4a2.15,2.15 0 1,0 4.3,0a2.15,2.15 0 1,0 -4.3,0M927.6,164.4a2.15,2.15 0 1,0 4.3,0a2.15,2.15 0 1,0 -4.3,0M937.6,164.4a2.15,2.15 0 1,0 4.3,0a2.15,2.15 0 1,0 -4.3,0M951.8,164.4a2.15,2.15 0 1,0 4.3,0a2.15,2.15 0 1,0 -4.3,0M967.2,164.4a2.15,2.15 0 1,0 4.3,0a2.15,2.15 0 1,0 -4.3,0M996.1,164.4a2.15,2.15 0 1,0 4.3,0a2.15,2.15 0 1,0 -4.3,0M886.2,168.1a2.15,2.15 0 1,0 4.3,0a2.15,2.15 0 1,0 -4.3,0M901.0,168.1a2.15,2.15 0 1,0 4.3,0a2.15,2.15 0 1,0 -4.3,0M904.6,168.1a2.15,2.15 0 1,0 4.3,0a2.15,2.15 0 1,0 -4.3,0M930.8,168.1a2.15,2.15 0 1,0 4.3,0a2.15,2.15 0 1,0 -4.3,0M970.0,168.1a2.15,2.15 0 1,0 4.3,0a2.15,2.15 0 1,0 -4.3,0M998.4,168.1a2.15,2.15 0 1,0 4.3,0a2.15,2.15 0 1,0 -4.3,0M834.1,171.8a2.15,2.15 0 1,0 4.3,0a2.15,2.15 0 1,0 -4.3,0M838.6,171.8a2.15,2.15 0 1,0 4.3,0a2.15,2.15 0 1,0 -4.3,0M849.3,171.8a2.15,2.15 0 1,0 4.3,0a2.15,2.15 0 1,0 -4.3,0M883.4,171.8a2.15,2.15 0 1,0 4.3,0a2.15,2.15 0 1,0 -4.3,0M902.7,171.8a2.15,2.15 0 1,0 4.3,0a2.15,2.15 0 1,0 -4.3,0M908.4,171.8a2.15,2.15 0 1,0 4.3,0a2.15,2.15 0 1,0 -4.3,0M951.9,171.8a2.15,2.15 0 1,0 4.3,0a2.15,2.15 0 1,0 -4.3,0M957.2,171.8a2.15,2.15 0 1,0 4.3,0a2.15,2.15 0 1,0 -4.3,0M962.5,171.8a2.15,2.15 0 1,0 4.3,0a2.15,2.15 0 1,0 -4.3,0M967.0,171.8a2.15,2.15 0 1,0 4.3,0a2.15,2.15 0 1,0 -4.3,0M1021.1,171.8a2.15,2.15 0 1,0 4.3,0a2.15,2.15 0 1,0 -4.3,0M846.6,175.5a2.15,2.15 0 1,0 4.3,0a2.15,2.15 0 1,0 -4.3,0M851.5,175.5a2.15,2.15 0 1,0 4.3,0a2.15,2.15 0 1,0 -4.3,0M895.5,175.5a2.15,2.15 0 1,0 4.3,0a2.15,2.15 0 1,0 -4.3,0M935.3,175.5a2.15,2.15 0 1,0 4.3,0a2.15,2.15 0 1,0 -4.3,0M964.4,175.5a2.15,2.15 0 1,0 4.3,0a2.15,2.15 0 1,0 -4.3,0M969.5,175.5a2.15,2.15 0 1,0 4.3,0a2.15,2.15 0 1,0 -4.3,0M1009.1,175.5a2.15,2.15 0 1,0 4.3,0a2.15,2.15 0 1,0 -4.3,0M859.8,179.2a2.15,2.15 0 1,0 4.3,0a2.15,2.15 0 1,0 -4.3,0M873.3,179.2a2.15,2.15 0 1,0 4.3,0a2.15,2.15 0 1,0 -4.3,0M952.0,179.2a2.15,2.15 0 1,0 4.3,0a2.15,2.15 0 1,0 -4.3,0M957.1,179.2a2.15,2.15 0 1,0 4.3,0a2.15,2.15 0 1,0 -4.3,0M862.2,182.9a2.15,2.15 0 1,0 4.3,0a2.15,2.15 0 1,0 -4.3,0M945.8,182.9a2.15,2.15 0 1,0 4.3,0a2.15,2.15 0 1,0 -4.3,0M900.2,190.3a2.15,2.15 0 1,0 4.3,0a2.15,2.15 0 1,0 -4.3,0M934.9,190.3a2.15,2.15 0 1,0 4.3,0a2.15,2.15 0 1,0 -4.3,0M863.6,201.4a2.15,2.15 0 1,0 4.3,0a2.15,2.15 0 1,0 -4.3,0M891.5,205.1a2.15,2.15 0 1,0 4.3,0a2.15,2.15 0 1,0 -4.3,0"/><path fill="#52ff00" d="M915.3,123.7a2.15,2.15 0 1,0 4.3,0a2.15,2.15 0 1,0 -4.3,0M920.7,123.7a2.15,2.15 0 1,0 4.3,0a2.15,2.15 0 1,0 -4.3,0M930.7,123.7a2.15,2.15 0 1,0 4.3,0a2.15,2.15 0 1,0 -4.3,0M939.1,123.7a2.15,2.15 0 1,0 4.3,0a2.15,2.15 0 1,0 -4.3,0M846.5,131.1a2.15,2.15 0 1,0 4.3,0a2.15,2.15 0 1,0 -4.3,0M873.4,134.8a2.15,2.15 0 1,0 4.3,0a2.15,2.15 0 1,0 -4.3,0M831.9,138.5a2.15,2.15 0 1,0 4.3,0a2.15,2.15 0 1,0 -4.3,0M849.1,142.2a2.15,2.15 0 1,0 4.3,0a2.15,2.15 0 1,0 -4.3,0M897.7,142.2a2.15,2.15 0 1,0 4.3,0a2.15,2.15 0 1,0 -4.3,0M933.4,142.2a2.15,2.15 0 1,0 4.3,0a2.15,2.15 0 1,0 -4.3,0M851.7,145.9a2.15,2.15 0 1,0 4.3,0a2.15,2.15 0 1,0 -4.3,0M885.9,145.9a2.15,2.15 0 1,0 4.3,0a2.15,2.15 0 1,0 -4.3,0M935.1,145.9a2.15,2.15 0 1,0 4.3,0a2.15,2.15 0 1,0 -4.3,0M863.7,149.6a2.15,2.15 0 1,0 4.3,0a2.15,2.15 0 1,0 -4.3,0M903.1,149.6a2.15,2.15 0 1,0 4.3,0a2.15,2.15 0 1,0 -4.3,0M913.5,149.6a2.15,2.15 0 1,0 4.3,0a2.15,2.15 0 1,0 -4.3,0M857.2,153.3a2.15,2.15 0 1,0 4.3,0a2.15,2.15 0 1,0 -4.3,0M905.9,153.3a2.15,2.15 0 1,0 4.3,0a2.15,2.15 0 1,0 -4.3,0M979.7,153.3a2.15,2.15 0 1,0 4.3,0a2.15,2.15 0 1,0 -4.3,0M834.5,157.0a2.15,2.15 0 1,0 4.3,0a2.15,2.15 0 1,0 -4.3,0M878.1,157.0a2.15,2.15 0 1,0 4.3,0a2.15,2.15 0 1,0 -4.3,0M899.0,157.0a2.15,2.15 0 1,0 4.3,0a2.15,2.15 0 1,0 -4.3,0M972.4,157.0a2.15,2.15 0 1,0 4.3,0a2.15,2.15 0 1,0 -4.3,0M876.1,160.7a2.15,2.15 0 1,0 4.3,0a2.15,2.15 0 1,0 -4.3,0M895.4,160.7a2.15,2.15 0 1,0 4.3,0a2.15,2.15 0 1,0 -4.3,0M910.6,160.7a2.15,2.15 0 1,0 4.3,0a2.15,2.15 0 1,0 -4.3,0M920.2,160.7a2.15,2.15 0 1,0 4.3,0a2.15,2.15 0 1,0 -4.3,0M955.1,160.7a2.15,2.15 0 1,0 4.3,0a2.15,2.15 0 1,0 -4.3,0M964.7,160.7a2.15,2.15 0 1,0 4.3,0a2.15,2.15 0 1,0 -4.3,0M1014.0,160.7a2.15,2.15 0 1,0 4.3,0a2.15,2.15 0 1,0 -4.3,0M908.0,164.4a2.15,2.15 0 1,0 4.3,0a2.15,2.15 0 1,0 -4.3,0M963.2,164.4a2.15,2.15 0 1,0 4.3,0a2.15,2.15 0 1,0 -4.3,0M987.6,164.4a2.15,2.15 0 1,0 4.3,0a2.15,2.15 0 1,0 -4.3,0M845.5,168.1a2.15,2.15 0 1,0 4.3,0a2.15,2.15 0 1,0 -4.3,0M861.1,168.1a2.15,2.15 0 1,0 4.3,0a2.15,2.15 0 1,0 -4.3,0M910.1,168.1a2.15,2.15 0 1,0 4.3,0a2.15,2.15 0 1,0 -4.3,0M943.5,171.8a2.15,2.15 0 1,0 4.3,0a2.15,2.15 0 1,0 -4.3,0M831.3,175.5a2.15,2.15 0 1,0 4.3,0a2.15,2.15 0 1,0 -4.3,0M915.2,175.5a2.15,2.15 0 1,0 4.3,0a2.15,2.15 0 1,0 -4.3,0M950.2,175.5a2.15,2.15 0 1,0 4.3,0a2.15,2.15 0 1,0 -4.3,0M974.3,175.5a2.15,2.15 0 1,0 4.3,0a2.15,2.15 0 1,0 -4.3,0M1013.8,175.5a2.15,2.15 0 1,0 4.3,0a2.15,2.15 0 1,0 -4.3,0M1019.0,175.5a2.15,2.15 0 1,0 4.3,0a2.15,2.15 0 1,0 -4.3,0M972.3,179.2a2.15,2.15 0 1,0 4.3,0a2.15,2.15 0 1,0 -4.3,0M836.2,182.9a2.15,2.15 0 1,0 4.3,0a2.15,2.15 0 1,0 -4.3,0M935.1,182.9a2.15,2.15 0 1,0 4.3,0a2.15,2.15 0 1,0 -4.3,0M841.4,190.3a2.15,2.15 0 1,0 4.3,0a2.15,2.15 0 1,0 -4.3,0M922.4,201.4a2.15,2.15 0 1,0 4.3,0a2.15,2.15 0 1,0 -4.3,0M775.5,184.9a2.15,2.15 0 1,0 4.3,0a2.15,2.15 0 1,0 -4.3,0M1029.8,169.0a2.15,2.15 0 1,0 4.3,0a2.15,2.15 0 1,0 -4.3,0M1037.8,177.0a2.15,2.15 0 1,0 4.3,0a2.15,2.15 0 1,0 -4.3,0M1015.9,176.0a2.15,2.15 0 1,0 4.3,0a2.15,2.15 0 1,0 -4.3,0"/><path fill="#69ff00" d="M883.0,134.8a2.15,2.15 0 1,0 4.3,0a2.15,2.15 0 1,0 -4.3,0M836.6,138.5a2.15,2.15 0 1,0 4.3,0a2.15,2.15 0 1,0 -4.3,0M966.9,142.2a2.15,2.15 0 1,0 4.3,0a2.15,2.15 0 1,0 -4.3,0M866.6,145.9a2.15,2.15 0 1,0 4.3,0a2.15,2.15 0 1,0 -4.3,0M900.4,145.9a2.15,2.15 0 1,0 4.3,0a2.15,2.15 0 1,0 -4.3,0M944.9,145.9a2.15,2.15 0 1,0 4.3,0a2.15,2.15 0 1,0 -4.3,0M964.1,145.9a2.15,2.15 0 1,0 4.3,0a2.15,2.15 0 1,0 -4.3,0M828.2,149.6a2.15,2.15 0 1,0 4.3,0a2.15,2.15 0 1,0 -4.3,0M834.1,149.6a2.15,2.15 0 1,0 4.3,0a2.15,2.15 0 1,0 -4.3,0M839.2,149.6a2.15,2.15 0 1,0 4.3,0a2.15,2.15 0 1,0 -4.3,0M849.2,149.6a2.15,2.15 0 1,0 4.3,0a2.15,2.15 0 1,0 -4.3,0M884.5,149.6a2.15,2.15 0 1,0 4.3,0a2.15,2.15 0 1,0 -4.3,0M987.2,149.6a2.15,2.15 0 1,0 4.3,0a2.15,2.15 0 1,0 -4.3,0M992.1,149.6a2.15,2.15 0 1,0 4.3,0a2.15,2.15 0 1,0 -4.3,0M974.8,153.3a2.15,2.15 0 1,0 4.3,0a2.15,2.15 0 1,0 -4.3,0M868.0,157.0a2.15,2.15 0 1,0 4.3,0a2.15,2.15 0 1,0 -4.3,0M883.2,157.0a2.15,2.15 0 1,0 4.3,0a2.15,2.15 0 1,0 -4.3,0M922.6,157.0a2.15,2.15 0 1,0 4.3,0a2.15,2.15 0 1,0 -4.3,0M937.1,157.0a2.15,2.15 0 1,0 4.3,0a2.15,2.15 0 1,0 -4.3,0M942.9,157.0a2.15,2.15 0 1,0 4.3,0a2.15,2.15 0 1,0 -4.3,0M969.0,160.7a2.15,2.15 0 1,0 4.3,0a2.15,2.15 0 1,0 -4.3,0M989.1,160.7a2.15,2.15 0 1,0 4.3,0a2.15,2.15 0 1,0 -4.3,0M994.5,160.7a2.15,2.15 0 1,0 4.3,0a2.15,2.15 0 1,0 -4.3,0M1003.5,160.7a2.15,2.15 0 1,0 4.3,0a2.15,2.15 0 1,0 -4.3,0M1018.8,160.7a2.15,2.15 0 1,0 4.3,0a2.15,2.15 0 1,0 -4.3,0M838.9,164.4a2.15,2.15 0 1,0 4.3,0a2.15,2.15 0 1,0 -4.3,0M888.3,164.4a2.15,2.15 0 1,0 4.3,0a2.15,2.15 0 1,0 -4.3,0M897.0,164.4a2.15,2.15 0 1,0 4.3,0a2.15,2.15 0 1,0 -4.3,0M1006.7,164.4a2.15,2.15 0 1,0 4.3,0a2.15,2.15 0 1,0 -4.3,0M1011.1,164.4a2.15,2.15 0 1,0 4.3,0a2.15,2.15 0 1,0 -4.3,0M1015.8,164.4a2.15,2.15 0 1,0 4.3,0a2.15,2.15 0 1,0 -4.3,0M939.9,168.1a2.15,2.15 0 1,0 4.3,0a2.15,2.15 0 1,0 -4.3,0M994.1,168.1a2.15,2.15 0 1,0 4.3,0a2.15,2.15 0 1,0 -4.3,0M858.9,171.8a2.15,2.15 0 1,0 4.3,0a2.15,2.15 0 1,0 -4.3,0M1006.8,171.8a2.15,2.15 0 1,0 4.3,0a2.15,2.15 0 1,0 -4.3,0M1015.9,171.8a2.15,2.15 0 1,0 4.3,0a2.15,2.15 0 1,0 -4.3,0M901.0,175.5a2.15,2.15 0 1,0 4.3,0a2.15,2.15 0 1,0 -4.3,0M868.6,179.2a2.15,2.15 0 1,0 4.3,0a2.15,2.15 0 1,0 -4.3,0M1006.7,179.2a2.15,2.15 0 1,0 4.3,0a2.15,2.15 0 1,0 -4.3,0M985.0,182.9a2.15,2.15 0 1,0 4.3,0a2.15,2.15 0 1,0 -4.3,0M878.0,186.6a2.15,2.15 0 1,0 4.3,0a2.15,2.15 0 1,0 -4.3,0M865.6,190.3a2.15,2.15 0 1,0 4.3,0a2.15,2.15 0 1,0 -4.3,0M919.6,190.3a2.15,2.15 0 1,0 4.3,0a2.15,2.15 0 1,0 -4.3,0"/><path fill="#81ff00" d="M895.5,123.7a2.15,2.15 0 1,0 4.3,0a2.15,2.15 0 1,0 -4.3,0M893.2,127.4a2.15,2.15 0 1,0 4.3,0a2.15,2.15 0 1,0 -4.3,0M903.7,127.4a2.15,2.15 0 1,0 4.3,0a2.15,2.15 0 1,0 -4.3,0M875.6,131.1a2.15,2.15 0 1,0 4.3,0a2.15,2.15 0 1,0 -4.3,0M848.7,134.8a2.15,2.15 0 1,0 4.3,0a2.15,2.15 0 1,0 -4.3,0M863.4,134.8a2.15,2.15 0 1,0 4.3,0a2.15,2.15 0 1,0 -4.3,0M878.5,134.8a2.15,2.15 0 1,0 4.3,0a2.15,2.15 0 1,0 -4.3,0M940.3,138.5a2.15,2.15 0 1,0 4.3,0a2.15,2.15 0 1,0 -4.3,0M839.5,142.2a2.15,2.15 0 1,0 4.3,0a2.15,2.15 0 1,0 -4.3,0M908.4,142.2a2.15,2.15 0 1,0 4.3,0a2.15,2.15 0 1,0 -4.3,0M916.1,145.9a2.15,2.15 0 1,0 4.3,0a2.15,2.15 0 1,0 -4.3,0M979.7,145.9a2.15,2.15 0 1,0 4.3,0a2.15,2.15 0 1,0 -4.3,0M981.7,149.6a2.15,2.15 0 1,0 4.3,0a2.15,2.15 0 1,0 -4.3,0M886.0,153.3a2.15,2.15 0 1,0 4.3,0a2.15,2.15 0 1,0 -4.3,0M919.4,153.3a2.15,2.15 0 1,0 4.3,0a2.15,2.15 0 1,0 -4.3,0M998.9,153.3a2.15,2.15 0 1,0 4.3,0a2.15,2.15 0 1,0 -4.3,0M893.0,157.0a2.15,2.15 0 1,0 4.3,0a2.15,2.15 0 1,0 -4.3,0M917.7,157.0a2.15,2.15 0 1,0 4.3,0a2.15,2.15 0 1,0 -4.3,0M1001.6,157.0a2.15,2.15 0 1,0 4.3,0a2.15,2.15 0 1,0 -4.3,0M817.9,160.7a2.15,2.15 0 1,0 4.3,0a2.15,2.15 0 1,0 -4.3,0M836.3,160.7a2.15,2.15 0 1,0 4.3,0a2.15,2.15 0 1,0 -4.3,0M841.4,160.7a2.15,2.15 0 1,0 4.3,0a2.15,2.15 0 1,0 -4.3,0M861.5,160.7a2.15,2.15 0 1,0 4.3,0a2.15,2.15 0 1,0 -4.3,0M930.0,160.7a2.15,2.15 0 1,0 4.3,0a2.15,2.15 0 1,0 -4.3,0M1008.7,160.7a2.15,2.15 0 1,0 4.3,0a2.15,2.15 0 1,0 -4.3,0M883.3,164.4a2.15,2.15 0 1,0 4.3,0a2.15,2.15 0 1,0 -4.3,0M942.0,164.4a2.15,2.15 0 1,0 4.3,0a2.15,2.15 0 1,0 -4.3,0M972.6,164.4a2.15,2.15 0 1,0 4.3,0a2.15,2.15 0 1,0 -4.3,0M992.0,164.4a2.15,2.15 0 1,0 4.3,0a2.15,2.15 0 1,0 -4.3,0M851.4,168.1a2.15,2.15 0 1,0 4.3,0a2.15,2.15 0 1,0 -4.3,0M996.6,171.8a2.15,2.15 0 1,0 4.3,0a2.15,2.15 0 1,0 -4.3,0M1001.1,171.8a2.15,2.15 0 1,0 4.3,0a2.15,2.15 0 1,0 -4.3,0M802.2,175.5a2.15,2.15 0 1,0 4.3,0a2.15,2.15 0 1,0 -4.3,0M994.1,175.5a2.15,2.15 0 1,0 4.3,0a2.15,2.15 0 1,0 -4.3,0M998.6,175.5a2.15,2.15 0 1,0 4.3,0a2.15,2.15 0 1,0 -4.3,0M897.8,179.2a2.15,2.15 0 1,0 4.3,0a2.15,2.15 0 1,0 -4.3,0M986.5,179.2a2.15,2.15 0 1,0 4.3,0a2.15,2.15 0 1,0 -4.3,0M996.6,179.2a2.15,2.15 0 1,0 4.3,0a2.15,2.15 0 1,0 -4.3,0M910.6,182.9a2.15,2.15 0 1,0 4.3,0a2.15,2.15 0 1,0 -4.3,0M1027.8,178.0a2.15,2.15 0 1,0 4.3,0a2.15,2.15 0 1,0 -4.3,0"/><path fill="#99ff00" d="M905.6,123.7a2.15,2.15 0 1,0 4.3,0a2.15,2.15 0 1,0 -4.3,0M939.2,131.1a2.15,2.15 0 1,0 4.3,0a2.15,2.15 0 1,0 -4.3,0M865.8,138.5a2.15,2.15 0 1,0 4.3,0a2.15,2.15 0 1,0 -4.3,0M890.5,138.5a2.15,2.15 0 1,0 4.3,0a2.15,2.15 0 1,0 -4.3,0M901.6,138.5a2.15,2.15 0 1,0 4.3,0a2.15,2.15 0 1,0 -4.3,0M910.4,138.5a2.15,2.15 0 1,0 4.3,0a2.15,2.15 0 1,0 -4.3,0M814.7,142.2a2.15,2.15 0 1,0 4.3,0a2.15,2.15 0 1,0 -4.3,0M853.3,142.2a2.15,2.15 0 1,0 4.3,0a2.15,2.15 0 1,0 -4.3,0M927.3,142.2a2.15,2.15 0 1,0 4.3,0a2.15,2.15 0 1,0 -4.3,0M831.7,145.9a2.15,2.15 0 1,0 4.3,0a2.15,2.15 0 1,0 -4.3,0M819.1,149.6a2.15,2.15 0 1,0 4.3,0a2.15,2.15 0 1,0 -4.3,0M893.0,149.6a2.15,2.15 0 1,0 4.3,0a2.15,2.15 0 1,0 -4.3,0M932.2,149.6a2.15,2.15 0 1,0 4.3,0a2.15,2.15 0 1,0 -4.3,0M948.1,149.6a2.15,2.15 0 1,0 4.3,0a2.15,2.15 0 1,0 -4.3,0M792.3,153.3a2.15,2.15 0 1,0 4.3,0a2.15,2.15 0 1,0 -4.3,0M866.6,153.3a2.15,2.15 0 1,0 4.3,0a2.15,2.15 0 1,0 -4.3,0M895.8,153.3a2.15,2.15 0 1,0 4.3,0a2.15,2.15 0 1,0 -4.3,0M984.4,153.3a2.15,2.15 0 1,0 4.3,0a2.15,2.15 0 1,0 -4.3,0M933.4,157.0a2.15,2.15 0 1,0 4.3,0a2.15,2.15 0 1,0 -4.3,0M881.2,160.7a2.15,2.15 0 1,0 4.3,0a2.15,2.15 0 1,0 -4.3,0M890.3,160.7a2.15,2.15 0 1,0 4.3,0a2.15,2.15 0 1,0 -4.3,0M998.4,160.7a2.15,2.15 0 1,0 4.3,0a2.15,2.15 0 1,0 -4.3,0M878.4,164.4a2.15,2.15 0 1,0 4.3,0a2.15,2.15 0 1,0 -4.3,0M1001.8,164.4a2.15,2.15 0 1,0 4.3,0a2.15,2.15 0 1,0 -4.3,0M837.1,168.1a2.15,2.15 0 1,0 4.3,0a2.15,2.15 0 1,0 -4.3,0M866.0,168.1a2.15,2.15 0 1,0 4.3,0a2.15,2.15 0 1,0 -4.3,0M876.0,168.1a2.15,2.15 0 1,0 4.3,0a2.15,2.15 0 1,0 -4.3,0M895.4,168.1a2.15,2.15 0 1,0 4.3,0a2.15,2.15 0 1,0 -4.3,0M1004.8,168.1a2.15,2.15 0 1,0 4.3,0a2.15,2.15 0 1,0 -4.3,0M1008.8,168.1a2.15,2.15 0 1,0 4.3,0a2.15,2.15 0 1,0 -4.3,0M844.1,171.8a2.15,2.15 0 1,0 4.3,0a2.15,2.15 0 1,0 -4.3,0M947.8,171.8a2.15,2.15 0 1,0 4.3,0a2.15,2.15 0 1,0 -4.3,0M905.5,175.5a2.15,2.15 0 1,0 4.3,0a2.15,2.15 0 1,0 -4.3,0M984.1,175.5a2.15,2.15 0 1,0 4.3,0a2.15,2.15 0 1,0 -4.3,0M789.5,179.2a2.15,2.15 0 1,0 4.3,0a2.15,2.15 0 1,0 -4.3,0M829.6,179.2a2.15,2.15 0 1,0 4.3,0a2.15,2.15 0 1,0 -4.3,0M833.9,179.2a2.15,2.15 0 1,0 4.3,0a2.15,2.15 0 1,0 -4.3,0M947.1,179.2a2.15,2.15 0 1,0 4.3,0a2.15,2.15 0 1,0 -4.3,0M926.1,182.9a2.15,2.15 0 1,0 4.3,0a2.15,2.15 0 1,0 -4.3,0M999.1,182.9a2.15,2.15 0 1,0 4.3,0a2.15,2.15 0 1,0 -4.3,0M889.1,186.6a2.15,2.15 0 1,0 4.3,0a2.15,2.15 0 1,0 -4.3,0M758.4,173.4a2.15,2.15 0 1,0 4.3,0a2.15,2.15 0 1,0 -4.3,0"/><path fill="#b1ff00" d="M871.1,131.1a2.15,2.15 0 1,0 4.3,0a2.15,2.15 0 1,0 -4.3,0M944.7,131.1a2.15,2.15 0 1,0 4.3,0a2.15,2.15 0 1,0 -4.3,0M923.3,134.8a2.15,2.15 0 1,0 4.3,0a2.15,2.15 0 1,0 -4.3,0M937.8,134.8a2.15,2.15 0 1,0 4.3,0a2.15,2.15 0 1,0 -4.3,0M851.7,138.5a2.15,2.15 0 1,0 4.3,0a2.15,2.15 0 1,0 -4.3,0M915.5,138.5a2.15,2.15 0 1,0 4.3,0a2.15,2.15 0 1,0 -4.3,0M829.7,142.2a2.15,2.15 0 1,0 4.3,0a2.15,2.15 0 1,0 -4.3,0M957.4,142.2a2.15,2.15 0 1,0 4.3,0a2.15,2.15 0 1,0 -4.3,0M842.1,145.9a2.15,2.15 0 1,0 4.3,0a2.15,2.15 0 1,0 -4.3,0M909.9,145.9a2.15,2.15 0 1,0 4.3,0a2.15,2.15 0 1,0 -4.3,0M920.4,145.9a2.15,2.15 0 1,0 4.3,0a2.15,2.15 0 1,0 -4.3,0M789.4,149.6a2.15,2.15 0 1,0 4.3,0a2.15,2.15 0 1,0 -4.3,0M897.6,149.6a2.15,2.15 0 1,0 4.3,0a2.15,2.15 0 1,0 -4.3,0M937.2,149.6a2.15,2.15 0 1,0 4.3,0a2.15,2.15 0 1,0 -4.3,0M971.9,149.6a2.15,2.15 0 1,0 4.3,0a2.15,2.15 0 1,0 -4.3,0M807.4,153.3a2.15,2.15 0 1,0 4.3,0a2.15,2.15 0 1,0 -4.3,0M817.2,153.3a2.15,2.15 0 1,0 4.3,0a2.15,2.15 0 1,0 -4.3,0M955.0,153.3a2.15,2.15 0 1,0 4.3,0a2.15,2.15 0 1,0 -4.3,0M989.9,153.3a2.15,2.15 0 1,0 4.3,0a2.15,2.15 0 1,0 -4.3,0M784.5,157.0a2.15,2.15 0 1,0 4.3,0a2.15,2.15 0 1,0 -4.3,0M853.1,157.0a2.15,2.15 0 1,0 4.3,0a2.15,2.15 0 1,0 -4.3,0M858.7,157.0a2.15,2.15 0 1,0 4.3,0a2.15,2.15 0 1,0 -4.3,0M990.5,157.0a2.15,2.15 0 1,0 4.3,0a2.15,2.15 0 1,0 -4.3,0M782.0,160.7a2.15,2.15 0 1,0 4.3,0a2.15,2.15 0 1,0 -4.3,0M792.5,160.7a2.15,2.15 0 1,0 4.3,0a2.15,2.15 0 1,0 -4.3,0M871.3,160.7a2.15,2.15 0 1,0 4.3,0a2.15,2.15 0 1,0 -4.3,0M904.1,160.7a2.15,2.15 0 1,0 4.3,0a2.15,2.15 0 1,0 -4.3,0M915.2,160.7a2.15,2.15 0 1,0 4.3,0a2.15,2.15 0 1,0 -4.3,0M925.3,160.7a2.15,2.15 0 1,0 4.3,0a2.15,2.15 0 1,0 -4.3,0M979.6,160.7a2.15,2.15 0 1,0 4.3,0a2.15,2.15 0 1,0 -4.3,0M984.2,160.7a2.15,2.15 0 1,0 4.3,0a2.15,2.15 0 1,0 -4.3,0M824.6,164.4a2.15,2.15 0 1,0 4.3,0a2.15,2.15 0 1,0 -4.3,0M946.8,164.4a2.15,2.15 0 1,0 4.3,0a2.15,2.15 0 1,0 -4.3,0M957.5,164.4a2.15,2.15 0 1,0 4.3,0a2.15,2.15 0 1,0 -4.3,0M977.5,164.4a2.15,2.15 0 1,0 4.3,0a2.15,2.15 0 1,0 -4.3,0M763.5,168.1a2.15,2.15 0 1,0 4.3,0a2.15,2.15 0 1,0 -4.3,0M787.4,168.1a2.15,2.15 0 1,0 4.3,0a2.15,2.15 0 1,0 -4.3,0M792.4,168.1a2.15,2.15 0 1,0 4.3,0a2.15,2.15 0 1,0 -4.3,0M831.5,168.1a2.15,2.15 0 1,0 4.3,0a2.15,2.15 0 1,0 -4.3,0M984.2,168.1a2.15,2.15 0 1,0 4.3,0a2.15,2.15 0 1,0 -4.3,0M1014.2,168.1a2.15,2.15 0 1,0 4.3,0a2.15,2.15 0 1,0 -4.3,0M1018.2,168.1a2.15,2.15 0 1,0 4.3,0a2.15,2.15 0 1,0 -4.3,0M765.3,171.8a2.15,2.15 0 1,0 4.3,0a2.15,2.15 0 1,0 -4.3,0M780.0,171.8a2.15,2.15 0 1,0 4.3,0a2.15,2.15 0 1,0 -4.3,0M800.6,171.8a2.15,2.15 0 1,0 4.3,0a2.15,2.15 0 1,0 -4.3,0M824.5,171.8a2.15,2.15 0 1,0 4.3,0a2.15,2.15 0 1,0 -4.3,0M868.4,171.8a2.15,2.15 0 1,0 4.3,0a2.15,2.15 0 1,0 -4.3,0M888.4,171.8a2.15,2.15 0 1,0 4.3,0a2.15,2.15 0 1,0 -4.3,0M932.6,171.8a2.15,2.15 0 1,0 4.3,0a2.15,2.15 0 1,0 -4.3,0M986.3,171.8a2.15,2.15 0 1,0 4.3,0a2.15,2.15 0 1,0 -4.3,0M1011.9,171.8a2.15,2.15 0 1,0 4.3,0a2.15,2.15 0 1,0 -4.3,0M792.0,175.5a2.15,2.15 0 1,0 4.3,0a2.15,2.15 0 1,0 -4.3,0M812.4,175.5a2.15,2.15 0 1,0 4.3,0a2.15,2.15 0 1,0 -4.3,0M856.6,175.5a2.15,2.15 0 1,0 4.3,0a2.15,2.15 0 1,0 -4.3,0M860.5,175.5a2.15,2.15 0 1,0 4.3,0a2.15,2.15 0 1,0 -4.3,0M886.5,175.5a2.15,2.15 0 1,0 4.3,0a2.15,2.15 0 1,0 -4.3,0M920.1,175.5a2.15,2.15 0 1,0 4.3,0a2.15,2.15 0 1,0 -4.3,0M989.1,175.5a2.15,2.15 0 1,0 4.3,0a2.15,2.15 0 1,0 -4.3,0M1003.3,175.5a2.15,2.15 0 1,0 4.3,0a2.15,2.15 0 1,0 -4.3,0M839.8,179.2a2.15,2.15 0 1,0 4.3,0a2.15,2.15 0 1,0 -4.3,0M967.3,179.2a2.15,2.15 0 1,0 4.3,0a2.15,2.15 0 1,0 -4.3,0M1010.6,179.2a2.15,2.15 0 1,0 4.3,0a2.15,2.15 0 1,0 -4.3,0M895.7,182.9a2.15,2.15 0 1,0 4.3,0a2.15,2.15 0 1,0 -4.3,0M915.5,182.9a2.15,2.15 0 1,0 4.3,0a2.15,2.15 0 1,0 -4.3,0M969.7,182.9a2.15,2.15 0 1,0 4.3,0a2.15,2.15 0 1,0 -4.3,0M989.0,182.9a2.15,2.15 0 1,0 4.3,0a2.15,2.15 0 1,0 -4.3,0M993.7,182.9a2.15,2.15 0 1,0 4.3,0a2.15,2.15 0 1,0 -4.3,0M1003.6,182.9a2.15,2.15 0 1,0 4.3,0a2.15,2.15 0 1,0 -4.3,0M972.3,186.6a2.15,2.15 0 1,0 4.3,0a2.15,2.15 0 1,0 -4.3,0"/><path fill="#c9ff00" d="M907.9,127.4a2.15,2.15 0 1,0 4.3,0a2.15,2.15 0 1,0 -4.3,0M893.2,134.8a2.15,2.15 0 1,0 4.3,0a2.15,2.15 0 1,0 -4.3,0M931.8,134.8a2.15,2.15 0 1,0 4.3,0a2.15,2.15 0 1,0 -4.3,0M885.5,138.5a2.15,2.15 0 1,0 4.3,0a2.15,2.15 0 1,0 -4.3,0M834.4,142.2a2.15,2.15 0 1,0 4.3,0a2.15,2.15 0 1,0 -4.3,0M942.0,142.2a2.15,2.15 0 1,0 4.3,0a2.15,2.15 0 1,0 -4.3,0M816.3,145.9a2.15,2.15 0 1,0 4.3,0a2.15,2.15 0 1,0 -4.3,0M861.1,145.9a2.15,2.15 0 1,0 4.3,0a2.15,2.15 0 1,0 -4.3,0M906.0,145.9a2.15,2.15 0 1,0 4.3,0a2.15,2.15 0 1,0 -4.3,0M809.4,149.6a2.15,2.15 0 1,0 4.3,0a2.15,2.15 0 1,0 -4.3,0M927.7,149.6a2.15,2.15 0 1,0 4.3,0a2.15,2.15 0 1,0 -4.3,0M786.9,153.3a2.15,2.15 0 1,0 4.3,0a2.15,2.15 0 1,0 -4.3,0M801.8,153.3a2.15,2.15 0 1,0 4.3,0a2.15,2.15 0 1,0 -4.3,0M845.6,153.3a2.15,2.15 0 1,0 4.3,0a2.15,2.15 0 1,0 -4.3,0M964.0,153.3a2.15,2.15 0 1,0 4.3,0a2.15,2.15 0 1,0 -4.3,0M780.5,157.0a2.15,2.15 0 1,0 4.3,0a2.15,2.15 0 1,0 -4.3,0M795.5,157.0a2.15,2.15 0 1,0 4.3,0a2.15,2.15 0 1,0 -4.3,0M912.9,157.0a2.15,2.15 0 1,0 4.3,0a2.15,2.15 0 1,0 -4.3,0M1007.0,157.0a2.15,2.15 0 1,0 4.3,0a2.15,2.15 0 1,0 -4.3,0M778.0,160.7a2.15,2.15 0 1,0 4.3,0a2.15,2.15 0 1,0 -4.3,0M797.0,160.7a2.15,2.15 0 1,0 4.3,0a2.15,2.15 0 1,0 -4.3,0M826.5,160.7a2.15,2.15 0 1,0 4.3,0a2.15,2.15 0 1,0 -4.3,0M774.8,164.4a2.15,2.15 0 1,0 4.3,0a2.15,2.15 0 1,0 -4.3,0M789.7,164.4a2.15,2.15 0 1,0 4.3,0a2.15,2.15 0 1,0 -4.3,0M799.9,164.4a2.15,2.15 0 1,0 4.3,0a2.15,2.15 0 1,0 -4.3,0M863.4,164.4a2.15,2.15 0 1,0 4.3,0a2.15,2.15 0 1,0 -4.3,0M918.0,164.4a2.15,2.15 0 1,0 4.3,0a2.15,2.15 0 1,0 -4.3,0M982.0,164.4a2.15,2.15 0 1,0 4.3,0a2.15,2.15 0 1,0 -4.3,0M768.0,168.1a2.15,2.15 0 1,0 4.3,0a2.15,2.15 0 1,0 -4.3,0M772.2,168.1a2.15,2.15 0 1,0 4.3,0a2.15,2.15 0 1,0 -4.3,0M812.3,168.1a2.15,2.15 0 1,0 4.3,0a2.15,2.15 0 1,0 -4.3,0M915.5,168.1a2.15,2.15 0 1,0 4.3,0a2.15,2.15 0 1,0 -4.3,0M954.4,168.1a2.15,2.15 0 1,0 4.3,0a2.15,2.15 0 1,0 -4.3,0M775.1,171.8a2.15,2.15 0 1,0 4.3,0a2.15,2.15 0 1,0 -4.3,0M819.2,171.8a2.15,2.15 0 1,0 4.3,0a2.15,2.15 0 1,0 -4.3,0M853.9,171.8a2.15,2.15 0 1,0 4.3,0a2.15,2.15 0 1,0 -4.3,0M918.6,171.8a2.15,2.15 0 1,0 4.3,0a2.15,2.15 0 1,0 -4.3,0M937.6,171.8a2.15,2.15 0 1,0 4.3,0a2.15,2.15 0 1,0 -4.3,0M797.4,175.5a2.15,2.15 0 1,0 4.3,0a2.15,2.15 0 1,0 -4.3,0M944.2,175.5a2.15,2.15 0 1,0 4.3,0a2.15,2.15 0 1,0 -4.3,0M954.5,175.5a2.15,2.15 0 1,0 4.3,0a2.15,2.15 0 1,0 -4.3,0M849.7,179.2a2.15,2.15 0 1,0 4.3,0a2.15,2.15 0 1,0 -4.3,0M951.6,186.6a2.15,2.15 0 1,0 4.3,0a2.15,2.15 0 1,0 -4.3,0M957.3,186.6a2.15,2.15 0 1,0 4.3,0a2.15,2.15 0 1,0 -4.3,0M711.4,173.4a2.15,2.15 0 1,0 4.3,0a2.15,2.15 0 1,0 -4.3,0M722.9,173.4a2.15,2.15 0 1,0 4.3,0a2.15,2.15 0 1,0 -4.3,0M1003.9,159.5a2.15,2.15 0 1,0 4.3,0a2.15,2.15 0 1,0 -4.3,0M1009.9,159.5a2.15,2.15 0 1,0 4.3,0a2.15,2.15 0 1,0 -4.3,0"/><path fill="#e0ff00" d="M826.5,131.1a2.15,2.15 0 1,0 4.3,0a2.15,2.15 0 1,0 -4.3,0M854.1,134.8a2.15,2.15 0 1,0 4.3,0a2.15,2.15 0 1,0 -4.3,0M859.2,134.8a2.15,2.15 0 1,0 4.3,0a2.15,2.15 0 1,0 -4.3,0M918.1,134.8a2.15,2.15 0 1,0 4.3,0a2.15,2.15 0 1,0 -4.3,0M827.1,138.5a2.15,2.15 0 1,0 4.3,0a2.15,2.15 0 1,0 -4.3,0M819.5,142.2a2.15,2.15 0 1,0 4.3,0a2.15,2.15 0 1,0 -4.3,0M811.5,145.9a2.15,2.15 0 1,0 4.3,0a2.15,2.15 0 1,0 -4.3,0M822.3,145.9a2.15,2.15 0 1,0 4.3,0a2.15,2.15 0 1,0 -4.3,0M827.0,145.9a2.15,2.15 0 1,0 4.3,0a2.15,2.15 0 1,0 -4.3,0M814.6,149.6a2.15,2.15 0 1,0 4.3,0a2.15,2.15 0 1,0 -4.3,0M888.6,149.6a2.15,2.15 0 1,0 4.3,0a2.15,2.15 0 1,0 -4.3,0M797.5,153.3a2.15,2.15 0 1,0 4.3,0a2.15,2.15 0 1,0 -4.3,0M832.3,153.3a2.15,2.15 0 1,0 4.3,0a2.15,2.15 0 1,0 -4.3,0M870.6,153.3a2.15,2.15 0 1,0 4.3,0a2.15,2.15 0 1,0 -4.3,0M789.7,157.0a2.15,2.15 0 1,0 4.3,0a2.15,2.15 0 1,0 -4.3,0M800.0,157.0a2.15,2.15 0 1,0 4.3,0a2.15,2.15 0 1,0 -4.3,0M805.0,157.0a2.15,2.15 0 1,0 4.3,0a2.15,2.15 0 1,0 -4.3,0M809.5,157.0a2.15,2.15 0 1,0 4.3,0a2.15,2.15 0 1,0 -4.3,0M951.4,157.0a2.15,2.15 0 1,0 4.3,0a2.15,2.15 0 1,0 -4.3,0M981.6,157.0a2.15,2.15 0 1,0 4.3,0a2.15,2.15 0 1,0 -4.3,0M779.7,164.4a2.15,2.15 0 1,0 4.3,0a2.15,2.15 0 1,0 -4.3,0M784.3,164.4a2.15,2.15 0 1,0 4.3,0a2.15,2.15 0 1,0 -4.3,0M794.9,164.4a2.15,2.15 0 1,0 4.3,0a2.15,2.15 0 1,0 -4.3,0M814.5,164.4a2.15,2.15 0 1,0 4.3,0a2.15,2.15 0 1,0 -4.3,0M893.3,164.4a2.15,2.15 0 1,0 4.3,0a2.15,2.15 0 1,0 -4.3,0M933.0,164.4a2.15,2.15 0 1,0 4.3,0a2.15,2.15 0 1,0 -4.3,0M777.9,168.1a2.15,2.15 0 1,0 4.3,0a2.15,2.15 0 1,0 -4.3,0M781.7,168.1a2.15,2.15 0 1,0 4.3,0a2.15,2.15 0 1,0 -4.3,0M816.7,168.1a2.15,2.15 0 1,0 4.3,0a2.15,2.15 0 1,0 -4.3,0M1023.1,168.1a2.15,2.15 0 1,0 4.3,0a2.15,2.15 0 1,0 -4.3,0M760.7,171.8a2.15,2.15 0 1,0 4.3,0a2.15,2.15 0 1,0 -4.3,0M770.1,171.8a2.15,2.15 0 1,0 4.3,0a2.15,2.15 0 1,0 -4.3,0M814.9,171.8a2.15,2.15 0 1,0 4.3,0a2.15,2.15 0 1,0 -4.3,0M773.0,175.5a2.15,2.15 0 1,0 4.3,0a2.15,2.15 0 1,0 -4.3,0M778.0,175.5a2.15,2.15 0 1,0 4.3,0a2.15,2.15 0 1,0 -4.3,0M782.6,175.5a2.15,2.15 0 1,0 4.3,0a2.15,2.15 0 1,0 -4.3,0M818.0,175.5a2.15,2.15 0 1,0 4.3,0a2.15,2.15 0 1,0 -4.3,0M821.9,175.5a2.15,2.15 0 1,0 4.3,0a2.15,2.15 0 1,0 -4.3,0M992.0,179.2a2.15,2.15 0 1,0 4.3,0a2.15,2.15 0 1,0 -4.3,0M1001.8,179.2a2.15,2.15 0 1,0 4.3,0a2.15,2.15 0 1,0 -4.3,0M777.4,182.9a2.15,2.15 0 1,0 4.3,0a2.15,2.15 0 1,0 -4.3,0M827.0,182.9a2.15,2.15 0 1,0 4.3,0a2.15,2.15 0 1,0 -4.3,0M967.0,186.6a2.15,2.15 0 1,0 4.3,0a2.15,2.15 0 1,0 -4.3,0M666.9,151.4a2.15,2.15 0 1,0 4.3,0a2.15,2.15 0 1,0 -4.3,0M681.1,159.0a2.15,2.15 0 1,0 4.3,0a2.15,2.15 0 1,0 -4.3,0M688.9,163.0a2.15,2.15 0 1,0 4.3,0a2.15,2.15 0 1,0 -4.3,0M700.6,155.0a2.15,2.15 0 1,0 4.3,0a2.15,2.15 0 1,0 -4.3,0M734.9,151.4a2.15,2.15 0 1,0 4.3,0a2.15,2.15 0 1,0 -4.3,0M741.4,170.0a2.15,2.15 0 1,0 4.3,0a2.15,2.15 0 1,0 -4.3,0M750.5,158.8a2.15,2.15 0 1,0 4.3,0a2.15,2.15 0 1,0 -4.3,0M761.5,155.0a2.15,2.15 0 1,0 4.3,0a2.15,2.15 0 1,0 -4.3,0M774.9,151.4a2.15,2.15 0 1,0 4.3,0a2.15,2.15 0 1,0 -4.3,0M756.9,177.8a2.15,2.15 0 1,0 4.3,0a2.15,2.15 0 1,0 -4.3,0M1084.3,151.5a2.15,2.15 0 1,0 4.3,0a2.15,2.15 0 1,0 -4.3,0M1059.8,159.0a2.15,2.15 0 1,0 4.3,0a2.15,2.15 0 1,0 -4.3,0M1020.9,157.5a2.15,2.15 0 1,0 4.3,0a2.15,2.15 0 1,0 -4.3,0M1000.9,151.5a2.15,2.15 0 1,0 4.3,0a2.15,2.15 0 1,0 -4.3,0M1034.8,166.3a2.15,2.15 0 1,0 4.3,0a2.15,2.15 0 1,0 -4.3,0M1069.8,170.3a2.15,2.15 0 1,0 4.3,0a2.15,2.15 0 1,0 -4.3,0"/><path fill="#f8ff00" d="M925.6,123.7a2.15,2.15 0 1,0 4.3,0a2.15,2.15 0 1,0 -4.3,0M824.5,134.8a2.15,2.15 0 1,0 4.3,0a2.15,2.15 0 1,0 -4.3,0M821.9,138.5a2.15,2.15 0 1,0 4.3,0a2.15,2.15 0 1,0 -4.3,0M960.1,138.5a2.15,2.15 0 1,0 4.3,0a2.15,2.15 0 1,0 -4.3,0M824.2,142.2a2.15,2.15 0 1,0 4.3,0a2.15,2.15 0 1,0 -4.3,0M896.0,145.9a2.15,2.15 0 1,0 4.3,0a2.15,2.15 0 1,0 -4.3,0M804.9,149.6a2.15,2.15 0 1,0 4.3,0a2.15,2.15 0 1,0 -4.3,0M942.5,149.6a2.15,2.15 0 1,0 4.3,0a2.15,2.15 0 1,0 -4.3,0M814.5,157.0a2.15,2.15 0 1,0 4.3,0a2.15,2.15 0 1,0 -4.3,0M848.5,157.0a2.15,2.15 0 1,0 4.3,0a2.15,2.15 0 1,0 -4.3,0M962.3,157.0a2.15,2.15 0 1,0 4.3,0a2.15,2.15 0 1,0 -4.3,0M806.9,160.7a2.15,2.15 0 1,0 4.3,0a2.15,2.15 0 1,0 -4.3,0M804.7,164.4a2.15,2.15 0 1,0 4.3,0a2.15,2.15 0 1,0 -4.3,0M796.9,168.1a2.15,2.15 0 1,0 4.3,0a2.15,2.15 0 1,0 -4.3,0M789.7,171.8a2.15,2.15 0 1,0 4.3,0a2.15,2.15 0 1,0 -4.3,0M809.8,171.8a2.15,2.15 0 1,0 4.3,0a2.15,2.15 0 1,0 -4.3,0M927.6,171.8a2.15,2.15 0 1,0 4.3,0a2.15,2.15 0 1,0 -4.3,0M827.0,175.5a2.15,2.15 0 1,0 4.3,0a2.15,2.15 0 1,0 -4.3,0M870.9,175.5a2.15,2.15 0 1,0 4.3,0a2.15,2.15 0 1,0 -4.3,0M930.3,175.5a2.15,2.15 0 1,0 4.3,0a2.15,2.15 0 1,0 -4.3,0M939.8,175.5a2.15,2.15 0 1,0 4.3,0a2.15,2.15 0 1,0 -4.3,0M824.3,179.2a2.15,2.15 0 1,0 4.3,0a2.15,2.15 0 1,0 -4.3,0M843.9,179.2a2.15,2.15 0 1,0 4.3,0a2.15,2.15 0 1,0 -4.3,0M792.2,182.9a2.15,2.15 0 1,0 4.3,0a2.15,2.15 0 1,0 -4.3,0M738.1,166.0a2.15,2.15 0 1,0 4.3,0a2.15,2.15 0 1,0 -4.3,0M756.4,158.8a2.15,2.15 0 1,0 4.3,0a2.15,2.15 0 1,0 -4.3,0M769.6,151.4a2.15,2.15 0 1,0 4.3,0a2.15,2.15 0 1,0 -4.3,0M1055.8,151.5a2.15,2.15 0 1,0 4.3,0a2.15,2.15 0 1,0 -4.3,0"/><path fill="#ffee00" d="M932.6,127.4a2.15,2.15 0 1,0 4.3,0a2.15,2.15 0 1,0 -4.3,0M807.7,145.9a2.15,2.15 0 1,0 4.3,0a2.15,2.15 0 1,0 -4.3,0M783.2,153.3a2.15,2.15 0 1,0 4.3,0a2.15,2.15 0 1,0 -4.3,0M821.6,153.3a2.15,2.15 0 1,0 4.3,0a2.15,2.15 0 1,0 -4.3,0M827.3,153.3a2.15,2.15 0 1,0 4.3,0a2.15,2.15 0 1,0 -4.3,0M930.2,153.3a2.15,2.15 0 1,0 4.3,0a2.15,2.15 0 1,0 -4.3,0M819.1,157.0a2.15,2.15 0 1,0 4.3,0a2.15,2.15 0 1,0 -4.3,0M946.9,157.0a2.15,2.15 0 1,0 4.3,0a2.15,2.15 0 1,0 -4.3,0M812.2,160.7a2.15,2.15 0 1,0 4.3,0a2.15,2.15 0 1,0 -4.3,0M821.9,160.7a2.15,2.15 0 1,0 4.3,0a2.15,2.15 0 1,0 -4.3,0M809.8,164.4a2.15,2.15 0 1,0 4.3,0a2.15,2.15 0 1,0 -4.3,0M822.3,168.1a2.15,2.15 0 1,0 4.3,0a2.15,2.15 0 1,0 -4.3,0M827.5,168.1a2.15,2.15 0 1,0 4.3,0a2.15,2.15 0 1,0 -4.3,0M785.2,171.8a2.15,2.15 0 1,0 4.3,0a2.15,2.15 0 1,0 -4.3,0M806.9,175.5a2.15,2.15 0 1,0 4.3,0a2.15,2.15 0 1,0 -4.3,0M841.5,175.5a2.15,2.15 0 1,0 4.3,0a2.15,2.15 0 1,0 -4.3,0M809.7,179.2a2.15,2.15 0 1,0 4.3,0a2.15,2.15 0 1,0 -4.3,0M812.2,182.9a2.15,2.15 0 1,0 4.3,0a2.15,2.15 0 1,0 -4.3,0M817.9,182.9a2.15,2.15 0 1,0 4.3,0a2.15,2.15 0 1,0 -4.3,0M843.7,186.6a2.15,2.15 0 1,0 4.3,0a2.15,2.15 0 1,0 -4.3,0M762.9,162.3a2.15,2.15 0 1,0 4.3,0a2.15,2.15 0 1,0 -4.3,0"/><path fill="#ffd600" d="M799.6,149.6a2.15,2.15 0 1,0 4.3,0a2.15,2.15 0 1,0 -4.3,0M824.2,149.6a2.15,2.15 0 1,0 4.3,0a2.15,2.15 0 1,0 -4.3,0M823.9,157.0a2.15,2.15 0 1,0 4.3,0a2.15,2.15 0 1,0 -4.3,0M819.0,164.4a2.15,2.15 0 1,0 4.3,0a2.15,2.15 0 1,0 -4.3,0M808.0,168.1a2.15,2.15 0 1,0 4.3,0a2.15,2.15 0 1,0 -4.3,0M829.5,186.6a2.15,2.15 0 1,0 4.3,0a2.15,2.15 0 1,0 -4.3,0"/><path fill="#ffbe00" d="M802.7,168.1a2.15,2.15 0 1,0 4.3,0a2.15,2.15 0 1,0 -4.3,0M794.9,171.8a2.15,2.15 0 1,0 4.3,0a2.15,2.15 0 1,0 -4.3,0M804.7,171.8a2.15,2.15 0 1,0 4.3,0a2.15,2.15 0 1,0 -4.3,0M794.7,179.2a2.15,2.15 0 1,0 4.3,0a2.15,2.15 0 1,0 -4.3,0M797.0,182.9a2.15,2.15 0 1,0 4.3,0a2.15,2.15 0 1,0 -4.3,0M842.1,182.9a2.15,2.15 0 1,0 4.3,0a2.15,2.15 0 1,0 -4.3,0M876.1,182.9a2.15,2.15 0 1,0 4.3,0a2.15,2.15 0 1,0 -4.3,0"/><path fill="#ffa700" d="M794.6,149.6a2.15,2.15 0 1,0 4.3,0a2.15,2.15 0 1,0 -4.3,0M779.9,179.2a2.15,2.15 0 1,0 4.3,0a2.15,2.15 0 1,0 -4.3,0M799.8,179.2a2.15,2.15 0 1,0 4.3,0a2.15,2.15 0 1,0 -4.3,0M819.8,179.2a2.15,2.15 0 1,0 4.3,0a2.15,2.15 0 1,0 -4.3,0M787.1,182.9a2.15,2.15 0 1,0 4.3,0a2.15,2.15 0 1,0 -4.3,0M815.2,186.6a2.15,2.15 0 1,0 4.3,0a2.15,2.15 0 1,0 -4.3,0M834.5,186.6a2.15,2.15 0 1,0 4.3,0a2.15,2.15 0 1,0 -4.3,0M839.2,186.6a2.15,2.15 0 1,0 4.3,0a2.15,2.15 0 1,0 -4.3,0M863.5,186.6a2.15,2.15 0 1,0 4.3,0a2.15,2.15 0 1,0 -4.3,0M743.6,151.4a2.15,2.15 0 1,0 4.3,0a2.15,2.15 0 1,0 -4.3,0M746.6,163.0a2.15,2.15 0 1,0 4.3,0a2.15,2.15 0 1,0 -4.3,0M1045.5,144.0a2.15,2.15 0 1,0 4.3,0a2.15,2.15 0 1,0 -4.3,0M1033.8,151.5a2.15,2.15 0 1,0 4.3,0a2.15,2.15 0 1,0 -4.3,0M1041.8,162.5a2.15,2.15 0 1,0 4.3,0a2.15,2.15 0 1,0 -4.3,0"/><path fill="#ff8f00" d="M770.1,179.2a2.15,2.15 0 1,0 4.3,0a2.15,2.15 0 1,0 -4.3,0M821.9,182.9a2.15,2.15 0 1,0 4.3,0a2.15,2.15 0 1,0 -4.3,0M846.7,182.9a2.15,2.15 0 1,0 4.3,0a2.15,2.15 0 1,0 -4.3,0M819.8,186.6a2.15,2.15 0 1,0 4.3,0a2.15,2.15 0 1,0 -4.3,0M824.0,186.6a2.15,2.15 0 1,0 4.3,0a2.15,2.15 0 1,0 -4.3,0M766.9,166.0a2.15,2.15 0 1,0 4.3,0a2.15,2.15 0 1,0 -4.3,0M769.9,162.0a2.15,2.15 0 1,0 4.3,0a2.15,2.15 0 1,0 -4.3,0"/><path fill="#ff7700" d="M774.6,179.2a2.15,2.15 0 1,0 4.3,0a2.15,2.15 0 1,0 -4.3,0M871.1,182.9a2.15,2.15 0 1,0 4.3,0a2.15,2.15 0 1,0 -4.3,0M849.3,186.6a2.15,2.15 0 1,0 4.3,0a2.15,2.15 0 1,0 -4.3,0M853.7,186.6a2.15,2.15 0 1,0 4.3,0a2.15,2.15 0 1,0 -4.3,0M872.9,186.6a2.15,2.15 0 1,0 4.3,0a2.15,2.15 0 1,0 -4.3,0"/><path fill="#ff5f00" d="M814.3,179.2a2.15,2.15 0 1,0 4.3,0a2.15,2.15 0 1,0 -4.3,0M782.8,182.9a2.15,2.15 0 1,0 4.3,0a2.15,2.15 0 1,0 -4.3,0M806.6,182.9a2.15,2.15 0 1,0 4.3,0a2.15,2.15 0 1,0 -4.3,0M851.1,182.9a2.15,2.15 0 1,0 4.3,0a2.15,2.15 0 1,0 -4.3,0M804.8,186.6a2.15,2.15 0 1,0 4.3,0a2.15,2.15 0 1,0 -4.3,0M871.4,205.1a2.15,2.15 0 1,0 4.3,0a2.15,2.15 0 1,0 -4.3,0M939.8,205.1a2.15,2.15 0 1,0 4.3,0a2.15,2.15 0 1,0 -4.3,0"/><path fill="#ff4700" d="M801.9,182.9a2.15,2.15 0 1,0 4.3,0a2.15,2.15 0 1,0 -4.3,0M830.8,182.9a2.15,2.15 0 1,0 4.3,0a2.15,2.15 0 1,0 -4.3,0"/><path fill="#ff3000" d="M912.3,142.2a2.15,2.15 0 1,0 4.3,0a2.15,2.15 0 1,0 -4.3,0M880.7,153.3a2.15,2.15 0 1,0 4.3,0a2.15,2.15 0 1,0 -4.3,0M969.9,153.3a2.15,2.15 0 1,0 4.3,0a2.15,2.15 0 1,0 -4.3,0M831.5,160.7a2.15,2.15 0 1,0 4.3,0a2.15,2.15 0 1,0 -4.3,0M949.3,168.1a2.15,2.15 0 1,0 4.3,0a2.15,2.15 0 1,0 -4.3,0M913.0,171.8a2.15,2.15 0 1,0 4.3,0a2.15,2.15 0 1,0 -4.3,0M972.1,171.8a2.15,2.15 0 1,0 4.3,0a2.15,2.15 0 1,0 -4.3,0M787.5,175.5a2.15,2.15 0 1,0 4.3,0a2.15,2.15 0 1,0 -4.3,0M804.2,179.2a2.15,2.15 0 1,0 4.3,0a2.15,2.15 0 1,0 -4.3,0"/><path fill="#ff1800" d="M883.1,186.6a2.15,2.15 0 1,0 4.3,0a2.15,2.15 0 1,0 -4.3,0M898.5,186.6a2.15,2.15 0 1,0 4.3,0a2.15,2.15 0 1,0 -4.3,0M902.8,186.6a2.15,2.15 0 1,0 4.3,0a2.15,2.15 0 1,0 -4.3,0M907.6,186.6a2.15,2.15 0 1,0 4.3,0a2.15,2.15 0 1,0 -4.3,0M928.1,186.6a2.15,2.15 0 1,0 4.3,0a2.15,2.15 0 1,0 -4.3,0M763.1,165.9a2.15,2.15 0 1,0 4.3,0a2.15,2.15 0 1,0 -4.3,0M1051.8,166.0a2.15,2.15 0 1,0 4.3,0a2.15,2.15 0 1,0 -4.3,0M1047.8,170.0a2.15,2.15 0 1,0 4.3,0a2.15,2.15 0 1,0 -4.3,0M1062.3,177.5a2.15,2.15 0 1,0 4.3,0a2.15,2.15 0 1,0 -4.3,0M1048.8,181.5a2.15,2.15 0 1,0 4.3,0a2.15,2.15 0 1,0 -4.3,0M1057.3,181.5a2.15,2.15 0 1,0 4.3,0a2.15,2.15 0 1,0 -4.3,0"/><circle cx="852" cy="178" r="4.6" fill="#ff0000"/><defs><linearGradient id="cb" x1="0" y1="0" x2="0" y2="1"><stop offset="0" stop-color="#ff0000"/><stop offset="0.27" stop-color="#ffff00"/><stop offset="0.52" stop-color="#00ff00"/><stop offset="0.79" stop-color="#00ffff"/><stop offset="1" stop-color="#0044ff"/></linearGradient></defs><rect x="1185" y="116.5" width="7.5" height="205" rx="3.75" fill="url(#cb)"/></svg>
<div class="t" style="right:533px;top:136.52px;font-size:8.6px;color:#d8d8d8;font-weight:normal;letter-spacing:-0.3px;">3,0</div>
<div class="t" style="right:533px;top:195.72px;font-size:8.6px;color:#d8d8d8;font-weight:normal;letter-spacing:-0.3px;">2,0</div>
<div class="t" style="right:533px;top:254.92px;font-size:8.6px;color:#d8d8d8;font-weight:normal;letter-spacing:-0.3px;">1,0</div>
<div class="t" style="right:533px;top:314.12px;font-size:8.6px;color:#d8d8d8;font-weight:normal;letter-spacing:-0.3px;">0,0</div>
<div class="t" style="left:672.1999999999999px;top:325.02px;font-size:8.6px;color:#d8d8d8;font-weight:normal;letter-spacing:-0.3px;transform:translateX(-50%);transform-origin:0 0;">-4,5</div>
<div class="t" style="left:697.0px;top:325.02px;font-size:8.6px;color:#d8d8d8;font-weight:normal;letter-spacing:-0.3px;transform:translateX(-50%);transform-origin:0 0;">-4,0</div>
<div class="t" style="left:721.8px;top:325.02px;font-size:8.6px;color:#d8d8d8;font-weight:normal;letter-spacing:-0.3px;transform:translateX(-50%);transform-origin:0 0;">-3,5</div>
<div class="t" style="left:746.5999999999999px;top:325.02px;font-size:8.6px;color:#d8d8d8;font-weight:normal;letter-spacing:-0.3px;transform:translateX(-50%);transform-origin:0 0;">-3,0</div>
<div class="t" style="left:771.4px;top:325.02px;font-size:8.6px;color:#d8d8d8;font-weight:normal;letter-spacing:-0.3px;transform:translateX(-50%);transform-origin:0 0;">-2,5</div>
<div class="t" style="left:796.1999999999999px;top:325.02px;font-size:8.6px;color:#d8d8d8;font-weight:normal;letter-spacing:-0.3px;transform:translateX(-50%);transform-origin:0 0;">-2,0</div>
<div class="t" style="left:821.0px;top:325.02px;font-size:8.6px;color:#d8d8d8;font-weight:normal;letter-spacing:-0.3px;transform:translateX(-50%);transform-origin:0 0;">-1,5</div>
<div class="t" style="left:845.8px;top:325.02px;font-size:8.6px;color:#d8d8d8;font-weight:normal;letter-spacing:-0.3px;transform:translateX(-50%);transform-origin:0 0;">-1,0</div>
<div class="t" style="left:870.6px;top:325.02px;font-size:8.6px;color:#d8d8d8;font-weight:normal;letter-spacing:-0.3px;transform:translateX(-50%);transform-origin:0 0;">-0,5</div>
<div class="t" style="left:895.4px;top:325.02px;font-size:8.6px;color:#d8d8d8;font-weight:normal;letter-spacing:-0.3px;transform:translateX(-50%);transform-origin:0 0;">0,0</div>
<div class="t" style="left:945.0px;top:325.02px;font-size:8.6px;color:#d8d8d8;font-weight:normal;letter-spacing:-0.3px;transform:translateX(-50%);transform-origin:0 0;">1,0</div>
<div class="t" style="left:994.6px;top:325.02px;font-size:8.6px;color:#d8d8d8;font-weight:normal;letter-spacing:-0.3px;transform:translateX(-50%);transform-origin:0 0;">2,0</div>
<div class="t" style="left:1044.2px;top:325.02px;font-size:8.6px;color:#d8d8d8;font-weight:normal;letter-spacing:-0.3px;transform:translateX(-50%);transform-origin:0 0;">3,0</div>
<div class="t" style="left:1093.8px;top:325.02px;font-size:8.6px;color:#d8d8d8;font-weight:normal;letter-spacing:-0.3px;transform:translateX(-50%);transform-origin:0 0;">4,0</div>
<div class="t" style="left:1143.4px;top:325.02px;font-size:8.6px;color:#d8d8d8;font-weight:normal;letter-spacing:-0.3px;transform:translateX(-50%);transform-origin:0 0;">5,0</div>
<div class="t" style="left:878px;top:330.46px;font-size:15.4px;color:#f4f4f4;font-weight:normal;letter-spacing:-0.5px;">adu.accX</div>
<div class="t" style="left:646.6px;top:216.4px;font-size:15.4px;color:#f4f4f4;letter-spacing:-0.4px;transform:translate(-50%,-50%) rotate(-90deg);line-height:15px">ecu.oilPress</div>
<div class="t" style="left:1142.5px;top:99.96px;font-size:15.4px;color:#f8f8f8;font-weight:normal;letter-spacing:0px;transform:scaleX(0.9078);transform-origin:0 0;">ecu.rpm</div>
<div class="t" style="right:18.299999999999955px;top:161.92px;font-size:8.6px;color:#d8d8d8;font-weight:normal;letter-spacing:-0.2px;">6000</div>
<div class="t" style="right:18.299999999999955px;top:212.92px;font-size:8.6px;color:#d8d8d8;font-weight:normal;letter-spacing:-0.2px;">4000</div>
<div class="t" style="right:18.299999999999955px;top:263.92px;font-size:8.6px;color:#d8d8d8;font-weight:normal;letter-spacing:-0.2px;">2000</div>
<div class="t" style="right:18.299999999999955px;top:315.62px;font-size:8.6px;color:#d8d8d8;font-weight:normal;letter-spacing:-0.2px;">0</div>
<svg class="s" style="left:638px;top:378px" width="562" height="253" viewBox="638 378 562 253"><path d="M896.5,454.7 C896.3,453.4 894.7,449.6 895.2,447.2 C895.7,444.8 898.0,442.1 899.5,440 C901.0,437.9 902.0,436.1 904,434.8 C906.0,433.5 910.2,432.7 911.4,432.3" fill="none" stroke="#fde3bd" stroke-width="6.4" stroke-linecap="round" stroke-linejoin="round"/><path d="M911.4,432.3 L974.5,419.9" fill="none" stroke="#e6e6e6" stroke-width="6.4" stroke-linecap="round" stroke-linejoin="round"/><path d="M974.5,419.9 C976.4,420.3 983.0,420.3 985.7,422.4 C988.4,424.5 990.3,428.2 990.7,432.3 C991.1,436.4 990.1,443.7 988.2,447.2 C986.3,450.7 981.0,452.4 979.5,453.4" fill="none" stroke="#fde3bd" stroke-width="6.4" stroke-linecap="round" stroke-linejoin="round"/><path d="M979.5,453.4 L972,453.4" fill="none" stroke="#e6e6e6" stroke-width="6.4" stroke-linecap="round" stroke-linejoin="round"/><path d="M972,453.4 C970.5,453.4 966.0,452.1 963.3,453.4 C960.6,454.6 956.5,457.8 955.9,460.9 C955.3,464.0 958.1,469.6 959.6,472 C961.1,474.4 964.1,474.5 965,475" fill="none" stroke="#a8d4e8" stroke-width="6.4" stroke-linecap="round" stroke-linejoin="round"/><path d="M965,475 L982,484.5" fill="none" stroke="#e6e6e6" stroke-width="6.4" stroke-linecap="round" stroke-linejoin="round"/><path d="M982,484.5 C983.2,484.9 986.5,487.2 989.4,487 C992.3,486.8 997.3,484.9 999.4,483.2 C1001.5,481.5 1001.4,478.0 1001.8,477" fill="none" stroke="#a8d4e8" stroke-width="6.4" stroke-linecap="round" stroke-linejoin="round"/><path d="M1001.8,477 C1002.4,475.8 1003.5,471.2 1005.6,469.6 C1007.7,468.0 1011.2,466.3 1014.3,467.1 C1017.4,467.9 1022.6,473.3 1024.2,474.5" fill="none" stroke="#fde3bd" stroke-width="6.4" stroke-linecap="round" stroke-linejoin="round"/><path d="M1024.2,474.5 L1071.4,539.1" fill="none" stroke="#e6e6e6" stroke-width="6.4" stroke-linecap="round" stroke-linejoin="round"/><path d="M1071.4,539.1 C1071.8,540.8 1074.7,545.5 1073.9,549 C1073.1,552.5 1069.7,559.0 1066.4,560.2 C1063.1,561.5 1056.9,557.5 1054,556.5 C1051.1,555.5 1049.8,554.4 1049,554" fill="none" stroke="#fde3bd" stroke-width="6.4" stroke-linecap="round" stroke-linejoin="round"/><path d="M1049,554 L1029.2,541.6" fill="none" stroke="#e6e6e6" stroke-width="6.4" stroke-linecap="round" stroke-linejoin="round"/><path d="M1029.2,541.6 C1028.4,541.2 1026.3,539.9 1024.2,539.1 C1022.1,538.3 1019.0,536.4 1016.7,536.6 C1014.4,536.8 1011.5,539.8 1010.5,540.4" fill="none" stroke="#a8d4e8" stroke-width="6.4" stroke-linecap="round" stroke-linejoin="round"/><path d="M1010.5,540.4 L1007.5,546" fill="none" stroke="#e6e6e6" stroke-width="6.4" stroke-linecap="round" stroke-linejoin="round"/><path d="M1007.5,546 C1007.0,546.9 1006.1,549.8 1004.3,551.5 C1002.5,553.2 999.2,555.9 996.9,556.5 C994.6,557.1 991.7,555.5 990.7,555.3" fill="none" stroke="#fde3bd" stroke-width="6.4" stroke-linecap="round" stroke-linejoin="round"/><path d="M990.7,555.3 L919.9,529.2" fill="none" stroke="#e6e6e6" stroke-width="6.4" stroke-linecap="round" stroke-linejoin="round"/><path d="M919.9,529.2 C918.2,528.8 912.9,526.3 910,526.7 C907.1,527.1 904.1,530.0 902.5,531.7 C900.9,533.4 900.8,536.1 900.5,537" fill="none" stroke="#a8d4e8" stroke-width="6.4" stroke-linecap="round" stroke-linejoin="round"/><path d="M900.5,537 L899,540.3" fill="none" stroke="#e6e6e6" stroke-width="6.4" stroke-linecap="round" stroke-linejoin="round"/><path d="M899,540.3 C898.2,541.5 897.3,545.2 894,547.7 C890.7,550.2 884.0,554.6 879,555.2 C874.0,555.8 866.7,552.1 864.2,551.5" fill="none" stroke="#ee2020" stroke-width="6.4" stroke-linecap="round" stroke-linejoin="round"/><path d="M864.2,551.5 L776,514.2" fill="none" stroke="#e6e6e6" stroke-width="6.4" stroke-linecap="round" stroke-linejoin="round"/><path d="M776,514.2 C774.0,512.6 765.8,508.4 763.7,504.3 C761.7,500.2 761.9,493.8 763.7,489.4 C765.6,485.0 770.9,480.0 774.8,478.2 C778.7,476.4 785.0,478.4 787,478.5" fill="none" stroke="#fde3bd" stroke-width="6.4" stroke-linecap="round" stroke-linejoin="round"/><path d="M787,478.5 L796,481" fill="none" stroke="#e6e6e6" stroke-width="6.4" stroke-linecap="round" stroke-linejoin="round"/><path d="M796,481 L815.8,485" fill="none" stroke="#a8d4e8" stroke-width="6.4" stroke-linecap="round" stroke-linejoin="round"/><path d="M815.8,485 L889,482.5" fill="none" stroke="#e6e6e6" stroke-width="6.4" stroke-linecap="round" stroke-linejoin="round"/><path d="M889,482.5 C889.8,482.4 891.7,482.9 894,482 C896.3,481.1 901.0,479.5 902.7,477 C904.4,474.5 904.4,469.9 904,467 C903.6,464.1 900.8,460.8 900.2,459.6" fill="none" stroke="#a8d4e8" stroke-width="6.4" stroke-linecap="round" stroke-linejoin="round"/><path d="M900.2,459.6 L896.5,454.7" fill="none" stroke="#e6e6e6" stroke-width="6.4" stroke-linecap="round" stroke-linejoin="round"/><circle cx="899.5" cy="440" r="2.6" fill="#20e020" stroke="#108010" stroke-width="0.6"/></svg>
<div class="b" style="left:0px;top:630.5px;width:1200px;height:13.5px;background:#d4d4d4;"></div>
<div class="b" style="left:0px;top:631.5px;width:68px;height:12.5px;background:#fff;"></div>
<div class="t" style="left:2px;top:634.21px;font-size:9.2px;color:#000;font-weight:bold;letter-spacing:0px;transform:scaleX(0.8081);transform-origin:0 0;">OFFLINE</div>
<div class="b" style="left:70px;top:631.5px;width:68.5px;height:12.5px;background:#fff;"></div>
<div class="t" style="left:72px;top:634.21px;font-size:9.2px;color:#000;font-weight:bold;letter-spacing:0px;transform:scaleX(0.8597);transform-origin:0 0;">NO ADAPTER</div>
<div class="b" style="left:140px;top:631.5px;width:117.5px;height:12.5px;background:#000;"></div>
<div class="t" style="left:142px;top:634.21px;font-size:9.2px;color:#fff;font-weight:bold;letter-spacing:0px;transform:scaleX(0.8537);transform-origin:0 0;">CAN1:</div>
<div class="b" style="left:258.7px;top:631.5px;width:119.5px;height:12.5px;background:#000;"></div>
<div class="t" style="left:260.7px;top:634.21px;font-size:9.2px;color:#fff;font-weight:bold;letter-spacing:0px;transform:scaleX(0.8725);transform-origin:0 0;">CAN2: OK</div>
<div class="b" style="left:379.5px;top:631.5px;width:126px;height:12.5px;background:#000;"></div>
<div class="t" style="left:381.5px;top:634.21px;font-size:9.2px;color:#20d020;font-weight:bold;letter-spacing:0px;transform:scaleX(0.8151);transform-origin:0 0;">USB: Saving</div>
<div class="b" style="left:507px;top:631.5px;width:117.5px;height:12.5px;background:#000;"></div>
<div class="t" style="left:509px;top:634.21px;font-size:9.2px;color:#20d020;font-weight:bold;letter-spacing:0px;transform:scaleX(0.8535);transform-origin:0 0;">GRADE: A (7%)</div>
<div class="b" style="left:626px;top:631.5px;width:45px;height:12.5px;background:#000;"></div>
<div class="t" style="left:628px;top:634.21px;font-size:9.2px;color:#fff;font-weight:bold;letter-spacing:0px;transform:scaleX(1.0438);transform-origin:0 0;">T:</div>
<div class="b" style="left:672.5px;top:631.5px;width:13.5px;height:12.5px;background:#000;"></div>
<div class="t" style="left:674.5px;top:634.21px;font-size:9.2px;color:#fff;font-weight:bold;letter-spacing:0px;transform:scaleX(0.8506);transform-origin:0 0;">SL</div>
<div class="t" style="left:690px;top:634.21px;font-size:9.2px;color:#000;font-weight:bold;letter-spacing:0px;transform:scaleX(0.9011);transform-origin:0 0;">FW:</div>
<div class="b" style="left:688px;top:631.5px;width:1px;height:12.5px;background:#f4f4f4;"></div>
<div class="b" style="left:738px;top:631.5px;width:1px;height:12.5px;background:#f4f4f4;"></div>
<div class="b" style="left:754px;top:631.5px;width:1px;height:12.5px;background:#f4f4f4;"></div>
<div class="b" style="left:1007px;top:631.5px;width:1px;height:12.5px;background:#f4f4f4;"></div>
<div class="b" style="left:1076px;top:631.5px;width:1px;height:12.5px;background:#f4f4f4;"></div>
<div class="b" style="left:1142px;top:631.5px;width:1px;height:12.5px;background:#f4f4f4;"></div>
<div class="t" style="left:1010px;top:634.21px;font-size:9.2px;color:#000;font-weight:bold;letter-spacing:0px;transform:scaleX(0.7912);transform-origin:0 0;">TABLES:</div>
<div class="t" style="left:1079px;top:634.21px;font-size:9.2px;color:#000;font-weight:bold;letter-spacing:0px;transform:scaleX(0.7991);transform-origin:0 0;">NAMES:</div>
<div class="b" style="left:0px;top:617px;width:635px;height:13.5px;background:#f0f0f0;"></div>
<svg class="s" style="left:3px;top:620px" width="8" height="9"><path d="M6 1l-4 3.5 4 3.5" fill="none" stroke="#333" stroke-width="1.2"/></svg>
<svg class="s" style="left:626px;top:620px" width="8" height="9"><path d="M2 1l4 3.5-4 3.5" fill="none" stroke="#333" stroke-width="1.2"/></svg>
<div class="b" style="left:396.5px;top:618.5px;width:12.5px;height:11.5px;background:#a8a8a8;"></div>
</body></html>
